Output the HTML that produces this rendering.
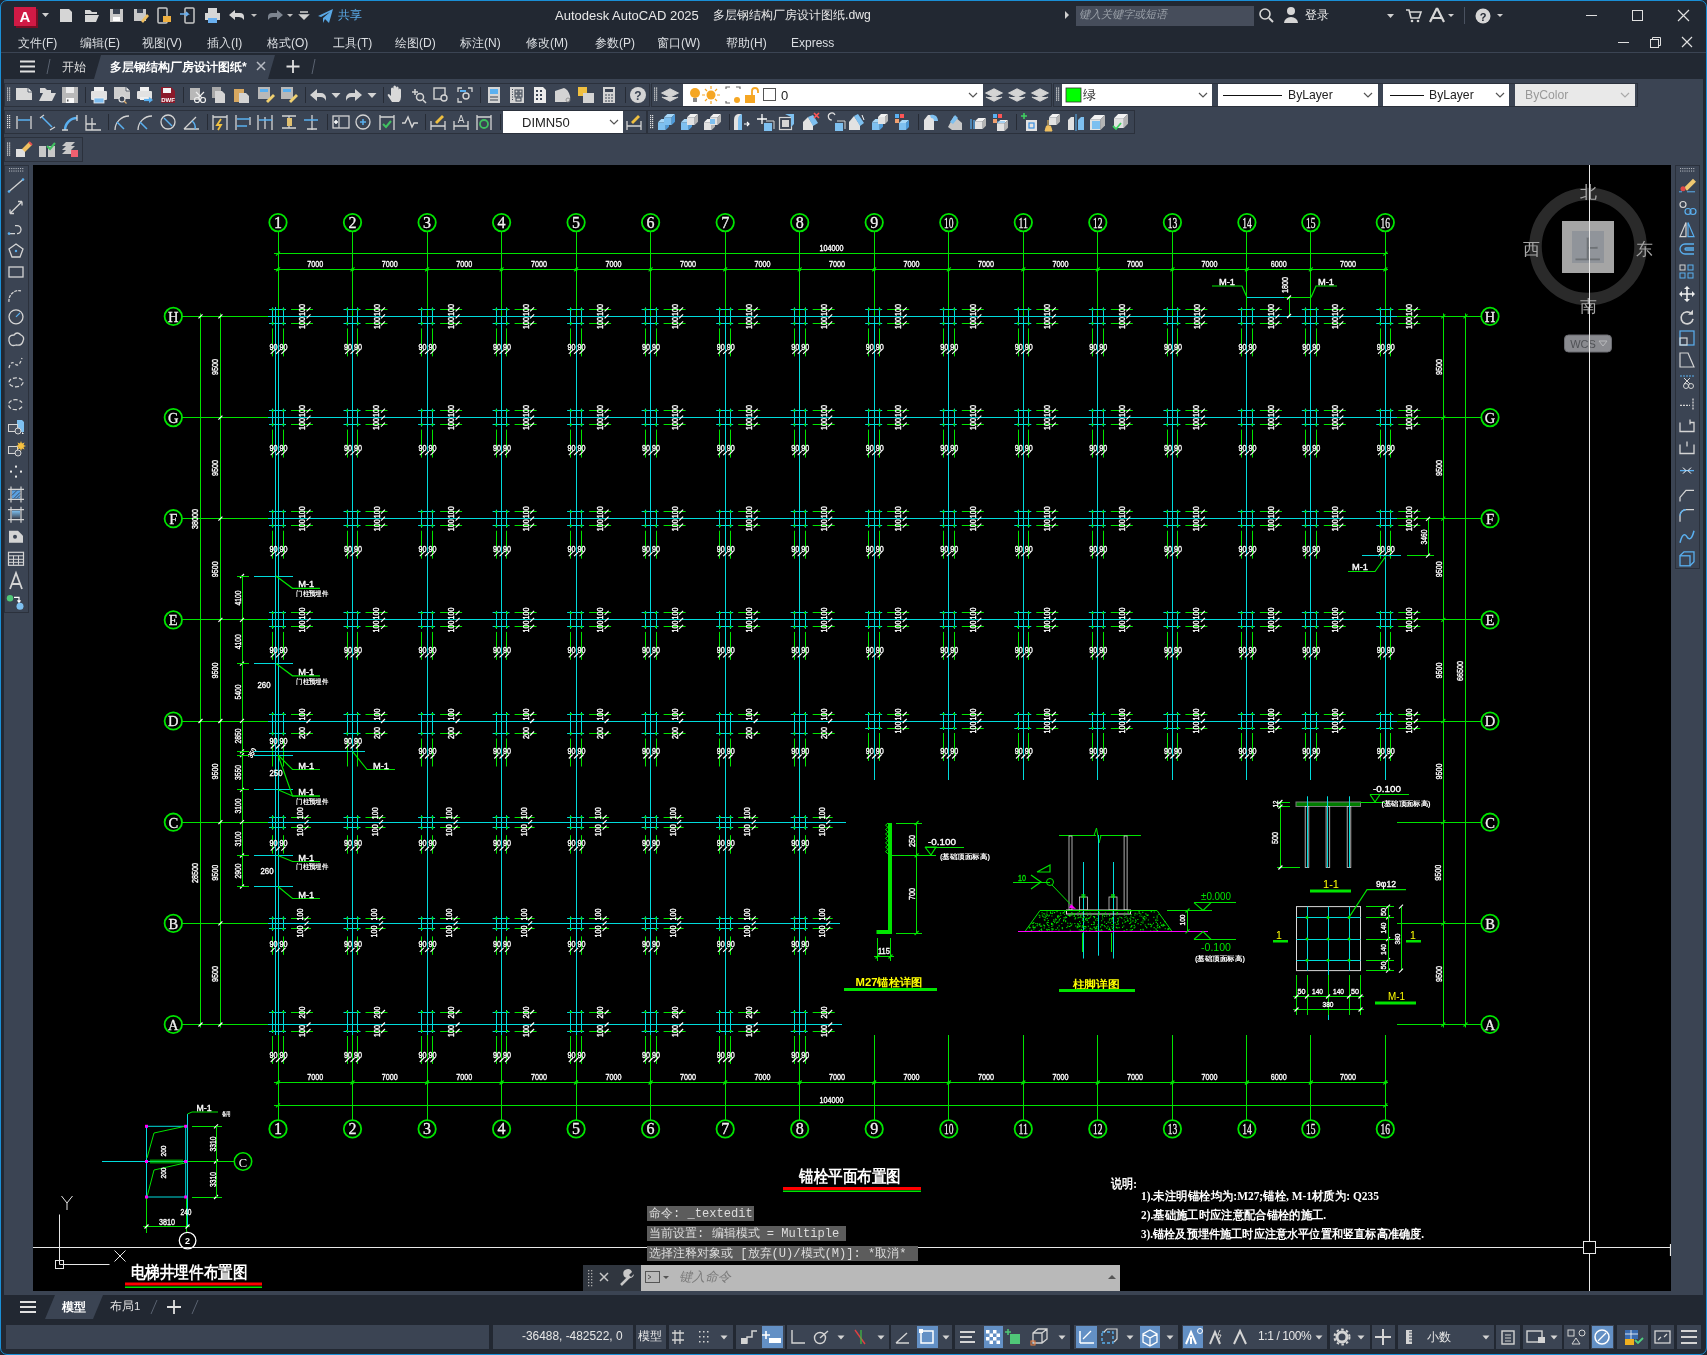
<!DOCTYPE html><html><head><meta charset="utf-8"><style>html,body{margin:0;padding:0;width:1707px;height:1355px;overflow:hidden;background:#222832;font-family:"Liberation Sans",sans-serif;-webkit-font-smoothing:antialiased;} svg{will-change:transform;}</style></head><body><div style="position:relative;width:1707px;height:1355px;overflow:hidden;"><div style="position:absolute;left:0px;top:0px;width:1707px;height:1355px;background:#222832;"></div><svg style="position:absolute;left:12px;top:5px" width="30" height="24" viewBox="0 0 30 24"><rect x="4" y="4" width="22" height="19" fill="#7a0d24"/><rect x="2" y="2" width="22" height="19" fill="#d11a45"/><text x="13" y="17" font-size="15" font-weight="bold" fill="#fff" text-anchor="middle" font-family="Liberation Sans">A</text></svg><svg style="position:absolute;left:40px;top:10px" width="12" height="10" viewBox="0 0 12 10"><path d="M2 3 L9 3 L5.5 7 Z" fill="#d0d0d0"/></svg><svg style="position:absolute;left:0px;top:0px" width="400" height="30" viewBox="0 0 400 30"><path d="M60 9 h9 l3 3 v10 h-12 z" fill="#d6d6d6"/><path d="M85 10 h5 l2 2 h5 v2 h-12 z M85 15 h14 l-3 7 h-11 z" fill="#d6d6d6"/><rect x="110" y="9" width="13" height="13" fill="#c8c8c8"/><rect x="113" y="9" width="7" height="5" fill="#3b4453"/><rect x="113" y="17" width="7" height="4" fill="#fff"/><rect x="134" y="9" width="12" height="12" fill="#c8c8c8"/><rect x="137" y="9" width="6" height="4" fill="#3b4453"/><path d="M141 21 l6 -7 l2 2 l-6 7 z" fill="#f0c060"/><rect x="158" y="8" width="9" height="15" rx="1" fill="none" stroke="#c8c8c8" stroke-width="1.5"/><rect x="163" y="16" width="8" height="6" fill="#f0b040"/><rect x="185" y="8" width="9" height="15" rx="1" fill="none" stroke="#c8c8c8" stroke-width="1.5"/><path d="M180 14 h8 l-2 -2 M188 14 l-2 2" stroke="#6ab0f0" stroke-width="1.5" fill="none"/><rect x="208" y="8" width="9" height="5" fill="#d6d6d6"/><rect x="205" y="13" width="15" height="7" fill="#d6d6d6"/><rect x="208" y="18" width="9" height="5" fill="#6ab0f0"/><path d="M229 15 l6 -5 v3 h5 a4 4 0 0 1 4 4 v3 a6 6 0 0 0 -5 -3 h-4 v3 z" fill="#d6d6d6"/><path d="M251 14 h6 l-3 3 z" fill="#c0c0c0"/><path d="M283 15 l-6 -5 v3 h-5 a4 4 0 0 0 -4 4 v3 a6 6 0 0 1 5 -3 h4 v3 z" fill="#7d8590"/><path d="M287 14 h6 l-3 3 z" fill="#c0c0c0"/><path d="M300 12 h8 M300 15 h8 l-4 4 z" stroke="#d0d0d0" stroke-width="1.5" fill="#d0d0d0"/><path d="M318 16 l15 -7 l-4 14 l-4 -4 l-2 4 v-5 l7 -6 l-9 5 z" fill="#5aa9e6"/></svg><div style="position:absolute;left:338px;top:9px;font-size:12px;line-height:1;color:#5aa9e6;white-space:nowrap;">共享</div><div style="position:absolute;left:555px;top:9px;font-size:13px;line-height:1;color:#e8e8e8;white-space:nowrap;">Autodesk AutoCAD 2025</div><div style="position:absolute;left:713px;top:9px;font-size:12.2px;line-height:1;color:#e8e8e8;white-space:nowrap;">多层钢结构厂房设计图纸.dwg</div><svg style="position:absolute;left:1062px;top:9px" width="10" height="12" viewBox="0 0 10 12"><path d="M3 2 L7 6 L3 10 Z" fill="#d0d0d0"/></svg><div style="position:absolute;left:1076px;top:6px;width:178px;height:20px;background:#464d5b;"></div><div style="position:absolute;left:1079px;top:9px;font-size:11px;line-height:1;color:#9aa0a8;white-space:nowrap;font-style:italic;">键入关键字或短语</div><svg style="position:absolute;left:0px;top:0px" width="1707" height="60" viewBox="0 0 1707 60"><circle cx="1265" cy="14" r="5" fill="none" stroke="#d6d6d6" stroke-width="1.6"/><path d="M1269 18 l4 4" stroke="#d6d6d6" stroke-width="2"/><circle cx="1291" cy="11" r="4" fill="#d6d6d6"/><path d="M1284 23 a7 6 0 0 1 14 0 z" fill="#d6d6d6"/><path d="M1387 14 h7 l-3.5 4 z" fill="#d0d0d0"/><path d="M1406 10 h3 l2 8 h8 l2 -6 h-11" stroke="#d6d6d6" stroke-width="1.6" fill="none"/><circle cx="1412" cy="21" r="1.3" fill="#d6d6d6"/><circle cx="1418" cy="21" r="1.3" fill="#d6d6d6"/><path d="M1437 8 l-7 14 M1437 8 l7 14 M1433 18 h9" stroke="#d6d6d6" stroke-width="2.2" fill="none"/><path d="M1448 14 h6 l-3 3 z" fill="#d0d0d0"/><rect x="1464" y="7" width="1" height="17" fill="#4a5260"/><circle cx="1483" cy="16" r="7.5" fill="#d6d6d6"/><text x="1483" y="20.5" font-size="11" font-weight="bold" text-anchor="middle" fill="#222832" font-family="Liberation Sans">?</text><path d="M1497 14 h6 l-3 3 z" fill="#d0d0d0"/><path d="M1586 15.5 h11" stroke="#e0e0e0" stroke-width="1"/><rect x="1632.5" y="10.5" width="10" height="10" fill="none" stroke="#e0e0e0" stroke-width="1"/><path d="M1678 10 l11 11 M1689 10 l-11 11" stroke="#e0e0e0" stroke-width="1.2"/><path d="M1618 42.5 h11" stroke="#e0e0e0" stroke-width="1"/><rect x="1650.5" y="39.5" width="8" height="8" fill="none" stroke="#e0e0e0" stroke-width="1"/><path d="M1652.5 39.5 v-2 h8 v8 h-2" fill="none" stroke="#e0e0e0" stroke-width="1"/><path d="M1682 37 l10 10 M1692 37 l-10 10" stroke="#e0e0e0" stroke-width="1.2"/></svg><div style="position:absolute;left:1305px;top:9px;font-size:12px;line-height:1;color:#e8e8e8;white-space:nowrap;">登录</div><div style="position:absolute;left:18px;top:36.5px;font-size:12px;line-height:1;color:#dcdfe3;white-space:nowrap;">文件(F)</div><div style="position:absolute;left:80px;top:36.5px;font-size:12px;line-height:1;color:#dcdfe3;white-space:nowrap;">编辑(E)</div><div style="position:absolute;left:142px;top:36.5px;font-size:12px;line-height:1;color:#dcdfe3;white-space:nowrap;">视图(V)</div><div style="position:absolute;left:207px;top:36.5px;font-size:12px;line-height:1;color:#dcdfe3;white-space:nowrap;">插入(I)</div><div style="position:absolute;left:267px;top:36.5px;font-size:12px;line-height:1;color:#dcdfe3;white-space:nowrap;">格式(O)</div><div style="position:absolute;left:333px;top:36.5px;font-size:12px;line-height:1;color:#dcdfe3;white-space:nowrap;">工具(T)</div><div style="position:absolute;left:395px;top:36.5px;font-size:12px;line-height:1;color:#dcdfe3;white-space:nowrap;">绘图(D)</div><div style="position:absolute;left:460px;top:36.5px;font-size:12px;line-height:1;color:#dcdfe3;white-space:nowrap;">标注(N)</div><div style="position:absolute;left:526px;top:36.5px;font-size:12px;line-height:1;color:#dcdfe3;white-space:nowrap;">修改(M)</div><div style="position:absolute;left:595px;top:36.5px;font-size:12px;line-height:1;color:#dcdfe3;white-space:nowrap;">参数(P)</div><div style="position:absolute;left:657px;top:36.5px;font-size:12px;line-height:1;color:#dcdfe3;white-space:nowrap;">窗口(W)</div><div style="position:absolute;left:726px;top:36.5px;font-size:12px;line-height:1;color:#dcdfe3;white-space:nowrap;">帮助(H)</div><div style="position:absolute;left:791px;top:36.5px;font-size:12px;line-height:1;color:#dcdfe3;white-space:nowrap;">Express</div><div style="position:absolute;left:1px;top:52px;width:1705px;height:1px;background:#3b4453;"></div><svg style="position:absolute;left:0px;top:53px" width="400" height="27" viewBox="0 0 400 27"><path d="M20 8.5 h15 M20 13.5 h15 M20 18.5 h15" stroke="#e0e0e0" stroke-width="1.8"/><path d="M50 6 l-3 15" stroke="#5a6270" stroke-width="1"/><path d="M101 2 L275 2 L268 26 L94 26 Z" fill="#3b4453"/><path d="M257 9 l8 8 M265 9 l-8 8" stroke="#b8bcc4" stroke-width="1.5"/><path d="M293 7 v13 M286.5 13.5 h13" stroke="#e0e0e0" stroke-width="1.8"/><path d="M315 6 l-3 15" stroke="#5a6270" stroke-width="1"/></svg><div style="position:absolute;left:62px;top:60.5px;font-size:12px;line-height:1;color:#e0e0e0;white-space:nowrap;">开始</div><div style="position:absolute;left:110px;top:60.5px;font-size:12px;line-height:1;color:#ffffff;white-space:nowrap;font-weight:bold;">多层钢结构厂房设计图纸*</div><div style="position:absolute;left:4px;top:79px;width:1699px;height:86px;background:#3b4453;"></div><div style="position:absolute;left:4px;top:165px;width:29px;height:1130px;background:#3b4453;"></div><div style="position:absolute;left:1671px;top:165px;width:32px;height:1130px;background:#3b4453;"></div><div style="position:absolute;left:4px;top:1291px;width:1699px;height:4px;background:#3b4453;"></div><div style="position:absolute;left:4px;top:83px;width:646px;height:24px;background:#3b4453;border:1px solid #2b313c;box-sizing:border-box;"></div><div style="position:absolute;left:651px;top:83px;width:401px;height:24px;background:#3b4453;border:1px solid #2b313c;box-sizing:border-box;"></div><div style="position:absolute;left:1053px;top:83px;width:585px;height:24px;background:#3b4453;border:1px solid #2b313c;box-sizing:border-box;"></div><div style="position:absolute;left:4px;top:110px;width:643px;height:24px;background:#3b4453;border:1px solid #2b313c;box-sizing:border-box;"></div><div style="position:absolute;left:647px;top:110px;width:488px;height:24px;background:#3b4453;border:1px solid #2b313c;box-sizing:border-box;"></div><div style="position:absolute;left:4px;top:137px;width:79px;height:25px;background:#3b4453;border:1px solid #2b313c;box-sizing:border-box;"></div><svg style="position:absolute;left:0px;top:0px" width="1707" height="170" viewBox="0 0 1707 170"><rect x="7" y="87.5" width="1.2" height="1.2" fill="#e0e0e0"/><rect x="9" y="87.5" width="1.2" height="1.2" fill="#e0e0e0"/><rect x="7" y="89.5" width="1.2" height="1.2" fill="#e0e0e0"/><rect x="9" y="89.5" width="1.2" height="1.2" fill="#e0e0e0"/><rect x="7" y="91.5" width="1.2" height="1.2" fill="#e0e0e0"/><rect x="9" y="91.5" width="1.2" height="1.2" fill="#e0e0e0"/><rect x="7" y="93.5" width="1.2" height="1.2" fill="#e0e0e0"/><rect x="9" y="93.5" width="1.2" height="1.2" fill="#e0e0e0"/><rect x="7" y="95.5" width="1.2" height="1.2" fill="#e0e0e0"/><rect x="9" y="95.5" width="1.2" height="1.2" fill="#e0e0e0"/><rect x="7" y="97.5" width="1.2" height="1.2" fill="#e0e0e0"/><rect x="9" y="97.5" width="1.2" height="1.2" fill="#e0e0e0"/><rect x="7" y="99.5" width="1.2" height="1.2" fill="#e0e0e0"/><rect x="9" y="99.5" width="1.2" height="1.2" fill="#e0e0e0"/><rect x="654" y="87.5" width="1.2" height="1.2" fill="#e0e0e0"/><rect x="656" y="87.5" width="1.2" height="1.2" fill="#e0e0e0"/><rect x="654" y="89.5" width="1.2" height="1.2" fill="#e0e0e0"/><rect x="656" y="89.5" width="1.2" height="1.2" fill="#e0e0e0"/><rect x="654" y="91.5" width="1.2" height="1.2" fill="#e0e0e0"/><rect x="656" y="91.5" width="1.2" height="1.2" fill="#e0e0e0"/><rect x="654" y="93.5" width="1.2" height="1.2" fill="#e0e0e0"/><rect x="656" y="93.5" width="1.2" height="1.2" fill="#e0e0e0"/><rect x="654" y="95.5" width="1.2" height="1.2" fill="#e0e0e0"/><rect x="656" y="95.5" width="1.2" height="1.2" fill="#e0e0e0"/><rect x="654" y="97.5" width="1.2" height="1.2" fill="#e0e0e0"/><rect x="656" y="97.5" width="1.2" height="1.2" fill="#e0e0e0"/><rect x="654" y="99.5" width="1.2" height="1.2" fill="#e0e0e0"/><rect x="656" y="99.5" width="1.2" height="1.2" fill="#e0e0e0"/><rect x="1056" y="87.5" width="1.2" height="1.2" fill="#e0e0e0"/><rect x="1058" y="87.5" width="1.2" height="1.2" fill="#e0e0e0"/><rect x="1056" y="89.5" width="1.2" height="1.2" fill="#e0e0e0"/><rect x="1058" y="89.5" width="1.2" height="1.2" fill="#e0e0e0"/><rect x="1056" y="91.5" width="1.2" height="1.2" fill="#e0e0e0"/><rect x="1058" y="91.5" width="1.2" height="1.2" fill="#e0e0e0"/><rect x="1056" y="93.5" width="1.2" height="1.2" fill="#e0e0e0"/><rect x="1058" y="93.5" width="1.2" height="1.2" fill="#e0e0e0"/><rect x="1056" y="95.5" width="1.2" height="1.2" fill="#e0e0e0"/><rect x="1058" y="95.5" width="1.2" height="1.2" fill="#e0e0e0"/><rect x="1056" y="97.5" width="1.2" height="1.2" fill="#e0e0e0"/><rect x="1058" y="97.5" width="1.2" height="1.2" fill="#e0e0e0"/><rect x="1056" y="99.5" width="1.2" height="1.2" fill="#e0e0e0"/><rect x="1058" y="99.5" width="1.2" height="1.2" fill="#e0e0e0"/><rect x="7" y="115" width="1.2" height="1.2" fill="#e0e0e0"/><rect x="9" y="115" width="1.2" height="1.2" fill="#e0e0e0"/><rect x="7" y="117" width="1.2" height="1.2" fill="#e0e0e0"/><rect x="9" y="117" width="1.2" height="1.2" fill="#e0e0e0"/><rect x="7" y="119" width="1.2" height="1.2" fill="#e0e0e0"/><rect x="9" y="119" width="1.2" height="1.2" fill="#e0e0e0"/><rect x="7" y="121" width="1.2" height="1.2" fill="#e0e0e0"/><rect x="9" y="121" width="1.2" height="1.2" fill="#e0e0e0"/><rect x="7" y="123" width="1.2" height="1.2" fill="#e0e0e0"/><rect x="9" y="123" width="1.2" height="1.2" fill="#e0e0e0"/><rect x="7" y="125" width="1.2" height="1.2" fill="#e0e0e0"/><rect x="9" y="125" width="1.2" height="1.2" fill="#e0e0e0"/><rect x="7" y="127" width="1.2" height="1.2" fill="#e0e0e0"/><rect x="9" y="127" width="1.2" height="1.2" fill="#e0e0e0"/><rect x="650" y="115" width="1.2" height="1.2" fill="#e0e0e0"/><rect x="652" y="115" width="1.2" height="1.2" fill="#e0e0e0"/><rect x="650" y="117" width="1.2" height="1.2" fill="#e0e0e0"/><rect x="652" y="117" width="1.2" height="1.2" fill="#e0e0e0"/><rect x="650" y="119" width="1.2" height="1.2" fill="#e0e0e0"/><rect x="652" y="119" width="1.2" height="1.2" fill="#e0e0e0"/><rect x="650" y="121" width="1.2" height="1.2" fill="#e0e0e0"/><rect x="652" y="121" width="1.2" height="1.2" fill="#e0e0e0"/><rect x="650" y="123" width="1.2" height="1.2" fill="#e0e0e0"/><rect x="652" y="123" width="1.2" height="1.2" fill="#e0e0e0"/><rect x="650" y="125" width="1.2" height="1.2" fill="#e0e0e0"/><rect x="652" y="125" width="1.2" height="1.2" fill="#e0e0e0"/><rect x="650" y="127" width="1.2" height="1.2" fill="#e0e0e0"/><rect x="652" y="127" width="1.2" height="1.2" fill="#e0e0e0"/><rect x="7" y="142.5" width="1.2" height="1.2" fill="#e0e0e0"/><rect x="9" y="142.5" width="1.2" height="1.2" fill="#e0e0e0"/><rect x="7" y="144.5" width="1.2" height="1.2" fill="#e0e0e0"/><rect x="9" y="144.5" width="1.2" height="1.2" fill="#e0e0e0"/><rect x="7" y="146.5" width="1.2" height="1.2" fill="#e0e0e0"/><rect x="9" y="146.5" width="1.2" height="1.2" fill="#e0e0e0"/><rect x="7" y="148.5" width="1.2" height="1.2" fill="#e0e0e0"/><rect x="9" y="148.5" width="1.2" height="1.2" fill="#e0e0e0"/><rect x="7" y="150.5" width="1.2" height="1.2" fill="#e0e0e0"/><rect x="9" y="150.5" width="1.2" height="1.2" fill="#e0e0e0"/><rect x="7" y="152.5" width="1.2" height="1.2" fill="#e0e0e0"/><rect x="9" y="152.5" width="1.2" height="1.2" fill="#e0e0e0"/><rect x="7" y="154.5" width="1.2" height="1.2" fill="#e0e0e0"/><rect x="9" y="154.5" width="1.2" height="1.2" fill="#e0e0e0"/><path d="M16 88 h12 l4 4 v8 h-16 z" fill="#d9d9d9"/><path d="M28 88 v4 h4" fill="#f4f4f4" stroke="#3b4453" stroke-width="0.8"/><path d="M40 88 h5 l2 2 h4 v3 h-11 z" fill="#d9d9d9"/><path d="M43 93 h13 l-4 8 h-13 z" fill="#d9d9d9"/><rect x="62" y="87" width="16" height="16" fill="#b9b9b9"/><rect x="66" y="87" width="8" height="6" fill="#ececec"/><rect x="66" y="98" width="8" height="5" fill="#fafafa"/><rect x="67" y="99.5" width="1.5" height="2" fill="#555"/><rect x="94" y="87" width="10" height="4" fill="#f0f0f0"/><rect x="91" y="91" width="16" height="9" rx="1" fill="#e2e2e2"/><rect x="94" y="98" width="10" height="5" fill="#7dbdf0" stroke="#f0f0f0" stroke-width="0.8"/><path d="M114 87 h12 l4 4 v8 h-16 z" fill="#cfcfcf"/><path d="M126 87 v4 h4" fill="#f4f4f4" stroke="#3b4453" stroke-width="0.8"/><circle cx="122" cy="99" r="3" fill="#3b4453" stroke="#e0e0e0" stroke-width="1.2"/><path d="M124 101 l2.5 2.5" stroke="#e0b070" stroke-width="1.3"/><rect x="140" y="87" width="9" height="4" fill="#f0f0f0"/><rect x="137" y="91" width="15" height="8" rx="1" fill="#e2e2e2"/><rect x="140" y="97" width="8" height="3" fill="#f0f0f0"/><path d="M144 100 h6" stroke="#5ab0f0" stroke-width="2.2"/><path d="M149 97 l4 3 l-4 3 z" fill="#5ab0f0"/><path d="M161 87 h10 l4 4 v12 h-14 z" fill="#8b1a2a"/><rect x="163" y="88" width="8" height="5" fill="#f4f4f4"/><text x="168" y="101.5" font-size="6" font-weight="bold" fill="#fff" text-anchor="middle" font-family="Liberation Sans">DWF</text><rect x="190" y="88" width="10" height="12" fill="#b8b8b8"/><circle cx="197" cy="100" r="2.5" fill="none" stroke="#eee" stroke-width="1.2"/><circle cx="203" cy="100" r="2.5" fill="none" stroke="#eee" stroke-width="1.2"/><path d="M196 92 l6 6 M204 92 l-6 6" stroke="#eee" stroke-width="1.2"/><rect x="212" y="87" width="9" height="11" fill="#a8a8a8"/><path d="M215 91 h7 l3 3 v9 h-10 z" fill="#d4d4d4"/><rect x="234" y="89" width="10" height="13" fill="#d8a860"/><path d="M239 93 h7 l3 3 v7 h-10 z" fill="#d4d4d4"/><rect x="258" y="87" width="12" height="12" fill="#b8b8b8"/><rect x="260" y="89" width="8" height="3" fill="#5ab0f0"/><path d="M266 101 l7 -7 l2 2 l-7 7 z" fill="#f0d070"/><rect x="281" y="87" width="12" height="12" fill="#b8b8b8"/><rect x="283" y="89" width="8" height="3" fill="#5ab0f0"/><path d="M289 101 l7 -7 l2 2 l-7 7 z" fill="#f0d070"/><path d="M310 95 l7 -6 v4 h4 a5 5 0 0 1 5 5 v3 a6 6 0 0 0 -6 -4 h-3 v4 z" fill="#d4d4d4"/><path d="M362 95 l-7 -6 v4 h-4 a5 5 0 0 0 -5 5 v3 a6 6 0 0 1 6 -4 h3 v4 z" fill="#d4d4d4"/><path d="M392 102 l-4 -6 q-1 -2 1 -2 l2 2 v-7 q0 -1.5 1.2 -1.5 q1.2 0 1.2 1.5 v5 v-7 q0 -1.5 1.3 -1.5 q1.3 0 1.3 1.5 v7 v-6 q0 -1.5 1.3 -1.5 q1.3 0 1.3 1.5 v6 v-4 q0 -1.5 1.2 -1.5 q1.2 0 1.2 1.5 v7 q0 3 -2 5 z" fill="#d9d9d9"/><circle cx="420" cy="97" r="3.5" fill="none" stroke="#d4d4d4" stroke-width="1.5"/><path d="M423 100 l3 3 M412 92 h6 M415 89 v6" stroke="#d4d4d4" stroke-width="1.5"/><rect x="434" y="88" width="11" height="11" fill="none" stroke="#d4d4d4" stroke-width="1.4"/><circle cx="444" cy="98" r="3" fill="#3b4453" stroke="#d4d4d4" stroke-width="1.4"/><path d="M458 92 v-4 h4 M468 88 h4 v4 M458 98 v4 h4" stroke="#d4d4d4" stroke-width="1.3" fill="none"/><circle cx="466" cy="96" r="3" fill="none" stroke="#d4d4d4" stroke-width="1.4"/><path d="M460 91 h6" stroke="#5ab0f0" stroke-width="2"/><rect x="488" y="87" width="12" height="16" fill="#d4d4d4"/><rect x="490" y="89" width="8" height="5" fill="#5ab0f0"/><path d="M490 97 h8 M490 100 h8" stroke="#3b4453" stroke-width="1"/><rect x="510" y="87" width="14" height="16" fill="#d4d4d4"/><rect x="515" y="90" width="3" height="3" fill="none" stroke="#3b4453"/><rect x="519" y="90" width="3" height="3" fill="none" stroke="#3b4453"/><rect x="515" y="94" width="3" height="3" fill="none" stroke="#3b4453"/><rect x="519" y="94" width="3" height="3" fill="none" stroke="#3b4453"/><rect x="516" y="98" width="5" height="3" fill="none" stroke="#3b4453"/><path d="M512.5 89 v12" stroke="#3b4453" stroke-dasharray="1 1.5"/><path d="M534 87 h9 l3 3 v13 h-12 z" fill="#ececec"/><path d="M536 91 h2 M540 91 h2 M536 95 h2 M540 95 h2 M536 99 h2 M540 99 h2" stroke="#3b4453" stroke-width="2"/><path d="M555 91 l9 -3 q4 1 6 8 q1 4 -2 6 h-13 z" fill="#d4d4d4"/><circle cx="568" cy="100" r="2" fill="none" stroke="#888" stroke-width="0.8"/><rect x="578" y="87" width="9" height="9" fill="#f0c040"/><rect x="583" y="93" width="11" height="10" fill="#d4d4d4"/><rect x="603" y="87" width="12" height="16" fill="#d4d4d4"/><rect x="605" y="89" width="8" height="3" fill="#3b4453"/><path d="M605 95 h8 M605 98 h8 M605 101 h8" stroke="#3b4453" stroke-width="1" stroke-dasharray="2 1"/><circle cx="638" cy="95" r="8" fill="#d4d4d4"/><text x="638" y="99.5" font-size="12" font-weight="bold" text-anchor="middle" fill="#3b4453" font-family="Liberation Sans">?</text><path d="M662 93 l8 -4 l8 4 l-8 4 z M662 97 l8 4 l8 -4" fill="#d4d4d4" stroke="#d4d4d4" stroke-width="1.2"/><path d="M986 93 l8 -4 l8 4 l-8 4 z M986 97 l8 4 l8 -4" fill="#d4d4d4" stroke="#d4d4d4" stroke-width="1.2"/><path d="M1009 93 l8 -4 l8 4 l-8 4 z M1009 97 l8 4 l8 -4" fill="#d4d4d4" stroke="#d4d4d4" stroke-width="1.2"/><path d="M1032 93 l8 -4 l8 4 l-8 4 z M1032 97 l8 4 l8 -4" fill="#d4d4d4" stroke="#d4d4d4" stroke-width="1.2"/><path d="M331.5 93 h9 l-4.5 5 z" fill="#d4d4d4"/><path d="M367.5 93 h9 l-4.5 5 z" fill="#d4d4d4"/><rect x="85" y="87" width="1" height="16" fill="#262b35"/><rect x="183" y="87" width="1" height="16" fill="#262b35"/><rect x="305" y="87" width="1" height="16" fill="#262b35"/><rect x="383" y="87" width="1" height="16" fill="#262b35"/><rect x="480" y="87" width="1" height="16" fill="#262b35"/><rect x="625" y="87" width="1" height="16" fill="#262b35"/><path d="M17 116 v13 M31 116 v13" stroke="#d4d4d4" stroke-width="1.3"/><path d="M18 120 h12" stroke="#5ab0f0" stroke-width="1.5"/><path d="M40 118 l4 -3 M50 130 l5 -3" stroke="#d4d4d4" stroke-width="1.3"/><path d="M42 117 l10 10" stroke="#5ab0f0" stroke-width="1.5"/><path d="M65 130 a12 12 0 0 1 12 -12" stroke="#5ab0f0" stroke-width="2.5" fill="none"/><path d="M62 130 h6 M77 115 v6" stroke="#d4d4d4" stroke-width="1.3"/><path d="M86 115 v15 h15 M86 124 h10 M92 118 v12" stroke="#d4d4d4" stroke-width="1.3" fill="none"/><path d="M115 130 a14 14 0 0 1 14 -14" stroke="#d4d4d4" stroke-width="1.3" fill="none"/><path d="M117 122 l7 7" stroke="#5ab0f0" stroke-width="1.5"/><path d="M138 130 a14 14 0 0 1 14 -14" stroke="#d4d4d4" stroke-width="1.3" fill="none"/><path d="M140 122 l7 7" stroke="#5ab0f0" stroke-width="1.5"/><circle cx="168" cy="122" r="7" fill="none" stroke="#d4d4d4" stroke-width="1.3"/><path d="M164 118 l8 8" stroke="#5ab0f0" stroke-width="1.5"/><path d="M184 129 h15 M184 129 l12 -12" stroke="#d4d4d4" stroke-width="1.3" fill="none"/><path d="M192 121 a8 8 0 0 1 3 8" stroke="#5ab0f0" stroke-width="1.5" fill="none"/><path d="M213 115 v15 M227 115 v15 M213 117 h14" stroke="#d4d4d4" stroke-width="1.3"/><path d="M221 119 l-4 6 h4 l-3 5" stroke="#f0c040" stroke-width="1.8" fill="none"/><path d="M236 115 v15 M250 117 v8" stroke="#d4d4d4" stroke-width="1.3"/><path d="M237 119 h13 M237 126 h10" stroke="#5ab0f0" stroke-width="1.5"/><path d="M258 115 v15 M265 117 v12 M272 115 v15" stroke="#d4d4d4" stroke-width="1.3"/><path d="M259 120 h13" stroke="#5ab0f0" stroke-width="1.5"/><path d="M282 116 h14 M282 128 h14 M289 116 v12" stroke="#d4d4d4" stroke-width="1.3"/><rect x="287" y="118" width="5" height="8" fill="#e0c070"/><path d="M312 115 v15 M307 129 h10" stroke="#d4d4d4" stroke-width="1.3"/><path d="M304 120 h14" stroke="#5ab0f0" stroke-width="1.5"/><rect x="333" y="116" width="16" height="12" fill="none" stroke="#d4d4d4" stroke-width="1.3"/><path d="M339 117 v11" stroke="#d4d4d4" stroke-width="1.2"/><path d="M334 122 h4 M336 120 v4" stroke="#fff" stroke-width="1.5"/><circle cx="363" cy="122" r="7" fill="none" stroke="#d4d4d4" stroke-width="1.3"/><path d="M360 122 h6 M363 119 v6" stroke="#5ab0f0" stroke-width="1.5"/><path d="M380 115 v15 M394 115 v15 M380 117 h14" stroke="#d4d4d4" stroke-width="1.3"/><path d="M383 124 l3 3 l5 -6" stroke="#40c060" stroke-width="2" fill="none"/><path d="M402 123 h3 l3 -6 l4 10 l2 -4 h4" stroke="#d4d4d4" stroke-width="1.5" fill="none"/><path d="M431 121 v9 M445 121 v9 M431 126 h14" stroke="#d4d4d4" stroke-width="1.3"/><path d="M435 122 l7 -7 l2 2 l-7 7 z" fill="#f0c040"/><path d="M454 121 v9 M468 121 v9 M454 126 h14" stroke="#d4d4d4" stroke-width="1.3"/><text x="461" y="123" font-size="10" text-anchor="middle" fill="#d4d4d4" font-family="Liberation Sans">A</text><path d="M477 115 v15 M491 115 v15 M477 117 h14" stroke="#d4d4d4" stroke-width="1.3"/><circle cx="484" cy="124" r="4" fill="none" stroke="#40c060" stroke-width="1.8"/><path d="M627 121 v9 M641 121 v9 M627 126 h14" stroke="#d4d4d4" stroke-width="1.3"/><path d="M631 122 l7 -7 l2 2 l-7 7 z" fill="#f0c040"/><rect x="108" y="114" width="1" height="16" fill="#262b35"/><rect x="207" y="114" width="1" height="16" fill="#262b35"/><rect x="327" y="114" width="1" height="16" fill="#262b35"/><rect x="425" y="114" width="1" height="16" fill="#262b35"/><rect x="500" y="114" width="1" height="16" fill="#262b35"/><rect x="729" y="114" width="1" height="16" fill="#262b35"/><rect x="918" y="114" width="1" height="16" fill="#262b35"/><rect x="1016" y="114" width="1" height="16" fill="#262b35"/><rect x="658.0" y="122.3" width="7.7" height="7.7" fill="#7ec0f0"/><path d="M658.0 122.3 L661.3 119.0 H669.0 L665.7 122.3 Z" fill="#a8d8f8"/><path d="M665.7 122.3 L669.0 119.0 V126.7 L665.7 130.0 Z" fill="#4e9ad8"/><rect x="664.0" y="117.3" width="7.7" height="7.7" fill="#7ec0f0"/><path d="M664.0 117.3 L667.3 114.0 H675.0 L671.7 117.3 Z" fill="#a8d8f8"/><path d="M671.7 117.3 L675.0 114.0 V121.7 L671.7 125.0 Z" fill="#4e9ad8"/><rect x="681.0" y="122.3" width="7.7" height="7.7" fill="#7ec0f0"/><path d="M681.0 122.3 L684.3 119.0 H692.0 L688.7 122.3 Z" fill="#a8d8f8"/><path d="M688.7 122.3 L692.0 119.0 V126.7 L688.7 130.0 Z" fill="#4e9ad8"/><rect x="687.0" y="117.3" width="7.7" height="7.7" fill="#e2e2e2"/><path d="M687.0 117.3 L690.3 114.0 H698.0 L694.7 117.3 Z" fill="#f2f2f2"/><path d="M694.7 117.3 L698.0 114.0 V121.7 L694.7 125.0 Z" fill="#b4b4b4"/><rect x="704.0" y="122.3" width="7.7" height="7.7" fill="#e2e2e2"/><path d="M704.0 122.3 L707.3 119.0 H715.0 L711.7 122.3 Z" fill="#f2f2f2"/><path d="M711.7 122.3 L715.0 119.0 V126.7 L711.7 130.0 Z" fill="#b4b4b4"/><rect x="710.0" y="117.3" width="7.7" height="7.7" fill="#e2e2e2"/><path d="M710.0 117.3 L713.3 114.0 H721.0 L717.7 117.3 Z" fill="#f2f2f2"/><path d="M717.7 117.3 L721.0 114.0 V121.7 L717.7 125.0 Z" fill="#b4b4b4"/><rect x="710" y="119" width="5" height="5" fill="#7ec0f0"/><path d="M734 130 v-10 q0 -5 4 -6 h3 v16 z" fill="#e2e2e2"/><path d="M738 130 v-10 q0 -5 4 -6 v16 z" fill="#7ec0f0"/><path d="M744 124 h5 M747 122 l2 2 l-2 2" stroke="#fff" stroke-width="1.2" fill="none"/><path d="M762 114 v10 M757 119 h10" stroke="#fff" stroke-width="1.3"/><rect x="764" y="123" width="8" height="8" fill="#7ec0f0"/><path d="M766 121 h8 v8" stroke="#d4d4d4" stroke-width="1" fill="none"/><rect x="779.5" y="117.5" width="12" height="12" fill="none" stroke="#d4d4d4" stroke-width="1.2"/><rect x="782" y="120" width="7" height="7" fill="#d4d4d4"/><path d="M785 114 h9 v10 l-3 3 v-10 z" fill="#7ec0f0"/><path d="M803 130 v-8 l5 -5 l5 8 v5 z" fill="#e2e2e2"/><path d="M808 117 l5 -2 l5 8 l-5 3 z" fill="#7ec0f0"/><path d="M814 113 l5 5 M819 113 l-5 5" stroke="#ff5555" stroke-width="1.6"/><path d="M832 120 a3.5 3.5 0 1 1 3 -5" stroke="#e0e0e0" stroke-width="1.2" fill="none"/><rect x="835" y="123" width="8" height="8" fill="#7ec0f0"/><path d="M837 121 h8 v8" stroke="#d4d4d4" fill="none"/><path d="M849 130 v-8 l5 -6 l6 9 v5 z" fill="#e2e2e2"/><path d="M854 116 l4 -2 l6 9 l-4 3 z" fill="#7ec0f0"/><path d="M864 120 l-2 -5" stroke="#fff" stroke-width="1"/><rect x="872.0" y="122.3" width="7.7" height="7.7" fill="#7ec0f0"/><path d="M872.0 122.3 L875.3 119.0 H883.0 L879.7 122.3 Z" fill="#a8d8f8"/><path d="M879.7 122.3 L883.0 119.0 V126.7 L879.7 130.0 Z" fill="#4e9ad8"/><rect x="878.0" y="117.0" width="7.0" height="7.0" fill="#e2e2e2"/><path d="M878.0 117.0 L881.0 114.0 H888.0 L885.0 117.0 Z" fill="#f2f2f2"/><path d="M885.0 117.0 L888.0 114.0 V121.0 L885.0 124.0 Z" fill="#b4b4b4"/><rect x="895" y="114" width="4" height="4" fill="#5ab0f0"/><rect x="900" y="114" width="4" height="4" fill="#ff5555"/><rect x="895" y="119" width="4" height="4" fill="#f0a070"/><rect x="899.0" y="123.0" width="7.0" height="7.0" fill="#7ec0f0"/><path d="M899.0 123.0 L902.0 120.0 H909.0 L906.0 123.0 Z" fill="#a8d8f8"/><path d="M906.0 123.0 L909.0 120.0 V127.0 L906.0 130.0 Z" fill="#4e9ad8"/><path d="M924 130 v-10 l4 -5 h6 v15 z" fill="#e2e2e2"/><path d="M930 115 a6 6 0 0 1 8 6 l-4 0 a3 3 0 0 0 -3 -3 z" fill="#7ec0f0"/><path d="M948 127 l6 -11 l8 7 v7 h-10 z" fill="#c8c8c8"/><path d="M950 122 l5 -7 l3 3 l-5 6 z" fill="#7ec0f0"/><path d="M971 129 v-10 M974 129 v-9" stroke="#5ab0f0" stroke-width="1.2"/><rect x="975.0" y="121.3" width="7.7" height="7.7" fill="#e2e2e2"/><path d="M975.0 121.3 L978.3 118.0 H986.0 L982.7 121.3 Z" fill="#f2f2f2"/><path d="M982.7 121.3 L986.0 118.0 V125.7 L982.7 129.0 Z" fill="#b4b4b4"/><rect x="993" y="114" width="4" height="4" fill="#5ab0f0"/><rect x="998" y="114" width="4" height="4" fill="#ff5555"/><rect x="993" y="119" width="4" height="4" fill="#f0a070"/><rect x="997.0" y="123.3" width="7.7" height="7.7" fill="#e2e2e2"/><path d="M997.0 123.3 L1000.3 120.0 H1008.0 L1004.7 123.3 Z" fill="#f2f2f2"/><path d="M1004.7 123.3 L1008.0 120.0 V127.7 L1004.7 131.0 Z" fill="#b4b4b4"/><path d="M997 122 h8" stroke="#5ab0f0" stroke-width="1"/><path d="M1024 113 v6 M1021 116 h6" stroke="#40d060" stroke-width="1.6"/><rect x="1026" y="120" width="11" height="11" fill="#e2e2e2"/><rect x="1029" y="123" width="5" height="5" fill="none" stroke="#3a90e0" stroke-width="1.2"/><path d="M1045 131 l1.5 -5 h4 l1.5 5 z M1048 126 v-6" fill="#f0c060" stroke="#f0c060" stroke-width="1"/><rect x="1049.0" y="117.3" width="7.7" height="7.7" fill="#e2e2e2"/><path d="M1049.0 117.3 L1052.3 114.0 H1060.0 L1056.7 117.3 Z" fill="#f2f2f2"/><path d="M1056.7 117.3 L1060.0 114.0 V121.7 L1056.7 125.0 Z" fill="#b4b4b4"/><path d="M1068 130 v-10 l3 -3 h3 v13 z" fill="#e2e2e2"/><path d="M1076 114 v17" stroke="#5ab0f0" stroke-width="1"/><path d="M1078 130 v-10 l3 -3 h3 v13 z" fill="#7ec0f0"/><rect x="1090.0" y="119.5" width="10.5" height="10.5" fill="#e2e2e2"/><path d="M1090.0 119.5 L1094.5 115.0 H1105.0 L1100.5 119.5 Z" fill="#f2f2f2"/><path d="M1100.5 119.5 L1105.0 115.0 V125.5 L1100.5 130.0 Z" fill="#b4b4b4"/><rect x="1092" y="121" width="8" height="8" fill="#7ec0f0"/><rect x="1114.0" y="118.2" width="9.8" height="9.8" fill="#e2e2e2"/><path d="M1114.0 118.2 L1118.2 114.0 H1128.0 L1123.8 118.2 Z" fill="#f2f2f2"/><path d="M1123.8 118.2 L1128.0 114.0 V123.8 L1123.8 128.0 Z" fill="#b4b4b4"/><path d="M1113 126 l3 3 l5 -6" stroke="#40d060" stroke-width="1.8" fill="none"/><rect x="16" y="149" width="9" height="8" fill="#e0e0e0"/><path d="M22 149 l7 -7 l3 3 l-7 7 z" fill="#f0c060"/><path d="M29 142 l3 3" stroke="#e05050" stroke-width="2"/><path d="M39 146 h7 v11 h-7 z M48 146 h7 v11 h-7 z" fill="#c8c8c8"/><path d="M47 146 l3 3 l5 -6" stroke="#40c060" stroke-width="2" fill="none"/><path d="M62 146 l4 -4 h9 l-4 4 z M62 150 l4 -4 h9 l-4 4 z M62 154 l4 -4 h9 l-4 4 z" fill="#c8c8c8"/><rect x="71" y="150" width="7" height="7" fill="#f06070"/></svg><div style="position:absolute;left:683px;top:84px;width:300px;height:22px;background:#fff;box-sizing:border-box;"></div><div style="position:absolute;left:1062px;top:84px;width:150px;height:22px;background:#fff;box-sizing:border-box;"></div><div style="position:absolute;left:1218px;top:84px;width:160px;height:22px;background:#fff;box-sizing:border-box;"></div><div style="position:absolute;left:1383px;top:84px;width:126px;height:22px;background:#fff;box-sizing:border-box;"></div><div style="position:absolute;left:1515px;top:84px;width:120px;height:22px;background:#e9e9e9;"></div><div style="position:absolute;left:503px;top:111px;width:120px;height:22px;background:#fff;box-sizing:border-box;"></div><svg style="position:absolute;left:0px;top:0px" width="1707" height="170" viewBox="0 0 1707 170"><path d="M969 93 l4 4 l4 -4" stroke="#555" stroke-width="1.2" fill="none"/><path d="M1199 93 l4 4 l4 -4" stroke="#555" stroke-width="1.2" fill="none"/><path d="M1364 93 l4 4 l4 -4" stroke="#555" stroke-width="1.2" fill="none"/><path d="M1496 93 l4 4 l4 -4" stroke="#555" stroke-width="1.2" fill="none"/><path d="M1621 93 l4 4 l4 -4" stroke="#aaa" stroke-width="1.2" fill="none"/><path d="M610 120 l4 4 l4 -4" stroke="#555" stroke-width="1.2" fill="none"/><circle cx="695" cy="93" r="5" fill="#f5a623"/><rect x="693" y="98" width="4" height="4" fill="#888"/><circle cx="711" cy="95" r="4.5" fill="#f5a623"/><path d="M711 86 v3 M711 101 v3 M702 95 h3 M717 95 h3 M705 89 l2 2 M715 99 l2 2 M717 89 l-2 2 M705 101 l2 -2" stroke="#f5a623" stroke-width="1.2"/><path d="M726 89 v-2 h4 M736 87 h4 v2 M726 101 v2 h4" stroke="#666" stroke-width="1.2" fill="none"/><circle cx="737" cy="100" r="3" fill="#f5a623"/><rect x="745" y="95" width="10" height="8" fill="#f5a623"/><path d="M752 95 v-4 a3 3 0 0 1 6 0 v2" stroke="#f5a623" stroke-width="1.8" fill="none"/><rect x="763.5" y="88.5" width="12" height="12" fill="#fff" stroke="#555" stroke-width="1"/><rect x="1066" y="88" width="15" height="14" fill="#00ff00" stroke="#333" stroke-width="0.8"/><path d="M1223 95.5 h59" stroke="#111" stroke-width="1"/><path d="M1390 95.5 h34" stroke="#111" stroke-width="1"/></svg><div style="position:absolute;left:781px;top:89px;font-size:13px;line-height:1;color:#222;white-space:nowrap;">0</div><div style="position:absolute;left:1083px;top:88px;font-size:13px;line-height:1;color:#222;white-space:nowrap;">绿</div><div style="position:absolute;left:1288px;top:89px;font-size:12.2px;line-height:1;color:#222;white-space:nowrap;">ByLayer</div><div style="position:absolute;left:1429px;top:89px;font-size:12.2px;line-height:1;color:#222;white-space:nowrap;">ByLayer</div><div style="position:absolute;left:1525px;top:88.5px;font-size:12.2px;line-height:1;color:#999;white-space:nowrap;">ByColor</div><div style="position:absolute;left:522px;top:116px;font-size:13px;line-height:1;color:#222;white-space:nowrap;">DIMN50</div><div style="position:absolute;left:4px;top:165px;width:25px;height:448px;background:#3b4453;border:1px solid #2b313c;box-sizing:border-box;"></div><div style="position:absolute;left:1675px;top:165px;width:25px;height:404px;background:#3b4453;border:1px solid #2b313c;box-sizing:border-box;"></div><svg style="position:absolute;left:0px;top:0px" width="1707" height="620" viewBox="0 0 1707 620"><rect x="9.0" y="168" width="1.1" height="1.1" fill="#aeb3ba"/><rect x="9.0" y="170.5" width="1.1" height="1.1" fill="#aeb3ba"/><rect x="1680.0" y="168" width="1.1" height="1.1" fill="#aeb3ba"/><rect x="1680.0" y="170.5" width="1.1" height="1.1" fill="#aeb3ba"/><rect x="11.2" y="168" width="1.1" height="1.1" fill="#aeb3ba"/><rect x="11.2" y="170.5" width="1.1" height="1.1" fill="#aeb3ba"/><rect x="1682.2" y="168" width="1.1" height="1.1" fill="#aeb3ba"/><rect x="1682.2" y="170.5" width="1.1" height="1.1" fill="#aeb3ba"/><rect x="13.4" y="168" width="1.1" height="1.1" fill="#aeb3ba"/><rect x="13.4" y="170.5" width="1.1" height="1.1" fill="#aeb3ba"/><rect x="1684.4" y="168" width="1.1" height="1.1" fill="#aeb3ba"/><rect x="1684.4" y="170.5" width="1.1" height="1.1" fill="#aeb3ba"/><rect x="15.6" y="168" width="1.1" height="1.1" fill="#aeb3ba"/><rect x="15.6" y="170.5" width="1.1" height="1.1" fill="#aeb3ba"/><rect x="1686.6" y="168" width="1.1" height="1.1" fill="#aeb3ba"/><rect x="1686.6" y="170.5" width="1.1" height="1.1" fill="#aeb3ba"/><rect x="17.8" y="168" width="1.1" height="1.1" fill="#aeb3ba"/><rect x="17.8" y="170.5" width="1.1" height="1.1" fill="#aeb3ba"/><rect x="1688.8" y="168" width="1.1" height="1.1" fill="#aeb3ba"/><rect x="1688.8" y="170.5" width="1.1" height="1.1" fill="#aeb3ba"/><rect x="20.0" y="168" width="1.1" height="1.1" fill="#aeb3ba"/><rect x="20.0" y="170.5" width="1.1" height="1.1" fill="#aeb3ba"/><rect x="1691.0" y="168" width="1.1" height="1.1" fill="#aeb3ba"/><rect x="1691.0" y="170.5" width="1.1" height="1.1" fill="#aeb3ba"/><rect x="22.2" y="168" width="1.1" height="1.1" fill="#aeb3ba"/><rect x="22.2" y="170.5" width="1.1" height="1.1" fill="#aeb3ba"/><rect x="1693.2" y="168" width="1.1" height="1.1" fill="#aeb3ba"/><rect x="1693.2" y="170.5" width="1.1" height="1.1" fill="#aeb3ba"/><path d="M9 191.5 l14 -12" stroke="#d4d4d4" stroke-width="1.3"/><circle cx="9" cy="191.5" r="1.3" fill="#5ab0f0"/><circle cx="23" cy="179.5" r="1.3" fill="#5ab0f0"/><path d="M10 213.5 l12 -12 M10 213.5 h4 M10 213.5 v-4 M22 201.5 h-4 M22 201.5 v4" stroke="#d4d4d4" stroke-width="1.3" fill="none"/><path d="M9 233.6 h6 M17 233.6 a4 4 0 0 0 0 -8 h-2" stroke="#d4d4d4" stroke-width="1.3" fill="none"/><circle cx="9" cy="233.6" r="1.3" fill="#5ab0f0"/><path d="M16 244 l7 5 l-3 8 h-8 l-3 -8 z" stroke="#d4d4d4" stroke-width="1.3" fill="none"/><circle cx="16" cy="251" r="1.2" fill="#5ab0f0"/><rect x="9" y="267" width="14" height="10" stroke="#d4d4d4" stroke-width="1.3" fill="none"/><path d="M9 301.8 a10 10 0 0 1 12 -11" stroke="#d4d4d4" stroke-width="1.3" fill="none" stroke-dasharray="3 1"/><circle cx="16" cy="316.8" r="7" stroke="#d4d4d4" stroke-width="1.3" fill="none"/><path d="M16 316.8 l4 -4" stroke="#5ab0f0" stroke-width="1.2"/><path d="M9 341 q-1 -6 5 -6 q3 -4 7 0 q4 2 2 6 q-1 5 -7 4 q-6 2 -7 -4" stroke="#d4d4d4" stroke-width="1.3" fill="none"/><path d="M9 368 q2 -8 6 -4 q4 4 7 -6" stroke="#d4d4d4" stroke-width="1.3" fill="none" stroke-dasharray="3 2"/><ellipse cx="16" cy="382.3" rx="7" ry="4.5" stroke="#d4d4d4" stroke-width="1.3" fill="none" stroke-dasharray="4 2"/><path d="M22 406.7 a7 5 0 1 1 0 -4" stroke="#d4d4d4" stroke-width="1.3" fill="none" stroke-dasharray="4 2"/><path d="M17 420 h5 l2 2 v10 h-7 z" fill="#7ec0f0"/><rect x="8.5" y="424.5" width="9" height="7" fill="#4a5260" stroke="#d4d4d4" stroke-width="1"/><circle cx="18" cy="431" r="3" fill="#4a5260" stroke="#d4d4d4" stroke-width="1"/><path d="M22 432 l2 2 h-2 z" fill="#fff"/><rect x="8.5" y="446.5" width="9" height="7" fill="#4a5260" stroke="#d4d4d4" stroke-width="1"/><circle cx="18" cy="453" r="3" fill="#4a5260" stroke="#d4d4d4" stroke-width="1"/><path d="M21 441 l1 2.5 l2.5 -1 l-1 2.5 l2.5 1 l-2.5 1 l1 2.5 l-2.5 -1 l-1 2.5 l-1 -2.5 l-2.5 1 l1 -2.5 l-2.5 -1 l2.5 -1 l-1 -2.5 l2.5 1 z" fill="#f5c040"/><rect x="15" y="465.6" width="2" height="2" fill="#e8e8e8"/><rect x="10" y="470.6" width="2" height="2" fill="#e8e8e8"/><rect x="20" y="470.6" width="2" height="2" fill="#e8e8e8"/><rect x="15" y="475.6" width="2" height="2" fill="#e8e8e8"/><path d="M8 489.4 h16 M8 499.4 h16 M11 486.4 v16 M21 486.4 v16" stroke="#d4d4d4" stroke-width="1.2"/><rect x="12" y="490.4" width="8" height="8" fill="#5aa0e0"/><path d="M12 495.4 l5 -5 M14 498.4 l6 -6 M17 498.4 l3 -3" stroke="#3b4453" stroke-width="0.9"/><defs><linearGradient id="gq" x1="0" y1="0" x2="0" y2="1"><stop offset="0" stop-color="#7ec0f0"/><stop offset="1" stop-color="#3b4453"/></linearGradient></defs><path d="M8 509.70000000000005 h16 M8 519.7 h16 M11 506.70000000000005 v16 M21 506.70000000000005 v16" stroke="#d4d4d4" stroke-width="1.2"/><rect x="12" y="510.70000000000005" width="8" height="8" fill="url(#gq)"/><path d="M9 530.8 h9 l5 5 v7 h-14 z" fill="#d4d4d4"/><circle cx="15" cy="536.8" r="2" fill="#3b4453"/><rect x="8.5" y="552.3" width="15" height="13" fill="none" stroke="#d4d4d4" stroke-width="1.2"/><path d="M9 555.8 h14 M9 559.3 h14 M9 562.3 h14 M13.5 555.8 v9 M18.5 555.8 v9" stroke="#d4d4d4" stroke-width="1"/><path d="M10 589 L16 573 L22 589 M12 584 h8" stroke="#d4d4d4" stroke-width="1.8" fill="none"/><circle cx="10" cy="598.3" r="3.2" fill="#50c878"/><path d="M14 597.3 h5 v4 M17.5 600.3 l1.5 2 l1.5 -2" stroke="#fff" stroke-width="1.2" fill="none"/><circle cx="20" cy="606.3" r="3.5" fill="#7ec0f0"/><path d="M1684 187.8 l9 -9 l3 3 l-9 9 z" fill="#f0c870"/><circle cx="1683" cy="188.8" r="2.5" fill="#e04848"/><path d="M1679 191.8 h3 M1687 191.8 h8" stroke="#5ab0f0" stroke-width="1"/><circle cx="1683" cy="204.5" r="3" stroke="#d4d4d4" stroke-width="1.2" fill="none"/><circle cx="1688" cy="211.5" r="3" stroke="#5ab0f0" stroke-width="1.2" fill="none"/><circle cx="1693" cy="211.5" r="3" stroke="#5ab0f0" stroke-width="1.2" fill="none"/><path d="M1686 222.6 v14 h-6 z" stroke="#d4d4d4" stroke-width="1.2" fill="none"/><path d="M1688 222.6 v14 h6 z" stroke="#5ab0f0" stroke-width="1.2" fill="none"/><path d="M1694 244 h-9 a5 5 0 0 0 0 10 h9 M1694 248 h-8 a1 1 0 0 0 0 2 h8" stroke="#5ab0f0" stroke-width="1.3" fill="none"/><rect x="1680" y="265" width="5" height="5" stroke="#d4d4d4" fill="none"/><rect x="1688" y="265" width="5" height="5" stroke="#5ab0f0" fill="none"/><rect x="1680" y="273" width="5" height="5" stroke="#5ab0f0" fill="none"/><rect x="1688" y="273" width="5" height="5" stroke="#5ab0f0" fill="none"/><path d="M1681 294 h12 M1687 288 v12" stroke="#eee" stroke-width="1.6"/><path d="M1679 294 l3 -3 v6 z M1695 294 l-3 -3 v6 z M1687 286 l-3 3 h6 z M1687 302 l-3 -3 h6 z" fill="#eee"/><path d="M1693 318.8 a6 6 0 1 1 -2 -5.5" stroke="#d4d4d4" stroke-width="1.6" fill="none"/><path d="M1693 309.8 v5 h-5 z" fill="#d4d4d4"/><rect x="1680" y="331" width="14" height="14" stroke="#5ab0f0" stroke-width="1.2" fill="none"/><rect x="1680" y="338" width="7" height="7" stroke="#d4d4d4" stroke-width="1.2" fill="none"/><path d="M1680 353 h8 l6 14 h-14 z" stroke="#d4d4d4" stroke-width="1.2" fill="none"/><path d="M1680 376 h14" stroke="#5ab0f0" stroke-dasharray="2 1"/><circle cx="1686" cy="386" r="2.5" stroke="#d4d4d4" fill="none"/><circle cx="1691" cy="386" r="2.5" stroke="#d4d4d4" fill="none"/><path d="M1684 378 l6 6 M1690 378 l-6 6" stroke="#d4d4d4"/><path d="M1680 405.4 h10 M1693 398.4 v12" stroke="#d4d4d4" stroke-width="1.3" stroke-dasharray="2 1"/><path d="M1680 422.5 v9 h14 v-9 h-4 M1690 419.5 v5" stroke="#d4d4d4" stroke-width="1.3" fill="none"/><path d="M1680 444.5 v9 h14 v-9 M1687 441.5 v5" stroke="#d4d4d4" stroke-width="1.3" fill="none"/><path d="M1680 470.6 h14" stroke="#5ab0f0" stroke-width="1.3"/><path d="M1683 467.6 l3 3 l-3 3 M1691 467.6 l-3 3 l3 3" stroke="#fff" fill="none"/><path d="M1680 501.4 v-4 l6 -7 h8" stroke="#d4d4d4" stroke-width="1.3" fill="none"/><path d="M1680 521.7 v-6 a6 6 0 0 1 6 -6 h8" stroke="#d4d4d4" stroke-width="1.3" fill="none"/><path d="M1680 515.7 a6 6 0 0 1 6 -6" stroke="#5ab0f0" stroke-width="1.3" fill="none"/><path d="M1680 542.8 q3 -12 7 -6 q4 6 7 -6" stroke="#5ab0f0" stroke-width="1.5" fill="none"/><rect x="1680" y="555.8" width="10" height="10" stroke="#5ab0f0" stroke-width="1.3" fill="none"/><path d="M1680 555.8 l4 -4 h10 v10 l-4 4" stroke="#5ab0f0" stroke-width="1.3" fill="none"/></svg><div style="position:absolute;left:33px;top:165px;width:1638px;height:1126px;background:#000;"></div><svg style="position:absolute;left:0;top:0" width="1707" height="1355" viewBox="0 0 1707 1355"><defs><clipPath id="cv"><rect x="33" y="165" width="1638" height="1126"/></clipPath></defs><g clip-path="url(#cv)"><path d="M278.5 231.3V316.0" stroke="#00e400" stroke-width="1"/><path d="M278.5 316.0V1035.0" stroke="#00dcdc" stroke-width="1"/><path d="M278.5 1035.0V1120.2" stroke="#00e400" stroke-width="1"/><path d="M352.5 231.3V316.0" stroke="#00e400" stroke-width="1"/><path d="M352.5 316.0V1035.0" stroke="#00dcdc" stroke-width="1"/><path d="M352.5 1035.0V1120.2" stroke="#00e400" stroke-width="1"/><path d="M427.5 231.3V316.0" stroke="#00e400" stroke-width="1"/><path d="M427.5 316.0V1035.0" stroke="#00dcdc" stroke-width="1"/><path d="M427.5 1035.0V1120.2" stroke="#00e400" stroke-width="1"/><path d="M501.5 231.3V316.0" stroke="#00e400" stroke-width="1"/><path d="M501.5 316.0V1035.0" stroke="#00dcdc" stroke-width="1"/><path d="M501.5 1035.0V1120.2" stroke="#00e400" stroke-width="1"/><path d="M576.5 231.3V316.0" stroke="#00e400" stroke-width="1"/><path d="M576.5 316.0V1035.0" stroke="#00dcdc" stroke-width="1"/><path d="M576.5 1035.0V1120.2" stroke="#00e400" stroke-width="1"/><path d="M650.5 231.3V316.0" stroke="#00e400" stroke-width="1"/><path d="M650.5 316.0V1035.0" stroke="#00dcdc" stroke-width="1"/><path d="M650.5 1035.0V1120.2" stroke="#00e400" stroke-width="1"/><path d="M725.5 231.3V316.0" stroke="#00e400" stroke-width="1"/><path d="M725.5 316.0V1035.0" stroke="#00dcdc" stroke-width="1"/><path d="M725.5 1035.0V1120.2" stroke="#00e400" stroke-width="1"/><path d="M799.5 231.3V316.0" stroke="#00e400" stroke-width="1"/><path d="M799.5 316.0V1035.0" stroke="#00dcdc" stroke-width="1"/><path d="M799.5 1035.0V1120.2" stroke="#00e400" stroke-width="1"/><path d="M874.5 231.3V316.0" stroke="#00e400" stroke-width="1"/><path d="M874.5 316.0V780.0" stroke="#00dcdc" stroke-width="1"/><path d="M874.5 1035.0V1120.2" stroke="#00e400" stroke-width="1"/><path d="M948.5 231.3V316.0" stroke="#00e400" stroke-width="1"/><path d="M948.5 316.0V780.0" stroke="#00dcdc" stroke-width="1"/><path d="M948.5 1035.0V1120.2" stroke="#00e400" stroke-width="1"/><path d="M1023.5 231.3V316.0" stroke="#00e400" stroke-width="1"/><path d="M1023.5 316.0V780.0" stroke="#00dcdc" stroke-width="1"/><path d="M1023.5 1035.0V1120.2" stroke="#00e400" stroke-width="1"/><path d="M1097.5 231.3V316.0" stroke="#00e400" stroke-width="1"/><path d="M1097.5 316.0V780.0" stroke="#00dcdc" stroke-width="1"/><path d="M1097.5 1035.0V1120.2" stroke="#00e400" stroke-width="1"/><path d="M1172.5 231.3V316.0" stroke="#00e400" stroke-width="1"/><path d="M1172.5 316.0V780.0" stroke="#00dcdc" stroke-width="1"/><path d="M1172.5 1035.0V1120.2" stroke="#00e400" stroke-width="1"/><path d="M1246.5 231.3V316.0" stroke="#00e400" stroke-width="1"/><path d="M1246.5 316.0V780.0" stroke="#00dcdc" stroke-width="1"/><path d="M1246.5 1035.0V1120.2" stroke="#00e400" stroke-width="1"/><path d="M1310.5 231.3V316.0" stroke="#00e400" stroke-width="1"/><path d="M1310.5 316.0V780.0" stroke="#00dcdc" stroke-width="1"/><path d="M1310.5 1035.0V1120.2" stroke="#00e400" stroke-width="1"/><path d="M1385.5 231.3V316.0" stroke="#00e400" stroke-width="1"/><path d="M1385.5 316.0V780.0" stroke="#00dcdc" stroke-width="1"/><path d="M1385.5 1035.0V1120.2" stroke="#00e400" stroke-width="1"/><path d="M275.5 307.0V1035.0" stroke="#00dcdc" stroke-width="1"/><path d="M182.0 316.5H268.0" stroke="#00e400" stroke-width="1"/><path d="M268.0 316.5H1397.0" stroke="#00dcdc" stroke-width="1"/><path d="M1397.0 316.5H1481.0" stroke="#00e400" stroke-width="1"/><path d="M182.0 417.5H268.0" stroke="#00e400" stroke-width="1"/><path d="M268.0 417.5H1397.0" stroke="#00dcdc" stroke-width="1"/><path d="M1397.0 417.5H1481.0" stroke="#00e400" stroke-width="1"/><path d="M182.0 518.5H268.0" stroke="#00e400" stroke-width="1"/><path d="M268.0 518.5H1397.0" stroke="#00dcdc" stroke-width="1"/><path d="M1397.0 518.5H1481.0" stroke="#00e400" stroke-width="1"/><path d="M182.0 619.5H268.0" stroke="#00e400" stroke-width="1"/><path d="M268.0 619.5H1397.0" stroke="#00dcdc" stroke-width="1"/><path d="M1397.0 619.5H1481.0" stroke="#00e400" stroke-width="1"/><path d="M182.0 721.5H268.0" stroke="#00e400" stroke-width="1"/><path d="M268.0 721.5H1397.0" stroke="#00dcdc" stroke-width="1"/><path d="M1397.0 721.5H1481.0" stroke="#00e400" stroke-width="1"/><path d="M182.0 822.5H268.0" stroke="#00e400" stroke-width="1"/><path d="M268.0 822.5H846.0" stroke="#00dcdc" stroke-width="1"/><path d="M1397.0 822.5H1481.0" stroke="#00e400" stroke-width="1"/><path d="M182.0 923.5H268.0" stroke="#00e400" stroke-width="1"/><path d="M268.0 923.5H840.0" stroke="#00dcdc" stroke-width="1"/><path d="M1397.0 923.5H1481.0" stroke="#00e400" stroke-width="1"/><path d="M182.0 1024.5H268.0" stroke="#00e400" stroke-width="1"/><path d="M268.0 1024.5H842.0" stroke="#00dcdc" stroke-width="1"/><path d="M1397.0 1024.5H1481.0" stroke="#00e400" stroke-width="1"/><circle cx="278.0" cy="222.6" r="8.7" stroke="#00e400" stroke-width="1.8" fill="none"/><text x="278.0" y="227.9" font-size="16" fill="#f0f0f0" stroke="#f0f0f0" stroke-width="0.3" text-anchor="middle" font-family="Liberation Serif">1</text><circle cx="278.0" cy="1128.9" r="8.7" stroke="#00e400" stroke-width="1.8" fill="none"/><text x="278.0" y="1134.2" font-size="16" fill="#f0f0f0" stroke="#f0f0f0" stroke-width="0.3" text-anchor="middle" font-family="Liberation Serif">1</text><circle cx="352.5" cy="222.6" r="8.7" stroke="#00e400" stroke-width="1.8" fill="none"/><text x="352.5" y="227.9" font-size="16" fill="#f0f0f0" stroke="#f0f0f0" stroke-width="0.3" text-anchor="middle" font-family="Liberation Serif">2</text><circle cx="352.5" cy="1128.9" r="8.7" stroke="#00e400" stroke-width="1.8" fill="none"/><text x="352.5" y="1134.2" font-size="16" fill="#f0f0f0" stroke="#f0f0f0" stroke-width="0.3" text-anchor="middle" font-family="Liberation Serif">2</text><circle cx="427.1" cy="222.6" r="8.7" stroke="#00e400" stroke-width="1.8" fill="none"/><text x="427.1" y="227.9" font-size="16" fill="#f0f0f0" stroke="#f0f0f0" stroke-width="0.3" text-anchor="middle" font-family="Liberation Serif">3</text><circle cx="427.1" cy="1128.9" r="8.7" stroke="#00e400" stroke-width="1.8" fill="none"/><text x="427.1" y="1134.2" font-size="16" fill="#f0f0f0" stroke="#f0f0f0" stroke-width="0.3" text-anchor="middle" font-family="Liberation Serif">3</text><circle cx="501.6" cy="222.6" r="8.7" stroke="#00e400" stroke-width="1.8" fill="none"/><text x="501.6" y="227.9" font-size="16" fill="#f0f0f0" stroke="#f0f0f0" stroke-width="0.3" text-anchor="middle" font-family="Liberation Serif">4</text><circle cx="501.6" cy="1128.9" r="8.7" stroke="#00e400" stroke-width="1.8" fill="none"/><text x="501.6" y="1134.2" font-size="16" fill="#f0f0f0" stroke="#f0f0f0" stroke-width="0.3" text-anchor="middle" font-family="Liberation Serif">4</text><circle cx="576.1" cy="222.6" r="8.7" stroke="#00e400" stroke-width="1.8" fill="none"/><text x="576.1" y="227.9" font-size="16" fill="#f0f0f0" stroke="#f0f0f0" stroke-width="0.3" text-anchor="middle" font-family="Liberation Serif">5</text><circle cx="576.1" cy="1128.9" r="8.7" stroke="#00e400" stroke-width="1.8" fill="none"/><text x="576.1" y="1134.2" font-size="16" fill="#f0f0f0" stroke="#f0f0f0" stroke-width="0.3" text-anchor="middle" font-family="Liberation Serif">5</text><circle cx="650.6" cy="222.6" r="8.7" stroke="#00e400" stroke-width="1.8" fill="none"/><text x="650.6" y="227.9" font-size="16" fill="#f0f0f0" stroke="#f0f0f0" stroke-width="0.3" text-anchor="middle" font-family="Liberation Serif">6</text><circle cx="650.6" cy="1128.9" r="8.7" stroke="#00e400" stroke-width="1.8" fill="none"/><text x="650.6" y="1134.2" font-size="16" fill="#f0f0f0" stroke="#f0f0f0" stroke-width="0.3" text-anchor="middle" font-family="Liberation Serif">6</text><circle cx="725.2" cy="222.6" r="8.7" stroke="#00e400" stroke-width="1.8" fill="none"/><text x="725.2" y="227.9" font-size="16" fill="#f0f0f0" stroke="#f0f0f0" stroke-width="0.3" text-anchor="middle" font-family="Liberation Serif">7</text><circle cx="725.2" cy="1128.9" r="8.7" stroke="#00e400" stroke-width="1.8" fill="none"/><text x="725.2" y="1134.2" font-size="16" fill="#f0f0f0" stroke="#f0f0f0" stroke-width="0.3" text-anchor="middle" font-family="Liberation Serif">7</text><circle cx="799.7" cy="222.6" r="8.7" stroke="#00e400" stroke-width="1.8" fill="none"/><text x="799.7" y="227.9" font-size="16" fill="#f0f0f0" stroke="#f0f0f0" stroke-width="0.3" text-anchor="middle" font-family="Liberation Serif">8</text><circle cx="799.7" cy="1128.9" r="8.7" stroke="#00e400" stroke-width="1.8" fill="none"/><text x="799.7" y="1134.2" font-size="16" fill="#f0f0f0" stroke="#f0f0f0" stroke-width="0.3" text-anchor="middle" font-family="Liberation Serif">8</text><circle cx="874.2" cy="222.6" r="8.7" stroke="#00e400" stroke-width="1.8" fill="none"/><text x="874.2" y="227.9" font-size="16" fill="#f0f0f0" stroke="#f0f0f0" stroke-width="0.3" text-anchor="middle" font-family="Liberation Serif">9</text><circle cx="874.2" cy="1128.9" r="8.7" stroke="#00e400" stroke-width="1.8" fill="none"/><text x="874.2" y="1134.2" font-size="16" fill="#f0f0f0" stroke="#f0f0f0" stroke-width="0.3" text-anchor="middle" font-family="Liberation Serif">9</text><circle cx="948.8" cy="222.6" r="8.7" stroke="#00e400" stroke-width="1.8" fill="none"/><text x="948.8" y="227.9" font-size="15" fill="#f0f0f0" stroke="#f0f0f0" stroke-width="0.3" text-anchor="middle" font-family="Liberation Serif" textLength="9.5" lengthAdjust="spacingAndGlyphs">10</text><circle cx="948.8" cy="1128.9" r="8.7" stroke="#00e400" stroke-width="1.8" fill="none"/><text x="948.8" y="1134.2" font-size="15" fill="#f0f0f0" stroke="#f0f0f0" stroke-width="0.3" text-anchor="middle" font-family="Liberation Serif" textLength="9.5" lengthAdjust="spacingAndGlyphs">10</text><circle cx="1023.3" cy="222.6" r="8.7" stroke="#00e400" stroke-width="1.8" fill="none"/><text x="1023.3" y="227.9" font-size="15" fill="#f0f0f0" stroke="#f0f0f0" stroke-width="0.3" text-anchor="middle" font-family="Liberation Serif" textLength="9.5" lengthAdjust="spacingAndGlyphs">11</text><circle cx="1023.3" cy="1128.9" r="8.7" stroke="#00e400" stroke-width="1.8" fill="none"/><text x="1023.3" y="1134.2" font-size="15" fill="#f0f0f0" stroke="#f0f0f0" stroke-width="0.3" text-anchor="middle" font-family="Liberation Serif" textLength="9.5" lengthAdjust="spacingAndGlyphs">11</text><circle cx="1097.8" cy="222.6" r="8.7" stroke="#00e400" stroke-width="1.8" fill="none"/><text x="1097.8" y="227.9" font-size="15" fill="#f0f0f0" stroke="#f0f0f0" stroke-width="0.3" text-anchor="middle" font-family="Liberation Serif" textLength="9.5" lengthAdjust="spacingAndGlyphs">12</text><circle cx="1097.8" cy="1128.9" r="8.7" stroke="#00e400" stroke-width="1.8" fill="none"/><text x="1097.8" y="1134.2" font-size="15" fill="#f0f0f0" stroke="#f0f0f0" stroke-width="0.3" text-anchor="middle" font-family="Liberation Serif" textLength="9.5" lengthAdjust="spacingAndGlyphs">12</text><circle cx="1172.4" cy="222.6" r="8.7" stroke="#00e400" stroke-width="1.8" fill="none"/><text x="1172.4" y="227.9" font-size="15" fill="#f0f0f0" stroke="#f0f0f0" stroke-width="0.3" text-anchor="middle" font-family="Liberation Serif" textLength="9.5" lengthAdjust="spacingAndGlyphs">13</text><circle cx="1172.4" cy="1128.9" r="8.7" stroke="#00e400" stroke-width="1.8" fill="none"/><text x="1172.4" y="1134.2" font-size="15" fill="#f0f0f0" stroke="#f0f0f0" stroke-width="0.3" text-anchor="middle" font-family="Liberation Serif" textLength="9.5" lengthAdjust="spacingAndGlyphs">13</text><circle cx="1246.9" cy="222.6" r="8.7" stroke="#00e400" stroke-width="1.8" fill="none"/><text x="1246.9" y="227.9" font-size="15" fill="#f0f0f0" stroke="#f0f0f0" stroke-width="0.3" text-anchor="middle" font-family="Liberation Serif" textLength="9.5" lengthAdjust="spacingAndGlyphs">14</text><circle cx="1246.9" cy="1128.9" r="8.7" stroke="#00e400" stroke-width="1.8" fill="none"/><text x="1246.9" y="1134.2" font-size="15" fill="#f0f0f0" stroke="#f0f0f0" stroke-width="0.3" text-anchor="middle" font-family="Liberation Serif" textLength="9.5" lengthAdjust="spacingAndGlyphs">14</text><circle cx="1310.8" cy="222.6" r="8.7" stroke="#00e400" stroke-width="1.8" fill="none"/><text x="1310.8" y="227.9" font-size="15" fill="#f0f0f0" stroke="#f0f0f0" stroke-width="0.3" text-anchor="middle" font-family="Liberation Serif" textLength="9.5" lengthAdjust="spacingAndGlyphs">15</text><circle cx="1310.8" cy="1128.9" r="8.7" stroke="#00e400" stroke-width="1.8" fill="none"/><text x="1310.8" y="1134.2" font-size="15" fill="#f0f0f0" stroke="#f0f0f0" stroke-width="0.3" text-anchor="middle" font-family="Liberation Serif" textLength="9.5" lengthAdjust="spacingAndGlyphs">15</text><circle cx="1385.3" cy="222.6" r="8.7" stroke="#00e400" stroke-width="1.8" fill="none"/><text x="1385.3" y="227.9" font-size="15" fill="#f0f0f0" stroke="#f0f0f0" stroke-width="0.3" text-anchor="middle" font-family="Liberation Serif" textLength="9.5" lengthAdjust="spacingAndGlyphs">16</text><circle cx="1385.3" cy="1128.9" r="8.7" stroke="#00e400" stroke-width="1.8" fill="none"/><text x="1385.3" y="1134.2" font-size="15" fill="#f0f0f0" stroke="#f0f0f0" stroke-width="0.3" text-anchor="middle" font-family="Liberation Serif" textLength="9.5" lengthAdjust="spacingAndGlyphs">16</text><circle cx="173.3" cy="316.4" r="8.7" stroke="#00e400" stroke-width="1.8" fill="none"/><text x="173.3" y="321.7" font-size="14.5" fill="#f0f0f0" stroke="#f0f0f0" stroke-width="0.3" text-anchor="middle" font-family="Liberation Serif">H</text><circle cx="1490.0" cy="316.4" r="8.7" stroke="#00e400" stroke-width="1.8" fill="none"/><text x="1490.0" y="321.7" font-size="14.5" fill="#f0f0f0" stroke="#f0f0f0" stroke-width="0.3" text-anchor="middle" font-family="Liberation Serif">H</text><circle cx="173.3" cy="417.6" r="8.7" stroke="#00e400" stroke-width="1.8" fill="none"/><text x="173.3" y="422.9" font-size="14.5" fill="#f0f0f0" stroke="#f0f0f0" stroke-width="0.3" text-anchor="middle" font-family="Liberation Serif">G</text><circle cx="1490.0" cy="417.6" r="8.7" stroke="#00e400" stroke-width="1.8" fill="none"/><text x="1490.0" y="422.9" font-size="14.5" fill="#f0f0f0" stroke="#f0f0f0" stroke-width="0.3" text-anchor="middle" font-family="Liberation Serif">G</text><circle cx="173.3" cy="518.7" r="8.7" stroke="#00e400" stroke-width="1.8" fill="none"/><text x="173.3" y="524.0" font-size="14.5" fill="#f0f0f0" stroke="#f0f0f0" stroke-width="0.3" text-anchor="middle" font-family="Liberation Serif">F</text><circle cx="1490.0" cy="518.7" r="8.7" stroke="#00e400" stroke-width="1.8" fill="none"/><text x="1490.0" y="524.0" font-size="14.5" fill="#f0f0f0" stroke="#f0f0f0" stroke-width="0.3" text-anchor="middle" font-family="Liberation Serif">F</text><circle cx="173.3" cy="619.9" r="8.7" stroke="#00e400" stroke-width="1.8" fill="none"/><text x="173.3" y="625.2" font-size="14.5" fill="#f0f0f0" stroke="#f0f0f0" stroke-width="0.3" text-anchor="middle" font-family="Liberation Serif">E</text><circle cx="1490.0" cy="619.9" r="8.7" stroke="#00e400" stroke-width="1.8" fill="none"/><text x="1490.0" y="625.2" font-size="14.5" fill="#f0f0f0" stroke="#f0f0f0" stroke-width="0.3" text-anchor="middle" font-family="Liberation Serif">E</text><circle cx="173.3" cy="721.0" r="8.7" stroke="#00e400" stroke-width="1.8" fill="none"/><text x="173.3" y="726.3" font-size="14.5" fill="#f0f0f0" stroke="#f0f0f0" stroke-width="0.3" text-anchor="middle" font-family="Liberation Serif">D</text><circle cx="1490.0" cy="721.0" r="8.7" stroke="#00e400" stroke-width="1.8" fill="none"/><text x="1490.0" y="726.3" font-size="14.5" fill="#f0f0f0" stroke="#f0f0f0" stroke-width="0.3" text-anchor="middle" font-family="Liberation Serif">D</text><circle cx="173.3" cy="822.2" r="8.7" stroke="#00e400" stroke-width="1.8" fill="none"/><text x="173.3" y="827.5" font-size="14.5" fill="#f0f0f0" stroke="#f0f0f0" stroke-width="0.3" text-anchor="middle" font-family="Liberation Serif">C</text><circle cx="1490.0" cy="822.2" r="8.7" stroke="#00e400" stroke-width="1.8" fill="none"/><text x="1490.0" y="827.5" font-size="14.5" fill="#f0f0f0" stroke="#f0f0f0" stroke-width="0.3" text-anchor="middle" font-family="Liberation Serif">C</text><circle cx="173.3" cy="923.4" r="8.7" stroke="#00e400" stroke-width="1.8" fill="none"/><text x="173.3" y="928.7" font-size="14.5" fill="#f0f0f0" stroke="#f0f0f0" stroke-width="0.3" text-anchor="middle" font-family="Liberation Serif">B</text><circle cx="1490.0" cy="923.4" r="8.7" stroke="#00e400" stroke-width="1.8" fill="none"/><text x="1490.0" y="928.7" font-size="14.5" fill="#f0f0f0" stroke="#f0f0f0" stroke-width="0.3" text-anchor="middle" font-family="Liberation Serif">B</text><circle cx="173.3" cy="1024.5" r="8.7" stroke="#00e400" stroke-width="1.8" fill="none"/><text x="173.3" y="1029.8" font-size="14.5" fill="#f0f0f0" stroke="#f0f0f0" stroke-width="0.3" text-anchor="middle" font-family="Liberation Serif">A</text><circle cx="1490.0" cy="1024.5" r="8.7" stroke="#00e400" stroke-width="1.8" fill="none"/><text x="1490.0" y="1029.8" font-size="14.5" fill="#f0f0f0" stroke="#f0f0f0" stroke-width="0.3" text-anchor="middle" font-family="Liberation Serif">A</text><path d="M274.0 269.5H1388.0" stroke="#00e400" stroke-width="1"/><path d="M274.0 253.5H1388.0" stroke="#00e400" stroke-width="1"/><path d="M276.0 271.3L280.0 267.3" stroke="#00e400" stroke-width="1.1"/><circle cx="278.0" cy="269.5" r="1.6" fill="#00e400"/><path d="M350.5 271.3L354.5 267.3" stroke="#00e400" stroke-width="1.1"/><circle cx="352.5" cy="269.5" r="1.6" fill="#00e400"/><path d="M425.1 271.3L429.1 267.3" stroke="#00e400" stroke-width="1.1"/><circle cx="427.1" cy="269.5" r="1.6" fill="#00e400"/><path d="M499.6 271.3L503.6 267.3" stroke="#00e400" stroke-width="1.1"/><circle cx="501.6" cy="269.5" r="1.6" fill="#00e400"/><path d="M574.1 271.3L578.1 267.3" stroke="#00e400" stroke-width="1.1"/><circle cx="576.1" cy="269.5" r="1.6" fill="#00e400"/><path d="M648.6 271.3L652.6 267.3" stroke="#00e400" stroke-width="1.1"/><circle cx="650.6" cy="269.5" r="1.6" fill="#00e400"/><path d="M723.2 271.3L727.2 267.3" stroke="#00e400" stroke-width="1.1"/><circle cx="725.2" cy="269.5" r="1.6" fill="#00e400"/><path d="M797.7 271.3L801.7 267.3" stroke="#00e400" stroke-width="1.1"/><circle cx="799.7" cy="269.5" r="1.6" fill="#00e400"/><path d="M872.2 271.3L876.2 267.3" stroke="#00e400" stroke-width="1.1"/><circle cx="874.2" cy="269.5" r="1.6" fill="#00e400"/><path d="M946.8 271.3L950.8 267.3" stroke="#00e400" stroke-width="1.1"/><circle cx="948.8" cy="269.5" r="1.6" fill="#00e400"/><path d="M1021.3 271.3L1025.3 267.3" stroke="#00e400" stroke-width="1.1"/><circle cx="1023.3" cy="269.5" r="1.6" fill="#00e400"/><path d="M1095.8 271.3L1099.8 267.3" stroke="#00e400" stroke-width="1.1"/><circle cx="1097.8" cy="269.5" r="1.6" fill="#00e400"/><path d="M1170.4 271.3L1174.4 267.3" stroke="#00e400" stroke-width="1.1"/><circle cx="1172.4" cy="269.5" r="1.6" fill="#00e400"/><path d="M1244.9 271.3L1248.9 267.3" stroke="#00e400" stroke-width="1.1"/><circle cx="1246.9" cy="269.5" r="1.6" fill="#00e400"/><path d="M1308.8 271.3L1312.8 267.3" stroke="#00e400" stroke-width="1.1"/><circle cx="1310.8" cy="269.5" r="1.6" fill="#00e400"/><path d="M1383.3 271.3L1387.3 267.3" stroke="#00e400" stroke-width="1.1"/><circle cx="1385.3" cy="269.5" r="1.6" fill="#00e400"/><path d="M276.0 255.6L280.0 251.6" stroke="#00e400" stroke-width="1.1"/><path d="M1383.3 255.6L1387.3 251.6" stroke="#00e400" stroke-width="1.1"/><text x="315.3" y="266.7" font-size="8.5" fill="#ffffff" text-anchor="middle" font-family="Liberation Sans" font-weight="normal" textLength="16" lengthAdjust="spacingAndGlyphs" stroke="#ffffff" stroke-width="0.35">7000</text><text x="389.8" y="266.7" font-size="8.5" fill="#ffffff" text-anchor="middle" font-family="Liberation Sans" font-weight="normal" textLength="16" lengthAdjust="spacingAndGlyphs" stroke="#ffffff" stroke-width="0.35">7000</text><text x="464.3" y="266.7" font-size="8.5" fill="#ffffff" text-anchor="middle" font-family="Liberation Sans" font-weight="normal" textLength="16" lengthAdjust="spacingAndGlyphs" stroke="#ffffff" stroke-width="0.35">7000</text><text x="538.9" y="266.7" font-size="8.5" fill="#ffffff" text-anchor="middle" font-family="Liberation Sans" font-weight="normal" textLength="16" lengthAdjust="spacingAndGlyphs" stroke="#ffffff" stroke-width="0.35">7000</text><text x="613.4" y="266.7" font-size="8.5" fill="#ffffff" text-anchor="middle" font-family="Liberation Sans" font-weight="normal" textLength="16" lengthAdjust="spacingAndGlyphs" stroke="#ffffff" stroke-width="0.35">7000</text><text x="687.9" y="266.7" font-size="8.5" fill="#ffffff" text-anchor="middle" font-family="Liberation Sans" font-weight="normal" textLength="16" lengthAdjust="spacingAndGlyphs" stroke="#ffffff" stroke-width="0.35">7000</text><text x="762.4" y="266.7" font-size="8.5" fill="#ffffff" text-anchor="middle" font-family="Liberation Sans" font-weight="normal" textLength="16" lengthAdjust="spacingAndGlyphs" stroke="#ffffff" stroke-width="0.35">7000</text><text x="837.0" y="266.7" font-size="8.5" fill="#ffffff" text-anchor="middle" font-family="Liberation Sans" font-weight="normal" textLength="16" lengthAdjust="spacingAndGlyphs" stroke="#ffffff" stroke-width="0.35">7000</text><text x="911.5" y="266.7" font-size="8.5" fill="#ffffff" text-anchor="middle" font-family="Liberation Sans" font-weight="normal" textLength="16" lengthAdjust="spacingAndGlyphs" stroke="#ffffff" stroke-width="0.35">7000</text><text x="986.0" y="266.7" font-size="8.5" fill="#ffffff" text-anchor="middle" font-family="Liberation Sans" font-weight="normal" textLength="16" lengthAdjust="spacingAndGlyphs" stroke="#ffffff" stroke-width="0.35">7000</text><text x="1060.6" y="266.7" font-size="8.5" fill="#ffffff" text-anchor="middle" font-family="Liberation Sans" font-weight="normal" textLength="16" lengthAdjust="spacingAndGlyphs" stroke="#ffffff" stroke-width="0.35">7000</text><text x="1135.1" y="266.7" font-size="8.5" fill="#ffffff" text-anchor="middle" font-family="Liberation Sans" font-weight="normal" textLength="16" lengthAdjust="spacingAndGlyphs" stroke="#ffffff" stroke-width="0.35">7000</text><text x="1209.6" y="266.7" font-size="8.5" fill="#ffffff" text-anchor="middle" font-family="Liberation Sans" font-weight="normal" textLength="16" lengthAdjust="spacingAndGlyphs" stroke="#ffffff" stroke-width="0.35">7000</text><text x="1278.8" y="266.7" font-size="8.5" fill="#ffffff" text-anchor="middle" font-family="Liberation Sans" font-weight="normal" textLength="16" lengthAdjust="spacingAndGlyphs" stroke="#ffffff" stroke-width="0.35">6000</text><text x="1348.0" y="266.7" font-size="8.5" fill="#ffffff" text-anchor="middle" font-family="Liberation Sans" font-weight="normal" textLength="16" lengthAdjust="spacingAndGlyphs" stroke="#ffffff" stroke-width="0.35">7000</text><text x="831.6" y="251.4" font-size="8.5" fill="#ffffff" text-anchor="middle" font-family="Liberation Sans" font-weight="normal" textLength="24" lengthAdjust="spacingAndGlyphs" stroke="#ffffff" stroke-width="0.35">104000</text><path d="M274.0 1082.5H1388.0" stroke="#00e400" stroke-width="1"/><path d="M274.0 1105.5H1388.0" stroke="#00e400" stroke-width="1"/><path d="M276.0 1084.5L280.0 1080.5" stroke="#00e400" stroke-width="1.1"/><circle cx="278.0" cy="1082.5" r="1.6" fill="#00e400"/><path d="M350.5 1084.5L354.5 1080.5" stroke="#00e400" stroke-width="1.1"/><circle cx="352.5" cy="1082.5" r="1.6" fill="#00e400"/><path d="M425.1 1084.5L429.1 1080.5" stroke="#00e400" stroke-width="1.1"/><circle cx="427.1" cy="1082.5" r="1.6" fill="#00e400"/><path d="M499.6 1084.5L503.6 1080.5" stroke="#00e400" stroke-width="1.1"/><circle cx="501.6" cy="1082.5" r="1.6" fill="#00e400"/><path d="M574.1 1084.5L578.1 1080.5" stroke="#00e400" stroke-width="1.1"/><circle cx="576.1" cy="1082.5" r="1.6" fill="#00e400"/><path d="M648.6 1084.5L652.6 1080.5" stroke="#00e400" stroke-width="1.1"/><circle cx="650.6" cy="1082.5" r="1.6" fill="#00e400"/><path d="M723.2 1084.5L727.2 1080.5" stroke="#00e400" stroke-width="1.1"/><circle cx="725.2" cy="1082.5" r="1.6" fill="#00e400"/><path d="M797.7 1084.5L801.7 1080.5" stroke="#00e400" stroke-width="1.1"/><circle cx="799.7" cy="1082.5" r="1.6" fill="#00e400"/><path d="M872.2 1084.5L876.2 1080.5" stroke="#00e400" stroke-width="1.1"/><circle cx="874.2" cy="1082.5" r="1.6" fill="#00e400"/><path d="M946.8 1084.5L950.8 1080.5" stroke="#00e400" stroke-width="1.1"/><circle cx="948.8" cy="1082.5" r="1.6" fill="#00e400"/><path d="M1021.3 1084.5L1025.3 1080.5" stroke="#00e400" stroke-width="1.1"/><circle cx="1023.3" cy="1082.5" r="1.6" fill="#00e400"/><path d="M1095.8 1084.5L1099.8 1080.5" stroke="#00e400" stroke-width="1.1"/><circle cx="1097.8" cy="1082.5" r="1.6" fill="#00e400"/><path d="M1170.4 1084.5L1174.4 1080.5" stroke="#00e400" stroke-width="1.1"/><circle cx="1172.4" cy="1082.5" r="1.6" fill="#00e400"/><path d="M1244.9 1084.5L1248.9 1080.5" stroke="#00e400" stroke-width="1.1"/><circle cx="1246.9" cy="1082.5" r="1.6" fill="#00e400"/><path d="M1308.8 1084.5L1312.8 1080.5" stroke="#00e400" stroke-width="1.1"/><circle cx="1310.8" cy="1082.5" r="1.6" fill="#00e400"/><path d="M1383.3 1084.5L1387.3 1080.5" stroke="#00e400" stroke-width="1.1"/><circle cx="1385.3" cy="1082.5" r="1.6" fill="#00e400"/><path d="M276.0 1107.3L280.0 1103.3" stroke="#00e400" stroke-width="1.1"/><path d="M1383.3 1107.3L1387.3 1103.3" stroke="#00e400" stroke-width="1.1"/><text x="315.3" y="1079.9" font-size="8.5" fill="#ffffff" text-anchor="middle" font-family="Liberation Sans" font-weight="normal" textLength="16" lengthAdjust="spacingAndGlyphs" stroke="#ffffff" stroke-width="0.35">7000</text><text x="389.8" y="1079.9" font-size="8.5" fill="#ffffff" text-anchor="middle" font-family="Liberation Sans" font-weight="normal" textLength="16" lengthAdjust="spacingAndGlyphs" stroke="#ffffff" stroke-width="0.35">7000</text><text x="464.3" y="1079.9" font-size="8.5" fill="#ffffff" text-anchor="middle" font-family="Liberation Sans" font-weight="normal" textLength="16" lengthAdjust="spacingAndGlyphs" stroke="#ffffff" stroke-width="0.35">7000</text><text x="538.9" y="1079.9" font-size="8.5" fill="#ffffff" text-anchor="middle" font-family="Liberation Sans" font-weight="normal" textLength="16" lengthAdjust="spacingAndGlyphs" stroke="#ffffff" stroke-width="0.35">7000</text><text x="613.4" y="1079.9" font-size="8.5" fill="#ffffff" text-anchor="middle" font-family="Liberation Sans" font-weight="normal" textLength="16" lengthAdjust="spacingAndGlyphs" stroke="#ffffff" stroke-width="0.35">7000</text><text x="687.9" y="1079.9" font-size="8.5" fill="#ffffff" text-anchor="middle" font-family="Liberation Sans" font-weight="normal" textLength="16" lengthAdjust="spacingAndGlyphs" stroke="#ffffff" stroke-width="0.35">7000</text><text x="762.4" y="1079.9" font-size="8.5" fill="#ffffff" text-anchor="middle" font-family="Liberation Sans" font-weight="normal" textLength="16" lengthAdjust="spacingAndGlyphs" stroke="#ffffff" stroke-width="0.35">7000</text><text x="837.0" y="1079.9" font-size="8.5" fill="#ffffff" text-anchor="middle" font-family="Liberation Sans" font-weight="normal" textLength="16" lengthAdjust="spacingAndGlyphs" stroke="#ffffff" stroke-width="0.35">7000</text><text x="911.5" y="1079.9" font-size="8.5" fill="#ffffff" text-anchor="middle" font-family="Liberation Sans" font-weight="normal" textLength="16" lengthAdjust="spacingAndGlyphs" stroke="#ffffff" stroke-width="0.35">7000</text><text x="986.0" y="1079.9" font-size="8.5" fill="#ffffff" text-anchor="middle" font-family="Liberation Sans" font-weight="normal" textLength="16" lengthAdjust="spacingAndGlyphs" stroke="#ffffff" stroke-width="0.35">7000</text><text x="1060.6" y="1079.9" font-size="8.5" fill="#ffffff" text-anchor="middle" font-family="Liberation Sans" font-weight="normal" textLength="16" lengthAdjust="spacingAndGlyphs" stroke="#ffffff" stroke-width="0.35">7000</text><text x="1135.1" y="1079.9" font-size="8.5" fill="#ffffff" text-anchor="middle" font-family="Liberation Sans" font-weight="normal" textLength="16" lengthAdjust="spacingAndGlyphs" stroke="#ffffff" stroke-width="0.35">7000</text><text x="1209.6" y="1079.9" font-size="8.5" fill="#ffffff" text-anchor="middle" font-family="Liberation Sans" font-weight="normal" textLength="16" lengthAdjust="spacingAndGlyphs" stroke="#ffffff" stroke-width="0.35">7000</text><text x="1278.8" y="1079.9" font-size="8.5" fill="#ffffff" text-anchor="middle" font-family="Liberation Sans" font-weight="normal" textLength="16" lengthAdjust="spacingAndGlyphs" stroke="#ffffff" stroke-width="0.35">6000</text><text x="1348.0" y="1079.9" font-size="8.5" fill="#ffffff" text-anchor="middle" font-family="Liberation Sans" font-weight="normal" textLength="16" lengthAdjust="spacingAndGlyphs" stroke="#ffffff" stroke-width="0.35">7000</text><text x="831.6" y="1102.7" font-size="8.5" fill="#ffffff" text-anchor="middle" font-family="Liberation Sans" font-weight="normal" textLength="24" lengthAdjust="spacingAndGlyphs" stroke="#ffffff" stroke-width="0.35">104000</text><path d="M200.5 313.4V1027.5" stroke="#00e400" stroke-width="1"/><path d="M220.5 313.4V1027.5" stroke="#00e400" stroke-width="1"/><path d="M218.4 318.4L222.4 314.4" stroke="#ffffff" stroke-width="1.1"/><path d="M218.4 419.6L222.4 415.6" stroke="#ffffff" stroke-width="1.1"/><path d="M218.4 520.7L222.4 516.7" stroke="#ffffff" stroke-width="1.1"/><path d="M218.4 621.9L222.4 617.9" stroke="#ffffff" stroke-width="1.1"/><path d="M218.4 723.0L222.4 719.0" stroke="#ffffff" stroke-width="1.1"/><path d="M218.4 824.2L222.4 820.2" stroke="#ffffff" stroke-width="1.1"/><path d="M218.4 925.4L222.4 921.4" stroke="#ffffff" stroke-width="1.1"/><path d="M218.4 1026.5L222.4 1022.5" stroke="#ffffff" stroke-width="1.1"/><path d="M198.5 318.4L202.5 314.4" stroke="#ffffff" stroke-width="1.1"/><path d="M198.5 723.0L202.5 719.0" stroke="#ffffff" stroke-width="1.1"/><path d="M198.5 1026.5L202.5 1022.5" stroke="#ffffff" stroke-width="1.1"/><text x="215.0" y="370.0" font-size="8.5" fill="#ffffff" text-anchor="middle" font-family="Liberation Sans" font-weight="normal" transform="rotate(-90 215.0 367.0)" textLength="16" lengthAdjust="spacingAndGlyphs" stroke="#ffffff" stroke-width="0.35">9500</text><text x="215.0" y="471.2" font-size="8.5" fill="#ffffff" text-anchor="middle" font-family="Liberation Sans" font-weight="normal" transform="rotate(-90 215.0 468.1)" textLength="16" lengthAdjust="spacingAndGlyphs" stroke="#ffffff" stroke-width="0.35">9500</text><text x="215.0" y="572.4" font-size="8.5" fill="#ffffff" text-anchor="middle" font-family="Liberation Sans" font-weight="normal" transform="rotate(-90 215.0 569.3)" textLength="16" lengthAdjust="spacingAndGlyphs" stroke="#ffffff" stroke-width="0.35">9500</text><text x="215.0" y="673.5" font-size="8.5" fill="#ffffff" text-anchor="middle" font-family="Liberation Sans" font-weight="normal" transform="rotate(-90 215.0 670.5)" textLength="16" lengthAdjust="spacingAndGlyphs" stroke="#ffffff" stroke-width="0.35">9500</text><text x="215.0" y="774.7" font-size="8.5" fill="#ffffff" text-anchor="middle" font-family="Liberation Sans" font-weight="normal" transform="rotate(-90 215.0 771.6)" textLength="16" lengthAdjust="spacingAndGlyphs" stroke="#ffffff" stroke-width="0.35">9500</text><text x="215.0" y="875.8" font-size="8.5" fill="#ffffff" text-anchor="middle" font-family="Liberation Sans" font-weight="normal" transform="rotate(-90 215.0 872.8)" textLength="16" lengthAdjust="spacingAndGlyphs" stroke="#ffffff" stroke-width="0.35">9500</text><text x="215.0" y="977.0" font-size="8.5" fill="#ffffff" text-anchor="middle" font-family="Liberation Sans" font-weight="normal" transform="rotate(-90 215.0 973.9)" textLength="16" lengthAdjust="spacingAndGlyphs" stroke="#ffffff" stroke-width="0.35">9500</text><text x="195.0" y="522.1" font-size="8.5" fill="#ffffff" text-anchor="middle" font-family="Liberation Sans" font-weight="normal" transform="rotate(-90 195.0 519.0)" textLength="20" lengthAdjust="spacingAndGlyphs" stroke="#ffffff" stroke-width="0.35">38000</text><text x="195.0" y="876.1" font-size="8.5" fill="#ffffff" text-anchor="middle" font-family="Liberation Sans" font-weight="normal" transform="rotate(-90 195.0 873.0)" textLength="20" lengthAdjust="spacingAndGlyphs" stroke="#ffffff" stroke-width="0.35">28500</text><path d="M1443.5 313.4V1027.5" stroke="#00e400" stroke-width="1"/><path d="M1465.5 313.4V1027.5" stroke="#00e400" stroke-width="1"/><path d="M1441.3 318.4L1445.3 314.4" stroke="#00e400" stroke-width="1.1"/><path d="M1441.3 419.6L1445.3 415.6" stroke="#00e400" stroke-width="1.1"/><path d="M1441.3 520.7L1445.3 516.7" stroke="#00e400" stroke-width="1.1"/><path d="M1441.3 621.9L1445.3 617.9" stroke="#00e400" stroke-width="1.1"/><path d="M1441.3 723.0L1445.3 719.0" stroke="#00e400" stroke-width="1.1"/><path d="M1441.3 824.2L1445.3 820.2" stroke="#00e400" stroke-width="1.1"/><path d="M1441.3 925.4L1445.3 921.4" stroke="#00e400" stroke-width="1.1"/><path d="M1441.3 1026.5L1445.3 1022.5" stroke="#00e400" stroke-width="1.1"/><path d="M1463.5 318.4L1467.5 314.4" stroke="#00e400" stroke-width="1.1"/><path d="M1463.5 1026.5L1467.5 1022.5" stroke="#00e400" stroke-width="1.1"/><text x="1438.5" y="370.0" font-size="8.5" fill="#ffffff" text-anchor="middle" font-family="Liberation Sans" font-weight="normal" transform="rotate(-90 1438.5 367.0)" textLength="16" lengthAdjust="spacingAndGlyphs" stroke="#ffffff" stroke-width="0.35">9500</text><text x="1438.5" y="471.2" font-size="8.5" fill="#ffffff" text-anchor="middle" font-family="Liberation Sans" font-weight="normal" transform="rotate(-90 1438.5 468.1)" textLength="16" lengthAdjust="spacingAndGlyphs" stroke="#ffffff" stroke-width="0.35">9500</text><text x="1438.5" y="572.4" font-size="8.5" fill="#ffffff" text-anchor="middle" font-family="Liberation Sans" font-weight="normal" transform="rotate(-90 1438.5 569.3)" textLength="16" lengthAdjust="spacingAndGlyphs" stroke="#ffffff" stroke-width="0.35">9500</text><text x="1438.5" y="673.5" font-size="8.5" fill="#ffffff" text-anchor="middle" font-family="Liberation Sans" font-weight="normal" transform="rotate(-90 1438.5 670.5)" textLength="16" lengthAdjust="spacingAndGlyphs" stroke="#ffffff" stroke-width="0.35">9500</text><text x="1438.5" y="774.7" font-size="8.5" fill="#ffffff" text-anchor="middle" font-family="Liberation Sans" font-weight="normal" transform="rotate(-90 1438.5 771.6)" textLength="16" lengthAdjust="spacingAndGlyphs" stroke="#ffffff" stroke-width="0.35">9500</text><text x="1438.5" y="875.8" font-size="8.5" fill="#ffffff" text-anchor="middle" font-family="Liberation Sans" font-weight="normal" transform="rotate(-90 1438.5 872.8)" textLength="16" lengthAdjust="spacingAndGlyphs" stroke="#ffffff" stroke-width="0.35">9500</text><text x="1438.5" y="977.0" font-size="8.5" fill="#ffffff" text-anchor="middle" font-family="Liberation Sans" font-weight="normal" transform="rotate(-90 1438.5 973.9)" textLength="16" lengthAdjust="spacingAndGlyphs" stroke="#ffffff" stroke-width="0.35">9500</text><text x="1460.0" y="674.1" font-size="8.5" fill="#ffffff" text-anchor="middle" font-family="Liberation Sans" font-weight="normal" transform="rotate(-90 1460.0 671.0)" textLength="20" lengthAdjust="spacingAndGlyphs" stroke="#ffffff" stroke-width="0.35">66500</text><path d="M269.0 309.5H286.0" stroke="#00dcdc" stroke-width="1"/><path d="M269.0 323.5H286.0" stroke="#00dcdc" stroke-width="1"/><path d="M272.5 307.4V325.4" stroke="#00dcdc" stroke-width="1"/><path d="M283.5 307.4V325.4" stroke="#00dcdc" stroke-width="1"/><rect x="271.7" y="308.4" width="2" height="2" fill="#00e400"/><rect x="271.7" y="322.4" width="2" height="2" fill="#00e400"/><rect x="282.4" y="308.4" width="2" height="2" fill="#00e400"/><rect x="282.4" y="322.4" width="2" height="2" fill="#00e400"/><path d="M291.0 309.5H313.0" stroke="#00e400" stroke-width="1"/><path d="M291.0 323.5H313.0" stroke="#00e400" stroke-width="1"/><path d="M306.5 311.4L310.5 307.4" stroke="#ffffff" stroke-width="1.1"/><path d="M306.5 318.4L310.5 314.4" stroke="#ffffff" stroke-width="1.1"/><path d="M306.5 325.4L310.5 321.4" stroke="#ffffff" stroke-width="1.1"/><text x="302.0" y="313.0" font-size="8.5" fill="#ffffff" text-anchor="middle" font-family="Liberation Sans" font-weight="normal" transform="rotate(-90 302.0 309.9)" textLength="12" lengthAdjust="spacingAndGlyphs" stroke="#ffffff" stroke-width="0.35">100</text><text x="302.0" y="326.0" font-size="8.5" fill="#ffffff" text-anchor="middle" font-family="Liberation Sans" font-weight="normal" transform="rotate(-90 302.0 322.9)" textLength="12" lengthAdjust="spacingAndGlyphs" stroke="#ffffff" stroke-width="0.35">100</text><path d="M272.5 328.4V356.4" stroke="#00e400" stroke-width="1"/><path d="M283.5 328.4V356.4" stroke="#00e400" stroke-width="1"/><text x="273.5" y="349.5" font-size="8.5" fill="#ffffff" text-anchor="middle" font-family="Liberation Sans" font-weight="normal" textLength="8" lengthAdjust="spacingAndGlyphs" stroke="#ffffff" stroke-width="0.35">90</text><text x="283.5" y="349.5" font-size="8.5" fill="#ffffff" text-anchor="middle" font-family="Liberation Sans" font-weight="normal" textLength="8" lengthAdjust="spacingAndGlyphs" stroke="#ffffff" stroke-width="0.35">90</text><path d="M270.7 353.9L274.7 349.9" stroke="#ffffff" stroke-width="1.1"/><path d="M276.0 353.9L280.0 349.9" stroke="#ffffff" stroke-width="1.1"/><path d="M281.4 353.9L285.4 349.9" stroke="#ffffff" stroke-width="1.1"/><path d="M343.5 309.5H360.5" stroke="#00dcdc" stroke-width="1"/><path d="M343.5 323.5H360.5" stroke="#00dcdc" stroke-width="1"/><path d="M347.5 307.4V325.4" stroke="#00dcdc" stroke-width="1"/><path d="M357.5 307.4V325.4" stroke="#00dcdc" stroke-width="1"/><rect x="346.2" y="308.4" width="2" height="2" fill="#00e400"/><rect x="346.2" y="322.4" width="2" height="2" fill="#00e400"/><rect x="356.9" y="308.4" width="2" height="2" fill="#00e400"/><rect x="356.9" y="322.4" width="2" height="2" fill="#00e400"/><path d="M365.5 309.5H387.5" stroke="#00e400" stroke-width="1"/><path d="M365.5 323.5H387.5" stroke="#00e400" stroke-width="1"/><path d="M381.0 311.4L385.0 307.4" stroke="#ffffff" stroke-width="1.1"/><path d="M381.0 318.4L385.0 314.4" stroke="#ffffff" stroke-width="1.1"/><path d="M381.0 325.4L385.0 321.4" stroke="#ffffff" stroke-width="1.1"/><text x="376.5" y="313.0" font-size="8.5" fill="#ffffff" text-anchor="middle" font-family="Liberation Sans" font-weight="normal" transform="rotate(-90 376.5 309.9)" textLength="12" lengthAdjust="spacingAndGlyphs" stroke="#ffffff" stroke-width="0.35">100</text><text x="376.5" y="326.0" font-size="8.5" fill="#ffffff" text-anchor="middle" font-family="Liberation Sans" font-weight="normal" transform="rotate(-90 376.5 322.9)" textLength="12" lengthAdjust="spacingAndGlyphs" stroke="#ffffff" stroke-width="0.35">100</text><path d="M347.5 328.4V356.4" stroke="#00e400" stroke-width="1"/><path d="M357.5 328.4V356.4" stroke="#00e400" stroke-width="1"/><text x="348.0" y="349.5" font-size="8.5" fill="#ffffff" text-anchor="middle" font-family="Liberation Sans" font-weight="normal" textLength="8" lengthAdjust="spacingAndGlyphs" stroke="#ffffff" stroke-width="0.35">90</text><text x="358.0" y="349.5" font-size="8.5" fill="#ffffff" text-anchor="middle" font-family="Liberation Sans" font-weight="normal" textLength="8" lengthAdjust="spacingAndGlyphs" stroke="#ffffff" stroke-width="0.35">90</text><path d="M345.2 353.9L349.2 349.9" stroke="#ffffff" stroke-width="1.1"/><path d="M350.5 353.9L354.5 349.9" stroke="#ffffff" stroke-width="1.1"/><path d="M355.9 353.9L359.9 349.9" stroke="#ffffff" stroke-width="1.1"/><path d="M418.1 309.5H435.1" stroke="#00dcdc" stroke-width="1"/><path d="M418.1 323.5H435.1" stroke="#00dcdc" stroke-width="1"/><path d="M421.5 307.4V325.4" stroke="#00dcdc" stroke-width="1"/><path d="M432.5 307.4V325.4" stroke="#00dcdc" stroke-width="1"/><rect x="420.8" y="308.4" width="2" height="2" fill="#00e400"/><rect x="420.8" y="322.4" width="2" height="2" fill="#00e400"/><rect x="431.5" y="308.4" width="2" height="2" fill="#00e400"/><rect x="431.5" y="322.4" width="2" height="2" fill="#00e400"/><path d="M440.1 309.5H462.1" stroke="#00e400" stroke-width="1"/><path d="M440.1 323.5H462.1" stroke="#00e400" stroke-width="1"/><path d="M455.6 311.4L459.6 307.4" stroke="#ffffff" stroke-width="1.1"/><path d="M455.6 318.4L459.6 314.4" stroke="#ffffff" stroke-width="1.1"/><path d="M455.6 325.4L459.6 321.4" stroke="#ffffff" stroke-width="1.1"/><text x="451.1" y="313.0" font-size="8.5" fill="#ffffff" text-anchor="middle" font-family="Liberation Sans" font-weight="normal" transform="rotate(-90 451.1 309.9)" textLength="12" lengthAdjust="spacingAndGlyphs" stroke="#ffffff" stroke-width="0.35">100</text><text x="451.1" y="326.0" font-size="8.5" fill="#ffffff" text-anchor="middle" font-family="Liberation Sans" font-weight="normal" transform="rotate(-90 451.1 322.9)" textLength="12" lengthAdjust="spacingAndGlyphs" stroke="#ffffff" stroke-width="0.35">100</text><path d="M421.5 328.4V356.4" stroke="#00e400" stroke-width="1"/><path d="M432.5 328.4V356.4" stroke="#00e400" stroke-width="1"/><text x="422.6" y="349.5" font-size="8.5" fill="#ffffff" text-anchor="middle" font-family="Liberation Sans" font-weight="normal" textLength="8" lengthAdjust="spacingAndGlyphs" stroke="#ffffff" stroke-width="0.35">90</text><text x="432.6" y="349.5" font-size="8.5" fill="#ffffff" text-anchor="middle" font-family="Liberation Sans" font-weight="normal" textLength="8" lengthAdjust="spacingAndGlyphs" stroke="#ffffff" stroke-width="0.35">90</text><path d="M419.8 353.9L423.8 349.9" stroke="#ffffff" stroke-width="1.1"/><path d="M425.1 353.9L429.1 349.9" stroke="#ffffff" stroke-width="1.1"/><path d="M430.5 353.9L434.5 349.9" stroke="#ffffff" stroke-width="1.1"/><path d="M492.6 309.5H509.6" stroke="#00dcdc" stroke-width="1"/><path d="M492.6 323.5H509.6" stroke="#00dcdc" stroke-width="1"/><path d="M496.5 307.4V325.4" stroke="#00dcdc" stroke-width="1"/><path d="M506.5 307.4V325.4" stroke="#00dcdc" stroke-width="1"/><rect x="495.3" y="308.4" width="2" height="2" fill="#00e400"/><rect x="495.3" y="322.4" width="2" height="2" fill="#00e400"/><rect x="506.0" y="308.4" width="2" height="2" fill="#00e400"/><rect x="506.0" y="322.4" width="2" height="2" fill="#00e400"/><path d="M514.6 309.5H536.6" stroke="#00e400" stroke-width="1"/><path d="M514.6 323.5H536.6" stroke="#00e400" stroke-width="1"/><path d="M530.1 311.4L534.1 307.4" stroke="#ffffff" stroke-width="1.1"/><path d="M530.1 318.4L534.1 314.4" stroke="#ffffff" stroke-width="1.1"/><path d="M530.1 325.4L534.1 321.4" stroke="#ffffff" stroke-width="1.1"/><text x="525.6" y="313.0" font-size="8.5" fill="#ffffff" text-anchor="middle" font-family="Liberation Sans" font-weight="normal" transform="rotate(-90 525.6 309.9)" textLength="12" lengthAdjust="spacingAndGlyphs" stroke="#ffffff" stroke-width="0.35">100</text><text x="525.6" y="326.0" font-size="8.5" fill="#ffffff" text-anchor="middle" font-family="Liberation Sans" font-weight="normal" transform="rotate(-90 525.6 322.9)" textLength="12" lengthAdjust="spacingAndGlyphs" stroke="#ffffff" stroke-width="0.35">100</text><path d="M496.5 328.4V356.4" stroke="#00e400" stroke-width="1"/><path d="M506.5 328.4V356.4" stroke="#00e400" stroke-width="1"/><text x="497.1" y="349.5" font-size="8.5" fill="#ffffff" text-anchor="middle" font-family="Liberation Sans" font-weight="normal" textLength="8" lengthAdjust="spacingAndGlyphs" stroke="#ffffff" stroke-width="0.35">90</text><text x="507.1" y="349.5" font-size="8.5" fill="#ffffff" text-anchor="middle" font-family="Liberation Sans" font-weight="normal" textLength="8" lengthAdjust="spacingAndGlyphs" stroke="#ffffff" stroke-width="0.35">90</text><path d="M494.3 353.9L498.3 349.9" stroke="#ffffff" stroke-width="1.1"/><path d="M499.6 353.9L503.6 349.9" stroke="#ffffff" stroke-width="1.1"/><path d="M505.0 353.9L509.0 349.9" stroke="#ffffff" stroke-width="1.1"/><path d="M567.1 309.5H584.1" stroke="#00dcdc" stroke-width="1"/><path d="M567.1 323.5H584.1" stroke="#00dcdc" stroke-width="1"/><path d="M570.5 307.4V325.4" stroke="#00dcdc" stroke-width="1"/><path d="M581.5 307.4V325.4" stroke="#00dcdc" stroke-width="1"/><rect x="569.8" y="308.4" width="2" height="2" fill="#00e400"/><rect x="569.8" y="322.4" width="2" height="2" fill="#00e400"/><rect x="580.5" y="308.4" width="2" height="2" fill="#00e400"/><rect x="580.5" y="322.4" width="2" height="2" fill="#00e400"/><path d="M589.1 309.5H611.1" stroke="#00e400" stroke-width="1"/><path d="M589.1 323.5H611.1" stroke="#00e400" stroke-width="1"/><path d="M604.6 311.4L608.6 307.4" stroke="#ffffff" stroke-width="1.1"/><path d="M604.6 318.4L608.6 314.4" stroke="#ffffff" stroke-width="1.1"/><path d="M604.6 325.4L608.6 321.4" stroke="#ffffff" stroke-width="1.1"/><text x="600.1" y="313.0" font-size="8.5" fill="#ffffff" text-anchor="middle" font-family="Liberation Sans" font-weight="normal" transform="rotate(-90 600.1 309.9)" textLength="12" lengthAdjust="spacingAndGlyphs" stroke="#ffffff" stroke-width="0.35">100</text><text x="600.1" y="326.0" font-size="8.5" fill="#ffffff" text-anchor="middle" font-family="Liberation Sans" font-weight="normal" transform="rotate(-90 600.1 322.9)" textLength="12" lengthAdjust="spacingAndGlyphs" stroke="#ffffff" stroke-width="0.35">100</text><path d="M570.5 328.4V356.4" stroke="#00e400" stroke-width="1"/><path d="M581.5 328.4V356.4" stroke="#00e400" stroke-width="1"/><text x="571.6" y="349.5" font-size="8.5" fill="#ffffff" text-anchor="middle" font-family="Liberation Sans" font-weight="normal" textLength="8" lengthAdjust="spacingAndGlyphs" stroke="#ffffff" stroke-width="0.35">90</text><text x="581.6" y="349.5" font-size="8.5" fill="#ffffff" text-anchor="middle" font-family="Liberation Sans" font-weight="normal" textLength="8" lengthAdjust="spacingAndGlyphs" stroke="#ffffff" stroke-width="0.35">90</text><path d="M568.8 353.9L572.8 349.9" stroke="#ffffff" stroke-width="1.1"/><path d="M574.1 353.9L578.1 349.9" stroke="#ffffff" stroke-width="1.1"/><path d="M579.5 353.9L583.5 349.9" stroke="#ffffff" stroke-width="1.1"/><path d="M641.6 309.5H658.6" stroke="#00dcdc" stroke-width="1"/><path d="M641.6 323.5H658.6" stroke="#00dcdc" stroke-width="1"/><path d="M645.5 307.4V325.4" stroke="#00dcdc" stroke-width="1"/><path d="M656.5 307.4V325.4" stroke="#00dcdc" stroke-width="1"/><rect x="644.4" y="308.4" width="2" height="2" fill="#00e400"/><rect x="644.4" y="322.4" width="2" height="2" fill="#00e400"/><rect x="655.0" y="308.4" width="2" height="2" fill="#00e400"/><rect x="655.0" y="322.4" width="2" height="2" fill="#00e400"/><path d="M663.6 309.5H685.6" stroke="#00e400" stroke-width="1"/><path d="M663.6 323.5H685.6" stroke="#00e400" stroke-width="1"/><path d="M679.1 311.4L683.1 307.4" stroke="#ffffff" stroke-width="1.1"/><path d="M679.1 318.4L683.1 314.4" stroke="#ffffff" stroke-width="1.1"/><path d="M679.1 325.4L683.1 321.4" stroke="#ffffff" stroke-width="1.1"/><text x="674.6" y="313.0" font-size="8.5" fill="#ffffff" text-anchor="middle" font-family="Liberation Sans" font-weight="normal" transform="rotate(-90 674.6 309.9)" textLength="12" lengthAdjust="spacingAndGlyphs" stroke="#ffffff" stroke-width="0.35">100</text><text x="674.6" y="326.0" font-size="8.5" fill="#ffffff" text-anchor="middle" font-family="Liberation Sans" font-weight="normal" transform="rotate(-90 674.6 322.9)" textLength="12" lengthAdjust="spacingAndGlyphs" stroke="#ffffff" stroke-width="0.35">100</text><path d="M645.5 328.4V356.4" stroke="#00e400" stroke-width="1"/><path d="M656.5 328.4V356.4" stroke="#00e400" stroke-width="1"/><text x="646.1" y="349.5" font-size="8.5" fill="#ffffff" text-anchor="middle" font-family="Liberation Sans" font-weight="normal" textLength="8" lengthAdjust="spacingAndGlyphs" stroke="#ffffff" stroke-width="0.35">90</text><text x="656.1" y="349.5" font-size="8.5" fill="#ffffff" text-anchor="middle" font-family="Liberation Sans" font-weight="normal" textLength="8" lengthAdjust="spacingAndGlyphs" stroke="#ffffff" stroke-width="0.35">90</text><path d="M643.4 353.9L647.4 349.9" stroke="#ffffff" stroke-width="1.1"/><path d="M648.6 353.9L652.6 349.9" stroke="#ffffff" stroke-width="1.1"/><path d="M654.0 353.9L658.0 349.9" stroke="#ffffff" stroke-width="1.1"/><path d="M716.2 309.5H733.2" stroke="#00dcdc" stroke-width="1"/><path d="M716.2 323.5H733.2" stroke="#00dcdc" stroke-width="1"/><path d="M719.5 307.4V325.4" stroke="#00dcdc" stroke-width="1"/><path d="M730.5 307.4V325.4" stroke="#00dcdc" stroke-width="1"/><rect x="718.9" y="308.4" width="2" height="2" fill="#00e400"/><rect x="718.9" y="322.4" width="2" height="2" fill="#00e400"/><rect x="729.6" y="308.4" width="2" height="2" fill="#00e400"/><rect x="729.6" y="322.4" width="2" height="2" fill="#00e400"/><path d="M738.2 309.5H760.2" stroke="#00e400" stroke-width="1"/><path d="M738.2 323.5H760.2" stroke="#00e400" stroke-width="1"/><path d="M753.7 311.4L757.7 307.4" stroke="#ffffff" stroke-width="1.1"/><path d="M753.7 318.4L757.7 314.4" stroke="#ffffff" stroke-width="1.1"/><path d="M753.7 325.4L757.7 321.4" stroke="#ffffff" stroke-width="1.1"/><text x="749.2" y="313.0" font-size="8.5" fill="#ffffff" text-anchor="middle" font-family="Liberation Sans" font-weight="normal" transform="rotate(-90 749.2 309.9)" textLength="12" lengthAdjust="spacingAndGlyphs" stroke="#ffffff" stroke-width="0.35">100</text><text x="749.2" y="326.0" font-size="8.5" fill="#ffffff" text-anchor="middle" font-family="Liberation Sans" font-weight="normal" transform="rotate(-90 749.2 322.9)" textLength="12" lengthAdjust="spacingAndGlyphs" stroke="#ffffff" stroke-width="0.35">100</text><path d="M719.5 328.4V356.4" stroke="#00e400" stroke-width="1"/><path d="M730.5 328.4V356.4" stroke="#00e400" stroke-width="1"/><text x="720.7" y="349.5" font-size="8.5" fill="#ffffff" text-anchor="middle" font-family="Liberation Sans" font-weight="normal" textLength="8" lengthAdjust="spacingAndGlyphs" stroke="#ffffff" stroke-width="0.35">90</text><text x="730.7" y="349.5" font-size="8.5" fill="#ffffff" text-anchor="middle" font-family="Liberation Sans" font-weight="normal" textLength="8" lengthAdjust="spacingAndGlyphs" stroke="#ffffff" stroke-width="0.35">90</text><path d="M717.9 353.9L721.9 349.9" stroke="#ffffff" stroke-width="1.1"/><path d="M723.2 353.9L727.2 349.9" stroke="#ffffff" stroke-width="1.1"/><path d="M728.6 353.9L732.6 349.9" stroke="#ffffff" stroke-width="1.1"/><path d="M790.7 309.5H807.7" stroke="#00dcdc" stroke-width="1"/><path d="M790.7 323.5H807.7" stroke="#00dcdc" stroke-width="1"/><path d="M794.5 307.4V325.4" stroke="#00dcdc" stroke-width="1"/><path d="M805.5 307.4V325.4" stroke="#00dcdc" stroke-width="1"/><rect x="793.4" y="308.4" width="2" height="2" fill="#00e400"/><rect x="793.4" y="322.4" width="2" height="2" fill="#00e400"/><rect x="804.1" y="308.4" width="2" height="2" fill="#00e400"/><rect x="804.1" y="322.4" width="2" height="2" fill="#00e400"/><path d="M812.7 309.5H834.7" stroke="#00e400" stroke-width="1"/><path d="M812.7 323.5H834.7" stroke="#00e400" stroke-width="1"/><path d="M828.2 311.4L832.2 307.4" stroke="#ffffff" stroke-width="1.1"/><path d="M828.2 318.4L832.2 314.4" stroke="#ffffff" stroke-width="1.1"/><path d="M828.2 325.4L832.2 321.4" stroke="#ffffff" stroke-width="1.1"/><text x="823.7" y="313.0" font-size="8.5" fill="#ffffff" text-anchor="middle" font-family="Liberation Sans" font-weight="normal" transform="rotate(-90 823.7 309.9)" textLength="12" lengthAdjust="spacingAndGlyphs" stroke="#ffffff" stroke-width="0.35">100</text><text x="823.7" y="326.0" font-size="8.5" fill="#ffffff" text-anchor="middle" font-family="Liberation Sans" font-weight="normal" transform="rotate(-90 823.7 322.9)" textLength="12" lengthAdjust="spacingAndGlyphs" stroke="#ffffff" stroke-width="0.35">100</text><path d="M794.5 328.4V356.4" stroke="#00e400" stroke-width="1"/><path d="M805.5 328.4V356.4" stroke="#00e400" stroke-width="1"/><text x="795.2" y="349.5" font-size="8.5" fill="#ffffff" text-anchor="middle" font-family="Liberation Sans" font-weight="normal" textLength="8" lengthAdjust="spacingAndGlyphs" stroke="#ffffff" stroke-width="0.35">90</text><text x="805.2" y="349.5" font-size="8.5" fill="#ffffff" text-anchor="middle" font-family="Liberation Sans" font-weight="normal" textLength="8" lengthAdjust="spacingAndGlyphs" stroke="#ffffff" stroke-width="0.35">90</text><path d="M792.4 353.9L796.4 349.9" stroke="#ffffff" stroke-width="1.1"/><path d="M797.7 353.9L801.7 349.9" stroke="#ffffff" stroke-width="1.1"/><path d="M803.1 353.9L807.1 349.9" stroke="#ffffff" stroke-width="1.1"/><path d="M865.2 309.5H882.2" stroke="#00dcdc" stroke-width="1"/><path d="M865.2 323.5H882.2" stroke="#00dcdc" stroke-width="1"/><path d="M868.5 307.4V325.4" stroke="#00dcdc" stroke-width="1"/><path d="M879.5 307.4V325.4" stroke="#00dcdc" stroke-width="1"/><rect x="867.9" y="308.4" width="2" height="2" fill="#00e400"/><rect x="867.9" y="322.4" width="2" height="2" fill="#00e400"/><rect x="878.6" y="308.4" width="2" height="2" fill="#00e400"/><rect x="878.6" y="322.4" width="2" height="2" fill="#00e400"/><path d="M887.2 309.5H909.2" stroke="#00e400" stroke-width="1"/><path d="M887.2 323.5H909.2" stroke="#00e400" stroke-width="1"/><path d="M902.7 311.4L906.7 307.4" stroke="#ffffff" stroke-width="1.1"/><path d="M902.7 318.4L906.7 314.4" stroke="#ffffff" stroke-width="1.1"/><path d="M902.7 325.4L906.7 321.4" stroke="#ffffff" stroke-width="1.1"/><text x="898.2" y="313.0" font-size="8.5" fill="#ffffff" text-anchor="middle" font-family="Liberation Sans" font-weight="normal" transform="rotate(-90 898.2 309.9)" textLength="12" lengthAdjust="spacingAndGlyphs" stroke="#ffffff" stroke-width="0.35">100</text><text x="898.2" y="326.0" font-size="8.5" fill="#ffffff" text-anchor="middle" font-family="Liberation Sans" font-weight="normal" transform="rotate(-90 898.2 322.9)" textLength="12" lengthAdjust="spacingAndGlyphs" stroke="#ffffff" stroke-width="0.35">100</text><path d="M868.5 328.4V356.4" stroke="#00e400" stroke-width="1"/><path d="M879.5 328.4V356.4" stroke="#00e400" stroke-width="1"/><text x="869.7" y="349.5" font-size="8.5" fill="#ffffff" text-anchor="middle" font-family="Liberation Sans" font-weight="normal" textLength="8" lengthAdjust="spacingAndGlyphs" stroke="#ffffff" stroke-width="0.35">90</text><text x="879.7" y="349.5" font-size="8.5" fill="#ffffff" text-anchor="middle" font-family="Liberation Sans" font-weight="normal" textLength="8" lengthAdjust="spacingAndGlyphs" stroke="#ffffff" stroke-width="0.35">90</text><path d="M866.9 353.9L870.9 349.9" stroke="#ffffff" stroke-width="1.1"/><path d="M872.2 353.9L876.2 349.9" stroke="#ffffff" stroke-width="1.1"/><path d="M877.6 353.9L881.6 349.9" stroke="#ffffff" stroke-width="1.1"/><path d="M939.8 309.5H956.8" stroke="#00dcdc" stroke-width="1"/><path d="M939.8 323.5H956.8" stroke="#00dcdc" stroke-width="1"/><path d="M943.5 307.4V325.4" stroke="#00dcdc" stroke-width="1"/><path d="M954.5 307.4V325.4" stroke="#00dcdc" stroke-width="1"/><rect x="942.5" y="308.4" width="2" height="2" fill="#00e400"/><rect x="942.5" y="322.4" width="2" height="2" fill="#00e400"/><rect x="953.2" y="308.4" width="2" height="2" fill="#00e400"/><rect x="953.2" y="322.4" width="2" height="2" fill="#00e400"/><path d="M961.8 309.5H983.8" stroke="#00e400" stroke-width="1"/><path d="M961.8 323.5H983.8" stroke="#00e400" stroke-width="1"/><path d="M977.3 311.4L981.3 307.4" stroke="#ffffff" stroke-width="1.1"/><path d="M977.3 318.4L981.3 314.4" stroke="#ffffff" stroke-width="1.1"/><path d="M977.3 325.4L981.3 321.4" stroke="#ffffff" stroke-width="1.1"/><text x="972.8" y="313.0" font-size="8.5" fill="#ffffff" text-anchor="middle" font-family="Liberation Sans" font-weight="normal" transform="rotate(-90 972.8 309.9)" textLength="12" lengthAdjust="spacingAndGlyphs" stroke="#ffffff" stroke-width="0.35">100</text><text x="972.8" y="326.0" font-size="8.5" fill="#ffffff" text-anchor="middle" font-family="Liberation Sans" font-weight="normal" transform="rotate(-90 972.8 322.9)" textLength="12" lengthAdjust="spacingAndGlyphs" stroke="#ffffff" stroke-width="0.35">100</text><path d="M943.5 328.4V356.4" stroke="#00e400" stroke-width="1"/><path d="M954.5 328.4V356.4" stroke="#00e400" stroke-width="1"/><text x="944.3" y="349.5" font-size="8.5" fill="#ffffff" text-anchor="middle" font-family="Liberation Sans" font-weight="normal" textLength="8" lengthAdjust="spacingAndGlyphs" stroke="#ffffff" stroke-width="0.35">90</text><text x="954.3" y="349.5" font-size="8.5" fill="#ffffff" text-anchor="middle" font-family="Liberation Sans" font-weight="normal" textLength="8" lengthAdjust="spacingAndGlyphs" stroke="#ffffff" stroke-width="0.35">90</text><path d="M941.5 353.9L945.5 349.9" stroke="#ffffff" stroke-width="1.1"/><path d="M946.8 353.9L950.8 349.9" stroke="#ffffff" stroke-width="1.1"/><path d="M952.2 353.9L956.2 349.9" stroke="#ffffff" stroke-width="1.1"/><path d="M1014.3 309.5H1031.3" stroke="#00dcdc" stroke-width="1"/><path d="M1014.3 323.5H1031.3" stroke="#00dcdc" stroke-width="1"/><path d="M1018.5 307.4V325.4" stroke="#00dcdc" stroke-width="1"/><path d="M1028.5 307.4V325.4" stroke="#00dcdc" stroke-width="1"/><rect x="1017.0" y="308.4" width="2" height="2" fill="#00e400"/><rect x="1017.0" y="322.4" width="2" height="2" fill="#00e400"/><rect x="1027.7" y="308.4" width="2" height="2" fill="#00e400"/><rect x="1027.7" y="322.4" width="2" height="2" fill="#00e400"/><path d="M1036.3 309.5H1058.3" stroke="#00e400" stroke-width="1"/><path d="M1036.3 323.5H1058.3" stroke="#00e400" stroke-width="1"/><path d="M1051.8 311.4L1055.8 307.4" stroke="#ffffff" stroke-width="1.1"/><path d="M1051.8 318.4L1055.8 314.4" stroke="#ffffff" stroke-width="1.1"/><path d="M1051.8 325.4L1055.8 321.4" stroke="#ffffff" stroke-width="1.1"/><text x="1047.3" y="313.0" font-size="8.5" fill="#ffffff" text-anchor="middle" font-family="Liberation Sans" font-weight="normal" transform="rotate(-90 1047.3 309.9)" textLength="12" lengthAdjust="spacingAndGlyphs" stroke="#ffffff" stroke-width="0.35">100</text><text x="1047.3" y="326.0" font-size="8.5" fill="#ffffff" text-anchor="middle" font-family="Liberation Sans" font-weight="normal" transform="rotate(-90 1047.3 322.9)" textLength="12" lengthAdjust="spacingAndGlyphs" stroke="#ffffff" stroke-width="0.35">100</text><path d="M1018.5 328.4V356.4" stroke="#00e400" stroke-width="1"/><path d="M1028.5 328.4V356.4" stroke="#00e400" stroke-width="1"/><text x="1018.8" y="349.5" font-size="8.5" fill="#ffffff" text-anchor="middle" font-family="Liberation Sans" font-weight="normal" textLength="8" lengthAdjust="spacingAndGlyphs" stroke="#ffffff" stroke-width="0.35">90</text><text x="1028.8" y="349.5" font-size="8.5" fill="#ffffff" text-anchor="middle" font-family="Liberation Sans" font-weight="normal" textLength="8" lengthAdjust="spacingAndGlyphs" stroke="#ffffff" stroke-width="0.35">90</text><path d="M1016.0 353.9L1020.0 349.9" stroke="#ffffff" stroke-width="1.1"/><path d="M1021.3 353.9L1025.3 349.9" stroke="#ffffff" stroke-width="1.1"/><path d="M1026.7 353.9L1030.7 349.9" stroke="#ffffff" stroke-width="1.1"/><path d="M1088.8 309.5H1105.8" stroke="#00dcdc" stroke-width="1"/><path d="M1088.8 323.5H1105.8" stroke="#00dcdc" stroke-width="1"/><path d="M1092.5 307.4V325.4" stroke="#00dcdc" stroke-width="1"/><path d="M1103.5 307.4V325.4" stroke="#00dcdc" stroke-width="1"/><rect x="1091.5" y="308.4" width="2" height="2" fill="#00e400"/><rect x="1091.5" y="322.4" width="2" height="2" fill="#00e400"/><rect x="1102.2" y="308.4" width="2" height="2" fill="#00e400"/><rect x="1102.2" y="322.4" width="2" height="2" fill="#00e400"/><path d="M1110.8 309.5H1132.8" stroke="#00e400" stroke-width="1"/><path d="M1110.8 323.5H1132.8" stroke="#00e400" stroke-width="1"/><path d="M1126.3 311.4L1130.3 307.4" stroke="#ffffff" stroke-width="1.1"/><path d="M1126.3 318.4L1130.3 314.4" stroke="#ffffff" stroke-width="1.1"/><path d="M1126.3 325.4L1130.3 321.4" stroke="#ffffff" stroke-width="1.1"/><text x="1121.8" y="313.0" font-size="8.5" fill="#ffffff" text-anchor="middle" font-family="Liberation Sans" font-weight="normal" transform="rotate(-90 1121.8 309.9)" textLength="12" lengthAdjust="spacingAndGlyphs" stroke="#ffffff" stroke-width="0.35">100</text><text x="1121.8" y="326.0" font-size="8.5" fill="#ffffff" text-anchor="middle" font-family="Liberation Sans" font-weight="normal" transform="rotate(-90 1121.8 322.9)" textLength="12" lengthAdjust="spacingAndGlyphs" stroke="#ffffff" stroke-width="0.35">100</text><path d="M1092.5 328.4V356.4" stroke="#00e400" stroke-width="1"/><path d="M1103.5 328.4V356.4" stroke="#00e400" stroke-width="1"/><text x="1093.3" y="349.5" font-size="8.5" fill="#ffffff" text-anchor="middle" font-family="Liberation Sans" font-weight="normal" textLength="8" lengthAdjust="spacingAndGlyphs" stroke="#ffffff" stroke-width="0.35">90</text><text x="1103.3" y="349.5" font-size="8.5" fill="#ffffff" text-anchor="middle" font-family="Liberation Sans" font-weight="normal" textLength="8" lengthAdjust="spacingAndGlyphs" stroke="#ffffff" stroke-width="0.35">90</text><path d="M1090.5 353.9L1094.5 349.9" stroke="#ffffff" stroke-width="1.1"/><path d="M1095.8 353.9L1099.8 349.9" stroke="#ffffff" stroke-width="1.1"/><path d="M1101.2 353.9L1105.2 349.9" stroke="#ffffff" stroke-width="1.1"/><path d="M1163.4 309.5H1180.4" stroke="#00dcdc" stroke-width="1"/><path d="M1163.4 323.5H1180.4" stroke="#00dcdc" stroke-width="1"/><path d="M1167.5 307.4V325.4" stroke="#00dcdc" stroke-width="1"/><path d="M1177.5 307.4V325.4" stroke="#00dcdc" stroke-width="1"/><rect x="1166.1" y="308.4" width="2" height="2" fill="#00e400"/><rect x="1166.1" y="322.4" width="2" height="2" fill="#00e400"/><rect x="1176.8" y="308.4" width="2" height="2" fill="#00e400"/><rect x="1176.8" y="322.4" width="2" height="2" fill="#00e400"/><path d="M1185.4 309.5H1207.4" stroke="#00e400" stroke-width="1"/><path d="M1185.4 323.5H1207.4" stroke="#00e400" stroke-width="1"/><path d="M1200.9 311.4L1204.9 307.4" stroke="#ffffff" stroke-width="1.1"/><path d="M1200.9 318.4L1204.9 314.4" stroke="#ffffff" stroke-width="1.1"/><path d="M1200.9 325.4L1204.9 321.4" stroke="#ffffff" stroke-width="1.1"/><text x="1196.4" y="313.0" font-size="8.5" fill="#ffffff" text-anchor="middle" font-family="Liberation Sans" font-weight="normal" transform="rotate(-90 1196.4 309.9)" textLength="12" lengthAdjust="spacingAndGlyphs" stroke="#ffffff" stroke-width="0.35">100</text><text x="1196.4" y="326.0" font-size="8.5" fill="#ffffff" text-anchor="middle" font-family="Liberation Sans" font-weight="normal" transform="rotate(-90 1196.4 322.9)" textLength="12" lengthAdjust="spacingAndGlyphs" stroke="#ffffff" stroke-width="0.35">100</text><path d="M1167.5 328.4V356.4" stroke="#00e400" stroke-width="1"/><path d="M1177.5 328.4V356.4" stroke="#00e400" stroke-width="1"/><text x="1167.9" y="349.5" font-size="8.5" fill="#ffffff" text-anchor="middle" font-family="Liberation Sans" font-weight="normal" textLength="8" lengthAdjust="spacingAndGlyphs" stroke="#ffffff" stroke-width="0.35">90</text><text x="1177.9" y="349.5" font-size="8.5" fill="#ffffff" text-anchor="middle" font-family="Liberation Sans" font-weight="normal" textLength="8" lengthAdjust="spacingAndGlyphs" stroke="#ffffff" stroke-width="0.35">90</text><path d="M1165.1 353.9L1169.1 349.9" stroke="#ffffff" stroke-width="1.1"/><path d="M1170.4 353.9L1174.4 349.9" stroke="#ffffff" stroke-width="1.1"/><path d="M1175.8 353.9L1179.8 349.9" stroke="#ffffff" stroke-width="1.1"/><path d="M1237.9 309.5H1254.9" stroke="#00dcdc" stroke-width="1"/><path d="M1237.9 323.5H1254.9" stroke="#00dcdc" stroke-width="1"/><path d="M1241.5 307.4V325.4" stroke="#00dcdc" stroke-width="1"/><path d="M1252.5 307.4V325.4" stroke="#00dcdc" stroke-width="1"/><rect x="1240.6" y="308.4" width="2" height="2" fill="#00e400"/><rect x="1240.6" y="322.4" width="2" height="2" fill="#00e400"/><rect x="1251.3" y="308.4" width="2" height="2" fill="#00e400"/><rect x="1251.3" y="322.4" width="2" height="2" fill="#00e400"/><path d="M1259.9 309.5H1281.9" stroke="#00e400" stroke-width="1"/><path d="M1259.9 323.5H1281.9" stroke="#00e400" stroke-width="1"/><path d="M1275.4 311.4L1279.4 307.4" stroke="#ffffff" stroke-width="1.1"/><path d="M1275.4 318.4L1279.4 314.4" stroke="#ffffff" stroke-width="1.1"/><path d="M1275.4 325.4L1279.4 321.4" stroke="#ffffff" stroke-width="1.1"/><text x="1270.9" y="313.0" font-size="8.5" fill="#ffffff" text-anchor="middle" font-family="Liberation Sans" font-weight="normal" transform="rotate(-90 1270.9 309.9)" textLength="12" lengthAdjust="spacingAndGlyphs" stroke="#ffffff" stroke-width="0.35">100</text><text x="1270.9" y="326.0" font-size="8.5" fill="#ffffff" text-anchor="middle" font-family="Liberation Sans" font-weight="normal" transform="rotate(-90 1270.9 322.9)" textLength="12" lengthAdjust="spacingAndGlyphs" stroke="#ffffff" stroke-width="0.35">100</text><path d="M1241.5 328.4V356.4" stroke="#00e400" stroke-width="1"/><path d="M1252.5 328.4V356.4" stroke="#00e400" stroke-width="1"/><text x="1242.4" y="349.5" font-size="8.5" fill="#ffffff" text-anchor="middle" font-family="Liberation Sans" font-weight="normal" textLength="8" lengthAdjust="spacingAndGlyphs" stroke="#ffffff" stroke-width="0.35">90</text><text x="1252.4" y="349.5" font-size="8.5" fill="#ffffff" text-anchor="middle" font-family="Liberation Sans" font-weight="normal" textLength="8" lengthAdjust="spacingAndGlyphs" stroke="#ffffff" stroke-width="0.35">90</text><path d="M1239.6 353.9L1243.6 349.9" stroke="#ffffff" stroke-width="1.1"/><path d="M1244.9 353.9L1248.9 349.9" stroke="#ffffff" stroke-width="1.1"/><path d="M1250.3 353.9L1254.3 349.9" stroke="#ffffff" stroke-width="1.1"/><path d="M1301.8 309.5H1318.8" stroke="#00dcdc" stroke-width="1"/><path d="M1301.8 323.5H1318.8" stroke="#00dcdc" stroke-width="1"/><path d="M1305.5 307.4V325.4" stroke="#00dcdc" stroke-width="1"/><path d="M1316.5 307.4V325.4" stroke="#00dcdc" stroke-width="1"/><rect x="1304.5" y="308.4" width="2" height="2" fill="#00e400"/><rect x="1304.5" y="322.4" width="2" height="2" fill="#00e400"/><rect x="1315.2" y="308.4" width="2" height="2" fill="#00e400"/><rect x="1315.2" y="322.4" width="2" height="2" fill="#00e400"/><path d="M1323.8 309.5H1345.8" stroke="#00e400" stroke-width="1"/><path d="M1323.8 323.5H1345.8" stroke="#00e400" stroke-width="1"/><path d="M1339.3 311.4L1343.3 307.4" stroke="#ffffff" stroke-width="1.1"/><path d="M1339.3 318.4L1343.3 314.4" stroke="#ffffff" stroke-width="1.1"/><path d="M1339.3 325.4L1343.3 321.4" stroke="#ffffff" stroke-width="1.1"/><text x="1334.8" y="313.0" font-size="8.5" fill="#ffffff" text-anchor="middle" font-family="Liberation Sans" font-weight="normal" transform="rotate(-90 1334.8 309.9)" textLength="12" lengthAdjust="spacingAndGlyphs" stroke="#ffffff" stroke-width="0.35">100</text><text x="1334.8" y="326.0" font-size="8.5" fill="#ffffff" text-anchor="middle" font-family="Liberation Sans" font-weight="normal" transform="rotate(-90 1334.8 322.9)" textLength="12" lengthAdjust="spacingAndGlyphs" stroke="#ffffff" stroke-width="0.35">100</text><path d="M1305.5 328.4V356.4" stroke="#00e400" stroke-width="1"/><path d="M1316.5 328.4V356.4" stroke="#00e400" stroke-width="1"/><text x="1306.3" y="349.5" font-size="8.5" fill="#ffffff" text-anchor="middle" font-family="Liberation Sans" font-weight="normal" textLength="8" lengthAdjust="spacingAndGlyphs" stroke="#ffffff" stroke-width="0.35">90</text><text x="1316.3" y="349.5" font-size="8.5" fill="#ffffff" text-anchor="middle" font-family="Liberation Sans" font-weight="normal" textLength="8" lengthAdjust="spacingAndGlyphs" stroke="#ffffff" stroke-width="0.35">90</text><path d="M1303.5 353.9L1307.5 349.9" stroke="#ffffff" stroke-width="1.1"/><path d="M1308.8 353.9L1312.8 349.9" stroke="#ffffff" stroke-width="1.1"/><path d="M1314.2 353.9L1318.2 349.9" stroke="#ffffff" stroke-width="1.1"/><path d="M1376.3 309.5H1393.3" stroke="#00dcdc" stroke-width="1"/><path d="M1376.3 323.5H1393.3" stroke="#00dcdc" stroke-width="1"/><path d="M1380.5 307.4V325.4" stroke="#00dcdc" stroke-width="1"/><path d="M1390.5 307.4V325.4" stroke="#00dcdc" stroke-width="1"/><rect x="1379.0" y="308.4" width="2" height="2" fill="#00e400"/><rect x="1379.0" y="322.4" width="2" height="2" fill="#00e400"/><rect x="1389.7" y="308.4" width="2" height="2" fill="#00e400"/><rect x="1389.7" y="322.4" width="2" height="2" fill="#00e400"/><path d="M1398.3 309.5H1420.3" stroke="#00e400" stroke-width="1"/><path d="M1398.3 323.5H1420.3" stroke="#00e400" stroke-width="1"/><path d="M1413.8 311.4L1417.8 307.4" stroke="#ffffff" stroke-width="1.1"/><path d="M1413.8 318.4L1417.8 314.4" stroke="#ffffff" stroke-width="1.1"/><path d="M1413.8 325.4L1417.8 321.4" stroke="#ffffff" stroke-width="1.1"/><text x="1409.3" y="313.0" font-size="8.5" fill="#ffffff" text-anchor="middle" font-family="Liberation Sans" font-weight="normal" transform="rotate(-90 1409.3 309.9)" textLength="12" lengthAdjust="spacingAndGlyphs" stroke="#ffffff" stroke-width="0.35">100</text><text x="1409.3" y="326.0" font-size="8.5" fill="#ffffff" text-anchor="middle" font-family="Liberation Sans" font-weight="normal" transform="rotate(-90 1409.3 322.9)" textLength="12" lengthAdjust="spacingAndGlyphs" stroke="#ffffff" stroke-width="0.35">100</text><path d="M1380.5 328.4V356.4" stroke="#00e400" stroke-width="1"/><path d="M1390.5 328.4V356.4" stroke="#00e400" stroke-width="1"/><text x="1380.8" y="349.5" font-size="8.5" fill="#ffffff" text-anchor="middle" font-family="Liberation Sans" font-weight="normal" textLength="8" lengthAdjust="spacingAndGlyphs" stroke="#ffffff" stroke-width="0.35">90</text><text x="1390.8" y="349.5" font-size="8.5" fill="#ffffff" text-anchor="middle" font-family="Liberation Sans" font-weight="normal" textLength="8" lengthAdjust="spacingAndGlyphs" stroke="#ffffff" stroke-width="0.35">90</text><path d="M1378.0 353.9L1382.0 349.9" stroke="#ffffff" stroke-width="1.1"/><path d="M1383.3 353.9L1387.3 349.9" stroke="#ffffff" stroke-width="1.1"/><path d="M1388.7 353.9L1392.7 349.9" stroke="#ffffff" stroke-width="1.1"/><path d="M269.0 410.5H286.0" stroke="#00dcdc" stroke-width="1"/><path d="M269.0 424.5H286.0" stroke="#00dcdc" stroke-width="1"/><path d="M272.5 408.6V426.6" stroke="#00dcdc" stroke-width="1"/><path d="M283.5 408.6V426.6" stroke="#00dcdc" stroke-width="1"/><rect x="271.7" y="409.6" width="2" height="2" fill="#00e400"/><rect x="271.7" y="423.6" width="2" height="2" fill="#00e400"/><rect x="282.4" y="409.6" width="2" height="2" fill="#00e400"/><rect x="282.4" y="423.6" width="2" height="2" fill="#00e400"/><path d="M291.0 410.5H313.0" stroke="#00e400" stroke-width="1"/><path d="M291.0 424.5H313.0" stroke="#00e400" stroke-width="1"/><path d="M306.5 412.6L310.5 408.6" stroke="#ffffff" stroke-width="1.1"/><path d="M306.5 419.6L310.5 415.6" stroke="#ffffff" stroke-width="1.1"/><path d="M306.5 426.6L310.5 422.6" stroke="#ffffff" stroke-width="1.1"/><text x="302.0" y="414.1" font-size="8.5" fill="#ffffff" text-anchor="middle" font-family="Liberation Sans" font-weight="normal" transform="rotate(-90 302.0 411.1)" textLength="12" lengthAdjust="spacingAndGlyphs" stroke="#ffffff" stroke-width="0.35">100</text><text x="302.0" y="427.1" font-size="8.5" fill="#ffffff" text-anchor="middle" font-family="Liberation Sans" font-weight="normal" transform="rotate(-90 302.0 424.1)" textLength="12" lengthAdjust="spacingAndGlyphs" stroke="#ffffff" stroke-width="0.35">100</text><path d="M272.5 429.6V457.6" stroke="#00e400" stroke-width="1"/><path d="M283.5 429.6V457.6" stroke="#00e400" stroke-width="1"/><text x="273.5" y="450.6" font-size="8.5" fill="#ffffff" text-anchor="middle" font-family="Liberation Sans" font-weight="normal" textLength="8" lengthAdjust="spacingAndGlyphs" stroke="#ffffff" stroke-width="0.35">90</text><text x="283.5" y="450.6" font-size="8.5" fill="#ffffff" text-anchor="middle" font-family="Liberation Sans" font-weight="normal" textLength="8" lengthAdjust="spacingAndGlyphs" stroke="#ffffff" stroke-width="0.35">90</text><path d="M270.7 455.1L274.7 451.1" stroke="#ffffff" stroke-width="1.1"/><path d="M276.0 455.1L280.0 451.1" stroke="#ffffff" stroke-width="1.1"/><path d="M281.4 455.1L285.4 451.1" stroke="#ffffff" stroke-width="1.1"/><path d="M343.5 410.5H360.5" stroke="#00dcdc" stroke-width="1"/><path d="M343.5 424.5H360.5" stroke="#00dcdc" stroke-width="1"/><path d="M347.5 408.6V426.6" stroke="#00dcdc" stroke-width="1"/><path d="M357.5 408.6V426.6" stroke="#00dcdc" stroke-width="1"/><rect x="346.2" y="409.6" width="2" height="2" fill="#00e400"/><rect x="346.2" y="423.6" width="2" height="2" fill="#00e400"/><rect x="356.9" y="409.6" width="2" height="2" fill="#00e400"/><rect x="356.9" y="423.6" width="2" height="2" fill="#00e400"/><path d="M365.5 410.5H387.5" stroke="#00e400" stroke-width="1"/><path d="M365.5 424.5H387.5" stroke="#00e400" stroke-width="1"/><path d="M381.0 412.6L385.0 408.6" stroke="#ffffff" stroke-width="1.1"/><path d="M381.0 419.6L385.0 415.6" stroke="#ffffff" stroke-width="1.1"/><path d="M381.0 426.6L385.0 422.6" stroke="#ffffff" stroke-width="1.1"/><text x="376.5" y="414.1" font-size="8.5" fill="#ffffff" text-anchor="middle" font-family="Liberation Sans" font-weight="normal" transform="rotate(-90 376.5 411.1)" textLength="12" lengthAdjust="spacingAndGlyphs" stroke="#ffffff" stroke-width="0.35">100</text><text x="376.5" y="427.1" font-size="8.5" fill="#ffffff" text-anchor="middle" font-family="Liberation Sans" font-weight="normal" transform="rotate(-90 376.5 424.1)" textLength="12" lengthAdjust="spacingAndGlyphs" stroke="#ffffff" stroke-width="0.35">100</text><path d="M347.5 429.6V457.6" stroke="#00e400" stroke-width="1"/><path d="M357.5 429.6V457.6" stroke="#00e400" stroke-width="1"/><text x="348.0" y="450.6" font-size="8.5" fill="#ffffff" text-anchor="middle" font-family="Liberation Sans" font-weight="normal" textLength="8" lengthAdjust="spacingAndGlyphs" stroke="#ffffff" stroke-width="0.35">90</text><text x="358.0" y="450.6" font-size="8.5" fill="#ffffff" text-anchor="middle" font-family="Liberation Sans" font-weight="normal" textLength="8" lengthAdjust="spacingAndGlyphs" stroke="#ffffff" stroke-width="0.35">90</text><path d="M345.2 455.1L349.2 451.1" stroke="#ffffff" stroke-width="1.1"/><path d="M350.5 455.1L354.5 451.1" stroke="#ffffff" stroke-width="1.1"/><path d="M355.9 455.1L359.9 451.1" stroke="#ffffff" stroke-width="1.1"/><path d="M418.1 410.5H435.1" stroke="#00dcdc" stroke-width="1"/><path d="M418.1 424.5H435.1" stroke="#00dcdc" stroke-width="1"/><path d="M421.5 408.6V426.6" stroke="#00dcdc" stroke-width="1"/><path d="M432.5 408.6V426.6" stroke="#00dcdc" stroke-width="1"/><rect x="420.8" y="409.6" width="2" height="2" fill="#00e400"/><rect x="420.8" y="423.6" width="2" height="2" fill="#00e400"/><rect x="431.5" y="409.6" width="2" height="2" fill="#00e400"/><rect x="431.5" y="423.6" width="2" height="2" fill="#00e400"/><path d="M440.1 410.5H462.1" stroke="#00e400" stroke-width="1"/><path d="M440.1 424.5H462.1" stroke="#00e400" stroke-width="1"/><path d="M455.6 412.6L459.6 408.6" stroke="#ffffff" stroke-width="1.1"/><path d="M455.6 419.6L459.6 415.6" stroke="#ffffff" stroke-width="1.1"/><path d="M455.6 426.6L459.6 422.6" stroke="#ffffff" stroke-width="1.1"/><text x="451.1" y="414.1" font-size="8.5" fill="#ffffff" text-anchor="middle" font-family="Liberation Sans" font-weight="normal" transform="rotate(-90 451.1 411.1)" textLength="12" lengthAdjust="spacingAndGlyphs" stroke="#ffffff" stroke-width="0.35">100</text><text x="451.1" y="427.1" font-size="8.5" fill="#ffffff" text-anchor="middle" font-family="Liberation Sans" font-weight="normal" transform="rotate(-90 451.1 424.1)" textLength="12" lengthAdjust="spacingAndGlyphs" stroke="#ffffff" stroke-width="0.35">100</text><path d="M421.5 429.6V457.6" stroke="#00e400" stroke-width="1"/><path d="M432.5 429.6V457.6" stroke="#00e400" stroke-width="1"/><text x="422.6" y="450.6" font-size="8.5" fill="#ffffff" text-anchor="middle" font-family="Liberation Sans" font-weight="normal" textLength="8" lengthAdjust="spacingAndGlyphs" stroke="#ffffff" stroke-width="0.35">90</text><text x="432.6" y="450.6" font-size="8.5" fill="#ffffff" text-anchor="middle" font-family="Liberation Sans" font-weight="normal" textLength="8" lengthAdjust="spacingAndGlyphs" stroke="#ffffff" stroke-width="0.35">90</text><path d="M419.8 455.1L423.8 451.1" stroke="#ffffff" stroke-width="1.1"/><path d="M425.1 455.1L429.1 451.1" stroke="#ffffff" stroke-width="1.1"/><path d="M430.5 455.1L434.5 451.1" stroke="#ffffff" stroke-width="1.1"/><path d="M492.6 410.5H509.6" stroke="#00dcdc" stroke-width="1"/><path d="M492.6 424.5H509.6" stroke="#00dcdc" stroke-width="1"/><path d="M496.5 408.6V426.6" stroke="#00dcdc" stroke-width="1"/><path d="M506.5 408.6V426.6" stroke="#00dcdc" stroke-width="1"/><rect x="495.3" y="409.6" width="2" height="2" fill="#00e400"/><rect x="495.3" y="423.6" width="2" height="2" fill="#00e400"/><rect x="506.0" y="409.6" width="2" height="2" fill="#00e400"/><rect x="506.0" y="423.6" width="2" height="2" fill="#00e400"/><path d="M514.6 410.5H536.6" stroke="#00e400" stroke-width="1"/><path d="M514.6 424.5H536.6" stroke="#00e400" stroke-width="1"/><path d="M530.1 412.6L534.1 408.6" stroke="#ffffff" stroke-width="1.1"/><path d="M530.1 419.6L534.1 415.6" stroke="#ffffff" stroke-width="1.1"/><path d="M530.1 426.6L534.1 422.6" stroke="#ffffff" stroke-width="1.1"/><text x="525.6" y="414.1" font-size="8.5" fill="#ffffff" text-anchor="middle" font-family="Liberation Sans" font-weight="normal" transform="rotate(-90 525.6 411.1)" textLength="12" lengthAdjust="spacingAndGlyphs" stroke="#ffffff" stroke-width="0.35">100</text><text x="525.6" y="427.1" font-size="8.5" fill="#ffffff" text-anchor="middle" font-family="Liberation Sans" font-weight="normal" transform="rotate(-90 525.6 424.1)" textLength="12" lengthAdjust="spacingAndGlyphs" stroke="#ffffff" stroke-width="0.35">100</text><path d="M496.5 429.6V457.6" stroke="#00e400" stroke-width="1"/><path d="M506.5 429.6V457.6" stroke="#00e400" stroke-width="1"/><text x="497.1" y="450.6" font-size="8.5" fill="#ffffff" text-anchor="middle" font-family="Liberation Sans" font-weight="normal" textLength="8" lengthAdjust="spacingAndGlyphs" stroke="#ffffff" stroke-width="0.35">90</text><text x="507.1" y="450.6" font-size="8.5" fill="#ffffff" text-anchor="middle" font-family="Liberation Sans" font-weight="normal" textLength="8" lengthAdjust="spacingAndGlyphs" stroke="#ffffff" stroke-width="0.35">90</text><path d="M494.3 455.1L498.3 451.1" stroke="#ffffff" stroke-width="1.1"/><path d="M499.6 455.1L503.6 451.1" stroke="#ffffff" stroke-width="1.1"/><path d="M505.0 455.1L509.0 451.1" stroke="#ffffff" stroke-width="1.1"/><path d="M567.1 410.5H584.1" stroke="#00dcdc" stroke-width="1"/><path d="M567.1 424.5H584.1" stroke="#00dcdc" stroke-width="1"/><path d="M570.5 408.6V426.6" stroke="#00dcdc" stroke-width="1"/><path d="M581.5 408.6V426.6" stroke="#00dcdc" stroke-width="1"/><rect x="569.8" y="409.6" width="2" height="2" fill="#00e400"/><rect x="569.8" y="423.6" width="2" height="2" fill="#00e400"/><rect x="580.5" y="409.6" width="2" height="2" fill="#00e400"/><rect x="580.5" y="423.6" width="2" height="2" fill="#00e400"/><path d="M589.1 410.5H611.1" stroke="#00e400" stroke-width="1"/><path d="M589.1 424.5H611.1" stroke="#00e400" stroke-width="1"/><path d="M604.6 412.6L608.6 408.6" stroke="#ffffff" stroke-width="1.1"/><path d="M604.6 419.6L608.6 415.6" stroke="#ffffff" stroke-width="1.1"/><path d="M604.6 426.6L608.6 422.6" stroke="#ffffff" stroke-width="1.1"/><text x="600.1" y="414.1" font-size="8.5" fill="#ffffff" text-anchor="middle" font-family="Liberation Sans" font-weight="normal" transform="rotate(-90 600.1 411.1)" textLength="12" lengthAdjust="spacingAndGlyphs" stroke="#ffffff" stroke-width="0.35">100</text><text x="600.1" y="427.1" font-size="8.5" fill="#ffffff" text-anchor="middle" font-family="Liberation Sans" font-weight="normal" transform="rotate(-90 600.1 424.1)" textLength="12" lengthAdjust="spacingAndGlyphs" stroke="#ffffff" stroke-width="0.35">100</text><path d="M570.5 429.6V457.6" stroke="#00e400" stroke-width="1"/><path d="M581.5 429.6V457.6" stroke="#00e400" stroke-width="1"/><text x="571.6" y="450.6" font-size="8.5" fill="#ffffff" text-anchor="middle" font-family="Liberation Sans" font-weight="normal" textLength="8" lengthAdjust="spacingAndGlyphs" stroke="#ffffff" stroke-width="0.35">90</text><text x="581.6" y="450.6" font-size="8.5" fill="#ffffff" text-anchor="middle" font-family="Liberation Sans" font-weight="normal" textLength="8" lengthAdjust="spacingAndGlyphs" stroke="#ffffff" stroke-width="0.35">90</text><path d="M568.8 455.1L572.8 451.1" stroke="#ffffff" stroke-width="1.1"/><path d="M574.1 455.1L578.1 451.1" stroke="#ffffff" stroke-width="1.1"/><path d="M579.5 455.1L583.5 451.1" stroke="#ffffff" stroke-width="1.1"/><path d="M641.6 410.5H658.6" stroke="#00dcdc" stroke-width="1"/><path d="M641.6 424.5H658.6" stroke="#00dcdc" stroke-width="1"/><path d="M645.5 408.6V426.6" stroke="#00dcdc" stroke-width="1"/><path d="M656.5 408.6V426.6" stroke="#00dcdc" stroke-width="1"/><rect x="644.4" y="409.6" width="2" height="2" fill="#00e400"/><rect x="644.4" y="423.6" width="2" height="2" fill="#00e400"/><rect x="655.0" y="409.6" width="2" height="2" fill="#00e400"/><rect x="655.0" y="423.6" width="2" height="2" fill="#00e400"/><path d="M663.6 410.5H685.6" stroke="#00e400" stroke-width="1"/><path d="M663.6 424.5H685.6" stroke="#00e400" stroke-width="1"/><path d="M679.1 412.6L683.1 408.6" stroke="#ffffff" stroke-width="1.1"/><path d="M679.1 419.6L683.1 415.6" stroke="#ffffff" stroke-width="1.1"/><path d="M679.1 426.6L683.1 422.6" stroke="#ffffff" stroke-width="1.1"/><text x="674.6" y="414.1" font-size="8.5" fill="#ffffff" text-anchor="middle" font-family="Liberation Sans" font-weight="normal" transform="rotate(-90 674.6 411.1)" textLength="12" lengthAdjust="spacingAndGlyphs" stroke="#ffffff" stroke-width="0.35">100</text><text x="674.6" y="427.1" font-size="8.5" fill="#ffffff" text-anchor="middle" font-family="Liberation Sans" font-weight="normal" transform="rotate(-90 674.6 424.1)" textLength="12" lengthAdjust="spacingAndGlyphs" stroke="#ffffff" stroke-width="0.35">100</text><path d="M645.5 429.6V457.6" stroke="#00e400" stroke-width="1"/><path d="M656.5 429.6V457.6" stroke="#00e400" stroke-width="1"/><text x="646.1" y="450.6" font-size="8.5" fill="#ffffff" text-anchor="middle" font-family="Liberation Sans" font-weight="normal" textLength="8" lengthAdjust="spacingAndGlyphs" stroke="#ffffff" stroke-width="0.35">90</text><text x="656.1" y="450.6" font-size="8.5" fill="#ffffff" text-anchor="middle" font-family="Liberation Sans" font-weight="normal" textLength="8" lengthAdjust="spacingAndGlyphs" stroke="#ffffff" stroke-width="0.35">90</text><path d="M643.4 455.1L647.4 451.1" stroke="#ffffff" stroke-width="1.1"/><path d="M648.6 455.1L652.6 451.1" stroke="#ffffff" stroke-width="1.1"/><path d="M654.0 455.1L658.0 451.1" stroke="#ffffff" stroke-width="1.1"/><path d="M716.2 410.5H733.2" stroke="#00dcdc" stroke-width="1"/><path d="M716.2 424.5H733.2" stroke="#00dcdc" stroke-width="1"/><path d="M719.5 408.6V426.6" stroke="#00dcdc" stroke-width="1"/><path d="M730.5 408.6V426.6" stroke="#00dcdc" stroke-width="1"/><rect x="718.9" y="409.6" width="2" height="2" fill="#00e400"/><rect x="718.9" y="423.6" width="2" height="2" fill="#00e400"/><rect x="729.6" y="409.6" width="2" height="2" fill="#00e400"/><rect x="729.6" y="423.6" width="2" height="2" fill="#00e400"/><path d="M738.2 410.5H760.2" stroke="#00e400" stroke-width="1"/><path d="M738.2 424.5H760.2" stroke="#00e400" stroke-width="1"/><path d="M753.7 412.6L757.7 408.6" stroke="#ffffff" stroke-width="1.1"/><path d="M753.7 419.6L757.7 415.6" stroke="#ffffff" stroke-width="1.1"/><path d="M753.7 426.6L757.7 422.6" stroke="#ffffff" stroke-width="1.1"/><text x="749.2" y="414.1" font-size="8.5" fill="#ffffff" text-anchor="middle" font-family="Liberation Sans" font-weight="normal" transform="rotate(-90 749.2 411.1)" textLength="12" lengthAdjust="spacingAndGlyphs" stroke="#ffffff" stroke-width="0.35">100</text><text x="749.2" y="427.1" font-size="8.5" fill="#ffffff" text-anchor="middle" font-family="Liberation Sans" font-weight="normal" transform="rotate(-90 749.2 424.1)" textLength="12" lengthAdjust="spacingAndGlyphs" stroke="#ffffff" stroke-width="0.35">100</text><path d="M719.5 429.6V457.6" stroke="#00e400" stroke-width="1"/><path d="M730.5 429.6V457.6" stroke="#00e400" stroke-width="1"/><text x="720.7" y="450.6" font-size="8.5" fill="#ffffff" text-anchor="middle" font-family="Liberation Sans" font-weight="normal" textLength="8" lengthAdjust="spacingAndGlyphs" stroke="#ffffff" stroke-width="0.35">90</text><text x="730.7" y="450.6" font-size="8.5" fill="#ffffff" text-anchor="middle" font-family="Liberation Sans" font-weight="normal" textLength="8" lengthAdjust="spacingAndGlyphs" stroke="#ffffff" stroke-width="0.35">90</text><path d="M717.9 455.1L721.9 451.1" stroke="#ffffff" stroke-width="1.1"/><path d="M723.2 455.1L727.2 451.1" stroke="#ffffff" stroke-width="1.1"/><path d="M728.6 455.1L732.6 451.1" stroke="#ffffff" stroke-width="1.1"/><path d="M790.7 410.5H807.7" stroke="#00dcdc" stroke-width="1"/><path d="M790.7 424.5H807.7" stroke="#00dcdc" stroke-width="1"/><path d="M794.5 408.6V426.6" stroke="#00dcdc" stroke-width="1"/><path d="M805.5 408.6V426.6" stroke="#00dcdc" stroke-width="1"/><rect x="793.4" y="409.6" width="2" height="2" fill="#00e400"/><rect x="793.4" y="423.6" width="2" height="2" fill="#00e400"/><rect x="804.1" y="409.6" width="2" height="2" fill="#00e400"/><rect x="804.1" y="423.6" width="2" height="2" fill="#00e400"/><path d="M812.7 410.5H834.7" stroke="#00e400" stroke-width="1"/><path d="M812.7 424.5H834.7" stroke="#00e400" stroke-width="1"/><path d="M828.2 412.6L832.2 408.6" stroke="#ffffff" stroke-width="1.1"/><path d="M828.2 419.6L832.2 415.6" stroke="#ffffff" stroke-width="1.1"/><path d="M828.2 426.6L832.2 422.6" stroke="#ffffff" stroke-width="1.1"/><text x="823.7" y="414.1" font-size="8.5" fill="#ffffff" text-anchor="middle" font-family="Liberation Sans" font-weight="normal" transform="rotate(-90 823.7 411.1)" textLength="12" lengthAdjust="spacingAndGlyphs" stroke="#ffffff" stroke-width="0.35">100</text><text x="823.7" y="427.1" font-size="8.5" fill="#ffffff" text-anchor="middle" font-family="Liberation Sans" font-weight="normal" transform="rotate(-90 823.7 424.1)" textLength="12" lengthAdjust="spacingAndGlyphs" stroke="#ffffff" stroke-width="0.35">100</text><path d="M794.5 429.6V457.6" stroke="#00e400" stroke-width="1"/><path d="M805.5 429.6V457.6" stroke="#00e400" stroke-width="1"/><text x="795.2" y="450.6" font-size="8.5" fill="#ffffff" text-anchor="middle" font-family="Liberation Sans" font-weight="normal" textLength="8" lengthAdjust="spacingAndGlyphs" stroke="#ffffff" stroke-width="0.35">90</text><text x="805.2" y="450.6" font-size="8.5" fill="#ffffff" text-anchor="middle" font-family="Liberation Sans" font-weight="normal" textLength="8" lengthAdjust="spacingAndGlyphs" stroke="#ffffff" stroke-width="0.35">90</text><path d="M792.4 455.1L796.4 451.1" stroke="#ffffff" stroke-width="1.1"/><path d="M797.7 455.1L801.7 451.1" stroke="#ffffff" stroke-width="1.1"/><path d="M803.1 455.1L807.1 451.1" stroke="#ffffff" stroke-width="1.1"/><path d="M865.2 410.5H882.2" stroke="#00dcdc" stroke-width="1"/><path d="M865.2 424.5H882.2" stroke="#00dcdc" stroke-width="1"/><path d="M868.5 408.6V426.6" stroke="#00dcdc" stroke-width="1"/><path d="M879.5 408.6V426.6" stroke="#00dcdc" stroke-width="1"/><rect x="867.9" y="409.6" width="2" height="2" fill="#00e400"/><rect x="867.9" y="423.6" width="2" height="2" fill="#00e400"/><rect x="878.6" y="409.6" width="2" height="2" fill="#00e400"/><rect x="878.6" y="423.6" width="2" height="2" fill="#00e400"/><path d="M887.2 410.5H909.2" stroke="#00e400" stroke-width="1"/><path d="M887.2 424.5H909.2" stroke="#00e400" stroke-width="1"/><path d="M902.7 412.6L906.7 408.6" stroke="#ffffff" stroke-width="1.1"/><path d="M902.7 419.6L906.7 415.6" stroke="#ffffff" stroke-width="1.1"/><path d="M902.7 426.6L906.7 422.6" stroke="#ffffff" stroke-width="1.1"/><text x="898.2" y="414.1" font-size="8.5" fill="#ffffff" text-anchor="middle" font-family="Liberation Sans" font-weight="normal" transform="rotate(-90 898.2 411.1)" textLength="12" lengthAdjust="spacingAndGlyphs" stroke="#ffffff" stroke-width="0.35">100</text><text x="898.2" y="427.1" font-size="8.5" fill="#ffffff" text-anchor="middle" font-family="Liberation Sans" font-weight="normal" transform="rotate(-90 898.2 424.1)" textLength="12" lengthAdjust="spacingAndGlyphs" stroke="#ffffff" stroke-width="0.35">100</text><path d="M868.5 429.6V457.6" stroke="#00e400" stroke-width="1"/><path d="M879.5 429.6V457.6" stroke="#00e400" stroke-width="1"/><text x="869.7" y="450.6" font-size="8.5" fill="#ffffff" text-anchor="middle" font-family="Liberation Sans" font-weight="normal" textLength="8" lengthAdjust="spacingAndGlyphs" stroke="#ffffff" stroke-width="0.35">90</text><text x="879.7" y="450.6" font-size="8.5" fill="#ffffff" text-anchor="middle" font-family="Liberation Sans" font-weight="normal" textLength="8" lengthAdjust="spacingAndGlyphs" stroke="#ffffff" stroke-width="0.35">90</text><path d="M866.9 455.1L870.9 451.1" stroke="#ffffff" stroke-width="1.1"/><path d="M872.2 455.1L876.2 451.1" stroke="#ffffff" stroke-width="1.1"/><path d="M877.6 455.1L881.6 451.1" stroke="#ffffff" stroke-width="1.1"/><path d="M939.8 410.5H956.8" stroke="#00dcdc" stroke-width="1"/><path d="M939.8 424.5H956.8" stroke="#00dcdc" stroke-width="1"/><path d="M943.5 408.6V426.6" stroke="#00dcdc" stroke-width="1"/><path d="M954.5 408.6V426.6" stroke="#00dcdc" stroke-width="1"/><rect x="942.5" y="409.6" width="2" height="2" fill="#00e400"/><rect x="942.5" y="423.6" width="2" height="2" fill="#00e400"/><rect x="953.2" y="409.6" width="2" height="2" fill="#00e400"/><rect x="953.2" y="423.6" width="2" height="2" fill="#00e400"/><path d="M961.8 410.5H983.8" stroke="#00e400" stroke-width="1"/><path d="M961.8 424.5H983.8" stroke="#00e400" stroke-width="1"/><path d="M977.3 412.6L981.3 408.6" stroke="#ffffff" stroke-width="1.1"/><path d="M977.3 419.6L981.3 415.6" stroke="#ffffff" stroke-width="1.1"/><path d="M977.3 426.6L981.3 422.6" stroke="#ffffff" stroke-width="1.1"/><text x="972.8" y="414.1" font-size="8.5" fill="#ffffff" text-anchor="middle" font-family="Liberation Sans" font-weight="normal" transform="rotate(-90 972.8 411.1)" textLength="12" lengthAdjust="spacingAndGlyphs" stroke="#ffffff" stroke-width="0.35">100</text><text x="972.8" y="427.1" font-size="8.5" fill="#ffffff" text-anchor="middle" font-family="Liberation Sans" font-weight="normal" transform="rotate(-90 972.8 424.1)" textLength="12" lengthAdjust="spacingAndGlyphs" stroke="#ffffff" stroke-width="0.35">100</text><path d="M943.5 429.6V457.6" stroke="#00e400" stroke-width="1"/><path d="M954.5 429.6V457.6" stroke="#00e400" stroke-width="1"/><text x="944.3" y="450.6" font-size="8.5" fill="#ffffff" text-anchor="middle" font-family="Liberation Sans" font-weight="normal" textLength="8" lengthAdjust="spacingAndGlyphs" stroke="#ffffff" stroke-width="0.35">90</text><text x="954.3" y="450.6" font-size="8.5" fill="#ffffff" text-anchor="middle" font-family="Liberation Sans" font-weight="normal" textLength="8" lengthAdjust="spacingAndGlyphs" stroke="#ffffff" stroke-width="0.35">90</text><path d="M941.5 455.1L945.5 451.1" stroke="#ffffff" stroke-width="1.1"/><path d="M946.8 455.1L950.8 451.1" stroke="#ffffff" stroke-width="1.1"/><path d="M952.2 455.1L956.2 451.1" stroke="#ffffff" stroke-width="1.1"/><path d="M1014.3 410.5H1031.3" stroke="#00dcdc" stroke-width="1"/><path d="M1014.3 424.5H1031.3" stroke="#00dcdc" stroke-width="1"/><path d="M1018.5 408.6V426.6" stroke="#00dcdc" stroke-width="1"/><path d="M1028.5 408.6V426.6" stroke="#00dcdc" stroke-width="1"/><rect x="1017.0" y="409.6" width="2" height="2" fill="#00e400"/><rect x="1017.0" y="423.6" width="2" height="2" fill="#00e400"/><rect x="1027.7" y="409.6" width="2" height="2" fill="#00e400"/><rect x="1027.7" y="423.6" width="2" height="2" fill="#00e400"/><path d="M1036.3 410.5H1058.3" stroke="#00e400" stroke-width="1"/><path d="M1036.3 424.5H1058.3" stroke="#00e400" stroke-width="1"/><path d="M1051.8 412.6L1055.8 408.6" stroke="#ffffff" stroke-width="1.1"/><path d="M1051.8 419.6L1055.8 415.6" stroke="#ffffff" stroke-width="1.1"/><path d="M1051.8 426.6L1055.8 422.6" stroke="#ffffff" stroke-width="1.1"/><text x="1047.3" y="414.1" font-size="8.5" fill="#ffffff" text-anchor="middle" font-family="Liberation Sans" font-weight="normal" transform="rotate(-90 1047.3 411.1)" textLength="12" lengthAdjust="spacingAndGlyphs" stroke="#ffffff" stroke-width="0.35">100</text><text x="1047.3" y="427.1" font-size="8.5" fill="#ffffff" text-anchor="middle" font-family="Liberation Sans" font-weight="normal" transform="rotate(-90 1047.3 424.1)" textLength="12" lengthAdjust="spacingAndGlyphs" stroke="#ffffff" stroke-width="0.35">100</text><path d="M1018.5 429.6V457.6" stroke="#00e400" stroke-width="1"/><path d="M1028.5 429.6V457.6" stroke="#00e400" stroke-width="1"/><text x="1018.8" y="450.6" font-size="8.5" fill="#ffffff" text-anchor="middle" font-family="Liberation Sans" font-weight="normal" textLength="8" lengthAdjust="spacingAndGlyphs" stroke="#ffffff" stroke-width="0.35">90</text><text x="1028.8" y="450.6" font-size="8.5" fill="#ffffff" text-anchor="middle" font-family="Liberation Sans" font-weight="normal" textLength="8" lengthAdjust="spacingAndGlyphs" stroke="#ffffff" stroke-width="0.35">90</text><path d="M1016.0 455.1L1020.0 451.1" stroke="#ffffff" stroke-width="1.1"/><path d="M1021.3 455.1L1025.3 451.1" stroke="#ffffff" stroke-width="1.1"/><path d="M1026.7 455.1L1030.7 451.1" stroke="#ffffff" stroke-width="1.1"/><path d="M1088.8 410.5H1105.8" stroke="#00dcdc" stroke-width="1"/><path d="M1088.8 424.5H1105.8" stroke="#00dcdc" stroke-width="1"/><path d="M1092.5 408.6V426.6" stroke="#00dcdc" stroke-width="1"/><path d="M1103.5 408.6V426.6" stroke="#00dcdc" stroke-width="1"/><rect x="1091.5" y="409.6" width="2" height="2" fill="#00e400"/><rect x="1091.5" y="423.6" width="2" height="2" fill="#00e400"/><rect x="1102.2" y="409.6" width="2" height="2" fill="#00e400"/><rect x="1102.2" y="423.6" width="2" height="2" fill="#00e400"/><path d="M1110.8 410.5H1132.8" stroke="#00e400" stroke-width="1"/><path d="M1110.8 424.5H1132.8" stroke="#00e400" stroke-width="1"/><path d="M1126.3 412.6L1130.3 408.6" stroke="#ffffff" stroke-width="1.1"/><path d="M1126.3 419.6L1130.3 415.6" stroke="#ffffff" stroke-width="1.1"/><path d="M1126.3 426.6L1130.3 422.6" stroke="#ffffff" stroke-width="1.1"/><text x="1121.8" y="414.1" font-size="8.5" fill="#ffffff" text-anchor="middle" font-family="Liberation Sans" font-weight="normal" transform="rotate(-90 1121.8 411.1)" textLength="12" lengthAdjust="spacingAndGlyphs" stroke="#ffffff" stroke-width="0.35">100</text><text x="1121.8" y="427.1" font-size="8.5" fill="#ffffff" text-anchor="middle" font-family="Liberation Sans" font-weight="normal" transform="rotate(-90 1121.8 424.1)" textLength="12" lengthAdjust="spacingAndGlyphs" stroke="#ffffff" stroke-width="0.35">100</text><path d="M1092.5 429.6V457.6" stroke="#00e400" stroke-width="1"/><path d="M1103.5 429.6V457.6" stroke="#00e400" stroke-width="1"/><text x="1093.3" y="450.6" font-size="8.5" fill="#ffffff" text-anchor="middle" font-family="Liberation Sans" font-weight="normal" textLength="8" lengthAdjust="spacingAndGlyphs" stroke="#ffffff" stroke-width="0.35">90</text><text x="1103.3" y="450.6" font-size="8.5" fill="#ffffff" text-anchor="middle" font-family="Liberation Sans" font-weight="normal" textLength="8" lengthAdjust="spacingAndGlyphs" stroke="#ffffff" stroke-width="0.35">90</text><path d="M1090.5 455.1L1094.5 451.1" stroke="#ffffff" stroke-width="1.1"/><path d="M1095.8 455.1L1099.8 451.1" stroke="#ffffff" stroke-width="1.1"/><path d="M1101.2 455.1L1105.2 451.1" stroke="#ffffff" stroke-width="1.1"/><path d="M1163.4 410.5H1180.4" stroke="#00dcdc" stroke-width="1"/><path d="M1163.4 424.5H1180.4" stroke="#00dcdc" stroke-width="1"/><path d="M1167.5 408.6V426.6" stroke="#00dcdc" stroke-width="1"/><path d="M1177.5 408.6V426.6" stroke="#00dcdc" stroke-width="1"/><rect x="1166.1" y="409.6" width="2" height="2" fill="#00e400"/><rect x="1166.1" y="423.6" width="2" height="2" fill="#00e400"/><rect x="1176.8" y="409.6" width="2" height="2" fill="#00e400"/><rect x="1176.8" y="423.6" width="2" height="2" fill="#00e400"/><path d="M1185.4 410.5H1207.4" stroke="#00e400" stroke-width="1"/><path d="M1185.4 424.5H1207.4" stroke="#00e400" stroke-width="1"/><path d="M1200.9 412.6L1204.9 408.6" stroke="#ffffff" stroke-width="1.1"/><path d="M1200.9 419.6L1204.9 415.6" stroke="#ffffff" stroke-width="1.1"/><path d="M1200.9 426.6L1204.9 422.6" stroke="#ffffff" stroke-width="1.1"/><text x="1196.4" y="414.1" font-size="8.5" fill="#ffffff" text-anchor="middle" font-family="Liberation Sans" font-weight="normal" transform="rotate(-90 1196.4 411.1)" textLength="12" lengthAdjust="spacingAndGlyphs" stroke="#ffffff" stroke-width="0.35">100</text><text x="1196.4" y="427.1" font-size="8.5" fill="#ffffff" text-anchor="middle" font-family="Liberation Sans" font-weight="normal" transform="rotate(-90 1196.4 424.1)" textLength="12" lengthAdjust="spacingAndGlyphs" stroke="#ffffff" stroke-width="0.35">100</text><path d="M1167.5 429.6V457.6" stroke="#00e400" stroke-width="1"/><path d="M1177.5 429.6V457.6" stroke="#00e400" stroke-width="1"/><text x="1167.9" y="450.6" font-size="8.5" fill="#ffffff" text-anchor="middle" font-family="Liberation Sans" font-weight="normal" textLength="8" lengthAdjust="spacingAndGlyphs" stroke="#ffffff" stroke-width="0.35">90</text><text x="1177.9" y="450.6" font-size="8.5" fill="#ffffff" text-anchor="middle" font-family="Liberation Sans" font-weight="normal" textLength="8" lengthAdjust="spacingAndGlyphs" stroke="#ffffff" stroke-width="0.35">90</text><path d="M1165.1 455.1L1169.1 451.1" stroke="#ffffff" stroke-width="1.1"/><path d="M1170.4 455.1L1174.4 451.1" stroke="#ffffff" stroke-width="1.1"/><path d="M1175.8 455.1L1179.8 451.1" stroke="#ffffff" stroke-width="1.1"/><path d="M1237.9 410.5H1254.9" stroke="#00dcdc" stroke-width="1"/><path d="M1237.9 424.5H1254.9" stroke="#00dcdc" stroke-width="1"/><path d="M1241.5 408.6V426.6" stroke="#00dcdc" stroke-width="1"/><path d="M1252.5 408.6V426.6" stroke="#00dcdc" stroke-width="1"/><rect x="1240.6" y="409.6" width="2" height="2" fill="#00e400"/><rect x="1240.6" y="423.6" width="2" height="2" fill="#00e400"/><rect x="1251.3" y="409.6" width="2" height="2" fill="#00e400"/><rect x="1251.3" y="423.6" width="2" height="2" fill="#00e400"/><path d="M1259.9 410.5H1281.9" stroke="#00e400" stroke-width="1"/><path d="M1259.9 424.5H1281.9" stroke="#00e400" stroke-width="1"/><path d="M1275.4 412.6L1279.4 408.6" stroke="#ffffff" stroke-width="1.1"/><path d="M1275.4 419.6L1279.4 415.6" stroke="#ffffff" stroke-width="1.1"/><path d="M1275.4 426.6L1279.4 422.6" stroke="#ffffff" stroke-width="1.1"/><text x="1270.9" y="414.1" font-size="8.5" fill="#ffffff" text-anchor="middle" font-family="Liberation Sans" font-weight="normal" transform="rotate(-90 1270.9 411.1)" textLength="12" lengthAdjust="spacingAndGlyphs" stroke="#ffffff" stroke-width="0.35">100</text><text x="1270.9" y="427.1" font-size="8.5" fill="#ffffff" text-anchor="middle" font-family="Liberation Sans" font-weight="normal" transform="rotate(-90 1270.9 424.1)" textLength="12" lengthAdjust="spacingAndGlyphs" stroke="#ffffff" stroke-width="0.35">100</text><path d="M1241.5 429.6V457.6" stroke="#00e400" stroke-width="1"/><path d="M1252.5 429.6V457.6" stroke="#00e400" stroke-width="1"/><text x="1242.4" y="450.6" font-size="8.5" fill="#ffffff" text-anchor="middle" font-family="Liberation Sans" font-weight="normal" textLength="8" lengthAdjust="spacingAndGlyphs" stroke="#ffffff" stroke-width="0.35">90</text><text x="1252.4" y="450.6" font-size="8.5" fill="#ffffff" text-anchor="middle" font-family="Liberation Sans" font-weight="normal" textLength="8" lengthAdjust="spacingAndGlyphs" stroke="#ffffff" stroke-width="0.35">90</text><path d="M1239.6 455.1L1243.6 451.1" stroke="#ffffff" stroke-width="1.1"/><path d="M1244.9 455.1L1248.9 451.1" stroke="#ffffff" stroke-width="1.1"/><path d="M1250.3 455.1L1254.3 451.1" stroke="#ffffff" stroke-width="1.1"/><path d="M1301.8 410.5H1318.8" stroke="#00dcdc" stroke-width="1"/><path d="M1301.8 424.5H1318.8" stroke="#00dcdc" stroke-width="1"/><path d="M1305.5 408.6V426.6" stroke="#00dcdc" stroke-width="1"/><path d="M1316.5 408.6V426.6" stroke="#00dcdc" stroke-width="1"/><rect x="1304.5" y="409.6" width="2" height="2" fill="#00e400"/><rect x="1304.5" y="423.6" width="2" height="2" fill="#00e400"/><rect x="1315.2" y="409.6" width="2" height="2" fill="#00e400"/><rect x="1315.2" y="423.6" width="2" height="2" fill="#00e400"/><path d="M1323.8 410.5H1345.8" stroke="#00e400" stroke-width="1"/><path d="M1323.8 424.5H1345.8" stroke="#00e400" stroke-width="1"/><path d="M1339.3 412.6L1343.3 408.6" stroke="#ffffff" stroke-width="1.1"/><path d="M1339.3 419.6L1343.3 415.6" stroke="#ffffff" stroke-width="1.1"/><path d="M1339.3 426.6L1343.3 422.6" stroke="#ffffff" stroke-width="1.1"/><text x="1334.8" y="414.1" font-size="8.5" fill="#ffffff" text-anchor="middle" font-family="Liberation Sans" font-weight="normal" transform="rotate(-90 1334.8 411.1)" textLength="12" lengthAdjust="spacingAndGlyphs" stroke="#ffffff" stroke-width="0.35">100</text><text x="1334.8" y="427.1" font-size="8.5" fill="#ffffff" text-anchor="middle" font-family="Liberation Sans" font-weight="normal" transform="rotate(-90 1334.8 424.1)" textLength="12" lengthAdjust="spacingAndGlyphs" stroke="#ffffff" stroke-width="0.35">100</text><path d="M1305.5 429.6V457.6" stroke="#00e400" stroke-width="1"/><path d="M1316.5 429.6V457.6" stroke="#00e400" stroke-width="1"/><text x="1306.3" y="450.6" font-size="8.5" fill="#ffffff" text-anchor="middle" font-family="Liberation Sans" font-weight="normal" textLength="8" lengthAdjust="spacingAndGlyphs" stroke="#ffffff" stroke-width="0.35">90</text><text x="1316.3" y="450.6" font-size="8.5" fill="#ffffff" text-anchor="middle" font-family="Liberation Sans" font-weight="normal" textLength="8" lengthAdjust="spacingAndGlyphs" stroke="#ffffff" stroke-width="0.35">90</text><path d="M1303.5 455.1L1307.5 451.1" stroke="#ffffff" stroke-width="1.1"/><path d="M1308.8 455.1L1312.8 451.1" stroke="#ffffff" stroke-width="1.1"/><path d="M1314.2 455.1L1318.2 451.1" stroke="#ffffff" stroke-width="1.1"/><path d="M1376.3 410.5H1393.3" stroke="#00dcdc" stroke-width="1"/><path d="M1376.3 424.5H1393.3" stroke="#00dcdc" stroke-width="1"/><path d="M1380.5 408.6V426.6" stroke="#00dcdc" stroke-width="1"/><path d="M1390.5 408.6V426.6" stroke="#00dcdc" stroke-width="1"/><rect x="1379.0" y="409.6" width="2" height="2" fill="#00e400"/><rect x="1379.0" y="423.6" width="2" height="2" fill="#00e400"/><rect x="1389.7" y="409.6" width="2" height="2" fill="#00e400"/><rect x="1389.7" y="423.6" width="2" height="2" fill="#00e400"/><path d="M1398.3 410.5H1420.3" stroke="#00e400" stroke-width="1"/><path d="M1398.3 424.5H1420.3" stroke="#00e400" stroke-width="1"/><path d="M1413.8 412.6L1417.8 408.6" stroke="#ffffff" stroke-width="1.1"/><path d="M1413.8 419.6L1417.8 415.6" stroke="#ffffff" stroke-width="1.1"/><path d="M1413.8 426.6L1417.8 422.6" stroke="#ffffff" stroke-width="1.1"/><text x="1409.3" y="414.1" font-size="8.5" fill="#ffffff" text-anchor="middle" font-family="Liberation Sans" font-weight="normal" transform="rotate(-90 1409.3 411.1)" textLength="12" lengthAdjust="spacingAndGlyphs" stroke="#ffffff" stroke-width="0.35">100</text><text x="1409.3" y="427.1" font-size="8.5" fill="#ffffff" text-anchor="middle" font-family="Liberation Sans" font-weight="normal" transform="rotate(-90 1409.3 424.1)" textLength="12" lengthAdjust="spacingAndGlyphs" stroke="#ffffff" stroke-width="0.35">100</text><path d="M1380.5 429.6V457.6" stroke="#00e400" stroke-width="1"/><path d="M1390.5 429.6V457.6" stroke="#00e400" stroke-width="1"/><text x="1380.8" y="450.6" font-size="8.5" fill="#ffffff" text-anchor="middle" font-family="Liberation Sans" font-weight="normal" textLength="8" lengthAdjust="spacingAndGlyphs" stroke="#ffffff" stroke-width="0.35">90</text><text x="1390.8" y="450.6" font-size="8.5" fill="#ffffff" text-anchor="middle" font-family="Liberation Sans" font-weight="normal" textLength="8" lengthAdjust="spacingAndGlyphs" stroke="#ffffff" stroke-width="0.35">90</text><path d="M1378.0 455.1L1382.0 451.1" stroke="#ffffff" stroke-width="1.1"/><path d="M1383.3 455.1L1387.3 451.1" stroke="#ffffff" stroke-width="1.1"/><path d="M1388.7 455.1L1392.7 451.1" stroke="#ffffff" stroke-width="1.1"/><path d="M269.0 511.5H286.0" stroke="#00dcdc" stroke-width="1"/><path d="M269.0 525.5H286.0" stroke="#00dcdc" stroke-width="1"/><path d="M272.5 509.7V527.7" stroke="#00dcdc" stroke-width="1"/><path d="M283.5 509.7V527.7" stroke="#00dcdc" stroke-width="1"/><rect x="271.7" y="510.7" width="2" height="2" fill="#00e400"/><rect x="271.7" y="524.7" width="2" height="2" fill="#00e400"/><rect x="282.4" y="510.7" width="2" height="2" fill="#00e400"/><rect x="282.4" y="524.7" width="2" height="2" fill="#00e400"/><path d="M291.0 511.5H313.0" stroke="#00e400" stroke-width="1"/><path d="M291.0 525.5H313.0" stroke="#00e400" stroke-width="1"/><path d="M306.5 513.7L310.5 509.7" stroke="#ffffff" stroke-width="1.1"/><path d="M306.5 520.7L310.5 516.7" stroke="#ffffff" stroke-width="1.1"/><path d="M306.5 527.7L310.5 523.7" stroke="#ffffff" stroke-width="1.1"/><text x="302.0" y="515.3" font-size="8.5" fill="#ffffff" text-anchor="middle" font-family="Liberation Sans" font-weight="normal" transform="rotate(-90 302.0 512.2)" textLength="12" lengthAdjust="spacingAndGlyphs" stroke="#ffffff" stroke-width="0.35">100</text><text x="302.0" y="528.3" font-size="8.5" fill="#ffffff" text-anchor="middle" font-family="Liberation Sans" font-weight="normal" transform="rotate(-90 302.0 525.2)" textLength="12" lengthAdjust="spacingAndGlyphs" stroke="#ffffff" stroke-width="0.35">100</text><path d="M272.5 530.7V558.7" stroke="#00e400" stroke-width="1"/><path d="M283.5 530.7V558.7" stroke="#00e400" stroke-width="1"/><text x="273.5" y="551.8" font-size="8.5" fill="#ffffff" text-anchor="middle" font-family="Liberation Sans" font-weight="normal" textLength="8" lengthAdjust="spacingAndGlyphs" stroke="#ffffff" stroke-width="0.35">90</text><text x="283.5" y="551.8" font-size="8.5" fill="#ffffff" text-anchor="middle" font-family="Liberation Sans" font-weight="normal" textLength="8" lengthAdjust="spacingAndGlyphs" stroke="#ffffff" stroke-width="0.35">90</text><path d="M270.7 556.2L274.7 552.2" stroke="#ffffff" stroke-width="1.1"/><path d="M276.0 556.2L280.0 552.2" stroke="#ffffff" stroke-width="1.1"/><path d="M281.4 556.2L285.4 552.2" stroke="#ffffff" stroke-width="1.1"/><path d="M343.5 511.5H360.5" stroke="#00dcdc" stroke-width="1"/><path d="M343.5 525.5H360.5" stroke="#00dcdc" stroke-width="1"/><path d="M347.5 509.7V527.7" stroke="#00dcdc" stroke-width="1"/><path d="M357.5 509.7V527.7" stroke="#00dcdc" stroke-width="1"/><rect x="346.2" y="510.7" width="2" height="2" fill="#00e400"/><rect x="346.2" y="524.7" width="2" height="2" fill="#00e400"/><rect x="356.9" y="510.7" width="2" height="2" fill="#00e400"/><rect x="356.9" y="524.7" width="2" height="2" fill="#00e400"/><path d="M365.5 511.5H387.5" stroke="#00e400" stroke-width="1"/><path d="M365.5 525.5H387.5" stroke="#00e400" stroke-width="1"/><path d="M381.0 513.7L385.0 509.7" stroke="#ffffff" stroke-width="1.1"/><path d="M381.0 520.7L385.0 516.7" stroke="#ffffff" stroke-width="1.1"/><path d="M381.0 527.7L385.0 523.7" stroke="#ffffff" stroke-width="1.1"/><text x="376.5" y="515.3" font-size="8.5" fill="#ffffff" text-anchor="middle" font-family="Liberation Sans" font-weight="normal" transform="rotate(-90 376.5 512.2)" textLength="12" lengthAdjust="spacingAndGlyphs" stroke="#ffffff" stroke-width="0.35">100</text><text x="376.5" y="528.3" font-size="8.5" fill="#ffffff" text-anchor="middle" font-family="Liberation Sans" font-weight="normal" transform="rotate(-90 376.5 525.2)" textLength="12" lengthAdjust="spacingAndGlyphs" stroke="#ffffff" stroke-width="0.35">100</text><path d="M347.5 530.7V558.7" stroke="#00e400" stroke-width="1"/><path d="M357.5 530.7V558.7" stroke="#00e400" stroke-width="1"/><text x="348.0" y="551.8" font-size="8.5" fill="#ffffff" text-anchor="middle" font-family="Liberation Sans" font-weight="normal" textLength="8" lengthAdjust="spacingAndGlyphs" stroke="#ffffff" stroke-width="0.35">90</text><text x="358.0" y="551.8" font-size="8.5" fill="#ffffff" text-anchor="middle" font-family="Liberation Sans" font-weight="normal" textLength="8" lengthAdjust="spacingAndGlyphs" stroke="#ffffff" stroke-width="0.35">90</text><path d="M345.2 556.2L349.2 552.2" stroke="#ffffff" stroke-width="1.1"/><path d="M350.5 556.2L354.5 552.2" stroke="#ffffff" stroke-width="1.1"/><path d="M355.9 556.2L359.9 552.2" stroke="#ffffff" stroke-width="1.1"/><path d="M418.1 511.5H435.1" stroke="#00dcdc" stroke-width="1"/><path d="M418.1 525.5H435.1" stroke="#00dcdc" stroke-width="1"/><path d="M421.5 509.7V527.7" stroke="#00dcdc" stroke-width="1"/><path d="M432.5 509.7V527.7" stroke="#00dcdc" stroke-width="1"/><rect x="420.8" y="510.7" width="2" height="2" fill="#00e400"/><rect x="420.8" y="524.7" width="2" height="2" fill="#00e400"/><rect x="431.5" y="510.7" width="2" height="2" fill="#00e400"/><rect x="431.5" y="524.7" width="2" height="2" fill="#00e400"/><path d="M440.1 511.5H462.1" stroke="#00e400" stroke-width="1"/><path d="M440.1 525.5H462.1" stroke="#00e400" stroke-width="1"/><path d="M455.6 513.7L459.6 509.7" stroke="#ffffff" stroke-width="1.1"/><path d="M455.6 520.7L459.6 516.7" stroke="#ffffff" stroke-width="1.1"/><path d="M455.6 527.7L459.6 523.7" stroke="#ffffff" stroke-width="1.1"/><text x="451.1" y="515.3" font-size="8.5" fill="#ffffff" text-anchor="middle" font-family="Liberation Sans" font-weight="normal" transform="rotate(-90 451.1 512.2)" textLength="12" lengthAdjust="spacingAndGlyphs" stroke="#ffffff" stroke-width="0.35">100</text><text x="451.1" y="528.3" font-size="8.5" fill="#ffffff" text-anchor="middle" font-family="Liberation Sans" font-weight="normal" transform="rotate(-90 451.1 525.2)" textLength="12" lengthAdjust="spacingAndGlyphs" stroke="#ffffff" stroke-width="0.35">100</text><path d="M421.5 530.7V558.7" stroke="#00e400" stroke-width="1"/><path d="M432.5 530.7V558.7" stroke="#00e400" stroke-width="1"/><text x="422.6" y="551.8" font-size="8.5" fill="#ffffff" text-anchor="middle" font-family="Liberation Sans" font-weight="normal" textLength="8" lengthAdjust="spacingAndGlyphs" stroke="#ffffff" stroke-width="0.35">90</text><text x="432.6" y="551.8" font-size="8.5" fill="#ffffff" text-anchor="middle" font-family="Liberation Sans" font-weight="normal" textLength="8" lengthAdjust="spacingAndGlyphs" stroke="#ffffff" stroke-width="0.35">90</text><path d="M419.8 556.2L423.8 552.2" stroke="#ffffff" stroke-width="1.1"/><path d="M425.1 556.2L429.1 552.2" stroke="#ffffff" stroke-width="1.1"/><path d="M430.5 556.2L434.5 552.2" stroke="#ffffff" stroke-width="1.1"/><path d="M492.6 511.5H509.6" stroke="#00dcdc" stroke-width="1"/><path d="M492.6 525.5H509.6" stroke="#00dcdc" stroke-width="1"/><path d="M496.5 509.7V527.7" stroke="#00dcdc" stroke-width="1"/><path d="M506.5 509.7V527.7" stroke="#00dcdc" stroke-width="1"/><rect x="495.3" y="510.7" width="2" height="2" fill="#00e400"/><rect x="495.3" y="524.7" width="2" height="2" fill="#00e400"/><rect x="506.0" y="510.7" width="2" height="2" fill="#00e400"/><rect x="506.0" y="524.7" width="2" height="2" fill="#00e400"/><path d="M514.6 511.5H536.6" stroke="#00e400" stroke-width="1"/><path d="M514.6 525.5H536.6" stroke="#00e400" stroke-width="1"/><path d="M530.1 513.7L534.1 509.7" stroke="#ffffff" stroke-width="1.1"/><path d="M530.1 520.7L534.1 516.7" stroke="#ffffff" stroke-width="1.1"/><path d="M530.1 527.7L534.1 523.7" stroke="#ffffff" stroke-width="1.1"/><text x="525.6" y="515.3" font-size="8.5" fill="#ffffff" text-anchor="middle" font-family="Liberation Sans" font-weight="normal" transform="rotate(-90 525.6 512.2)" textLength="12" lengthAdjust="spacingAndGlyphs" stroke="#ffffff" stroke-width="0.35">100</text><text x="525.6" y="528.3" font-size="8.5" fill="#ffffff" text-anchor="middle" font-family="Liberation Sans" font-weight="normal" transform="rotate(-90 525.6 525.2)" textLength="12" lengthAdjust="spacingAndGlyphs" stroke="#ffffff" stroke-width="0.35">100</text><path d="M496.5 530.7V558.7" stroke="#00e400" stroke-width="1"/><path d="M506.5 530.7V558.7" stroke="#00e400" stroke-width="1"/><text x="497.1" y="551.8" font-size="8.5" fill="#ffffff" text-anchor="middle" font-family="Liberation Sans" font-weight="normal" textLength="8" lengthAdjust="spacingAndGlyphs" stroke="#ffffff" stroke-width="0.35">90</text><text x="507.1" y="551.8" font-size="8.5" fill="#ffffff" text-anchor="middle" font-family="Liberation Sans" font-weight="normal" textLength="8" lengthAdjust="spacingAndGlyphs" stroke="#ffffff" stroke-width="0.35">90</text><path d="M494.3 556.2L498.3 552.2" stroke="#ffffff" stroke-width="1.1"/><path d="M499.6 556.2L503.6 552.2" stroke="#ffffff" stroke-width="1.1"/><path d="M505.0 556.2L509.0 552.2" stroke="#ffffff" stroke-width="1.1"/><path d="M567.1 511.5H584.1" stroke="#00dcdc" stroke-width="1"/><path d="M567.1 525.5H584.1" stroke="#00dcdc" stroke-width="1"/><path d="M570.5 509.7V527.7" stroke="#00dcdc" stroke-width="1"/><path d="M581.5 509.7V527.7" stroke="#00dcdc" stroke-width="1"/><rect x="569.8" y="510.7" width="2" height="2" fill="#00e400"/><rect x="569.8" y="524.7" width="2" height="2" fill="#00e400"/><rect x="580.5" y="510.7" width="2" height="2" fill="#00e400"/><rect x="580.5" y="524.7" width="2" height="2" fill="#00e400"/><path d="M589.1 511.5H611.1" stroke="#00e400" stroke-width="1"/><path d="M589.1 525.5H611.1" stroke="#00e400" stroke-width="1"/><path d="M604.6 513.7L608.6 509.7" stroke="#ffffff" stroke-width="1.1"/><path d="M604.6 520.7L608.6 516.7" stroke="#ffffff" stroke-width="1.1"/><path d="M604.6 527.7L608.6 523.7" stroke="#ffffff" stroke-width="1.1"/><text x="600.1" y="515.3" font-size="8.5" fill="#ffffff" text-anchor="middle" font-family="Liberation Sans" font-weight="normal" transform="rotate(-90 600.1 512.2)" textLength="12" lengthAdjust="spacingAndGlyphs" stroke="#ffffff" stroke-width="0.35">100</text><text x="600.1" y="528.3" font-size="8.5" fill="#ffffff" text-anchor="middle" font-family="Liberation Sans" font-weight="normal" transform="rotate(-90 600.1 525.2)" textLength="12" lengthAdjust="spacingAndGlyphs" stroke="#ffffff" stroke-width="0.35">100</text><path d="M570.5 530.7V558.7" stroke="#00e400" stroke-width="1"/><path d="M581.5 530.7V558.7" stroke="#00e400" stroke-width="1"/><text x="571.6" y="551.8" font-size="8.5" fill="#ffffff" text-anchor="middle" font-family="Liberation Sans" font-weight="normal" textLength="8" lengthAdjust="spacingAndGlyphs" stroke="#ffffff" stroke-width="0.35">90</text><text x="581.6" y="551.8" font-size="8.5" fill="#ffffff" text-anchor="middle" font-family="Liberation Sans" font-weight="normal" textLength="8" lengthAdjust="spacingAndGlyphs" stroke="#ffffff" stroke-width="0.35">90</text><path d="M568.8 556.2L572.8 552.2" stroke="#ffffff" stroke-width="1.1"/><path d="M574.1 556.2L578.1 552.2" stroke="#ffffff" stroke-width="1.1"/><path d="M579.5 556.2L583.5 552.2" stroke="#ffffff" stroke-width="1.1"/><path d="M641.6 511.5H658.6" stroke="#00dcdc" stroke-width="1"/><path d="M641.6 525.5H658.6" stroke="#00dcdc" stroke-width="1"/><path d="M645.5 509.7V527.7" stroke="#00dcdc" stroke-width="1"/><path d="M656.5 509.7V527.7" stroke="#00dcdc" stroke-width="1"/><rect x="644.4" y="510.7" width="2" height="2" fill="#00e400"/><rect x="644.4" y="524.7" width="2" height="2" fill="#00e400"/><rect x="655.0" y="510.7" width="2" height="2" fill="#00e400"/><rect x="655.0" y="524.7" width="2" height="2" fill="#00e400"/><path d="M663.6 511.5H685.6" stroke="#00e400" stroke-width="1"/><path d="M663.6 525.5H685.6" stroke="#00e400" stroke-width="1"/><path d="M679.1 513.7L683.1 509.7" stroke="#ffffff" stroke-width="1.1"/><path d="M679.1 520.7L683.1 516.7" stroke="#ffffff" stroke-width="1.1"/><path d="M679.1 527.7L683.1 523.7" stroke="#ffffff" stroke-width="1.1"/><text x="674.6" y="515.3" font-size="8.5" fill="#ffffff" text-anchor="middle" font-family="Liberation Sans" font-weight="normal" transform="rotate(-90 674.6 512.2)" textLength="12" lengthAdjust="spacingAndGlyphs" stroke="#ffffff" stroke-width="0.35">100</text><text x="674.6" y="528.3" font-size="8.5" fill="#ffffff" text-anchor="middle" font-family="Liberation Sans" font-weight="normal" transform="rotate(-90 674.6 525.2)" textLength="12" lengthAdjust="spacingAndGlyphs" stroke="#ffffff" stroke-width="0.35">100</text><path d="M645.5 530.7V558.7" stroke="#00e400" stroke-width="1"/><path d="M656.5 530.7V558.7" stroke="#00e400" stroke-width="1"/><text x="646.1" y="551.8" font-size="8.5" fill="#ffffff" text-anchor="middle" font-family="Liberation Sans" font-weight="normal" textLength="8" lengthAdjust="spacingAndGlyphs" stroke="#ffffff" stroke-width="0.35">90</text><text x="656.1" y="551.8" font-size="8.5" fill="#ffffff" text-anchor="middle" font-family="Liberation Sans" font-weight="normal" textLength="8" lengthAdjust="spacingAndGlyphs" stroke="#ffffff" stroke-width="0.35">90</text><path d="M643.4 556.2L647.4 552.2" stroke="#ffffff" stroke-width="1.1"/><path d="M648.6 556.2L652.6 552.2" stroke="#ffffff" stroke-width="1.1"/><path d="M654.0 556.2L658.0 552.2" stroke="#ffffff" stroke-width="1.1"/><path d="M716.2 511.5H733.2" stroke="#00dcdc" stroke-width="1"/><path d="M716.2 525.5H733.2" stroke="#00dcdc" stroke-width="1"/><path d="M719.5 509.7V527.7" stroke="#00dcdc" stroke-width="1"/><path d="M730.5 509.7V527.7" stroke="#00dcdc" stroke-width="1"/><rect x="718.9" y="510.7" width="2" height="2" fill="#00e400"/><rect x="718.9" y="524.7" width="2" height="2" fill="#00e400"/><rect x="729.6" y="510.7" width="2" height="2" fill="#00e400"/><rect x="729.6" y="524.7" width="2" height="2" fill="#00e400"/><path d="M738.2 511.5H760.2" stroke="#00e400" stroke-width="1"/><path d="M738.2 525.5H760.2" stroke="#00e400" stroke-width="1"/><path d="M753.7 513.7L757.7 509.7" stroke="#ffffff" stroke-width="1.1"/><path d="M753.7 520.7L757.7 516.7" stroke="#ffffff" stroke-width="1.1"/><path d="M753.7 527.7L757.7 523.7" stroke="#ffffff" stroke-width="1.1"/><text x="749.2" y="515.3" font-size="8.5" fill="#ffffff" text-anchor="middle" font-family="Liberation Sans" font-weight="normal" transform="rotate(-90 749.2 512.2)" textLength="12" lengthAdjust="spacingAndGlyphs" stroke="#ffffff" stroke-width="0.35">100</text><text x="749.2" y="528.3" font-size="8.5" fill="#ffffff" text-anchor="middle" font-family="Liberation Sans" font-weight="normal" transform="rotate(-90 749.2 525.2)" textLength="12" lengthAdjust="spacingAndGlyphs" stroke="#ffffff" stroke-width="0.35">100</text><path d="M719.5 530.7V558.7" stroke="#00e400" stroke-width="1"/><path d="M730.5 530.7V558.7" stroke="#00e400" stroke-width="1"/><text x="720.7" y="551.8" font-size="8.5" fill="#ffffff" text-anchor="middle" font-family="Liberation Sans" font-weight="normal" textLength="8" lengthAdjust="spacingAndGlyphs" stroke="#ffffff" stroke-width="0.35">90</text><text x="730.7" y="551.8" font-size="8.5" fill="#ffffff" text-anchor="middle" font-family="Liberation Sans" font-weight="normal" textLength="8" lengthAdjust="spacingAndGlyphs" stroke="#ffffff" stroke-width="0.35">90</text><path d="M717.9 556.2L721.9 552.2" stroke="#ffffff" stroke-width="1.1"/><path d="M723.2 556.2L727.2 552.2" stroke="#ffffff" stroke-width="1.1"/><path d="M728.6 556.2L732.6 552.2" stroke="#ffffff" stroke-width="1.1"/><path d="M790.7 511.5H807.7" stroke="#00dcdc" stroke-width="1"/><path d="M790.7 525.5H807.7" stroke="#00dcdc" stroke-width="1"/><path d="M794.5 509.7V527.7" stroke="#00dcdc" stroke-width="1"/><path d="M805.5 509.7V527.7" stroke="#00dcdc" stroke-width="1"/><rect x="793.4" y="510.7" width="2" height="2" fill="#00e400"/><rect x="793.4" y="524.7" width="2" height="2" fill="#00e400"/><rect x="804.1" y="510.7" width="2" height="2" fill="#00e400"/><rect x="804.1" y="524.7" width="2" height="2" fill="#00e400"/><path d="M812.7 511.5H834.7" stroke="#00e400" stroke-width="1"/><path d="M812.7 525.5H834.7" stroke="#00e400" stroke-width="1"/><path d="M828.2 513.7L832.2 509.7" stroke="#ffffff" stroke-width="1.1"/><path d="M828.2 520.7L832.2 516.7" stroke="#ffffff" stroke-width="1.1"/><path d="M828.2 527.7L832.2 523.7" stroke="#ffffff" stroke-width="1.1"/><text x="823.7" y="515.3" font-size="8.5" fill="#ffffff" text-anchor="middle" font-family="Liberation Sans" font-weight="normal" transform="rotate(-90 823.7 512.2)" textLength="12" lengthAdjust="spacingAndGlyphs" stroke="#ffffff" stroke-width="0.35">100</text><text x="823.7" y="528.3" font-size="8.5" fill="#ffffff" text-anchor="middle" font-family="Liberation Sans" font-weight="normal" transform="rotate(-90 823.7 525.2)" textLength="12" lengthAdjust="spacingAndGlyphs" stroke="#ffffff" stroke-width="0.35">100</text><path d="M794.5 530.7V558.7" stroke="#00e400" stroke-width="1"/><path d="M805.5 530.7V558.7" stroke="#00e400" stroke-width="1"/><text x="795.2" y="551.8" font-size="8.5" fill="#ffffff" text-anchor="middle" font-family="Liberation Sans" font-weight="normal" textLength="8" lengthAdjust="spacingAndGlyphs" stroke="#ffffff" stroke-width="0.35">90</text><text x="805.2" y="551.8" font-size="8.5" fill="#ffffff" text-anchor="middle" font-family="Liberation Sans" font-weight="normal" textLength="8" lengthAdjust="spacingAndGlyphs" stroke="#ffffff" stroke-width="0.35">90</text><path d="M792.4 556.2L796.4 552.2" stroke="#ffffff" stroke-width="1.1"/><path d="M797.7 556.2L801.7 552.2" stroke="#ffffff" stroke-width="1.1"/><path d="M803.1 556.2L807.1 552.2" stroke="#ffffff" stroke-width="1.1"/><path d="M865.2 511.5H882.2" stroke="#00dcdc" stroke-width="1"/><path d="M865.2 525.5H882.2" stroke="#00dcdc" stroke-width="1"/><path d="M868.5 509.7V527.7" stroke="#00dcdc" stroke-width="1"/><path d="M879.5 509.7V527.7" stroke="#00dcdc" stroke-width="1"/><rect x="867.9" y="510.7" width="2" height="2" fill="#00e400"/><rect x="867.9" y="524.7" width="2" height="2" fill="#00e400"/><rect x="878.6" y="510.7" width="2" height="2" fill="#00e400"/><rect x="878.6" y="524.7" width="2" height="2" fill="#00e400"/><path d="M887.2 511.5H909.2" stroke="#00e400" stroke-width="1"/><path d="M887.2 525.5H909.2" stroke="#00e400" stroke-width="1"/><path d="M902.7 513.7L906.7 509.7" stroke="#ffffff" stroke-width="1.1"/><path d="M902.7 520.7L906.7 516.7" stroke="#ffffff" stroke-width="1.1"/><path d="M902.7 527.7L906.7 523.7" stroke="#ffffff" stroke-width="1.1"/><text x="898.2" y="515.3" font-size="8.5" fill="#ffffff" text-anchor="middle" font-family="Liberation Sans" font-weight="normal" transform="rotate(-90 898.2 512.2)" textLength="12" lengthAdjust="spacingAndGlyphs" stroke="#ffffff" stroke-width="0.35">100</text><text x="898.2" y="528.3" font-size="8.5" fill="#ffffff" text-anchor="middle" font-family="Liberation Sans" font-weight="normal" transform="rotate(-90 898.2 525.2)" textLength="12" lengthAdjust="spacingAndGlyphs" stroke="#ffffff" stroke-width="0.35">100</text><path d="M868.5 530.7V558.7" stroke="#00e400" stroke-width="1"/><path d="M879.5 530.7V558.7" stroke="#00e400" stroke-width="1"/><text x="869.7" y="551.8" font-size="8.5" fill="#ffffff" text-anchor="middle" font-family="Liberation Sans" font-weight="normal" textLength="8" lengthAdjust="spacingAndGlyphs" stroke="#ffffff" stroke-width="0.35">90</text><text x="879.7" y="551.8" font-size="8.5" fill="#ffffff" text-anchor="middle" font-family="Liberation Sans" font-weight="normal" textLength="8" lengthAdjust="spacingAndGlyphs" stroke="#ffffff" stroke-width="0.35">90</text><path d="M866.9 556.2L870.9 552.2" stroke="#ffffff" stroke-width="1.1"/><path d="M872.2 556.2L876.2 552.2" stroke="#ffffff" stroke-width="1.1"/><path d="M877.6 556.2L881.6 552.2" stroke="#ffffff" stroke-width="1.1"/><path d="M939.8 511.5H956.8" stroke="#00dcdc" stroke-width="1"/><path d="M939.8 525.5H956.8" stroke="#00dcdc" stroke-width="1"/><path d="M943.5 509.7V527.7" stroke="#00dcdc" stroke-width="1"/><path d="M954.5 509.7V527.7" stroke="#00dcdc" stroke-width="1"/><rect x="942.5" y="510.7" width="2" height="2" fill="#00e400"/><rect x="942.5" y="524.7" width="2" height="2" fill="#00e400"/><rect x="953.2" y="510.7" width="2" height="2" fill="#00e400"/><rect x="953.2" y="524.7" width="2" height="2" fill="#00e400"/><path d="M961.8 511.5H983.8" stroke="#00e400" stroke-width="1"/><path d="M961.8 525.5H983.8" stroke="#00e400" stroke-width="1"/><path d="M977.3 513.7L981.3 509.7" stroke="#ffffff" stroke-width="1.1"/><path d="M977.3 520.7L981.3 516.7" stroke="#ffffff" stroke-width="1.1"/><path d="M977.3 527.7L981.3 523.7" stroke="#ffffff" stroke-width="1.1"/><text x="972.8" y="515.3" font-size="8.5" fill="#ffffff" text-anchor="middle" font-family="Liberation Sans" font-weight="normal" transform="rotate(-90 972.8 512.2)" textLength="12" lengthAdjust="spacingAndGlyphs" stroke="#ffffff" stroke-width="0.35">100</text><text x="972.8" y="528.3" font-size="8.5" fill="#ffffff" text-anchor="middle" font-family="Liberation Sans" font-weight="normal" transform="rotate(-90 972.8 525.2)" textLength="12" lengthAdjust="spacingAndGlyphs" stroke="#ffffff" stroke-width="0.35">100</text><path d="M943.5 530.7V558.7" stroke="#00e400" stroke-width="1"/><path d="M954.5 530.7V558.7" stroke="#00e400" stroke-width="1"/><text x="944.3" y="551.8" font-size="8.5" fill="#ffffff" text-anchor="middle" font-family="Liberation Sans" font-weight="normal" textLength="8" lengthAdjust="spacingAndGlyphs" stroke="#ffffff" stroke-width="0.35">90</text><text x="954.3" y="551.8" font-size="8.5" fill="#ffffff" text-anchor="middle" font-family="Liberation Sans" font-weight="normal" textLength="8" lengthAdjust="spacingAndGlyphs" stroke="#ffffff" stroke-width="0.35">90</text><path d="M941.5 556.2L945.5 552.2" stroke="#ffffff" stroke-width="1.1"/><path d="M946.8 556.2L950.8 552.2" stroke="#ffffff" stroke-width="1.1"/><path d="M952.2 556.2L956.2 552.2" stroke="#ffffff" stroke-width="1.1"/><path d="M1014.3 511.5H1031.3" stroke="#00dcdc" stroke-width="1"/><path d="M1014.3 525.5H1031.3" stroke="#00dcdc" stroke-width="1"/><path d="M1018.5 509.7V527.7" stroke="#00dcdc" stroke-width="1"/><path d="M1028.5 509.7V527.7" stroke="#00dcdc" stroke-width="1"/><rect x="1017.0" y="510.7" width="2" height="2" fill="#00e400"/><rect x="1017.0" y="524.7" width="2" height="2" fill="#00e400"/><rect x="1027.7" y="510.7" width="2" height="2" fill="#00e400"/><rect x="1027.7" y="524.7" width="2" height="2" fill="#00e400"/><path d="M1036.3 511.5H1058.3" stroke="#00e400" stroke-width="1"/><path d="M1036.3 525.5H1058.3" stroke="#00e400" stroke-width="1"/><path d="M1051.8 513.7L1055.8 509.7" stroke="#ffffff" stroke-width="1.1"/><path d="M1051.8 520.7L1055.8 516.7" stroke="#ffffff" stroke-width="1.1"/><path d="M1051.8 527.7L1055.8 523.7" stroke="#ffffff" stroke-width="1.1"/><text x="1047.3" y="515.3" font-size="8.5" fill="#ffffff" text-anchor="middle" font-family="Liberation Sans" font-weight="normal" transform="rotate(-90 1047.3 512.2)" textLength="12" lengthAdjust="spacingAndGlyphs" stroke="#ffffff" stroke-width="0.35">100</text><text x="1047.3" y="528.3" font-size="8.5" fill="#ffffff" text-anchor="middle" font-family="Liberation Sans" font-weight="normal" transform="rotate(-90 1047.3 525.2)" textLength="12" lengthAdjust="spacingAndGlyphs" stroke="#ffffff" stroke-width="0.35">100</text><path d="M1018.5 530.7V558.7" stroke="#00e400" stroke-width="1"/><path d="M1028.5 530.7V558.7" stroke="#00e400" stroke-width="1"/><text x="1018.8" y="551.8" font-size="8.5" fill="#ffffff" text-anchor="middle" font-family="Liberation Sans" font-weight="normal" textLength="8" lengthAdjust="spacingAndGlyphs" stroke="#ffffff" stroke-width="0.35">90</text><text x="1028.8" y="551.8" font-size="8.5" fill="#ffffff" text-anchor="middle" font-family="Liberation Sans" font-weight="normal" textLength="8" lengthAdjust="spacingAndGlyphs" stroke="#ffffff" stroke-width="0.35">90</text><path d="M1016.0 556.2L1020.0 552.2" stroke="#ffffff" stroke-width="1.1"/><path d="M1021.3 556.2L1025.3 552.2" stroke="#ffffff" stroke-width="1.1"/><path d="M1026.7 556.2L1030.7 552.2" stroke="#ffffff" stroke-width="1.1"/><path d="M1088.8 511.5H1105.8" stroke="#00dcdc" stroke-width="1"/><path d="M1088.8 525.5H1105.8" stroke="#00dcdc" stroke-width="1"/><path d="M1092.5 509.7V527.7" stroke="#00dcdc" stroke-width="1"/><path d="M1103.5 509.7V527.7" stroke="#00dcdc" stroke-width="1"/><rect x="1091.5" y="510.7" width="2" height="2" fill="#00e400"/><rect x="1091.5" y="524.7" width="2" height="2" fill="#00e400"/><rect x="1102.2" y="510.7" width="2" height="2" fill="#00e400"/><rect x="1102.2" y="524.7" width="2" height="2" fill="#00e400"/><path d="M1110.8 511.5H1132.8" stroke="#00e400" stroke-width="1"/><path d="M1110.8 525.5H1132.8" stroke="#00e400" stroke-width="1"/><path d="M1126.3 513.7L1130.3 509.7" stroke="#ffffff" stroke-width="1.1"/><path d="M1126.3 520.7L1130.3 516.7" stroke="#ffffff" stroke-width="1.1"/><path d="M1126.3 527.7L1130.3 523.7" stroke="#ffffff" stroke-width="1.1"/><text x="1121.8" y="515.3" font-size="8.5" fill="#ffffff" text-anchor="middle" font-family="Liberation Sans" font-weight="normal" transform="rotate(-90 1121.8 512.2)" textLength="12" lengthAdjust="spacingAndGlyphs" stroke="#ffffff" stroke-width="0.35">100</text><text x="1121.8" y="528.3" font-size="8.5" fill="#ffffff" text-anchor="middle" font-family="Liberation Sans" font-weight="normal" transform="rotate(-90 1121.8 525.2)" textLength="12" lengthAdjust="spacingAndGlyphs" stroke="#ffffff" stroke-width="0.35">100</text><path d="M1092.5 530.7V558.7" stroke="#00e400" stroke-width="1"/><path d="M1103.5 530.7V558.7" stroke="#00e400" stroke-width="1"/><text x="1093.3" y="551.8" font-size="8.5" fill="#ffffff" text-anchor="middle" font-family="Liberation Sans" font-weight="normal" textLength="8" lengthAdjust="spacingAndGlyphs" stroke="#ffffff" stroke-width="0.35">90</text><text x="1103.3" y="551.8" font-size="8.5" fill="#ffffff" text-anchor="middle" font-family="Liberation Sans" font-weight="normal" textLength="8" lengthAdjust="spacingAndGlyphs" stroke="#ffffff" stroke-width="0.35">90</text><path d="M1090.5 556.2L1094.5 552.2" stroke="#ffffff" stroke-width="1.1"/><path d="M1095.8 556.2L1099.8 552.2" stroke="#ffffff" stroke-width="1.1"/><path d="M1101.2 556.2L1105.2 552.2" stroke="#ffffff" stroke-width="1.1"/><path d="M1163.4 511.5H1180.4" stroke="#00dcdc" stroke-width="1"/><path d="M1163.4 525.5H1180.4" stroke="#00dcdc" stroke-width="1"/><path d="M1167.5 509.7V527.7" stroke="#00dcdc" stroke-width="1"/><path d="M1177.5 509.7V527.7" stroke="#00dcdc" stroke-width="1"/><rect x="1166.1" y="510.7" width="2" height="2" fill="#00e400"/><rect x="1166.1" y="524.7" width="2" height="2" fill="#00e400"/><rect x="1176.8" y="510.7" width="2" height="2" fill="#00e400"/><rect x="1176.8" y="524.7" width="2" height="2" fill="#00e400"/><path d="M1185.4 511.5H1207.4" stroke="#00e400" stroke-width="1"/><path d="M1185.4 525.5H1207.4" stroke="#00e400" stroke-width="1"/><path d="M1200.9 513.7L1204.9 509.7" stroke="#ffffff" stroke-width="1.1"/><path d="M1200.9 520.7L1204.9 516.7" stroke="#ffffff" stroke-width="1.1"/><path d="M1200.9 527.7L1204.9 523.7" stroke="#ffffff" stroke-width="1.1"/><text x="1196.4" y="515.3" font-size="8.5" fill="#ffffff" text-anchor="middle" font-family="Liberation Sans" font-weight="normal" transform="rotate(-90 1196.4 512.2)" textLength="12" lengthAdjust="spacingAndGlyphs" stroke="#ffffff" stroke-width="0.35">100</text><text x="1196.4" y="528.3" font-size="8.5" fill="#ffffff" text-anchor="middle" font-family="Liberation Sans" font-weight="normal" transform="rotate(-90 1196.4 525.2)" textLength="12" lengthAdjust="spacingAndGlyphs" stroke="#ffffff" stroke-width="0.35">100</text><path d="M1167.5 530.7V558.7" stroke="#00e400" stroke-width="1"/><path d="M1177.5 530.7V558.7" stroke="#00e400" stroke-width="1"/><text x="1167.9" y="551.8" font-size="8.5" fill="#ffffff" text-anchor="middle" font-family="Liberation Sans" font-weight="normal" textLength="8" lengthAdjust="spacingAndGlyphs" stroke="#ffffff" stroke-width="0.35">90</text><text x="1177.9" y="551.8" font-size="8.5" fill="#ffffff" text-anchor="middle" font-family="Liberation Sans" font-weight="normal" textLength="8" lengthAdjust="spacingAndGlyphs" stroke="#ffffff" stroke-width="0.35">90</text><path d="M1165.1 556.2L1169.1 552.2" stroke="#ffffff" stroke-width="1.1"/><path d="M1170.4 556.2L1174.4 552.2" stroke="#ffffff" stroke-width="1.1"/><path d="M1175.8 556.2L1179.8 552.2" stroke="#ffffff" stroke-width="1.1"/><path d="M1237.9 511.5H1254.9" stroke="#00dcdc" stroke-width="1"/><path d="M1237.9 525.5H1254.9" stroke="#00dcdc" stroke-width="1"/><path d="M1241.5 509.7V527.7" stroke="#00dcdc" stroke-width="1"/><path d="M1252.5 509.7V527.7" stroke="#00dcdc" stroke-width="1"/><rect x="1240.6" y="510.7" width="2" height="2" fill="#00e400"/><rect x="1240.6" y="524.7" width="2" height="2" fill="#00e400"/><rect x="1251.3" y="510.7" width="2" height="2" fill="#00e400"/><rect x="1251.3" y="524.7" width="2" height="2" fill="#00e400"/><path d="M1259.9 511.5H1281.9" stroke="#00e400" stroke-width="1"/><path d="M1259.9 525.5H1281.9" stroke="#00e400" stroke-width="1"/><path d="M1275.4 513.7L1279.4 509.7" stroke="#ffffff" stroke-width="1.1"/><path d="M1275.4 520.7L1279.4 516.7" stroke="#ffffff" stroke-width="1.1"/><path d="M1275.4 527.7L1279.4 523.7" stroke="#ffffff" stroke-width="1.1"/><text x="1270.9" y="515.3" font-size="8.5" fill="#ffffff" text-anchor="middle" font-family="Liberation Sans" font-weight="normal" transform="rotate(-90 1270.9 512.2)" textLength="12" lengthAdjust="spacingAndGlyphs" stroke="#ffffff" stroke-width="0.35">100</text><text x="1270.9" y="528.3" font-size="8.5" fill="#ffffff" text-anchor="middle" font-family="Liberation Sans" font-weight="normal" transform="rotate(-90 1270.9 525.2)" textLength="12" lengthAdjust="spacingAndGlyphs" stroke="#ffffff" stroke-width="0.35">100</text><path d="M1241.5 530.7V558.7" stroke="#00e400" stroke-width="1"/><path d="M1252.5 530.7V558.7" stroke="#00e400" stroke-width="1"/><text x="1242.4" y="551.8" font-size="8.5" fill="#ffffff" text-anchor="middle" font-family="Liberation Sans" font-weight="normal" textLength="8" lengthAdjust="spacingAndGlyphs" stroke="#ffffff" stroke-width="0.35">90</text><text x="1252.4" y="551.8" font-size="8.5" fill="#ffffff" text-anchor="middle" font-family="Liberation Sans" font-weight="normal" textLength="8" lengthAdjust="spacingAndGlyphs" stroke="#ffffff" stroke-width="0.35">90</text><path d="M1239.6 556.2L1243.6 552.2" stroke="#ffffff" stroke-width="1.1"/><path d="M1244.9 556.2L1248.9 552.2" stroke="#ffffff" stroke-width="1.1"/><path d="M1250.3 556.2L1254.3 552.2" stroke="#ffffff" stroke-width="1.1"/><path d="M1301.8 511.5H1318.8" stroke="#00dcdc" stroke-width="1"/><path d="M1301.8 525.5H1318.8" stroke="#00dcdc" stroke-width="1"/><path d="M1305.5 509.7V527.7" stroke="#00dcdc" stroke-width="1"/><path d="M1316.5 509.7V527.7" stroke="#00dcdc" stroke-width="1"/><rect x="1304.5" y="510.7" width="2" height="2" fill="#00e400"/><rect x="1304.5" y="524.7" width="2" height="2" fill="#00e400"/><rect x="1315.2" y="510.7" width="2" height="2" fill="#00e400"/><rect x="1315.2" y="524.7" width="2" height="2" fill="#00e400"/><path d="M1323.8 511.5H1345.8" stroke="#00e400" stroke-width="1"/><path d="M1323.8 525.5H1345.8" stroke="#00e400" stroke-width="1"/><path d="M1339.3 513.7L1343.3 509.7" stroke="#ffffff" stroke-width="1.1"/><path d="M1339.3 520.7L1343.3 516.7" stroke="#ffffff" stroke-width="1.1"/><path d="M1339.3 527.7L1343.3 523.7" stroke="#ffffff" stroke-width="1.1"/><text x="1334.8" y="515.3" font-size="8.5" fill="#ffffff" text-anchor="middle" font-family="Liberation Sans" font-weight="normal" transform="rotate(-90 1334.8 512.2)" textLength="12" lengthAdjust="spacingAndGlyphs" stroke="#ffffff" stroke-width="0.35">100</text><text x="1334.8" y="528.3" font-size="8.5" fill="#ffffff" text-anchor="middle" font-family="Liberation Sans" font-weight="normal" transform="rotate(-90 1334.8 525.2)" textLength="12" lengthAdjust="spacingAndGlyphs" stroke="#ffffff" stroke-width="0.35">100</text><path d="M1305.5 530.7V558.7" stroke="#00e400" stroke-width="1"/><path d="M1316.5 530.7V558.7" stroke="#00e400" stroke-width="1"/><text x="1306.3" y="551.8" font-size="8.5" fill="#ffffff" text-anchor="middle" font-family="Liberation Sans" font-weight="normal" textLength="8" lengthAdjust="spacingAndGlyphs" stroke="#ffffff" stroke-width="0.35">90</text><text x="1316.3" y="551.8" font-size="8.5" fill="#ffffff" text-anchor="middle" font-family="Liberation Sans" font-weight="normal" textLength="8" lengthAdjust="spacingAndGlyphs" stroke="#ffffff" stroke-width="0.35">90</text><path d="M1303.5 556.2L1307.5 552.2" stroke="#ffffff" stroke-width="1.1"/><path d="M1308.8 556.2L1312.8 552.2" stroke="#ffffff" stroke-width="1.1"/><path d="M1314.2 556.2L1318.2 552.2" stroke="#ffffff" stroke-width="1.1"/><path d="M1376.3 511.5H1393.3" stroke="#00dcdc" stroke-width="1"/><path d="M1376.3 525.5H1393.3" stroke="#00dcdc" stroke-width="1"/><path d="M1380.5 509.7V527.7" stroke="#00dcdc" stroke-width="1"/><path d="M1390.5 509.7V527.7" stroke="#00dcdc" stroke-width="1"/><rect x="1379.0" y="510.7" width="2" height="2" fill="#00e400"/><rect x="1379.0" y="524.7" width="2" height="2" fill="#00e400"/><rect x="1389.7" y="510.7" width="2" height="2" fill="#00e400"/><rect x="1389.7" y="524.7" width="2" height="2" fill="#00e400"/><path d="M1398.3 511.5H1420.3" stroke="#00e400" stroke-width="1"/><path d="M1398.3 525.5H1420.3" stroke="#00e400" stroke-width="1"/><path d="M1413.8 513.7L1417.8 509.7" stroke="#ffffff" stroke-width="1.1"/><path d="M1413.8 520.7L1417.8 516.7" stroke="#ffffff" stroke-width="1.1"/><path d="M1413.8 527.7L1417.8 523.7" stroke="#ffffff" stroke-width="1.1"/><text x="1409.3" y="515.3" font-size="8.5" fill="#ffffff" text-anchor="middle" font-family="Liberation Sans" font-weight="normal" transform="rotate(-90 1409.3 512.2)" textLength="12" lengthAdjust="spacingAndGlyphs" stroke="#ffffff" stroke-width="0.35">100</text><text x="1409.3" y="528.3" font-size="8.5" fill="#ffffff" text-anchor="middle" font-family="Liberation Sans" font-weight="normal" transform="rotate(-90 1409.3 525.2)" textLength="12" lengthAdjust="spacingAndGlyphs" stroke="#ffffff" stroke-width="0.35">100</text><path d="M1380.5 530.7V558.7" stroke="#00e400" stroke-width="1"/><path d="M1390.5 530.7V558.7" stroke="#00e400" stroke-width="1"/><text x="1380.8" y="551.8" font-size="8.5" fill="#ffffff" text-anchor="middle" font-family="Liberation Sans" font-weight="normal" textLength="8" lengthAdjust="spacingAndGlyphs" stroke="#ffffff" stroke-width="0.35">90</text><text x="1390.8" y="551.8" font-size="8.5" fill="#ffffff" text-anchor="middle" font-family="Liberation Sans" font-weight="normal" textLength="8" lengthAdjust="spacingAndGlyphs" stroke="#ffffff" stroke-width="0.35">90</text><path d="M1378.0 556.2L1382.0 552.2" stroke="#ffffff" stroke-width="1.1"/><path d="M1383.3 556.2L1387.3 552.2" stroke="#ffffff" stroke-width="1.1"/><path d="M1388.7 556.2L1392.7 552.2" stroke="#ffffff" stroke-width="1.1"/><path d="M269.0 612.5H286.0" stroke="#00dcdc" stroke-width="1"/><path d="M269.0 626.5H286.0" stroke="#00dcdc" stroke-width="1"/><path d="M272.5 610.9V628.9" stroke="#00dcdc" stroke-width="1"/><path d="M283.5 610.9V628.9" stroke="#00dcdc" stroke-width="1"/><rect x="271.7" y="611.9" width="2" height="2" fill="#00e400"/><rect x="271.7" y="625.9" width="2" height="2" fill="#00e400"/><rect x="282.4" y="611.9" width="2" height="2" fill="#00e400"/><rect x="282.4" y="625.9" width="2" height="2" fill="#00e400"/><path d="M291.0 612.5H313.0" stroke="#00e400" stroke-width="1"/><path d="M291.0 626.5H313.0" stroke="#00e400" stroke-width="1"/><path d="M306.5 614.9L310.5 610.9" stroke="#ffffff" stroke-width="1.1"/><path d="M306.5 621.9L310.5 617.9" stroke="#ffffff" stroke-width="1.1"/><path d="M306.5 628.9L310.5 624.9" stroke="#ffffff" stroke-width="1.1"/><text x="302.0" y="616.4" font-size="8.5" fill="#ffffff" text-anchor="middle" font-family="Liberation Sans" font-weight="normal" transform="rotate(-90 302.0 613.4)" textLength="12" lengthAdjust="spacingAndGlyphs" stroke="#ffffff" stroke-width="0.35">100</text><text x="302.0" y="629.4" font-size="8.5" fill="#ffffff" text-anchor="middle" font-family="Liberation Sans" font-weight="normal" transform="rotate(-90 302.0 626.4)" textLength="12" lengthAdjust="spacingAndGlyphs" stroke="#ffffff" stroke-width="0.35">100</text><path d="M272.5 631.9V659.9" stroke="#00e400" stroke-width="1"/><path d="M283.5 631.9V659.9" stroke="#00e400" stroke-width="1"/><text x="273.5" y="652.9" font-size="8.5" fill="#ffffff" text-anchor="middle" font-family="Liberation Sans" font-weight="normal" textLength="8" lengthAdjust="spacingAndGlyphs" stroke="#ffffff" stroke-width="0.35">90</text><text x="283.5" y="652.9" font-size="8.5" fill="#ffffff" text-anchor="middle" font-family="Liberation Sans" font-weight="normal" textLength="8" lengthAdjust="spacingAndGlyphs" stroke="#ffffff" stroke-width="0.35">90</text><path d="M270.7 657.4L274.7 653.4" stroke="#ffffff" stroke-width="1.1"/><path d="M276.0 657.4L280.0 653.4" stroke="#ffffff" stroke-width="1.1"/><path d="M281.4 657.4L285.4 653.4" stroke="#ffffff" stroke-width="1.1"/><path d="M343.5 612.5H360.5" stroke="#00dcdc" stroke-width="1"/><path d="M343.5 626.5H360.5" stroke="#00dcdc" stroke-width="1"/><path d="M347.5 610.9V628.9" stroke="#00dcdc" stroke-width="1"/><path d="M357.5 610.9V628.9" stroke="#00dcdc" stroke-width="1"/><rect x="346.2" y="611.9" width="2" height="2" fill="#00e400"/><rect x="346.2" y="625.9" width="2" height="2" fill="#00e400"/><rect x="356.9" y="611.9" width="2" height="2" fill="#00e400"/><rect x="356.9" y="625.9" width="2" height="2" fill="#00e400"/><path d="M365.5 612.5H387.5" stroke="#00e400" stroke-width="1"/><path d="M365.5 626.5H387.5" stroke="#00e400" stroke-width="1"/><path d="M381.0 614.9L385.0 610.9" stroke="#ffffff" stroke-width="1.1"/><path d="M381.0 621.9L385.0 617.9" stroke="#ffffff" stroke-width="1.1"/><path d="M381.0 628.9L385.0 624.9" stroke="#ffffff" stroke-width="1.1"/><text x="376.5" y="616.4" font-size="8.5" fill="#ffffff" text-anchor="middle" font-family="Liberation Sans" font-weight="normal" transform="rotate(-90 376.5 613.4)" textLength="12" lengthAdjust="spacingAndGlyphs" stroke="#ffffff" stroke-width="0.35">100</text><text x="376.5" y="629.4" font-size="8.5" fill="#ffffff" text-anchor="middle" font-family="Liberation Sans" font-weight="normal" transform="rotate(-90 376.5 626.4)" textLength="12" lengthAdjust="spacingAndGlyphs" stroke="#ffffff" stroke-width="0.35">100</text><path d="M347.5 631.9V659.9" stroke="#00e400" stroke-width="1"/><path d="M357.5 631.9V659.9" stroke="#00e400" stroke-width="1"/><text x="348.0" y="652.9" font-size="8.5" fill="#ffffff" text-anchor="middle" font-family="Liberation Sans" font-weight="normal" textLength="8" lengthAdjust="spacingAndGlyphs" stroke="#ffffff" stroke-width="0.35">90</text><text x="358.0" y="652.9" font-size="8.5" fill="#ffffff" text-anchor="middle" font-family="Liberation Sans" font-weight="normal" textLength="8" lengthAdjust="spacingAndGlyphs" stroke="#ffffff" stroke-width="0.35">90</text><path d="M345.2 657.4L349.2 653.4" stroke="#ffffff" stroke-width="1.1"/><path d="M350.5 657.4L354.5 653.4" stroke="#ffffff" stroke-width="1.1"/><path d="M355.9 657.4L359.9 653.4" stroke="#ffffff" stroke-width="1.1"/><path d="M418.1 612.5H435.1" stroke="#00dcdc" stroke-width="1"/><path d="M418.1 626.5H435.1" stroke="#00dcdc" stroke-width="1"/><path d="M421.5 610.9V628.9" stroke="#00dcdc" stroke-width="1"/><path d="M432.5 610.9V628.9" stroke="#00dcdc" stroke-width="1"/><rect x="420.8" y="611.9" width="2" height="2" fill="#00e400"/><rect x="420.8" y="625.9" width="2" height="2" fill="#00e400"/><rect x="431.5" y="611.9" width="2" height="2" fill="#00e400"/><rect x="431.5" y="625.9" width="2" height="2" fill="#00e400"/><path d="M440.1 612.5H462.1" stroke="#00e400" stroke-width="1"/><path d="M440.1 626.5H462.1" stroke="#00e400" stroke-width="1"/><path d="M455.6 614.9L459.6 610.9" stroke="#ffffff" stroke-width="1.1"/><path d="M455.6 621.9L459.6 617.9" stroke="#ffffff" stroke-width="1.1"/><path d="M455.6 628.9L459.6 624.9" stroke="#ffffff" stroke-width="1.1"/><text x="451.1" y="616.4" font-size="8.5" fill="#ffffff" text-anchor="middle" font-family="Liberation Sans" font-weight="normal" transform="rotate(-90 451.1 613.4)" textLength="12" lengthAdjust="spacingAndGlyphs" stroke="#ffffff" stroke-width="0.35">100</text><text x="451.1" y="629.4" font-size="8.5" fill="#ffffff" text-anchor="middle" font-family="Liberation Sans" font-weight="normal" transform="rotate(-90 451.1 626.4)" textLength="12" lengthAdjust="spacingAndGlyphs" stroke="#ffffff" stroke-width="0.35">100</text><path d="M421.5 631.9V659.9" stroke="#00e400" stroke-width="1"/><path d="M432.5 631.9V659.9" stroke="#00e400" stroke-width="1"/><text x="422.6" y="652.9" font-size="8.5" fill="#ffffff" text-anchor="middle" font-family="Liberation Sans" font-weight="normal" textLength="8" lengthAdjust="spacingAndGlyphs" stroke="#ffffff" stroke-width="0.35">90</text><text x="432.6" y="652.9" font-size="8.5" fill="#ffffff" text-anchor="middle" font-family="Liberation Sans" font-weight="normal" textLength="8" lengthAdjust="spacingAndGlyphs" stroke="#ffffff" stroke-width="0.35">90</text><path d="M419.8 657.4L423.8 653.4" stroke="#ffffff" stroke-width="1.1"/><path d="M425.1 657.4L429.1 653.4" stroke="#ffffff" stroke-width="1.1"/><path d="M430.5 657.4L434.5 653.4" stroke="#ffffff" stroke-width="1.1"/><path d="M492.6 612.5H509.6" stroke="#00dcdc" stroke-width="1"/><path d="M492.6 626.5H509.6" stroke="#00dcdc" stroke-width="1"/><path d="M496.5 610.9V628.9" stroke="#00dcdc" stroke-width="1"/><path d="M506.5 610.9V628.9" stroke="#00dcdc" stroke-width="1"/><rect x="495.3" y="611.9" width="2" height="2" fill="#00e400"/><rect x="495.3" y="625.9" width="2" height="2" fill="#00e400"/><rect x="506.0" y="611.9" width="2" height="2" fill="#00e400"/><rect x="506.0" y="625.9" width="2" height="2" fill="#00e400"/><path d="M514.6 612.5H536.6" stroke="#00e400" stroke-width="1"/><path d="M514.6 626.5H536.6" stroke="#00e400" stroke-width="1"/><path d="M530.1 614.9L534.1 610.9" stroke="#ffffff" stroke-width="1.1"/><path d="M530.1 621.9L534.1 617.9" stroke="#ffffff" stroke-width="1.1"/><path d="M530.1 628.9L534.1 624.9" stroke="#ffffff" stroke-width="1.1"/><text x="525.6" y="616.4" font-size="8.5" fill="#ffffff" text-anchor="middle" font-family="Liberation Sans" font-weight="normal" transform="rotate(-90 525.6 613.4)" textLength="12" lengthAdjust="spacingAndGlyphs" stroke="#ffffff" stroke-width="0.35">100</text><text x="525.6" y="629.4" font-size="8.5" fill="#ffffff" text-anchor="middle" font-family="Liberation Sans" font-weight="normal" transform="rotate(-90 525.6 626.4)" textLength="12" lengthAdjust="spacingAndGlyphs" stroke="#ffffff" stroke-width="0.35">100</text><path d="M496.5 631.9V659.9" stroke="#00e400" stroke-width="1"/><path d="M506.5 631.9V659.9" stroke="#00e400" stroke-width="1"/><text x="497.1" y="652.9" font-size="8.5" fill="#ffffff" text-anchor="middle" font-family="Liberation Sans" font-weight="normal" textLength="8" lengthAdjust="spacingAndGlyphs" stroke="#ffffff" stroke-width="0.35">90</text><text x="507.1" y="652.9" font-size="8.5" fill="#ffffff" text-anchor="middle" font-family="Liberation Sans" font-weight="normal" textLength="8" lengthAdjust="spacingAndGlyphs" stroke="#ffffff" stroke-width="0.35">90</text><path d="M494.3 657.4L498.3 653.4" stroke="#ffffff" stroke-width="1.1"/><path d="M499.6 657.4L503.6 653.4" stroke="#ffffff" stroke-width="1.1"/><path d="M505.0 657.4L509.0 653.4" stroke="#ffffff" stroke-width="1.1"/><path d="M567.1 612.5H584.1" stroke="#00dcdc" stroke-width="1"/><path d="M567.1 626.5H584.1" stroke="#00dcdc" stroke-width="1"/><path d="M570.5 610.9V628.9" stroke="#00dcdc" stroke-width="1"/><path d="M581.5 610.9V628.9" stroke="#00dcdc" stroke-width="1"/><rect x="569.8" y="611.9" width="2" height="2" fill="#00e400"/><rect x="569.8" y="625.9" width="2" height="2" fill="#00e400"/><rect x="580.5" y="611.9" width="2" height="2" fill="#00e400"/><rect x="580.5" y="625.9" width="2" height="2" fill="#00e400"/><path d="M589.1 612.5H611.1" stroke="#00e400" stroke-width="1"/><path d="M589.1 626.5H611.1" stroke="#00e400" stroke-width="1"/><path d="M604.6 614.9L608.6 610.9" stroke="#ffffff" stroke-width="1.1"/><path d="M604.6 621.9L608.6 617.9" stroke="#ffffff" stroke-width="1.1"/><path d="M604.6 628.9L608.6 624.9" stroke="#ffffff" stroke-width="1.1"/><text x="600.1" y="616.4" font-size="8.5" fill="#ffffff" text-anchor="middle" font-family="Liberation Sans" font-weight="normal" transform="rotate(-90 600.1 613.4)" textLength="12" lengthAdjust="spacingAndGlyphs" stroke="#ffffff" stroke-width="0.35">100</text><text x="600.1" y="629.4" font-size="8.5" fill="#ffffff" text-anchor="middle" font-family="Liberation Sans" font-weight="normal" transform="rotate(-90 600.1 626.4)" textLength="12" lengthAdjust="spacingAndGlyphs" stroke="#ffffff" stroke-width="0.35">100</text><path d="M570.5 631.9V659.9" stroke="#00e400" stroke-width="1"/><path d="M581.5 631.9V659.9" stroke="#00e400" stroke-width="1"/><text x="571.6" y="652.9" font-size="8.5" fill="#ffffff" text-anchor="middle" font-family="Liberation Sans" font-weight="normal" textLength="8" lengthAdjust="spacingAndGlyphs" stroke="#ffffff" stroke-width="0.35">90</text><text x="581.6" y="652.9" font-size="8.5" fill="#ffffff" text-anchor="middle" font-family="Liberation Sans" font-weight="normal" textLength="8" lengthAdjust="spacingAndGlyphs" stroke="#ffffff" stroke-width="0.35">90</text><path d="M568.8 657.4L572.8 653.4" stroke="#ffffff" stroke-width="1.1"/><path d="M574.1 657.4L578.1 653.4" stroke="#ffffff" stroke-width="1.1"/><path d="M579.5 657.4L583.5 653.4" stroke="#ffffff" stroke-width="1.1"/><path d="M641.6 612.5H658.6" stroke="#00dcdc" stroke-width="1"/><path d="M641.6 626.5H658.6" stroke="#00dcdc" stroke-width="1"/><path d="M645.5 610.9V628.9" stroke="#00dcdc" stroke-width="1"/><path d="M656.5 610.9V628.9" stroke="#00dcdc" stroke-width="1"/><rect x="644.4" y="611.9" width="2" height="2" fill="#00e400"/><rect x="644.4" y="625.9" width="2" height="2" fill="#00e400"/><rect x="655.0" y="611.9" width="2" height="2" fill="#00e400"/><rect x="655.0" y="625.9" width="2" height="2" fill="#00e400"/><path d="M663.6 612.5H685.6" stroke="#00e400" stroke-width="1"/><path d="M663.6 626.5H685.6" stroke="#00e400" stroke-width="1"/><path d="M679.1 614.9L683.1 610.9" stroke="#ffffff" stroke-width="1.1"/><path d="M679.1 621.9L683.1 617.9" stroke="#ffffff" stroke-width="1.1"/><path d="M679.1 628.9L683.1 624.9" stroke="#ffffff" stroke-width="1.1"/><text x="674.6" y="616.4" font-size="8.5" fill="#ffffff" text-anchor="middle" font-family="Liberation Sans" font-weight="normal" transform="rotate(-90 674.6 613.4)" textLength="12" lengthAdjust="spacingAndGlyphs" stroke="#ffffff" stroke-width="0.35">100</text><text x="674.6" y="629.4" font-size="8.5" fill="#ffffff" text-anchor="middle" font-family="Liberation Sans" font-weight="normal" transform="rotate(-90 674.6 626.4)" textLength="12" lengthAdjust="spacingAndGlyphs" stroke="#ffffff" stroke-width="0.35">100</text><path d="M645.5 631.9V659.9" stroke="#00e400" stroke-width="1"/><path d="M656.5 631.9V659.9" stroke="#00e400" stroke-width="1"/><text x="646.1" y="652.9" font-size="8.5" fill="#ffffff" text-anchor="middle" font-family="Liberation Sans" font-weight="normal" textLength="8" lengthAdjust="spacingAndGlyphs" stroke="#ffffff" stroke-width="0.35">90</text><text x="656.1" y="652.9" font-size="8.5" fill="#ffffff" text-anchor="middle" font-family="Liberation Sans" font-weight="normal" textLength="8" lengthAdjust="spacingAndGlyphs" stroke="#ffffff" stroke-width="0.35">90</text><path d="M643.4 657.4L647.4 653.4" stroke="#ffffff" stroke-width="1.1"/><path d="M648.6 657.4L652.6 653.4" stroke="#ffffff" stroke-width="1.1"/><path d="M654.0 657.4L658.0 653.4" stroke="#ffffff" stroke-width="1.1"/><path d="M716.2 612.5H733.2" stroke="#00dcdc" stroke-width="1"/><path d="M716.2 626.5H733.2" stroke="#00dcdc" stroke-width="1"/><path d="M719.5 610.9V628.9" stroke="#00dcdc" stroke-width="1"/><path d="M730.5 610.9V628.9" stroke="#00dcdc" stroke-width="1"/><rect x="718.9" y="611.9" width="2" height="2" fill="#00e400"/><rect x="718.9" y="625.9" width="2" height="2" fill="#00e400"/><rect x="729.6" y="611.9" width="2" height="2" fill="#00e400"/><rect x="729.6" y="625.9" width="2" height="2" fill="#00e400"/><path d="M738.2 612.5H760.2" stroke="#00e400" stroke-width="1"/><path d="M738.2 626.5H760.2" stroke="#00e400" stroke-width="1"/><path d="M753.7 614.9L757.7 610.9" stroke="#ffffff" stroke-width="1.1"/><path d="M753.7 621.9L757.7 617.9" stroke="#ffffff" stroke-width="1.1"/><path d="M753.7 628.9L757.7 624.9" stroke="#ffffff" stroke-width="1.1"/><text x="749.2" y="616.4" font-size="8.5" fill="#ffffff" text-anchor="middle" font-family="Liberation Sans" font-weight="normal" transform="rotate(-90 749.2 613.4)" textLength="12" lengthAdjust="spacingAndGlyphs" stroke="#ffffff" stroke-width="0.35">100</text><text x="749.2" y="629.4" font-size="8.5" fill="#ffffff" text-anchor="middle" font-family="Liberation Sans" font-weight="normal" transform="rotate(-90 749.2 626.4)" textLength="12" lengthAdjust="spacingAndGlyphs" stroke="#ffffff" stroke-width="0.35">100</text><path d="M719.5 631.9V659.9" stroke="#00e400" stroke-width="1"/><path d="M730.5 631.9V659.9" stroke="#00e400" stroke-width="1"/><text x="720.7" y="652.9" font-size="8.5" fill="#ffffff" text-anchor="middle" font-family="Liberation Sans" font-weight="normal" textLength="8" lengthAdjust="spacingAndGlyphs" stroke="#ffffff" stroke-width="0.35">90</text><text x="730.7" y="652.9" font-size="8.5" fill="#ffffff" text-anchor="middle" font-family="Liberation Sans" font-weight="normal" textLength="8" lengthAdjust="spacingAndGlyphs" stroke="#ffffff" stroke-width="0.35">90</text><path d="M717.9 657.4L721.9 653.4" stroke="#ffffff" stroke-width="1.1"/><path d="M723.2 657.4L727.2 653.4" stroke="#ffffff" stroke-width="1.1"/><path d="M728.6 657.4L732.6 653.4" stroke="#ffffff" stroke-width="1.1"/><path d="M790.7 612.5H807.7" stroke="#00dcdc" stroke-width="1"/><path d="M790.7 626.5H807.7" stroke="#00dcdc" stroke-width="1"/><path d="M794.5 610.9V628.9" stroke="#00dcdc" stroke-width="1"/><path d="M805.5 610.9V628.9" stroke="#00dcdc" stroke-width="1"/><rect x="793.4" y="611.9" width="2" height="2" fill="#00e400"/><rect x="793.4" y="625.9" width="2" height="2" fill="#00e400"/><rect x="804.1" y="611.9" width="2" height="2" fill="#00e400"/><rect x="804.1" y="625.9" width="2" height="2" fill="#00e400"/><path d="M812.7 612.5H834.7" stroke="#00e400" stroke-width="1"/><path d="M812.7 626.5H834.7" stroke="#00e400" stroke-width="1"/><path d="M828.2 614.9L832.2 610.9" stroke="#ffffff" stroke-width="1.1"/><path d="M828.2 621.9L832.2 617.9" stroke="#ffffff" stroke-width="1.1"/><path d="M828.2 628.9L832.2 624.9" stroke="#ffffff" stroke-width="1.1"/><text x="823.7" y="616.4" font-size="8.5" fill="#ffffff" text-anchor="middle" font-family="Liberation Sans" font-weight="normal" transform="rotate(-90 823.7 613.4)" textLength="12" lengthAdjust="spacingAndGlyphs" stroke="#ffffff" stroke-width="0.35">100</text><text x="823.7" y="629.4" font-size="8.5" fill="#ffffff" text-anchor="middle" font-family="Liberation Sans" font-weight="normal" transform="rotate(-90 823.7 626.4)" textLength="12" lengthAdjust="spacingAndGlyphs" stroke="#ffffff" stroke-width="0.35">100</text><path d="M794.5 631.9V659.9" stroke="#00e400" stroke-width="1"/><path d="M805.5 631.9V659.9" stroke="#00e400" stroke-width="1"/><text x="795.2" y="652.9" font-size="8.5" fill="#ffffff" text-anchor="middle" font-family="Liberation Sans" font-weight="normal" textLength="8" lengthAdjust="spacingAndGlyphs" stroke="#ffffff" stroke-width="0.35">90</text><text x="805.2" y="652.9" font-size="8.5" fill="#ffffff" text-anchor="middle" font-family="Liberation Sans" font-weight="normal" textLength="8" lengthAdjust="spacingAndGlyphs" stroke="#ffffff" stroke-width="0.35">90</text><path d="M792.4 657.4L796.4 653.4" stroke="#ffffff" stroke-width="1.1"/><path d="M797.7 657.4L801.7 653.4" stroke="#ffffff" stroke-width="1.1"/><path d="M803.1 657.4L807.1 653.4" stroke="#ffffff" stroke-width="1.1"/><path d="M865.2 612.5H882.2" stroke="#00dcdc" stroke-width="1"/><path d="M865.2 626.5H882.2" stroke="#00dcdc" stroke-width="1"/><path d="M868.5 610.9V628.9" stroke="#00dcdc" stroke-width="1"/><path d="M879.5 610.9V628.9" stroke="#00dcdc" stroke-width="1"/><rect x="867.9" y="611.9" width="2" height="2" fill="#00e400"/><rect x="867.9" y="625.9" width="2" height="2" fill="#00e400"/><rect x="878.6" y="611.9" width="2" height="2" fill="#00e400"/><rect x="878.6" y="625.9" width="2" height="2" fill="#00e400"/><path d="M887.2 612.5H909.2" stroke="#00e400" stroke-width="1"/><path d="M887.2 626.5H909.2" stroke="#00e400" stroke-width="1"/><path d="M902.7 614.9L906.7 610.9" stroke="#ffffff" stroke-width="1.1"/><path d="M902.7 621.9L906.7 617.9" stroke="#ffffff" stroke-width="1.1"/><path d="M902.7 628.9L906.7 624.9" stroke="#ffffff" stroke-width="1.1"/><text x="898.2" y="616.4" font-size="8.5" fill="#ffffff" text-anchor="middle" font-family="Liberation Sans" font-weight="normal" transform="rotate(-90 898.2 613.4)" textLength="12" lengthAdjust="spacingAndGlyphs" stroke="#ffffff" stroke-width="0.35">100</text><text x="898.2" y="629.4" font-size="8.5" fill="#ffffff" text-anchor="middle" font-family="Liberation Sans" font-weight="normal" transform="rotate(-90 898.2 626.4)" textLength="12" lengthAdjust="spacingAndGlyphs" stroke="#ffffff" stroke-width="0.35">100</text><path d="M868.5 631.9V659.9" stroke="#00e400" stroke-width="1"/><path d="M879.5 631.9V659.9" stroke="#00e400" stroke-width="1"/><text x="869.7" y="652.9" font-size="8.5" fill="#ffffff" text-anchor="middle" font-family="Liberation Sans" font-weight="normal" textLength="8" lengthAdjust="spacingAndGlyphs" stroke="#ffffff" stroke-width="0.35">90</text><text x="879.7" y="652.9" font-size="8.5" fill="#ffffff" text-anchor="middle" font-family="Liberation Sans" font-weight="normal" textLength="8" lengthAdjust="spacingAndGlyphs" stroke="#ffffff" stroke-width="0.35">90</text><path d="M866.9 657.4L870.9 653.4" stroke="#ffffff" stroke-width="1.1"/><path d="M872.2 657.4L876.2 653.4" stroke="#ffffff" stroke-width="1.1"/><path d="M877.6 657.4L881.6 653.4" stroke="#ffffff" stroke-width="1.1"/><path d="M939.8 612.5H956.8" stroke="#00dcdc" stroke-width="1"/><path d="M939.8 626.5H956.8" stroke="#00dcdc" stroke-width="1"/><path d="M943.5 610.9V628.9" stroke="#00dcdc" stroke-width="1"/><path d="M954.5 610.9V628.9" stroke="#00dcdc" stroke-width="1"/><rect x="942.5" y="611.9" width="2" height="2" fill="#00e400"/><rect x="942.5" y="625.9" width="2" height="2" fill="#00e400"/><rect x="953.2" y="611.9" width="2" height="2" fill="#00e400"/><rect x="953.2" y="625.9" width="2" height="2" fill="#00e400"/><path d="M961.8 612.5H983.8" stroke="#00e400" stroke-width="1"/><path d="M961.8 626.5H983.8" stroke="#00e400" stroke-width="1"/><path d="M977.3 614.9L981.3 610.9" stroke="#ffffff" stroke-width="1.1"/><path d="M977.3 621.9L981.3 617.9" stroke="#ffffff" stroke-width="1.1"/><path d="M977.3 628.9L981.3 624.9" stroke="#ffffff" stroke-width="1.1"/><text x="972.8" y="616.4" font-size="8.5" fill="#ffffff" text-anchor="middle" font-family="Liberation Sans" font-weight="normal" transform="rotate(-90 972.8 613.4)" textLength="12" lengthAdjust="spacingAndGlyphs" stroke="#ffffff" stroke-width="0.35">100</text><text x="972.8" y="629.4" font-size="8.5" fill="#ffffff" text-anchor="middle" font-family="Liberation Sans" font-weight="normal" transform="rotate(-90 972.8 626.4)" textLength="12" lengthAdjust="spacingAndGlyphs" stroke="#ffffff" stroke-width="0.35">100</text><path d="M943.5 631.9V659.9" stroke="#00e400" stroke-width="1"/><path d="M954.5 631.9V659.9" stroke="#00e400" stroke-width="1"/><text x="944.3" y="652.9" font-size="8.5" fill="#ffffff" text-anchor="middle" font-family="Liberation Sans" font-weight="normal" textLength="8" lengthAdjust="spacingAndGlyphs" stroke="#ffffff" stroke-width="0.35">90</text><text x="954.3" y="652.9" font-size="8.5" fill="#ffffff" text-anchor="middle" font-family="Liberation Sans" font-weight="normal" textLength="8" lengthAdjust="spacingAndGlyphs" stroke="#ffffff" stroke-width="0.35">90</text><path d="M941.5 657.4L945.5 653.4" stroke="#ffffff" stroke-width="1.1"/><path d="M946.8 657.4L950.8 653.4" stroke="#ffffff" stroke-width="1.1"/><path d="M952.2 657.4L956.2 653.4" stroke="#ffffff" stroke-width="1.1"/><path d="M1014.3 612.5H1031.3" stroke="#00dcdc" stroke-width="1"/><path d="M1014.3 626.5H1031.3" stroke="#00dcdc" stroke-width="1"/><path d="M1018.5 610.9V628.9" stroke="#00dcdc" stroke-width="1"/><path d="M1028.5 610.9V628.9" stroke="#00dcdc" stroke-width="1"/><rect x="1017.0" y="611.9" width="2" height="2" fill="#00e400"/><rect x="1017.0" y="625.9" width="2" height="2" fill="#00e400"/><rect x="1027.7" y="611.9" width="2" height="2" fill="#00e400"/><rect x="1027.7" y="625.9" width="2" height="2" fill="#00e400"/><path d="M1036.3 612.5H1058.3" stroke="#00e400" stroke-width="1"/><path d="M1036.3 626.5H1058.3" stroke="#00e400" stroke-width="1"/><path d="M1051.8 614.9L1055.8 610.9" stroke="#ffffff" stroke-width="1.1"/><path d="M1051.8 621.9L1055.8 617.9" stroke="#ffffff" stroke-width="1.1"/><path d="M1051.8 628.9L1055.8 624.9" stroke="#ffffff" stroke-width="1.1"/><text x="1047.3" y="616.4" font-size="8.5" fill="#ffffff" text-anchor="middle" font-family="Liberation Sans" font-weight="normal" transform="rotate(-90 1047.3 613.4)" textLength="12" lengthAdjust="spacingAndGlyphs" stroke="#ffffff" stroke-width="0.35">100</text><text x="1047.3" y="629.4" font-size="8.5" fill="#ffffff" text-anchor="middle" font-family="Liberation Sans" font-weight="normal" transform="rotate(-90 1047.3 626.4)" textLength="12" lengthAdjust="spacingAndGlyphs" stroke="#ffffff" stroke-width="0.35">100</text><path d="M1018.5 631.9V659.9" stroke="#00e400" stroke-width="1"/><path d="M1028.5 631.9V659.9" stroke="#00e400" stroke-width="1"/><text x="1018.8" y="652.9" font-size="8.5" fill="#ffffff" text-anchor="middle" font-family="Liberation Sans" font-weight="normal" textLength="8" lengthAdjust="spacingAndGlyphs" stroke="#ffffff" stroke-width="0.35">90</text><text x="1028.8" y="652.9" font-size="8.5" fill="#ffffff" text-anchor="middle" font-family="Liberation Sans" font-weight="normal" textLength="8" lengthAdjust="spacingAndGlyphs" stroke="#ffffff" stroke-width="0.35">90</text><path d="M1016.0 657.4L1020.0 653.4" stroke="#ffffff" stroke-width="1.1"/><path d="M1021.3 657.4L1025.3 653.4" stroke="#ffffff" stroke-width="1.1"/><path d="M1026.7 657.4L1030.7 653.4" stroke="#ffffff" stroke-width="1.1"/><path d="M1088.8 612.5H1105.8" stroke="#00dcdc" stroke-width="1"/><path d="M1088.8 626.5H1105.8" stroke="#00dcdc" stroke-width="1"/><path d="M1092.5 610.9V628.9" stroke="#00dcdc" stroke-width="1"/><path d="M1103.5 610.9V628.9" stroke="#00dcdc" stroke-width="1"/><rect x="1091.5" y="611.9" width="2" height="2" fill="#00e400"/><rect x="1091.5" y="625.9" width="2" height="2" fill="#00e400"/><rect x="1102.2" y="611.9" width="2" height="2" fill="#00e400"/><rect x="1102.2" y="625.9" width="2" height="2" fill="#00e400"/><path d="M1110.8 612.5H1132.8" stroke="#00e400" stroke-width="1"/><path d="M1110.8 626.5H1132.8" stroke="#00e400" stroke-width="1"/><path d="M1126.3 614.9L1130.3 610.9" stroke="#ffffff" stroke-width="1.1"/><path d="M1126.3 621.9L1130.3 617.9" stroke="#ffffff" stroke-width="1.1"/><path d="M1126.3 628.9L1130.3 624.9" stroke="#ffffff" stroke-width="1.1"/><text x="1121.8" y="616.4" font-size="8.5" fill="#ffffff" text-anchor="middle" font-family="Liberation Sans" font-weight="normal" transform="rotate(-90 1121.8 613.4)" textLength="12" lengthAdjust="spacingAndGlyphs" stroke="#ffffff" stroke-width="0.35">100</text><text x="1121.8" y="629.4" font-size="8.5" fill="#ffffff" text-anchor="middle" font-family="Liberation Sans" font-weight="normal" transform="rotate(-90 1121.8 626.4)" textLength="12" lengthAdjust="spacingAndGlyphs" stroke="#ffffff" stroke-width="0.35">100</text><path d="M1092.5 631.9V659.9" stroke="#00e400" stroke-width="1"/><path d="M1103.5 631.9V659.9" stroke="#00e400" stroke-width="1"/><text x="1093.3" y="652.9" font-size="8.5" fill="#ffffff" text-anchor="middle" font-family="Liberation Sans" font-weight="normal" textLength="8" lengthAdjust="spacingAndGlyphs" stroke="#ffffff" stroke-width="0.35">90</text><text x="1103.3" y="652.9" font-size="8.5" fill="#ffffff" text-anchor="middle" font-family="Liberation Sans" font-weight="normal" textLength="8" lengthAdjust="spacingAndGlyphs" stroke="#ffffff" stroke-width="0.35">90</text><path d="M1090.5 657.4L1094.5 653.4" stroke="#ffffff" stroke-width="1.1"/><path d="M1095.8 657.4L1099.8 653.4" stroke="#ffffff" stroke-width="1.1"/><path d="M1101.2 657.4L1105.2 653.4" stroke="#ffffff" stroke-width="1.1"/><path d="M1163.4 612.5H1180.4" stroke="#00dcdc" stroke-width="1"/><path d="M1163.4 626.5H1180.4" stroke="#00dcdc" stroke-width="1"/><path d="M1167.5 610.9V628.9" stroke="#00dcdc" stroke-width="1"/><path d="M1177.5 610.9V628.9" stroke="#00dcdc" stroke-width="1"/><rect x="1166.1" y="611.9" width="2" height="2" fill="#00e400"/><rect x="1166.1" y="625.9" width="2" height="2" fill="#00e400"/><rect x="1176.8" y="611.9" width="2" height="2" fill="#00e400"/><rect x="1176.8" y="625.9" width="2" height="2" fill="#00e400"/><path d="M1185.4 612.5H1207.4" stroke="#00e400" stroke-width="1"/><path d="M1185.4 626.5H1207.4" stroke="#00e400" stroke-width="1"/><path d="M1200.9 614.9L1204.9 610.9" stroke="#ffffff" stroke-width="1.1"/><path d="M1200.9 621.9L1204.9 617.9" stroke="#ffffff" stroke-width="1.1"/><path d="M1200.9 628.9L1204.9 624.9" stroke="#ffffff" stroke-width="1.1"/><text x="1196.4" y="616.4" font-size="8.5" fill="#ffffff" text-anchor="middle" font-family="Liberation Sans" font-weight="normal" transform="rotate(-90 1196.4 613.4)" textLength="12" lengthAdjust="spacingAndGlyphs" stroke="#ffffff" stroke-width="0.35">100</text><text x="1196.4" y="629.4" font-size="8.5" fill="#ffffff" text-anchor="middle" font-family="Liberation Sans" font-weight="normal" transform="rotate(-90 1196.4 626.4)" textLength="12" lengthAdjust="spacingAndGlyphs" stroke="#ffffff" stroke-width="0.35">100</text><path d="M1167.5 631.9V659.9" stroke="#00e400" stroke-width="1"/><path d="M1177.5 631.9V659.9" stroke="#00e400" stroke-width="1"/><text x="1167.9" y="652.9" font-size="8.5" fill="#ffffff" text-anchor="middle" font-family="Liberation Sans" font-weight="normal" textLength="8" lengthAdjust="spacingAndGlyphs" stroke="#ffffff" stroke-width="0.35">90</text><text x="1177.9" y="652.9" font-size="8.5" fill="#ffffff" text-anchor="middle" font-family="Liberation Sans" font-weight="normal" textLength="8" lengthAdjust="spacingAndGlyphs" stroke="#ffffff" stroke-width="0.35">90</text><path d="M1165.1 657.4L1169.1 653.4" stroke="#ffffff" stroke-width="1.1"/><path d="M1170.4 657.4L1174.4 653.4" stroke="#ffffff" stroke-width="1.1"/><path d="M1175.8 657.4L1179.8 653.4" stroke="#ffffff" stroke-width="1.1"/><path d="M1237.9 612.5H1254.9" stroke="#00dcdc" stroke-width="1"/><path d="M1237.9 626.5H1254.9" stroke="#00dcdc" stroke-width="1"/><path d="M1241.5 610.9V628.9" stroke="#00dcdc" stroke-width="1"/><path d="M1252.5 610.9V628.9" stroke="#00dcdc" stroke-width="1"/><rect x="1240.6" y="611.9" width="2" height="2" fill="#00e400"/><rect x="1240.6" y="625.9" width="2" height="2" fill="#00e400"/><rect x="1251.3" y="611.9" width="2" height="2" fill="#00e400"/><rect x="1251.3" y="625.9" width="2" height="2" fill="#00e400"/><path d="M1259.9 612.5H1281.9" stroke="#00e400" stroke-width="1"/><path d="M1259.9 626.5H1281.9" stroke="#00e400" stroke-width="1"/><path d="M1275.4 614.9L1279.4 610.9" stroke="#ffffff" stroke-width="1.1"/><path d="M1275.4 621.9L1279.4 617.9" stroke="#ffffff" stroke-width="1.1"/><path d="M1275.4 628.9L1279.4 624.9" stroke="#ffffff" stroke-width="1.1"/><text x="1270.9" y="616.4" font-size="8.5" fill="#ffffff" text-anchor="middle" font-family="Liberation Sans" font-weight="normal" transform="rotate(-90 1270.9 613.4)" textLength="12" lengthAdjust="spacingAndGlyphs" stroke="#ffffff" stroke-width="0.35">100</text><text x="1270.9" y="629.4" font-size="8.5" fill="#ffffff" text-anchor="middle" font-family="Liberation Sans" font-weight="normal" transform="rotate(-90 1270.9 626.4)" textLength="12" lengthAdjust="spacingAndGlyphs" stroke="#ffffff" stroke-width="0.35">100</text><path d="M1241.5 631.9V659.9" stroke="#00e400" stroke-width="1"/><path d="M1252.5 631.9V659.9" stroke="#00e400" stroke-width="1"/><text x="1242.4" y="652.9" font-size="8.5" fill="#ffffff" text-anchor="middle" font-family="Liberation Sans" font-weight="normal" textLength="8" lengthAdjust="spacingAndGlyphs" stroke="#ffffff" stroke-width="0.35">90</text><text x="1252.4" y="652.9" font-size="8.5" fill="#ffffff" text-anchor="middle" font-family="Liberation Sans" font-weight="normal" textLength="8" lengthAdjust="spacingAndGlyphs" stroke="#ffffff" stroke-width="0.35">90</text><path d="M1239.6 657.4L1243.6 653.4" stroke="#ffffff" stroke-width="1.1"/><path d="M1244.9 657.4L1248.9 653.4" stroke="#ffffff" stroke-width="1.1"/><path d="M1250.3 657.4L1254.3 653.4" stroke="#ffffff" stroke-width="1.1"/><path d="M1301.8 612.5H1318.8" stroke="#00dcdc" stroke-width="1"/><path d="M1301.8 626.5H1318.8" stroke="#00dcdc" stroke-width="1"/><path d="M1305.5 610.9V628.9" stroke="#00dcdc" stroke-width="1"/><path d="M1316.5 610.9V628.9" stroke="#00dcdc" stroke-width="1"/><rect x="1304.5" y="611.9" width="2" height="2" fill="#00e400"/><rect x="1304.5" y="625.9" width="2" height="2" fill="#00e400"/><rect x="1315.2" y="611.9" width="2" height="2" fill="#00e400"/><rect x="1315.2" y="625.9" width="2" height="2" fill="#00e400"/><path d="M1323.8 612.5H1345.8" stroke="#00e400" stroke-width="1"/><path d="M1323.8 626.5H1345.8" stroke="#00e400" stroke-width="1"/><path d="M1339.3 614.9L1343.3 610.9" stroke="#ffffff" stroke-width="1.1"/><path d="M1339.3 621.9L1343.3 617.9" stroke="#ffffff" stroke-width="1.1"/><path d="M1339.3 628.9L1343.3 624.9" stroke="#ffffff" stroke-width="1.1"/><text x="1334.8" y="616.4" font-size="8.5" fill="#ffffff" text-anchor="middle" font-family="Liberation Sans" font-weight="normal" transform="rotate(-90 1334.8 613.4)" textLength="12" lengthAdjust="spacingAndGlyphs" stroke="#ffffff" stroke-width="0.35">100</text><text x="1334.8" y="629.4" font-size="8.5" fill="#ffffff" text-anchor="middle" font-family="Liberation Sans" font-weight="normal" transform="rotate(-90 1334.8 626.4)" textLength="12" lengthAdjust="spacingAndGlyphs" stroke="#ffffff" stroke-width="0.35">100</text><path d="M1305.5 631.9V659.9" stroke="#00e400" stroke-width="1"/><path d="M1316.5 631.9V659.9" stroke="#00e400" stroke-width="1"/><text x="1306.3" y="652.9" font-size="8.5" fill="#ffffff" text-anchor="middle" font-family="Liberation Sans" font-weight="normal" textLength="8" lengthAdjust="spacingAndGlyphs" stroke="#ffffff" stroke-width="0.35">90</text><text x="1316.3" y="652.9" font-size="8.5" fill="#ffffff" text-anchor="middle" font-family="Liberation Sans" font-weight="normal" textLength="8" lengthAdjust="spacingAndGlyphs" stroke="#ffffff" stroke-width="0.35">90</text><path d="M1303.5 657.4L1307.5 653.4" stroke="#ffffff" stroke-width="1.1"/><path d="M1308.8 657.4L1312.8 653.4" stroke="#ffffff" stroke-width="1.1"/><path d="M1314.2 657.4L1318.2 653.4" stroke="#ffffff" stroke-width="1.1"/><path d="M1376.3 612.5H1393.3" stroke="#00dcdc" stroke-width="1"/><path d="M1376.3 626.5H1393.3" stroke="#00dcdc" stroke-width="1"/><path d="M1380.5 610.9V628.9" stroke="#00dcdc" stroke-width="1"/><path d="M1390.5 610.9V628.9" stroke="#00dcdc" stroke-width="1"/><rect x="1379.0" y="611.9" width="2" height="2" fill="#00e400"/><rect x="1379.0" y="625.9" width="2" height="2" fill="#00e400"/><rect x="1389.7" y="611.9" width="2" height="2" fill="#00e400"/><rect x="1389.7" y="625.9" width="2" height="2" fill="#00e400"/><path d="M1398.3 612.5H1420.3" stroke="#00e400" stroke-width="1"/><path d="M1398.3 626.5H1420.3" stroke="#00e400" stroke-width="1"/><path d="M1413.8 614.9L1417.8 610.9" stroke="#ffffff" stroke-width="1.1"/><path d="M1413.8 621.9L1417.8 617.9" stroke="#ffffff" stroke-width="1.1"/><path d="M1413.8 628.9L1417.8 624.9" stroke="#ffffff" stroke-width="1.1"/><text x="1409.3" y="616.4" font-size="8.5" fill="#ffffff" text-anchor="middle" font-family="Liberation Sans" font-weight="normal" transform="rotate(-90 1409.3 613.4)" textLength="12" lengthAdjust="spacingAndGlyphs" stroke="#ffffff" stroke-width="0.35">100</text><text x="1409.3" y="629.4" font-size="8.5" fill="#ffffff" text-anchor="middle" font-family="Liberation Sans" font-weight="normal" transform="rotate(-90 1409.3 626.4)" textLength="12" lengthAdjust="spacingAndGlyphs" stroke="#ffffff" stroke-width="0.35">100</text><path d="M1380.5 631.9V659.9" stroke="#00e400" stroke-width="1"/><path d="M1390.5 631.9V659.9" stroke="#00e400" stroke-width="1"/><text x="1380.8" y="652.9" font-size="8.5" fill="#ffffff" text-anchor="middle" font-family="Liberation Sans" font-weight="normal" textLength="8" lengthAdjust="spacingAndGlyphs" stroke="#ffffff" stroke-width="0.35">90</text><text x="1390.8" y="652.9" font-size="8.5" fill="#ffffff" text-anchor="middle" font-family="Liberation Sans" font-weight="normal" textLength="8" lengthAdjust="spacingAndGlyphs" stroke="#ffffff" stroke-width="0.35">90</text><path d="M1378.0 657.4L1382.0 653.4" stroke="#ffffff" stroke-width="1.1"/><path d="M1383.3 657.4L1387.3 653.4" stroke="#ffffff" stroke-width="1.1"/><path d="M1388.7 657.4L1392.7 653.4" stroke="#ffffff" stroke-width="1.1"/><path d="M269.0 714.5H286.0" stroke="#00dcdc" stroke-width="1"/><path d="M269.0 733.5H286.0" stroke="#00dcdc" stroke-width="1"/><path d="M272.5 712.0V735.5" stroke="#00dcdc" stroke-width="1"/><path d="M283.5 712.0V735.5" stroke="#00dcdc" stroke-width="1"/><rect x="271.7" y="713.0" width="2" height="2" fill="#00e400"/><rect x="271.7" y="732.5" width="2" height="2" fill="#00e400"/><rect x="282.4" y="713.0" width="2" height="2" fill="#00e400"/><rect x="282.4" y="732.5" width="2" height="2" fill="#00e400"/><path d="M291.0 714.5H313.0" stroke="#00e400" stroke-width="1"/><path d="M291.0 733.5H313.0" stroke="#00e400" stroke-width="1"/><path d="M306.5 716.0L310.5 712.0" stroke="#ffffff" stroke-width="1.1"/><path d="M306.5 723.0L310.5 719.0" stroke="#ffffff" stroke-width="1.1"/><path d="M306.5 735.5L310.5 731.5" stroke="#ffffff" stroke-width="1.1"/><text x="302.0" y="717.6" font-size="8.5" fill="#ffffff" text-anchor="middle" font-family="Liberation Sans" font-weight="normal" transform="rotate(-90 302.0 714.5)" textLength="12" lengthAdjust="spacingAndGlyphs" stroke="#ffffff" stroke-width="0.35">100</text><text x="302.0" y="736.1" font-size="8.5" fill="#ffffff" text-anchor="middle" font-family="Liberation Sans" font-weight="normal" transform="rotate(-90 302.0 733.0)" textLength="12" lengthAdjust="spacingAndGlyphs" stroke="#ffffff" stroke-width="0.35">200</text><path d="M272.5 738.5V766.5" stroke="#00e400" stroke-width="1"/><path d="M283.5 738.5V766.5" stroke="#00e400" stroke-width="1"/><text x="273.5" y="744.1" font-size="8.5" fill="#ffffff" text-anchor="middle" font-family="Liberation Sans" font-weight="normal" textLength="8" lengthAdjust="spacingAndGlyphs" stroke="#ffffff" stroke-width="0.35">90</text><text x="283.5" y="744.1" font-size="8.5" fill="#ffffff" text-anchor="middle" font-family="Liberation Sans" font-weight="normal" textLength="8" lengthAdjust="spacingAndGlyphs" stroke="#ffffff" stroke-width="0.35">90</text><path d="M270.7 748.5L274.7 744.5" stroke="#ffffff" stroke-width="1.1"/><path d="M276.0 748.5L280.0 744.5" stroke="#ffffff" stroke-width="1.1"/><path d="M281.4 748.5L285.4 744.5" stroke="#ffffff" stroke-width="1.1"/><path d="M343.5 714.5H360.5" stroke="#00dcdc" stroke-width="1"/><path d="M343.5 733.5H360.5" stroke="#00dcdc" stroke-width="1"/><path d="M347.5 712.0V735.5" stroke="#00dcdc" stroke-width="1"/><path d="M357.5 712.0V735.5" stroke="#00dcdc" stroke-width="1"/><rect x="346.2" y="713.0" width="2" height="2" fill="#00e400"/><rect x="346.2" y="732.5" width="2" height="2" fill="#00e400"/><rect x="356.9" y="713.0" width="2" height="2" fill="#00e400"/><rect x="356.9" y="732.5" width="2" height="2" fill="#00e400"/><path d="M365.5 714.5H387.5" stroke="#00e400" stroke-width="1"/><path d="M365.5 733.5H387.5" stroke="#00e400" stroke-width="1"/><path d="M381.0 716.0L385.0 712.0" stroke="#ffffff" stroke-width="1.1"/><path d="M381.0 723.0L385.0 719.0" stroke="#ffffff" stroke-width="1.1"/><path d="M381.0 735.5L385.0 731.5" stroke="#ffffff" stroke-width="1.1"/><text x="376.5" y="717.6" font-size="8.5" fill="#ffffff" text-anchor="middle" font-family="Liberation Sans" font-weight="normal" transform="rotate(-90 376.5 714.5)" textLength="12" lengthAdjust="spacingAndGlyphs" stroke="#ffffff" stroke-width="0.35">100</text><text x="376.5" y="736.1" font-size="8.5" fill="#ffffff" text-anchor="middle" font-family="Liberation Sans" font-weight="normal" transform="rotate(-90 376.5 733.0)" textLength="12" lengthAdjust="spacingAndGlyphs" stroke="#ffffff" stroke-width="0.35">200</text><path d="M347.5 738.5V766.5" stroke="#00e400" stroke-width="1"/><path d="M357.5 738.5V766.5" stroke="#00e400" stroke-width="1"/><text x="348.0" y="744.1" font-size="8.5" fill="#ffffff" text-anchor="middle" font-family="Liberation Sans" font-weight="normal" textLength="8" lengthAdjust="spacingAndGlyphs" stroke="#ffffff" stroke-width="0.35">90</text><text x="358.0" y="744.1" font-size="8.5" fill="#ffffff" text-anchor="middle" font-family="Liberation Sans" font-weight="normal" textLength="8" lengthAdjust="spacingAndGlyphs" stroke="#ffffff" stroke-width="0.35">90</text><path d="M345.2 748.5L349.2 744.5" stroke="#ffffff" stroke-width="1.1"/><path d="M350.5 748.5L354.5 744.5" stroke="#ffffff" stroke-width="1.1"/><path d="M355.9 748.5L359.9 744.5" stroke="#ffffff" stroke-width="1.1"/><path d="M418.1 714.5H435.1" stroke="#00dcdc" stroke-width="1"/><path d="M418.1 733.5H435.1" stroke="#00dcdc" stroke-width="1"/><path d="M421.5 712.0V735.5" stroke="#00dcdc" stroke-width="1"/><path d="M432.5 712.0V735.5" stroke="#00dcdc" stroke-width="1"/><rect x="420.8" y="713.0" width="2" height="2" fill="#00e400"/><rect x="420.8" y="732.5" width="2" height="2" fill="#00e400"/><rect x="431.5" y="713.0" width="2" height="2" fill="#00e400"/><rect x="431.5" y="732.5" width="2" height="2" fill="#00e400"/><path d="M440.1 714.5H462.1" stroke="#00e400" stroke-width="1"/><path d="M440.1 733.5H462.1" stroke="#00e400" stroke-width="1"/><path d="M455.6 716.0L459.6 712.0" stroke="#ffffff" stroke-width="1.1"/><path d="M455.6 723.0L459.6 719.0" stroke="#ffffff" stroke-width="1.1"/><path d="M455.6 735.5L459.6 731.5" stroke="#ffffff" stroke-width="1.1"/><text x="451.1" y="717.6" font-size="8.5" fill="#ffffff" text-anchor="middle" font-family="Liberation Sans" font-weight="normal" transform="rotate(-90 451.1 714.5)" textLength="12" lengthAdjust="spacingAndGlyphs" stroke="#ffffff" stroke-width="0.35">100</text><text x="451.1" y="736.1" font-size="8.5" fill="#ffffff" text-anchor="middle" font-family="Liberation Sans" font-weight="normal" transform="rotate(-90 451.1 733.0)" textLength="12" lengthAdjust="spacingAndGlyphs" stroke="#ffffff" stroke-width="0.35">200</text><path d="M421.5 738.5V766.5" stroke="#00e400" stroke-width="1"/><path d="M432.5 738.5V766.5" stroke="#00e400" stroke-width="1"/><text x="422.6" y="754.1" font-size="8.5" fill="#ffffff" text-anchor="middle" font-family="Liberation Sans" font-weight="normal" textLength="8" lengthAdjust="spacingAndGlyphs" stroke="#ffffff" stroke-width="0.35">90</text><text x="432.6" y="754.1" font-size="8.5" fill="#ffffff" text-anchor="middle" font-family="Liberation Sans" font-weight="normal" textLength="8" lengthAdjust="spacingAndGlyphs" stroke="#ffffff" stroke-width="0.35">90</text><path d="M419.8 758.5L423.8 754.5" stroke="#ffffff" stroke-width="1.1"/><path d="M425.1 758.5L429.1 754.5" stroke="#ffffff" stroke-width="1.1"/><path d="M430.5 758.5L434.5 754.5" stroke="#ffffff" stroke-width="1.1"/><path d="M492.6 714.5H509.6" stroke="#00dcdc" stroke-width="1"/><path d="M492.6 733.5H509.6" stroke="#00dcdc" stroke-width="1"/><path d="M496.5 712.0V735.5" stroke="#00dcdc" stroke-width="1"/><path d="M506.5 712.0V735.5" stroke="#00dcdc" stroke-width="1"/><rect x="495.3" y="713.0" width="2" height="2" fill="#00e400"/><rect x="495.3" y="732.5" width="2" height="2" fill="#00e400"/><rect x="506.0" y="713.0" width="2" height="2" fill="#00e400"/><rect x="506.0" y="732.5" width="2" height="2" fill="#00e400"/><path d="M514.6 714.5H536.6" stroke="#00e400" stroke-width="1"/><path d="M514.6 733.5H536.6" stroke="#00e400" stroke-width="1"/><path d="M530.1 716.0L534.1 712.0" stroke="#ffffff" stroke-width="1.1"/><path d="M530.1 723.0L534.1 719.0" stroke="#ffffff" stroke-width="1.1"/><path d="M530.1 735.5L534.1 731.5" stroke="#ffffff" stroke-width="1.1"/><text x="525.6" y="717.6" font-size="8.5" fill="#ffffff" text-anchor="middle" font-family="Liberation Sans" font-weight="normal" transform="rotate(-90 525.6 714.5)" textLength="12" lengthAdjust="spacingAndGlyphs" stroke="#ffffff" stroke-width="0.35">100</text><text x="525.6" y="736.1" font-size="8.5" fill="#ffffff" text-anchor="middle" font-family="Liberation Sans" font-weight="normal" transform="rotate(-90 525.6 733.0)" textLength="12" lengthAdjust="spacingAndGlyphs" stroke="#ffffff" stroke-width="0.35">200</text><path d="M496.5 738.5V766.5" stroke="#00e400" stroke-width="1"/><path d="M506.5 738.5V766.5" stroke="#00e400" stroke-width="1"/><text x="497.1" y="754.1" font-size="8.5" fill="#ffffff" text-anchor="middle" font-family="Liberation Sans" font-weight="normal" textLength="8" lengthAdjust="spacingAndGlyphs" stroke="#ffffff" stroke-width="0.35">90</text><text x="507.1" y="754.1" font-size="8.5" fill="#ffffff" text-anchor="middle" font-family="Liberation Sans" font-weight="normal" textLength="8" lengthAdjust="spacingAndGlyphs" stroke="#ffffff" stroke-width="0.35">90</text><path d="M494.3 758.5L498.3 754.5" stroke="#ffffff" stroke-width="1.1"/><path d="M499.6 758.5L503.6 754.5" stroke="#ffffff" stroke-width="1.1"/><path d="M505.0 758.5L509.0 754.5" stroke="#ffffff" stroke-width="1.1"/><path d="M567.1 714.5H584.1" stroke="#00dcdc" stroke-width="1"/><path d="M567.1 733.5H584.1" stroke="#00dcdc" stroke-width="1"/><path d="M570.5 712.0V735.5" stroke="#00dcdc" stroke-width="1"/><path d="M581.5 712.0V735.5" stroke="#00dcdc" stroke-width="1"/><rect x="569.8" y="713.0" width="2" height="2" fill="#00e400"/><rect x="569.8" y="732.5" width="2" height="2" fill="#00e400"/><rect x="580.5" y="713.0" width="2" height="2" fill="#00e400"/><rect x="580.5" y="732.5" width="2" height="2" fill="#00e400"/><path d="M589.1 714.5H611.1" stroke="#00e400" stroke-width="1"/><path d="M589.1 733.5H611.1" stroke="#00e400" stroke-width="1"/><path d="M604.6 716.0L608.6 712.0" stroke="#ffffff" stroke-width="1.1"/><path d="M604.6 723.0L608.6 719.0" stroke="#ffffff" stroke-width="1.1"/><path d="M604.6 735.5L608.6 731.5" stroke="#ffffff" stroke-width="1.1"/><text x="600.1" y="717.6" font-size="8.5" fill="#ffffff" text-anchor="middle" font-family="Liberation Sans" font-weight="normal" transform="rotate(-90 600.1 714.5)" textLength="12" lengthAdjust="spacingAndGlyphs" stroke="#ffffff" stroke-width="0.35">100</text><text x="600.1" y="736.1" font-size="8.5" fill="#ffffff" text-anchor="middle" font-family="Liberation Sans" font-weight="normal" transform="rotate(-90 600.1 733.0)" textLength="12" lengthAdjust="spacingAndGlyphs" stroke="#ffffff" stroke-width="0.35">200</text><path d="M570.5 738.5V766.5" stroke="#00e400" stroke-width="1"/><path d="M581.5 738.5V766.5" stroke="#00e400" stroke-width="1"/><text x="571.6" y="754.1" font-size="8.5" fill="#ffffff" text-anchor="middle" font-family="Liberation Sans" font-weight="normal" textLength="8" lengthAdjust="spacingAndGlyphs" stroke="#ffffff" stroke-width="0.35">90</text><text x="581.6" y="754.1" font-size="8.5" fill="#ffffff" text-anchor="middle" font-family="Liberation Sans" font-weight="normal" textLength="8" lengthAdjust="spacingAndGlyphs" stroke="#ffffff" stroke-width="0.35">90</text><path d="M568.8 758.5L572.8 754.5" stroke="#ffffff" stroke-width="1.1"/><path d="M574.1 758.5L578.1 754.5" stroke="#ffffff" stroke-width="1.1"/><path d="M579.5 758.5L583.5 754.5" stroke="#ffffff" stroke-width="1.1"/><path d="M641.6 714.5H658.6" stroke="#00dcdc" stroke-width="1"/><path d="M641.6 733.5H658.6" stroke="#00dcdc" stroke-width="1"/><path d="M645.5 712.0V735.5" stroke="#00dcdc" stroke-width="1"/><path d="M656.5 712.0V735.5" stroke="#00dcdc" stroke-width="1"/><rect x="644.4" y="713.0" width="2" height="2" fill="#00e400"/><rect x="644.4" y="732.5" width="2" height="2" fill="#00e400"/><rect x="655.0" y="713.0" width="2" height="2" fill="#00e400"/><rect x="655.0" y="732.5" width="2" height="2" fill="#00e400"/><path d="M663.6 714.5H685.6" stroke="#00e400" stroke-width="1"/><path d="M663.6 733.5H685.6" stroke="#00e400" stroke-width="1"/><path d="M679.1 716.0L683.1 712.0" stroke="#ffffff" stroke-width="1.1"/><path d="M679.1 723.0L683.1 719.0" stroke="#ffffff" stroke-width="1.1"/><path d="M679.1 735.5L683.1 731.5" stroke="#ffffff" stroke-width="1.1"/><text x="674.6" y="717.6" font-size="8.5" fill="#ffffff" text-anchor="middle" font-family="Liberation Sans" font-weight="normal" transform="rotate(-90 674.6 714.5)" textLength="12" lengthAdjust="spacingAndGlyphs" stroke="#ffffff" stroke-width="0.35">100</text><text x="674.6" y="736.1" font-size="8.5" fill="#ffffff" text-anchor="middle" font-family="Liberation Sans" font-weight="normal" transform="rotate(-90 674.6 733.0)" textLength="12" lengthAdjust="spacingAndGlyphs" stroke="#ffffff" stroke-width="0.35">200</text><path d="M645.5 738.5V766.5" stroke="#00e400" stroke-width="1"/><path d="M656.5 738.5V766.5" stroke="#00e400" stroke-width="1"/><text x="646.1" y="754.1" font-size="8.5" fill="#ffffff" text-anchor="middle" font-family="Liberation Sans" font-weight="normal" textLength="8" lengthAdjust="spacingAndGlyphs" stroke="#ffffff" stroke-width="0.35">90</text><text x="656.1" y="754.1" font-size="8.5" fill="#ffffff" text-anchor="middle" font-family="Liberation Sans" font-weight="normal" textLength="8" lengthAdjust="spacingAndGlyphs" stroke="#ffffff" stroke-width="0.35">90</text><path d="M643.4 758.5L647.4 754.5" stroke="#ffffff" stroke-width="1.1"/><path d="M648.6 758.5L652.6 754.5" stroke="#ffffff" stroke-width="1.1"/><path d="M654.0 758.5L658.0 754.5" stroke="#ffffff" stroke-width="1.1"/><path d="M716.2 714.5H733.2" stroke="#00dcdc" stroke-width="1"/><path d="M716.2 733.5H733.2" stroke="#00dcdc" stroke-width="1"/><path d="M719.5 712.0V735.5" stroke="#00dcdc" stroke-width="1"/><path d="M730.5 712.0V735.5" stroke="#00dcdc" stroke-width="1"/><rect x="718.9" y="713.0" width="2" height="2" fill="#00e400"/><rect x="718.9" y="732.5" width="2" height="2" fill="#00e400"/><rect x="729.6" y="713.0" width="2" height="2" fill="#00e400"/><rect x="729.6" y="732.5" width="2" height="2" fill="#00e400"/><path d="M738.2 714.5H760.2" stroke="#00e400" stroke-width="1"/><path d="M738.2 733.5H760.2" stroke="#00e400" stroke-width="1"/><path d="M753.7 716.0L757.7 712.0" stroke="#ffffff" stroke-width="1.1"/><path d="M753.7 723.0L757.7 719.0" stroke="#ffffff" stroke-width="1.1"/><path d="M753.7 735.5L757.7 731.5" stroke="#ffffff" stroke-width="1.1"/><text x="749.2" y="717.6" font-size="8.5" fill="#ffffff" text-anchor="middle" font-family="Liberation Sans" font-weight="normal" transform="rotate(-90 749.2 714.5)" textLength="12" lengthAdjust="spacingAndGlyphs" stroke="#ffffff" stroke-width="0.35">100</text><text x="749.2" y="736.1" font-size="8.5" fill="#ffffff" text-anchor="middle" font-family="Liberation Sans" font-weight="normal" transform="rotate(-90 749.2 733.0)" textLength="12" lengthAdjust="spacingAndGlyphs" stroke="#ffffff" stroke-width="0.35">200</text><path d="M719.5 738.5V766.5" stroke="#00e400" stroke-width="1"/><path d="M730.5 738.5V766.5" stroke="#00e400" stroke-width="1"/><text x="720.7" y="754.1" font-size="8.5" fill="#ffffff" text-anchor="middle" font-family="Liberation Sans" font-weight="normal" textLength="8" lengthAdjust="spacingAndGlyphs" stroke="#ffffff" stroke-width="0.35">90</text><text x="730.7" y="754.1" font-size="8.5" fill="#ffffff" text-anchor="middle" font-family="Liberation Sans" font-weight="normal" textLength="8" lengthAdjust="spacingAndGlyphs" stroke="#ffffff" stroke-width="0.35">90</text><path d="M717.9 758.5L721.9 754.5" stroke="#ffffff" stroke-width="1.1"/><path d="M723.2 758.5L727.2 754.5" stroke="#ffffff" stroke-width="1.1"/><path d="M728.6 758.5L732.6 754.5" stroke="#ffffff" stroke-width="1.1"/><path d="M790.7 714.5H807.7" stroke="#00dcdc" stroke-width="1"/><path d="M790.7 733.5H807.7" stroke="#00dcdc" stroke-width="1"/><path d="M794.5 712.0V735.5" stroke="#00dcdc" stroke-width="1"/><path d="M805.5 712.0V735.5" stroke="#00dcdc" stroke-width="1"/><rect x="793.4" y="713.0" width="2" height="2" fill="#00e400"/><rect x="793.4" y="732.5" width="2" height="2" fill="#00e400"/><rect x="804.1" y="713.0" width="2" height="2" fill="#00e400"/><rect x="804.1" y="732.5" width="2" height="2" fill="#00e400"/><path d="M812.7 714.5H834.7" stroke="#00e400" stroke-width="1"/><path d="M812.7 733.5H834.7" stroke="#00e400" stroke-width="1"/><path d="M828.2 716.0L832.2 712.0" stroke="#ffffff" stroke-width="1.1"/><path d="M828.2 723.0L832.2 719.0" stroke="#ffffff" stroke-width="1.1"/><path d="M828.2 735.5L832.2 731.5" stroke="#ffffff" stroke-width="1.1"/><text x="823.7" y="717.6" font-size="8.5" fill="#ffffff" text-anchor="middle" font-family="Liberation Sans" font-weight="normal" transform="rotate(-90 823.7 714.5)" textLength="12" lengthAdjust="spacingAndGlyphs" stroke="#ffffff" stroke-width="0.35">100</text><text x="823.7" y="736.1" font-size="8.5" fill="#ffffff" text-anchor="middle" font-family="Liberation Sans" font-weight="normal" transform="rotate(-90 823.7 733.0)" textLength="12" lengthAdjust="spacingAndGlyphs" stroke="#ffffff" stroke-width="0.35">200</text><path d="M794.5 738.5V766.5" stroke="#00e400" stroke-width="1"/><path d="M805.5 738.5V766.5" stroke="#00e400" stroke-width="1"/><text x="795.2" y="754.1" font-size="8.5" fill="#ffffff" text-anchor="middle" font-family="Liberation Sans" font-weight="normal" textLength="8" lengthAdjust="spacingAndGlyphs" stroke="#ffffff" stroke-width="0.35">90</text><text x="805.2" y="754.1" font-size="8.5" fill="#ffffff" text-anchor="middle" font-family="Liberation Sans" font-weight="normal" textLength="8" lengthAdjust="spacingAndGlyphs" stroke="#ffffff" stroke-width="0.35">90</text><path d="M792.4 758.5L796.4 754.5" stroke="#ffffff" stroke-width="1.1"/><path d="M797.7 758.5L801.7 754.5" stroke="#ffffff" stroke-width="1.1"/><path d="M803.1 758.5L807.1 754.5" stroke="#ffffff" stroke-width="1.1"/><path d="M865.2 714.5H882.2" stroke="#00dcdc" stroke-width="1"/><path d="M865.2 728.5H882.2" stroke="#00dcdc" stroke-width="1"/><path d="M868.5 712.0V730.0" stroke="#00dcdc" stroke-width="1"/><path d="M879.5 712.0V730.0" stroke="#00dcdc" stroke-width="1"/><rect x="867.9" y="713.0" width="2" height="2" fill="#00e400"/><rect x="867.9" y="727.0" width="2" height="2" fill="#00e400"/><rect x="878.6" y="713.0" width="2" height="2" fill="#00e400"/><rect x="878.6" y="727.0" width="2" height="2" fill="#00e400"/><path d="M887.2 714.5H909.2" stroke="#00e400" stroke-width="1"/><path d="M887.2 728.5H909.2" stroke="#00e400" stroke-width="1"/><path d="M902.7 716.0L906.7 712.0" stroke="#ffffff" stroke-width="1.1"/><path d="M902.7 723.0L906.7 719.0" stroke="#ffffff" stroke-width="1.1"/><path d="M902.7 730.0L906.7 726.0" stroke="#ffffff" stroke-width="1.1"/><text x="898.2" y="717.6" font-size="8.5" fill="#ffffff" text-anchor="middle" font-family="Liberation Sans" font-weight="normal" transform="rotate(-90 898.2 714.5)" textLength="12" lengthAdjust="spacingAndGlyphs" stroke="#ffffff" stroke-width="0.35">100</text><text x="898.2" y="730.6" font-size="8.5" fill="#ffffff" text-anchor="middle" font-family="Liberation Sans" font-weight="normal" transform="rotate(-90 898.2 727.5)" textLength="12" lengthAdjust="spacingAndGlyphs" stroke="#ffffff" stroke-width="0.35">100</text><path d="M868.5 733.0V761.0" stroke="#00e400" stroke-width="1"/><path d="M879.5 733.0V761.0" stroke="#00e400" stroke-width="1"/><text x="869.7" y="754.1" font-size="8.5" fill="#ffffff" text-anchor="middle" font-family="Liberation Sans" font-weight="normal" textLength="8" lengthAdjust="spacingAndGlyphs" stroke="#ffffff" stroke-width="0.35">90</text><text x="879.7" y="754.1" font-size="8.5" fill="#ffffff" text-anchor="middle" font-family="Liberation Sans" font-weight="normal" textLength="8" lengthAdjust="spacingAndGlyphs" stroke="#ffffff" stroke-width="0.35">90</text><path d="M866.9 758.5L870.9 754.5" stroke="#ffffff" stroke-width="1.1"/><path d="M872.2 758.5L876.2 754.5" stroke="#ffffff" stroke-width="1.1"/><path d="M877.6 758.5L881.6 754.5" stroke="#ffffff" stroke-width="1.1"/><path d="M939.8 714.5H956.8" stroke="#00dcdc" stroke-width="1"/><path d="M939.8 728.5H956.8" stroke="#00dcdc" stroke-width="1"/><path d="M943.5 712.0V730.0" stroke="#00dcdc" stroke-width="1"/><path d="M954.5 712.0V730.0" stroke="#00dcdc" stroke-width="1"/><rect x="942.5" y="713.0" width="2" height="2" fill="#00e400"/><rect x="942.5" y="727.0" width="2" height="2" fill="#00e400"/><rect x="953.2" y="713.0" width="2" height="2" fill="#00e400"/><rect x="953.2" y="727.0" width="2" height="2" fill="#00e400"/><path d="M961.8 714.5H983.8" stroke="#00e400" stroke-width="1"/><path d="M961.8 728.5H983.8" stroke="#00e400" stroke-width="1"/><path d="M977.3 716.0L981.3 712.0" stroke="#ffffff" stroke-width="1.1"/><path d="M977.3 723.0L981.3 719.0" stroke="#ffffff" stroke-width="1.1"/><path d="M977.3 730.0L981.3 726.0" stroke="#ffffff" stroke-width="1.1"/><text x="972.8" y="717.6" font-size="8.5" fill="#ffffff" text-anchor="middle" font-family="Liberation Sans" font-weight="normal" transform="rotate(-90 972.8 714.5)" textLength="12" lengthAdjust="spacingAndGlyphs" stroke="#ffffff" stroke-width="0.35">100</text><text x="972.8" y="730.6" font-size="8.5" fill="#ffffff" text-anchor="middle" font-family="Liberation Sans" font-weight="normal" transform="rotate(-90 972.8 727.5)" textLength="12" lengthAdjust="spacingAndGlyphs" stroke="#ffffff" stroke-width="0.35">100</text><path d="M943.5 733.0V761.0" stroke="#00e400" stroke-width="1"/><path d="M954.5 733.0V761.0" stroke="#00e400" stroke-width="1"/><text x="944.3" y="754.1" font-size="8.5" fill="#ffffff" text-anchor="middle" font-family="Liberation Sans" font-weight="normal" textLength="8" lengthAdjust="spacingAndGlyphs" stroke="#ffffff" stroke-width="0.35">90</text><text x="954.3" y="754.1" font-size="8.5" fill="#ffffff" text-anchor="middle" font-family="Liberation Sans" font-weight="normal" textLength="8" lengthAdjust="spacingAndGlyphs" stroke="#ffffff" stroke-width="0.35">90</text><path d="M941.5 758.5L945.5 754.5" stroke="#ffffff" stroke-width="1.1"/><path d="M946.8 758.5L950.8 754.5" stroke="#ffffff" stroke-width="1.1"/><path d="M952.2 758.5L956.2 754.5" stroke="#ffffff" stroke-width="1.1"/><path d="M1014.3 714.5H1031.3" stroke="#00dcdc" stroke-width="1"/><path d="M1014.3 728.5H1031.3" stroke="#00dcdc" stroke-width="1"/><path d="M1018.5 712.0V730.0" stroke="#00dcdc" stroke-width="1"/><path d="M1028.5 712.0V730.0" stroke="#00dcdc" stroke-width="1"/><rect x="1017.0" y="713.0" width="2" height="2" fill="#00e400"/><rect x="1017.0" y="727.0" width="2" height="2" fill="#00e400"/><rect x="1027.7" y="713.0" width="2" height="2" fill="#00e400"/><rect x="1027.7" y="727.0" width="2" height="2" fill="#00e400"/><path d="M1036.3 714.5H1058.3" stroke="#00e400" stroke-width="1"/><path d="M1036.3 728.5H1058.3" stroke="#00e400" stroke-width="1"/><path d="M1051.8 716.0L1055.8 712.0" stroke="#ffffff" stroke-width="1.1"/><path d="M1051.8 723.0L1055.8 719.0" stroke="#ffffff" stroke-width="1.1"/><path d="M1051.8 730.0L1055.8 726.0" stroke="#ffffff" stroke-width="1.1"/><text x="1047.3" y="717.6" font-size="8.5" fill="#ffffff" text-anchor="middle" font-family="Liberation Sans" font-weight="normal" transform="rotate(-90 1047.3 714.5)" textLength="12" lengthAdjust="spacingAndGlyphs" stroke="#ffffff" stroke-width="0.35">100</text><text x="1047.3" y="730.6" font-size="8.5" fill="#ffffff" text-anchor="middle" font-family="Liberation Sans" font-weight="normal" transform="rotate(-90 1047.3 727.5)" textLength="12" lengthAdjust="spacingAndGlyphs" stroke="#ffffff" stroke-width="0.35">100</text><path d="M1018.5 733.0V761.0" stroke="#00e400" stroke-width="1"/><path d="M1028.5 733.0V761.0" stroke="#00e400" stroke-width="1"/><text x="1018.8" y="754.1" font-size="8.5" fill="#ffffff" text-anchor="middle" font-family="Liberation Sans" font-weight="normal" textLength="8" lengthAdjust="spacingAndGlyphs" stroke="#ffffff" stroke-width="0.35">90</text><text x="1028.8" y="754.1" font-size="8.5" fill="#ffffff" text-anchor="middle" font-family="Liberation Sans" font-weight="normal" textLength="8" lengthAdjust="spacingAndGlyphs" stroke="#ffffff" stroke-width="0.35">90</text><path d="M1016.0 758.5L1020.0 754.5" stroke="#ffffff" stroke-width="1.1"/><path d="M1021.3 758.5L1025.3 754.5" stroke="#ffffff" stroke-width="1.1"/><path d="M1026.7 758.5L1030.7 754.5" stroke="#ffffff" stroke-width="1.1"/><path d="M1088.8 714.5H1105.8" stroke="#00dcdc" stroke-width="1"/><path d="M1088.8 728.5H1105.8" stroke="#00dcdc" stroke-width="1"/><path d="M1092.5 712.0V730.0" stroke="#00dcdc" stroke-width="1"/><path d="M1103.5 712.0V730.0" stroke="#00dcdc" stroke-width="1"/><rect x="1091.5" y="713.0" width="2" height="2" fill="#00e400"/><rect x="1091.5" y="727.0" width="2" height="2" fill="#00e400"/><rect x="1102.2" y="713.0" width="2" height="2" fill="#00e400"/><rect x="1102.2" y="727.0" width="2" height="2" fill="#00e400"/><path d="M1110.8 714.5H1132.8" stroke="#00e400" stroke-width="1"/><path d="M1110.8 728.5H1132.8" stroke="#00e400" stroke-width="1"/><path d="M1126.3 716.0L1130.3 712.0" stroke="#ffffff" stroke-width="1.1"/><path d="M1126.3 723.0L1130.3 719.0" stroke="#ffffff" stroke-width="1.1"/><path d="M1126.3 730.0L1130.3 726.0" stroke="#ffffff" stroke-width="1.1"/><text x="1121.8" y="717.6" font-size="8.5" fill="#ffffff" text-anchor="middle" font-family="Liberation Sans" font-weight="normal" transform="rotate(-90 1121.8 714.5)" textLength="12" lengthAdjust="spacingAndGlyphs" stroke="#ffffff" stroke-width="0.35">100</text><text x="1121.8" y="730.6" font-size="8.5" fill="#ffffff" text-anchor="middle" font-family="Liberation Sans" font-weight="normal" transform="rotate(-90 1121.8 727.5)" textLength="12" lengthAdjust="spacingAndGlyphs" stroke="#ffffff" stroke-width="0.35">100</text><path d="M1092.5 733.0V761.0" stroke="#00e400" stroke-width="1"/><path d="M1103.5 733.0V761.0" stroke="#00e400" stroke-width="1"/><text x="1093.3" y="754.1" font-size="8.5" fill="#ffffff" text-anchor="middle" font-family="Liberation Sans" font-weight="normal" textLength="8" lengthAdjust="spacingAndGlyphs" stroke="#ffffff" stroke-width="0.35">90</text><text x="1103.3" y="754.1" font-size="8.5" fill="#ffffff" text-anchor="middle" font-family="Liberation Sans" font-weight="normal" textLength="8" lengthAdjust="spacingAndGlyphs" stroke="#ffffff" stroke-width="0.35">90</text><path d="M1090.5 758.5L1094.5 754.5" stroke="#ffffff" stroke-width="1.1"/><path d="M1095.8 758.5L1099.8 754.5" stroke="#ffffff" stroke-width="1.1"/><path d="M1101.2 758.5L1105.2 754.5" stroke="#ffffff" stroke-width="1.1"/><path d="M1163.4 714.5H1180.4" stroke="#00dcdc" stroke-width="1"/><path d="M1163.4 728.5H1180.4" stroke="#00dcdc" stroke-width="1"/><path d="M1167.5 712.0V730.0" stroke="#00dcdc" stroke-width="1"/><path d="M1177.5 712.0V730.0" stroke="#00dcdc" stroke-width="1"/><rect x="1166.1" y="713.0" width="2" height="2" fill="#00e400"/><rect x="1166.1" y="727.0" width="2" height="2" fill="#00e400"/><rect x="1176.8" y="713.0" width="2" height="2" fill="#00e400"/><rect x="1176.8" y="727.0" width="2" height="2" fill="#00e400"/><path d="M1185.4 714.5H1207.4" stroke="#00e400" stroke-width="1"/><path d="M1185.4 728.5H1207.4" stroke="#00e400" stroke-width="1"/><path d="M1200.9 716.0L1204.9 712.0" stroke="#ffffff" stroke-width="1.1"/><path d="M1200.9 723.0L1204.9 719.0" stroke="#ffffff" stroke-width="1.1"/><path d="M1200.9 730.0L1204.9 726.0" stroke="#ffffff" stroke-width="1.1"/><text x="1196.4" y="717.6" font-size="8.5" fill="#ffffff" text-anchor="middle" font-family="Liberation Sans" font-weight="normal" transform="rotate(-90 1196.4 714.5)" textLength="12" lengthAdjust="spacingAndGlyphs" stroke="#ffffff" stroke-width="0.35">100</text><text x="1196.4" y="730.6" font-size="8.5" fill="#ffffff" text-anchor="middle" font-family="Liberation Sans" font-weight="normal" transform="rotate(-90 1196.4 727.5)" textLength="12" lengthAdjust="spacingAndGlyphs" stroke="#ffffff" stroke-width="0.35">100</text><path d="M1167.5 733.0V761.0" stroke="#00e400" stroke-width="1"/><path d="M1177.5 733.0V761.0" stroke="#00e400" stroke-width="1"/><text x="1167.9" y="754.1" font-size="8.5" fill="#ffffff" text-anchor="middle" font-family="Liberation Sans" font-weight="normal" textLength="8" lengthAdjust="spacingAndGlyphs" stroke="#ffffff" stroke-width="0.35">90</text><text x="1177.9" y="754.1" font-size="8.5" fill="#ffffff" text-anchor="middle" font-family="Liberation Sans" font-weight="normal" textLength="8" lengthAdjust="spacingAndGlyphs" stroke="#ffffff" stroke-width="0.35">90</text><path d="M1165.1 758.5L1169.1 754.5" stroke="#ffffff" stroke-width="1.1"/><path d="M1170.4 758.5L1174.4 754.5" stroke="#ffffff" stroke-width="1.1"/><path d="M1175.8 758.5L1179.8 754.5" stroke="#ffffff" stroke-width="1.1"/><path d="M1237.9 714.5H1254.9" stroke="#00dcdc" stroke-width="1"/><path d="M1237.9 728.5H1254.9" stroke="#00dcdc" stroke-width="1"/><path d="M1241.5 712.0V730.0" stroke="#00dcdc" stroke-width="1"/><path d="M1252.5 712.0V730.0" stroke="#00dcdc" stroke-width="1"/><rect x="1240.6" y="713.0" width="2" height="2" fill="#00e400"/><rect x="1240.6" y="727.0" width="2" height="2" fill="#00e400"/><rect x="1251.3" y="713.0" width="2" height="2" fill="#00e400"/><rect x="1251.3" y="727.0" width="2" height="2" fill="#00e400"/><path d="M1259.9 714.5H1281.9" stroke="#00e400" stroke-width="1"/><path d="M1259.9 728.5H1281.9" stroke="#00e400" stroke-width="1"/><path d="M1275.4 716.0L1279.4 712.0" stroke="#ffffff" stroke-width="1.1"/><path d="M1275.4 723.0L1279.4 719.0" stroke="#ffffff" stroke-width="1.1"/><path d="M1275.4 730.0L1279.4 726.0" stroke="#ffffff" stroke-width="1.1"/><text x="1270.9" y="717.6" font-size="8.5" fill="#ffffff" text-anchor="middle" font-family="Liberation Sans" font-weight="normal" transform="rotate(-90 1270.9 714.5)" textLength="12" lengthAdjust="spacingAndGlyphs" stroke="#ffffff" stroke-width="0.35">100</text><text x="1270.9" y="730.6" font-size="8.5" fill="#ffffff" text-anchor="middle" font-family="Liberation Sans" font-weight="normal" transform="rotate(-90 1270.9 727.5)" textLength="12" lengthAdjust="spacingAndGlyphs" stroke="#ffffff" stroke-width="0.35">100</text><path d="M1241.5 733.0V761.0" stroke="#00e400" stroke-width="1"/><path d="M1252.5 733.0V761.0" stroke="#00e400" stroke-width="1"/><text x="1242.4" y="754.1" font-size="8.5" fill="#ffffff" text-anchor="middle" font-family="Liberation Sans" font-weight="normal" textLength="8" lengthAdjust="spacingAndGlyphs" stroke="#ffffff" stroke-width="0.35">90</text><text x="1252.4" y="754.1" font-size="8.5" fill="#ffffff" text-anchor="middle" font-family="Liberation Sans" font-weight="normal" textLength="8" lengthAdjust="spacingAndGlyphs" stroke="#ffffff" stroke-width="0.35">90</text><path d="M1239.6 758.5L1243.6 754.5" stroke="#ffffff" stroke-width="1.1"/><path d="M1244.9 758.5L1248.9 754.5" stroke="#ffffff" stroke-width="1.1"/><path d="M1250.3 758.5L1254.3 754.5" stroke="#ffffff" stroke-width="1.1"/><path d="M1301.8 714.5H1318.8" stroke="#00dcdc" stroke-width="1"/><path d="M1301.8 728.5H1318.8" stroke="#00dcdc" stroke-width="1"/><path d="M1305.5 712.0V730.0" stroke="#00dcdc" stroke-width="1"/><path d="M1316.5 712.0V730.0" stroke="#00dcdc" stroke-width="1"/><rect x="1304.5" y="713.0" width="2" height="2" fill="#00e400"/><rect x="1304.5" y="727.0" width="2" height="2" fill="#00e400"/><rect x="1315.2" y="713.0" width="2" height="2" fill="#00e400"/><rect x="1315.2" y="727.0" width="2" height="2" fill="#00e400"/><path d="M1323.8 714.5H1345.8" stroke="#00e400" stroke-width="1"/><path d="M1323.8 728.5H1345.8" stroke="#00e400" stroke-width="1"/><path d="M1339.3 716.0L1343.3 712.0" stroke="#ffffff" stroke-width="1.1"/><path d="M1339.3 723.0L1343.3 719.0" stroke="#ffffff" stroke-width="1.1"/><path d="M1339.3 730.0L1343.3 726.0" stroke="#ffffff" stroke-width="1.1"/><text x="1334.8" y="717.6" font-size="8.5" fill="#ffffff" text-anchor="middle" font-family="Liberation Sans" font-weight="normal" transform="rotate(-90 1334.8 714.5)" textLength="12" lengthAdjust="spacingAndGlyphs" stroke="#ffffff" stroke-width="0.35">100</text><text x="1334.8" y="730.6" font-size="8.5" fill="#ffffff" text-anchor="middle" font-family="Liberation Sans" font-weight="normal" transform="rotate(-90 1334.8 727.5)" textLength="12" lengthAdjust="spacingAndGlyphs" stroke="#ffffff" stroke-width="0.35">100</text><path d="M1305.5 733.0V761.0" stroke="#00e400" stroke-width="1"/><path d="M1316.5 733.0V761.0" stroke="#00e400" stroke-width="1"/><text x="1306.3" y="754.1" font-size="8.5" fill="#ffffff" text-anchor="middle" font-family="Liberation Sans" font-weight="normal" textLength="8" lengthAdjust="spacingAndGlyphs" stroke="#ffffff" stroke-width="0.35">90</text><text x="1316.3" y="754.1" font-size="8.5" fill="#ffffff" text-anchor="middle" font-family="Liberation Sans" font-weight="normal" textLength="8" lengthAdjust="spacingAndGlyphs" stroke="#ffffff" stroke-width="0.35">90</text><path d="M1303.5 758.5L1307.5 754.5" stroke="#ffffff" stroke-width="1.1"/><path d="M1308.8 758.5L1312.8 754.5" stroke="#ffffff" stroke-width="1.1"/><path d="M1314.2 758.5L1318.2 754.5" stroke="#ffffff" stroke-width="1.1"/><path d="M1376.3 714.5H1393.3" stroke="#00dcdc" stroke-width="1"/><path d="M1376.3 728.5H1393.3" stroke="#00dcdc" stroke-width="1"/><path d="M1380.5 712.0V730.0" stroke="#00dcdc" stroke-width="1"/><path d="M1390.5 712.0V730.0" stroke="#00dcdc" stroke-width="1"/><rect x="1379.0" y="713.0" width="2" height="2" fill="#00e400"/><rect x="1379.0" y="727.0" width="2" height="2" fill="#00e400"/><rect x="1389.7" y="713.0" width="2" height="2" fill="#00e400"/><rect x="1389.7" y="727.0" width="2" height="2" fill="#00e400"/><path d="M1398.3 714.5H1420.3" stroke="#00e400" stroke-width="1"/><path d="M1398.3 728.5H1420.3" stroke="#00e400" stroke-width="1"/><path d="M1413.8 716.0L1417.8 712.0" stroke="#ffffff" stroke-width="1.1"/><path d="M1413.8 723.0L1417.8 719.0" stroke="#ffffff" stroke-width="1.1"/><path d="M1413.8 730.0L1417.8 726.0" stroke="#ffffff" stroke-width="1.1"/><text x="1409.3" y="717.6" font-size="8.5" fill="#ffffff" text-anchor="middle" font-family="Liberation Sans" font-weight="normal" transform="rotate(-90 1409.3 714.5)" textLength="12" lengthAdjust="spacingAndGlyphs" stroke="#ffffff" stroke-width="0.35">100</text><text x="1409.3" y="730.6" font-size="8.5" fill="#ffffff" text-anchor="middle" font-family="Liberation Sans" font-weight="normal" transform="rotate(-90 1409.3 727.5)" textLength="12" lengthAdjust="spacingAndGlyphs" stroke="#ffffff" stroke-width="0.35">100</text><path d="M1380.5 733.0V761.0" stroke="#00e400" stroke-width="1"/><path d="M1390.5 733.0V761.0" stroke="#00e400" stroke-width="1"/><text x="1380.8" y="754.1" font-size="8.5" fill="#ffffff" text-anchor="middle" font-family="Liberation Sans" font-weight="normal" textLength="8" lengthAdjust="spacingAndGlyphs" stroke="#ffffff" stroke-width="0.35">90</text><text x="1390.8" y="754.1" font-size="8.5" fill="#ffffff" text-anchor="middle" font-family="Liberation Sans" font-weight="normal" textLength="8" lengthAdjust="spacingAndGlyphs" stroke="#ffffff" stroke-width="0.35">90</text><path d="M1378.0 758.5L1382.0 754.5" stroke="#ffffff" stroke-width="1.1"/><path d="M1383.3 758.5L1387.3 754.5" stroke="#ffffff" stroke-width="1.1"/><path d="M1388.7 758.5L1392.7 754.5" stroke="#ffffff" stroke-width="1.1"/><path d="M269.0 817.5H286.0" stroke="#00dcdc" stroke-width="1"/><path d="M269.0 827.5H286.0" stroke="#00dcdc" stroke-width="1"/><path d="M272.5 815.2V829.7" stroke="#00dcdc" stroke-width="1"/><path d="M283.5 815.2V829.7" stroke="#00dcdc" stroke-width="1"/><rect x="271.7" y="816.2" width="2" height="2" fill="#00e400"/><rect x="271.7" y="826.7" width="2" height="2" fill="#00e400"/><rect x="282.4" y="816.2" width="2" height="2" fill="#00e400"/><rect x="282.4" y="826.7" width="2" height="2" fill="#00e400"/><path d="M291.0 817.5H311.0" stroke="#00e400" stroke-width="1"/><path d="M291.0 827.5H311.0" stroke="#00e400" stroke-width="1"/><path d="M304.5 819.2L308.5 815.2" stroke="#ffffff" stroke-width="1.1"/><path d="M304.5 824.2L308.5 820.2" stroke="#ffffff" stroke-width="1.1"/><path d="M304.5 829.7L308.5 825.7" stroke="#ffffff" stroke-width="1.1"/><text x="300.0" y="816.3" font-size="8.5" fill="#ffffff" text-anchor="middle" font-family="Liberation Sans" font-weight="normal" transform="rotate(-90 300.0 813.2)" textLength="12" lengthAdjust="spacingAndGlyphs" stroke="#ffffff" stroke-width="0.35">100</text><text x="300.0" y="833.3" font-size="8.5" fill="#ffffff" text-anchor="middle" font-family="Liberation Sans" font-weight="normal" transform="rotate(-90 300.0 830.2)" textLength="12" lengthAdjust="spacingAndGlyphs" stroke="#ffffff" stroke-width="0.35">100</text><path d="M272.5 835.2V853.7" stroke="#00e400" stroke-width="1"/><path d="M283.5 835.2V853.7" stroke="#00e400" stroke-width="1"/><text x="273.5" y="846.3" font-size="8.5" fill="#ffffff" text-anchor="middle" font-family="Liberation Sans" font-weight="normal" textLength="8" lengthAdjust="spacingAndGlyphs" stroke="#ffffff" stroke-width="0.35">90</text><text x="283.5" y="846.3" font-size="8.5" fill="#ffffff" text-anchor="middle" font-family="Liberation Sans" font-weight="normal" textLength="8" lengthAdjust="spacingAndGlyphs" stroke="#ffffff" stroke-width="0.35">90</text><path d="M270.7 850.7L274.7 846.7" stroke="#ffffff" stroke-width="1.1"/><path d="M276.0 850.7L280.0 846.7" stroke="#ffffff" stroke-width="1.1"/><path d="M281.4 850.7L285.4 846.7" stroke="#ffffff" stroke-width="1.1"/><path d="M343.5 817.5H360.5" stroke="#00dcdc" stroke-width="1"/><path d="M343.5 827.5H360.5" stroke="#00dcdc" stroke-width="1"/><path d="M347.5 815.2V829.7" stroke="#00dcdc" stroke-width="1"/><path d="M357.5 815.2V829.7" stroke="#00dcdc" stroke-width="1"/><rect x="346.2" y="816.2" width="2" height="2" fill="#00e400"/><rect x="346.2" y="826.7" width="2" height="2" fill="#00e400"/><rect x="356.9" y="816.2" width="2" height="2" fill="#00e400"/><rect x="356.9" y="826.7" width="2" height="2" fill="#00e400"/><path d="M365.5 817.5H385.5" stroke="#00e400" stroke-width="1"/><path d="M365.5 827.5H385.5" stroke="#00e400" stroke-width="1"/><path d="M379.0 819.2L383.0 815.2" stroke="#ffffff" stroke-width="1.1"/><path d="M379.0 824.2L383.0 820.2" stroke="#ffffff" stroke-width="1.1"/><path d="M379.0 829.7L383.0 825.7" stroke="#ffffff" stroke-width="1.1"/><text x="374.5" y="816.3" font-size="8.5" fill="#ffffff" text-anchor="middle" font-family="Liberation Sans" font-weight="normal" transform="rotate(-90 374.5 813.2)" textLength="12" lengthAdjust="spacingAndGlyphs" stroke="#ffffff" stroke-width="0.35">100</text><text x="374.5" y="833.3" font-size="8.5" fill="#ffffff" text-anchor="middle" font-family="Liberation Sans" font-weight="normal" transform="rotate(-90 374.5 830.2)" textLength="12" lengthAdjust="spacingAndGlyphs" stroke="#ffffff" stroke-width="0.35">100</text><path d="M347.5 835.2V853.7" stroke="#00e400" stroke-width="1"/><path d="M357.5 835.2V853.7" stroke="#00e400" stroke-width="1"/><text x="348.0" y="846.3" font-size="8.5" fill="#ffffff" text-anchor="middle" font-family="Liberation Sans" font-weight="normal" textLength="8" lengthAdjust="spacingAndGlyphs" stroke="#ffffff" stroke-width="0.35">90</text><text x="358.0" y="846.3" font-size="8.5" fill="#ffffff" text-anchor="middle" font-family="Liberation Sans" font-weight="normal" textLength="8" lengthAdjust="spacingAndGlyphs" stroke="#ffffff" stroke-width="0.35">90</text><path d="M345.2 850.7L349.2 846.7" stroke="#ffffff" stroke-width="1.1"/><path d="M350.5 850.7L354.5 846.7" stroke="#ffffff" stroke-width="1.1"/><path d="M355.9 850.7L359.9 846.7" stroke="#ffffff" stroke-width="1.1"/><path d="M418.1 817.5H435.1" stroke="#00dcdc" stroke-width="1"/><path d="M418.1 827.5H435.1" stroke="#00dcdc" stroke-width="1"/><path d="M421.5 815.2V829.7" stroke="#00dcdc" stroke-width="1"/><path d="M432.5 815.2V829.7" stroke="#00dcdc" stroke-width="1"/><rect x="420.8" y="816.2" width="2" height="2" fill="#00e400"/><rect x="420.8" y="826.7" width="2" height="2" fill="#00e400"/><rect x="431.5" y="816.2" width="2" height="2" fill="#00e400"/><rect x="431.5" y="826.7" width="2" height="2" fill="#00e400"/><path d="M440.1 817.5H460.1" stroke="#00e400" stroke-width="1"/><path d="M440.1 827.5H460.1" stroke="#00e400" stroke-width="1"/><path d="M453.6 819.2L457.6 815.2" stroke="#ffffff" stroke-width="1.1"/><path d="M453.6 824.2L457.6 820.2" stroke="#ffffff" stroke-width="1.1"/><path d="M453.6 829.7L457.6 825.7" stroke="#ffffff" stroke-width="1.1"/><text x="449.1" y="816.3" font-size="8.5" fill="#ffffff" text-anchor="middle" font-family="Liberation Sans" font-weight="normal" transform="rotate(-90 449.1 813.2)" textLength="12" lengthAdjust="spacingAndGlyphs" stroke="#ffffff" stroke-width="0.35">100</text><text x="449.1" y="833.3" font-size="8.5" fill="#ffffff" text-anchor="middle" font-family="Liberation Sans" font-weight="normal" transform="rotate(-90 449.1 830.2)" textLength="12" lengthAdjust="spacingAndGlyphs" stroke="#ffffff" stroke-width="0.35">100</text><path d="M421.5 835.2V853.7" stroke="#00e400" stroke-width="1"/><path d="M432.5 835.2V853.7" stroke="#00e400" stroke-width="1"/><text x="422.6" y="846.3" font-size="8.5" fill="#ffffff" text-anchor="middle" font-family="Liberation Sans" font-weight="normal" textLength="8" lengthAdjust="spacingAndGlyphs" stroke="#ffffff" stroke-width="0.35">90</text><text x="432.6" y="846.3" font-size="8.5" fill="#ffffff" text-anchor="middle" font-family="Liberation Sans" font-weight="normal" textLength="8" lengthAdjust="spacingAndGlyphs" stroke="#ffffff" stroke-width="0.35">90</text><path d="M419.8 850.7L423.8 846.7" stroke="#ffffff" stroke-width="1.1"/><path d="M425.1 850.7L429.1 846.7" stroke="#ffffff" stroke-width="1.1"/><path d="M430.5 850.7L434.5 846.7" stroke="#ffffff" stroke-width="1.1"/><path d="M492.6 817.5H509.6" stroke="#00dcdc" stroke-width="1"/><path d="M492.6 827.5H509.6" stroke="#00dcdc" stroke-width="1"/><path d="M496.5 815.2V829.7" stroke="#00dcdc" stroke-width="1"/><path d="M506.5 815.2V829.7" stroke="#00dcdc" stroke-width="1"/><rect x="495.3" y="816.2" width="2" height="2" fill="#00e400"/><rect x="495.3" y="826.7" width="2" height="2" fill="#00e400"/><rect x="506.0" y="816.2" width="2" height="2" fill="#00e400"/><rect x="506.0" y="826.7" width="2" height="2" fill="#00e400"/><path d="M514.6 817.5H534.6" stroke="#00e400" stroke-width="1"/><path d="M514.6 827.5H534.6" stroke="#00e400" stroke-width="1"/><path d="M528.1 819.2L532.1 815.2" stroke="#ffffff" stroke-width="1.1"/><path d="M528.1 824.2L532.1 820.2" stroke="#ffffff" stroke-width="1.1"/><path d="M528.1 829.7L532.1 825.7" stroke="#ffffff" stroke-width="1.1"/><text x="523.6" y="816.3" font-size="8.5" fill="#ffffff" text-anchor="middle" font-family="Liberation Sans" font-weight="normal" transform="rotate(-90 523.6 813.2)" textLength="12" lengthAdjust="spacingAndGlyphs" stroke="#ffffff" stroke-width="0.35">100</text><text x="523.6" y="833.3" font-size="8.5" fill="#ffffff" text-anchor="middle" font-family="Liberation Sans" font-weight="normal" transform="rotate(-90 523.6 830.2)" textLength="12" lengthAdjust="spacingAndGlyphs" stroke="#ffffff" stroke-width="0.35">100</text><path d="M496.5 835.2V853.7" stroke="#00e400" stroke-width="1"/><path d="M506.5 835.2V853.7" stroke="#00e400" stroke-width="1"/><text x="497.1" y="846.3" font-size="8.5" fill="#ffffff" text-anchor="middle" font-family="Liberation Sans" font-weight="normal" textLength="8" lengthAdjust="spacingAndGlyphs" stroke="#ffffff" stroke-width="0.35">90</text><text x="507.1" y="846.3" font-size="8.5" fill="#ffffff" text-anchor="middle" font-family="Liberation Sans" font-weight="normal" textLength="8" lengthAdjust="spacingAndGlyphs" stroke="#ffffff" stroke-width="0.35">90</text><path d="M494.3 850.7L498.3 846.7" stroke="#ffffff" stroke-width="1.1"/><path d="M499.6 850.7L503.6 846.7" stroke="#ffffff" stroke-width="1.1"/><path d="M505.0 850.7L509.0 846.7" stroke="#ffffff" stroke-width="1.1"/><path d="M567.1 817.5H584.1" stroke="#00dcdc" stroke-width="1"/><path d="M567.1 827.5H584.1" stroke="#00dcdc" stroke-width="1"/><path d="M570.5 815.2V829.7" stroke="#00dcdc" stroke-width="1"/><path d="M581.5 815.2V829.7" stroke="#00dcdc" stroke-width="1"/><rect x="569.8" y="816.2" width="2" height="2" fill="#00e400"/><rect x="569.8" y="826.7" width="2" height="2" fill="#00e400"/><rect x="580.5" y="816.2" width="2" height="2" fill="#00e400"/><rect x="580.5" y="826.7" width="2" height="2" fill="#00e400"/><path d="M589.1 817.5H609.1" stroke="#00e400" stroke-width="1"/><path d="M589.1 827.5H609.1" stroke="#00e400" stroke-width="1"/><path d="M602.6 819.2L606.6 815.2" stroke="#ffffff" stroke-width="1.1"/><path d="M602.6 824.2L606.6 820.2" stroke="#ffffff" stroke-width="1.1"/><path d="M602.6 829.7L606.6 825.7" stroke="#ffffff" stroke-width="1.1"/><text x="598.1" y="816.3" font-size="8.5" fill="#ffffff" text-anchor="middle" font-family="Liberation Sans" font-weight="normal" transform="rotate(-90 598.1 813.2)" textLength="12" lengthAdjust="spacingAndGlyphs" stroke="#ffffff" stroke-width="0.35">100</text><text x="598.1" y="833.3" font-size="8.5" fill="#ffffff" text-anchor="middle" font-family="Liberation Sans" font-weight="normal" transform="rotate(-90 598.1 830.2)" textLength="12" lengthAdjust="spacingAndGlyphs" stroke="#ffffff" stroke-width="0.35">100</text><path d="M570.5 835.2V853.7" stroke="#00e400" stroke-width="1"/><path d="M581.5 835.2V853.7" stroke="#00e400" stroke-width="1"/><text x="571.6" y="846.3" font-size="8.5" fill="#ffffff" text-anchor="middle" font-family="Liberation Sans" font-weight="normal" textLength="8" lengthAdjust="spacingAndGlyphs" stroke="#ffffff" stroke-width="0.35">90</text><text x="581.6" y="846.3" font-size="8.5" fill="#ffffff" text-anchor="middle" font-family="Liberation Sans" font-weight="normal" textLength="8" lengthAdjust="spacingAndGlyphs" stroke="#ffffff" stroke-width="0.35">90</text><path d="M568.8 850.7L572.8 846.7" stroke="#ffffff" stroke-width="1.1"/><path d="M574.1 850.7L578.1 846.7" stroke="#ffffff" stroke-width="1.1"/><path d="M579.5 850.7L583.5 846.7" stroke="#ffffff" stroke-width="1.1"/><path d="M641.6 817.5H658.6" stroke="#00dcdc" stroke-width="1"/><path d="M641.6 827.5H658.6" stroke="#00dcdc" stroke-width="1"/><path d="M645.5 815.2V829.7" stroke="#00dcdc" stroke-width="1"/><path d="M656.5 815.2V829.7" stroke="#00dcdc" stroke-width="1"/><rect x="644.4" y="816.2" width="2" height="2" fill="#00e400"/><rect x="644.4" y="826.7" width="2" height="2" fill="#00e400"/><rect x="655.0" y="816.2" width="2" height="2" fill="#00e400"/><rect x="655.0" y="826.7" width="2" height="2" fill="#00e400"/><path d="M663.6 817.5H683.6" stroke="#00e400" stroke-width="1"/><path d="M663.6 827.5H683.6" stroke="#00e400" stroke-width="1"/><path d="M677.1 819.2L681.1 815.2" stroke="#ffffff" stroke-width="1.1"/><path d="M677.1 824.2L681.1 820.2" stroke="#ffffff" stroke-width="1.1"/><path d="M677.1 829.7L681.1 825.7" stroke="#ffffff" stroke-width="1.1"/><text x="672.6" y="816.3" font-size="8.5" fill="#ffffff" text-anchor="middle" font-family="Liberation Sans" font-weight="normal" transform="rotate(-90 672.6 813.2)" textLength="12" lengthAdjust="spacingAndGlyphs" stroke="#ffffff" stroke-width="0.35">100</text><text x="672.6" y="833.3" font-size="8.5" fill="#ffffff" text-anchor="middle" font-family="Liberation Sans" font-weight="normal" transform="rotate(-90 672.6 830.2)" textLength="12" lengthAdjust="spacingAndGlyphs" stroke="#ffffff" stroke-width="0.35">100</text><path d="M645.5 835.2V853.7" stroke="#00e400" stroke-width="1"/><path d="M656.5 835.2V853.7" stroke="#00e400" stroke-width="1"/><text x="646.1" y="846.3" font-size="8.5" fill="#ffffff" text-anchor="middle" font-family="Liberation Sans" font-weight="normal" textLength="8" lengthAdjust="spacingAndGlyphs" stroke="#ffffff" stroke-width="0.35">90</text><text x="656.1" y="846.3" font-size="8.5" fill="#ffffff" text-anchor="middle" font-family="Liberation Sans" font-weight="normal" textLength="8" lengthAdjust="spacingAndGlyphs" stroke="#ffffff" stroke-width="0.35">90</text><path d="M643.4 850.7L647.4 846.7" stroke="#ffffff" stroke-width="1.1"/><path d="M648.6 850.7L652.6 846.7" stroke="#ffffff" stroke-width="1.1"/><path d="M654.0 850.7L658.0 846.7" stroke="#ffffff" stroke-width="1.1"/><path d="M716.2 817.5H733.2" stroke="#00dcdc" stroke-width="1"/><path d="M716.2 827.5H733.2" stroke="#00dcdc" stroke-width="1"/><path d="M719.5 815.2V829.7" stroke="#00dcdc" stroke-width="1"/><path d="M730.5 815.2V829.7" stroke="#00dcdc" stroke-width="1"/><rect x="718.9" y="816.2" width="2" height="2" fill="#00e400"/><rect x="718.9" y="826.7" width="2" height="2" fill="#00e400"/><rect x="729.6" y="816.2" width="2" height="2" fill="#00e400"/><rect x="729.6" y="826.7" width="2" height="2" fill="#00e400"/><path d="M738.2 817.5H758.2" stroke="#00e400" stroke-width="1"/><path d="M738.2 827.5H758.2" stroke="#00e400" stroke-width="1"/><path d="M751.7 819.2L755.7 815.2" stroke="#ffffff" stroke-width="1.1"/><path d="M751.7 824.2L755.7 820.2" stroke="#ffffff" stroke-width="1.1"/><path d="M751.7 829.7L755.7 825.7" stroke="#ffffff" stroke-width="1.1"/><text x="747.2" y="816.3" font-size="8.5" fill="#ffffff" text-anchor="middle" font-family="Liberation Sans" font-weight="normal" transform="rotate(-90 747.2 813.2)" textLength="12" lengthAdjust="spacingAndGlyphs" stroke="#ffffff" stroke-width="0.35">100</text><text x="747.2" y="833.3" font-size="8.5" fill="#ffffff" text-anchor="middle" font-family="Liberation Sans" font-weight="normal" transform="rotate(-90 747.2 830.2)" textLength="12" lengthAdjust="spacingAndGlyphs" stroke="#ffffff" stroke-width="0.35">100</text><path d="M719.5 835.2V853.7" stroke="#00e400" stroke-width="1"/><path d="M730.5 835.2V853.7" stroke="#00e400" stroke-width="1"/><text x="720.7" y="846.3" font-size="8.5" fill="#ffffff" text-anchor="middle" font-family="Liberation Sans" font-weight="normal" textLength="8" lengthAdjust="spacingAndGlyphs" stroke="#ffffff" stroke-width="0.35">90</text><text x="730.7" y="846.3" font-size="8.5" fill="#ffffff" text-anchor="middle" font-family="Liberation Sans" font-weight="normal" textLength="8" lengthAdjust="spacingAndGlyphs" stroke="#ffffff" stroke-width="0.35">90</text><path d="M717.9 850.7L721.9 846.7" stroke="#ffffff" stroke-width="1.1"/><path d="M723.2 850.7L727.2 846.7" stroke="#ffffff" stroke-width="1.1"/><path d="M728.6 850.7L732.6 846.7" stroke="#ffffff" stroke-width="1.1"/><path d="M790.7 817.5H807.7" stroke="#00dcdc" stroke-width="1"/><path d="M790.7 827.5H807.7" stroke="#00dcdc" stroke-width="1"/><path d="M794.5 815.2V829.7" stroke="#00dcdc" stroke-width="1"/><path d="M805.5 815.2V829.7" stroke="#00dcdc" stroke-width="1"/><rect x="793.4" y="816.2" width="2" height="2" fill="#00e400"/><rect x="793.4" y="826.7" width="2" height="2" fill="#00e400"/><rect x="804.1" y="816.2" width="2" height="2" fill="#00e400"/><rect x="804.1" y="826.7" width="2" height="2" fill="#00e400"/><path d="M812.7 817.5H832.7" stroke="#00e400" stroke-width="1"/><path d="M812.7 827.5H832.7" stroke="#00e400" stroke-width="1"/><path d="M826.2 819.2L830.2 815.2" stroke="#ffffff" stroke-width="1.1"/><path d="M826.2 824.2L830.2 820.2" stroke="#ffffff" stroke-width="1.1"/><path d="M826.2 829.7L830.2 825.7" stroke="#ffffff" stroke-width="1.1"/><text x="821.7" y="816.3" font-size="8.5" fill="#ffffff" text-anchor="middle" font-family="Liberation Sans" font-weight="normal" transform="rotate(-90 821.7 813.2)" textLength="12" lengthAdjust="spacingAndGlyphs" stroke="#ffffff" stroke-width="0.35">100</text><text x="821.7" y="833.3" font-size="8.5" fill="#ffffff" text-anchor="middle" font-family="Liberation Sans" font-weight="normal" transform="rotate(-90 821.7 830.2)" textLength="12" lengthAdjust="spacingAndGlyphs" stroke="#ffffff" stroke-width="0.35">100</text><path d="M794.5 835.2V853.7" stroke="#00e400" stroke-width="1"/><path d="M805.5 835.2V853.7" stroke="#00e400" stroke-width="1"/><text x="795.2" y="846.3" font-size="8.5" fill="#ffffff" text-anchor="middle" font-family="Liberation Sans" font-weight="normal" textLength="8" lengthAdjust="spacingAndGlyphs" stroke="#ffffff" stroke-width="0.35">90</text><text x="805.2" y="846.3" font-size="8.5" fill="#ffffff" text-anchor="middle" font-family="Liberation Sans" font-weight="normal" textLength="8" lengthAdjust="spacingAndGlyphs" stroke="#ffffff" stroke-width="0.35">90</text><path d="M792.4 850.7L796.4 846.7" stroke="#ffffff" stroke-width="1.1"/><path d="M797.7 850.7L801.7 846.7" stroke="#ffffff" stroke-width="1.1"/><path d="M803.1 850.7L807.1 846.7" stroke="#ffffff" stroke-width="1.1"/><path d="M269.0 918.5H286.0" stroke="#00dcdc" stroke-width="1"/><path d="M269.0 928.5H286.0" stroke="#00dcdc" stroke-width="1"/><path d="M272.5 916.4V930.9" stroke="#00dcdc" stroke-width="1"/><path d="M283.5 916.4V930.9" stroke="#00dcdc" stroke-width="1"/><rect x="271.7" y="917.4" width="2" height="2" fill="#00e400"/><rect x="271.7" y="927.9" width="2" height="2" fill="#00e400"/><rect x="282.4" y="917.4" width="2" height="2" fill="#00e400"/><rect x="282.4" y="927.9" width="2" height="2" fill="#00e400"/><path d="M291.0 918.5H311.0" stroke="#00e400" stroke-width="1"/><path d="M291.0 928.5H311.0" stroke="#00e400" stroke-width="1"/><path d="M304.5 920.4L308.5 916.4" stroke="#ffffff" stroke-width="1.1"/><path d="M304.5 925.4L308.5 921.4" stroke="#ffffff" stroke-width="1.1"/><path d="M304.5 930.9L308.5 926.9" stroke="#ffffff" stroke-width="1.1"/><text x="300.0" y="917.4" font-size="8.5" fill="#ffffff" text-anchor="middle" font-family="Liberation Sans" font-weight="normal" transform="rotate(-90 300.0 914.4)" textLength="12" lengthAdjust="spacingAndGlyphs" stroke="#ffffff" stroke-width="0.35">100</text><text x="300.0" y="934.4" font-size="8.5" fill="#ffffff" text-anchor="middle" font-family="Liberation Sans" font-weight="normal" transform="rotate(-90 300.0 931.4)" textLength="12" lengthAdjust="spacingAndGlyphs" stroke="#ffffff" stroke-width="0.35">100</text><path d="M272.5 936.4V954.9" stroke="#00e400" stroke-width="1"/><path d="M283.5 936.4V954.9" stroke="#00e400" stroke-width="1"/><text x="273.5" y="947.4" font-size="8.5" fill="#ffffff" text-anchor="middle" font-family="Liberation Sans" font-weight="normal" textLength="8" lengthAdjust="spacingAndGlyphs" stroke="#ffffff" stroke-width="0.35">90</text><text x="283.5" y="947.4" font-size="8.5" fill="#ffffff" text-anchor="middle" font-family="Liberation Sans" font-weight="normal" textLength="8" lengthAdjust="spacingAndGlyphs" stroke="#ffffff" stroke-width="0.35">90</text><path d="M270.7 951.9L274.7 947.9" stroke="#ffffff" stroke-width="1.1"/><path d="M276.0 951.9L280.0 947.9" stroke="#ffffff" stroke-width="1.1"/><path d="M281.4 951.9L285.4 947.9" stroke="#ffffff" stroke-width="1.1"/><path d="M343.5 918.5H360.5" stroke="#00dcdc" stroke-width="1"/><path d="M343.5 928.5H360.5" stroke="#00dcdc" stroke-width="1"/><path d="M347.5 916.4V930.9" stroke="#00dcdc" stroke-width="1"/><path d="M357.5 916.4V930.9" stroke="#00dcdc" stroke-width="1"/><rect x="346.2" y="917.4" width="2" height="2" fill="#00e400"/><rect x="346.2" y="927.9" width="2" height="2" fill="#00e400"/><rect x="356.9" y="917.4" width="2" height="2" fill="#00e400"/><rect x="356.9" y="927.9" width="2" height="2" fill="#00e400"/><path d="M365.5 918.5H385.5" stroke="#00e400" stroke-width="1"/><path d="M365.5 928.5H385.5" stroke="#00e400" stroke-width="1"/><path d="M379.0 920.4L383.0 916.4" stroke="#ffffff" stroke-width="1.1"/><path d="M379.0 925.4L383.0 921.4" stroke="#ffffff" stroke-width="1.1"/><path d="M379.0 930.9L383.0 926.9" stroke="#ffffff" stroke-width="1.1"/><text x="374.5" y="917.4" font-size="8.5" fill="#ffffff" text-anchor="middle" font-family="Liberation Sans" font-weight="normal" transform="rotate(-90 374.5 914.4)" textLength="12" lengthAdjust="spacingAndGlyphs" stroke="#ffffff" stroke-width="0.35">100</text><text x="374.5" y="934.4" font-size="8.5" fill="#ffffff" text-anchor="middle" font-family="Liberation Sans" font-weight="normal" transform="rotate(-90 374.5 931.4)" textLength="12" lengthAdjust="spacingAndGlyphs" stroke="#ffffff" stroke-width="0.35">100</text><path d="M347.5 936.4V954.9" stroke="#00e400" stroke-width="1"/><path d="M357.5 936.4V954.9" stroke="#00e400" stroke-width="1"/><text x="348.0" y="947.4" font-size="8.5" fill="#ffffff" text-anchor="middle" font-family="Liberation Sans" font-weight="normal" textLength="8" lengthAdjust="spacingAndGlyphs" stroke="#ffffff" stroke-width="0.35">90</text><text x="358.0" y="947.4" font-size="8.5" fill="#ffffff" text-anchor="middle" font-family="Liberation Sans" font-weight="normal" textLength="8" lengthAdjust="spacingAndGlyphs" stroke="#ffffff" stroke-width="0.35">90</text><path d="M345.2 951.9L349.2 947.9" stroke="#ffffff" stroke-width="1.1"/><path d="M350.5 951.9L354.5 947.9" stroke="#ffffff" stroke-width="1.1"/><path d="M355.9 951.9L359.9 947.9" stroke="#ffffff" stroke-width="1.1"/><path d="M418.1 918.5H435.1" stroke="#00dcdc" stroke-width="1"/><path d="M418.1 928.5H435.1" stroke="#00dcdc" stroke-width="1"/><path d="M421.5 916.4V930.9" stroke="#00dcdc" stroke-width="1"/><path d="M432.5 916.4V930.9" stroke="#00dcdc" stroke-width="1"/><rect x="420.8" y="917.4" width="2" height="2" fill="#00e400"/><rect x="420.8" y="927.9" width="2" height="2" fill="#00e400"/><rect x="431.5" y="917.4" width="2" height="2" fill="#00e400"/><rect x="431.5" y="927.9" width="2" height="2" fill="#00e400"/><path d="M440.1 918.5H460.1" stroke="#00e400" stroke-width="1"/><path d="M440.1 928.5H460.1" stroke="#00e400" stroke-width="1"/><path d="M453.6 920.4L457.6 916.4" stroke="#ffffff" stroke-width="1.1"/><path d="M453.6 925.4L457.6 921.4" stroke="#ffffff" stroke-width="1.1"/><path d="M453.6 930.9L457.6 926.9" stroke="#ffffff" stroke-width="1.1"/><text x="449.1" y="917.4" font-size="8.5" fill="#ffffff" text-anchor="middle" font-family="Liberation Sans" font-weight="normal" transform="rotate(-90 449.1 914.4)" textLength="12" lengthAdjust="spacingAndGlyphs" stroke="#ffffff" stroke-width="0.35">100</text><text x="449.1" y="934.4" font-size="8.5" fill="#ffffff" text-anchor="middle" font-family="Liberation Sans" font-weight="normal" transform="rotate(-90 449.1 931.4)" textLength="12" lengthAdjust="spacingAndGlyphs" stroke="#ffffff" stroke-width="0.35">100</text><path d="M421.5 936.4V954.9" stroke="#00e400" stroke-width="1"/><path d="M432.5 936.4V954.9" stroke="#00e400" stroke-width="1"/><text x="422.6" y="947.4" font-size="8.5" fill="#ffffff" text-anchor="middle" font-family="Liberation Sans" font-weight="normal" textLength="8" lengthAdjust="spacingAndGlyphs" stroke="#ffffff" stroke-width="0.35">90</text><text x="432.6" y="947.4" font-size="8.5" fill="#ffffff" text-anchor="middle" font-family="Liberation Sans" font-weight="normal" textLength="8" lengthAdjust="spacingAndGlyphs" stroke="#ffffff" stroke-width="0.35">90</text><path d="M419.8 951.9L423.8 947.9" stroke="#ffffff" stroke-width="1.1"/><path d="M425.1 951.9L429.1 947.9" stroke="#ffffff" stroke-width="1.1"/><path d="M430.5 951.9L434.5 947.9" stroke="#ffffff" stroke-width="1.1"/><path d="M492.6 918.5H509.6" stroke="#00dcdc" stroke-width="1"/><path d="M492.6 928.5H509.6" stroke="#00dcdc" stroke-width="1"/><path d="M496.5 916.4V930.9" stroke="#00dcdc" stroke-width="1"/><path d="M506.5 916.4V930.9" stroke="#00dcdc" stroke-width="1"/><rect x="495.3" y="917.4" width="2" height="2" fill="#00e400"/><rect x="495.3" y="927.9" width="2" height="2" fill="#00e400"/><rect x="506.0" y="917.4" width="2" height="2" fill="#00e400"/><rect x="506.0" y="927.9" width="2" height="2" fill="#00e400"/><path d="M514.6 918.5H534.6" stroke="#00e400" stroke-width="1"/><path d="M514.6 928.5H534.6" stroke="#00e400" stroke-width="1"/><path d="M528.1 920.4L532.1 916.4" stroke="#ffffff" stroke-width="1.1"/><path d="M528.1 925.4L532.1 921.4" stroke="#ffffff" stroke-width="1.1"/><path d="M528.1 930.9L532.1 926.9" stroke="#ffffff" stroke-width="1.1"/><text x="523.6" y="917.4" font-size="8.5" fill="#ffffff" text-anchor="middle" font-family="Liberation Sans" font-weight="normal" transform="rotate(-90 523.6 914.4)" textLength="12" lengthAdjust="spacingAndGlyphs" stroke="#ffffff" stroke-width="0.35">100</text><text x="523.6" y="934.4" font-size="8.5" fill="#ffffff" text-anchor="middle" font-family="Liberation Sans" font-weight="normal" transform="rotate(-90 523.6 931.4)" textLength="12" lengthAdjust="spacingAndGlyphs" stroke="#ffffff" stroke-width="0.35">100</text><path d="M496.5 936.4V954.9" stroke="#00e400" stroke-width="1"/><path d="M506.5 936.4V954.9" stroke="#00e400" stroke-width="1"/><text x="497.1" y="947.4" font-size="8.5" fill="#ffffff" text-anchor="middle" font-family="Liberation Sans" font-weight="normal" textLength="8" lengthAdjust="spacingAndGlyphs" stroke="#ffffff" stroke-width="0.35">90</text><text x="507.1" y="947.4" font-size="8.5" fill="#ffffff" text-anchor="middle" font-family="Liberation Sans" font-weight="normal" textLength="8" lengthAdjust="spacingAndGlyphs" stroke="#ffffff" stroke-width="0.35">90</text><path d="M494.3 951.9L498.3 947.9" stroke="#ffffff" stroke-width="1.1"/><path d="M499.6 951.9L503.6 947.9" stroke="#ffffff" stroke-width="1.1"/><path d="M505.0 951.9L509.0 947.9" stroke="#ffffff" stroke-width="1.1"/><path d="M567.1 918.5H584.1" stroke="#00dcdc" stroke-width="1"/><path d="M567.1 928.5H584.1" stroke="#00dcdc" stroke-width="1"/><path d="M570.5 916.4V930.9" stroke="#00dcdc" stroke-width="1"/><path d="M581.5 916.4V930.9" stroke="#00dcdc" stroke-width="1"/><rect x="569.8" y="917.4" width="2" height="2" fill="#00e400"/><rect x="569.8" y="927.9" width="2" height="2" fill="#00e400"/><rect x="580.5" y="917.4" width="2" height="2" fill="#00e400"/><rect x="580.5" y="927.9" width="2" height="2" fill="#00e400"/><path d="M589.1 918.5H609.1" stroke="#00e400" stroke-width="1"/><path d="M589.1 928.5H609.1" stroke="#00e400" stroke-width="1"/><path d="M602.6 920.4L606.6 916.4" stroke="#ffffff" stroke-width="1.1"/><path d="M602.6 925.4L606.6 921.4" stroke="#ffffff" stroke-width="1.1"/><path d="M602.6 930.9L606.6 926.9" stroke="#ffffff" stroke-width="1.1"/><text x="598.1" y="917.4" font-size="8.5" fill="#ffffff" text-anchor="middle" font-family="Liberation Sans" font-weight="normal" transform="rotate(-90 598.1 914.4)" textLength="12" lengthAdjust="spacingAndGlyphs" stroke="#ffffff" stroke-width="0.35">100</text><text x="598.1" y="934.4" font-size="8.5" fill="#ffffff" text-anchor="middle" font-family="Liberation Sans" font-weight="normal" transform="rotate(-90 598.1 931.4)" textLength="12" lengthAdjust="spacingAndGlyphs" stroke="#ffffff" stroke-width="0.35">100</text><path d="M570.5 936.4V954.9" stroke="#00e400" stroke-width="1"/><path d="M581.5 936.4V954.9" stroke="#00e400" stroke-width="1"/><text x="571.6" y="947.4" font-size="8.5" fill="#ffffff" text-anchor="middle" font-family="Liberation Sans" font-weight="normal" textLength="8" lengthAdjust="spacingAndGlyphs" stroke="#ffffff" stroke-width="0.35">90</text><text x="581.6" y="947.4" font-size="8.5" fill="#ffffff" text-anchor="middle" font-family="Liberation Sans" font-weight="normal" textLength="8" lengthAdjust="spacingAndGlyphs" stroke="#ffffff" stroke-width="0.35">90</text><path d="M568.8 951.9L572.8 947.9" stroke="#ffffff" stroke-width="1.1"/><path d="M574.1 951.9L578.1 947.9" stroke="#ffffff" stroke-width="1.1"/><path d="M579.5 951.9L583.5 947.9" stroke="#ffffff" stroke-width="1.1"/><path d="M641.6 918.5H658.6" stroke="#00dcdc" stroke-width="1"/><path d="M641.6 928.5H658.6" stroke="#00dcdc" stroke-width="1"/><path d="M645.5 916.4V930.9" stroke="#00dcdc" stroke-width="1"/><path d="M656.5 916.4V930.9" stroke="#00dcdc" stroke-width="1"/><rect x="644.4" y="917.4" width="2" height="2" fill="#00e400"/><rect x="644.4" y="927.9" width="2" height="2" fill="#00e400"/><rect x="655.0" y="917.4" width="2" height="2" fill="#00e400"/><rect x="655.0" y="927.9" width="2" height="2" fill="#00e400"/><path d="M663.6 918.5H683.6" stroke="#00e400" stroke-width="1"/><path d="M663.6 928.5H683.6" stroke="#00e400" stroke-width="1"/><path d="M677.1 920.4L681.1 916.4" stroke="#ffffff" stroke-width="1.1"/><path d="M677.1 925.4L681.1 921.4" stroke="#ffffff" stroke-width="1.1"/><path d="M677.1 930.9L681.1 926.9" stroke="#ffffff" stroke-width="1.1"/><text x="672.6" y="917.4" font-size="8.5" fill="#ffffff" text-anchor="middle" font-family="Liberation Sans" font-weight="normal" transform="rotate(-90 672.6 914.4)" textLength="12" lengthAdjust="spacingAndGlyphs" stroke="#ffffff" stroke-width="0.35">100</text><text x="672.6" y="934.4" font-size="8.5" fill="#ffffff" text-anchor="middle" font-family="Liberation Sans" font-weight="normal" transform="rotate(-90 672.6 931.4)" textLength="12" lengthAdjust="spacingAndGlyphs" stroke="#ffffff" stroke-width="0.35">100</text><path d="M645.5 936.4V954.9" stroke="#00e400" stroke-width="1"/><path d="M656.5 936.4V954.9" stroke="#00e400" stroke-width="1"/><text x="646.1" y="947.4" font-size="8.5" fill="#ffffff" text-anchor="middle" font-family="Liberation Sans" font-weight="normal" textLength="8" lengthAdjust="spacingAndGlyphs" stroke="#ffffff" stroke-width="0.35">90</text><text x="656.1" y="947.4" font-size="8.5" fill="#ffffff" text-anchor="middle" font-family="Liberation Sans" font-weight="normal" textLength="8" lengthAdjust="spacingAndGlyphs" stroke="#ffffff" stroke-width="0.35">90</text><path d="M643.4 951.9L647.4 947.9" stroke="#ffffff" stroke-width="1.1"/><path d="M648.6 951.9L652.6 947.9" stroke="#ffffff" stroke-width="1.1"/><path d="M654.0 951.9L658.0 947.9" stroke="#ffffff" stroke-width="1.1"/><path d="M716.2 918.5H733.2" stroke="#00dcdc" stroke-width="1"/><path d="M716.2 928.5H733.2" stroke="#00dcdc" stroke-width="1"/><path d="M719.5 916.4V930.9" stroke="#00dcdc" stroke-width="1"/><path d="M730.5 916.4V930.9" stroke="#00dcdc" stroke-width="1"/><rect x="718.9" y="917.4" width="2" height="2" fill="#00e400"/><rect x="718.9" y="927.9" width="2" height="2" fill="#00e400"/><rect x="729.6" y="917.4" width="2" height="2" fill="#00e400"/><rect x="729.6" y="927.9" width="2" height="2" fill="#00e400"/><path d="M738.2 918.5H758.2" stroke="#00e400" stroke-width="1"/><path d="M738.2 928.5H758.2" stroke="#00e400" stroke-width="1"/><path d="M751.7 920.4L755.7 916.4" stroke="#ffffff" stroke-width="1.1"/><path d="M751.7 925.4L755.7 921.4" stroke="#ffffff" stroke-width="1.1"/><path d="M751.7 930.9L755.7 926.9" stroke="#ffffff" stroke-width="1.1"/><text x="747.2" y="917.4" font-size="8.5" fill="#ffffff" text-anchor="middle" font-family="Liberation Sans" font-weight="normal" transform="rotate(-90 747.2 914.4)" textLength="12" lengthAdjust="spacingAndGlyphs" stroke="#ffffff" stroke-width="0.35">100</text><text x="747.2" y="934.4" font-size="8.5" fill="#ffffff" text-anchor="middle" font-family="Liberation Sans" font-weight="normal" transform="rotate(-90 747.2 931.4)" textLength="12" lengthAdjust="spacingAndGlyphs" stroke="#ffffff" stroke-width="0.35">100</text><path d="M719.5 936.4V954.9" stroke="#00e400" stroke-width="1"/><path d="M730.5 936.4V954.9" stroke="#00e400" stroke-width="1"/><text x="720.7" y="947.4" font-size="8.5" fill="#ffffff" text-anchor="middle" font-family="Liberation Sans" font-weight="normal" textLength="8" lengthAdjust="spacingAndGlyphs" stroke="#ffffff" stroke-width="0.35">90</text><text x="730.7" y="947.4" font-size="8.5" fill="#ffffff" text-anchor="middle" font-family="Liberation Sans" font-weight="normal" textLength="8" lengthAdjust="spacingAndGlyphs" stroke="#ffffff" stroke-width="0.35">90</text><path d="M717.9 951.9L721.9 947.9" stroke="#ffffff" stroke-width="1.1"/><path d="M723.2 951.9L727.2 947.9" stroke="#ffffff" stroke-width="1.1"/><path d="M728.6 951.9L732.6 947.9" stroke="#ffffff" stroke-width="1.1"/><path d="M790.7 918.5H807.7" stroke="#00dcdc" stroke-width="1"/><path d="M790.7 928.5H807.7" stroke="#00dcdc" stroke-width="1"/><path d="M794.5 916.4V930.9" stroke="#00dcdc" stroke-width="1"/><path d="M805.5 916.4V930.9" stroke="#00dcdc" stroke-width="1"/><rect x="793.4" y="917.4" width="2" height="2" fill="#00e400"/><rect x="793.4" y="927.9" width="2" height="2" fill="#00e400"/><rect x="804.1" y="917.4" width="2" height="2" fill="#00e400"/><rect x="804.1" y="927.9" width="2" height="2" fill="#00e400"/><path d="M812.7 918.5H832.7" stroke="#00e400" stroke-width="1"/><path d="M812.7 928.5H832.7" stroke="#00e400" stroke-width="1"/><path d="M826.2 920.4L830.2 916.4" stroke="#ffffff" stroke-width="1.1"/><path d="M826.2 925.4L830.2 921.4" stroke="#ffffff" stroke-width="1.1"/><path d="M826.2 930.9L830.2 926.9" stroke="#ffffff" stroke-width="1.1"/><text x="821.7" y="917.4" font-size="8.5" fill="#ffffff" text-anchor="middle" font-family="Liberation Sans" font-weight="normal" transform="rotate(-90 821.7 914.4)" textLength="12" lengthAdjust="spacingAndGlyphs" stroke="#ffffff" stroke-width="0.35">100</text><text x="821.7" y="934.4" font-size="8.5" fill="#ffffff" text-anchor="middle" font-family="Liberation Sans" font-weight="normal" transform="rotate(-90 821.7 931.4)" textLength="12" lengthAdjust="spacingAndGlyphs" stroke="#ffffff" stroke-width="0.35">100</text><path d="M794.5 936.4V954.9" stroke="#00e400" stroke-width="1"/><path d="M805.5 936.4V954.9" stroke="#00e400" stroke-width="1"/><text x="795.2" y="947.4" font-size="8.5" fill="#ffffff" text-anchor="middle" font-family="Liberation Sans" font-weight="normal" textLength="8" lengthAdjust="spacingAndGlyphs" stroke="#ffffff" stroke-width="0.35">90</text><text x="805.2" y="947.4" font-size="8.5" fill="#ffffff" text-anchor="middle" font-family="Liberation Sans" font-weight="normal" textLength="8" lengthAdjust="spacingAndGlyphs" stroke="#ffffff" stroke-width="0.35">90</text><path d="M792.4 951.9L796.4 947.9" stroke="#ffffff" stroke-width="1.1"/><path d="M797.7 951.9L801.7 947.9" stroke="#ffffff" stroke-width="1.1"/><path d="M803.1 951.9L807.1 947.9" stroke="#ffffff" stroke-width="1.1"/><path d="M269.0 1012.5H286.0" stroke="#00dcdc" stroke-width="1"/><path d="M269.0 1031.5H286.0" stroke="#00dcdc" stroke-width="1"/><path d="M272.5 1010.0V1033.0" stroke="#00dcdc" stroke-width="1"/><path d="M283.5 1010.0V1033.0" stroke="#00dcdc" stroke-width="1"/><rect x="271.7" y="1011.0" width="2" height="2" fill="#00e400"/><rect x="271.7" y="1030.0" width="2" height="2" fill="#00e400"/><rect x="282.4" y="1011.0" width="2" height="2" fill="#00e400"/><rect x="282.4" y="1030.0" width="2" height="2" fill="#00e400"/><path d="M291.0 1012.5H313.0" stroke="#00e400" stroke-width="1"/><path d="M291.0 1031.5H313.0" stroke="#00e400" stroke-width="1"/><path d="M306.5 1014.0L310.5 1010.0" stroke="#ffffff" stroke-width="1.1"/><path d="M306.5 1026.5L310.5 1022.5" stroke="#ffffff" stroke-width="1.1"/><path d="M306.5 1033.0L310.5 1029.0" stroke="#ffffff" stroke-width="1.1"/><text x="302.0" y="1015.6" font-size="8.5" fill="#ffffff" text-anchor="middle" font-family="Liberation Sans" font-weight="normal" transform="rotate(-90 302.0 1012.5)" textLength="12" lengthAdjust="spacingAndGlyphs" stroke="#ffffff" stroke-width="0.35">200</text><text x="302.0" y="1034.1" font-size="8.5" fill="#ffffff" text-anchor="middle" font-family="Liberation Sans" font-weight="normal" transform="rotate(-90 302.0 1031.0)" textLength="12" lengthAdjust="spacingAndGlyphs" stroke="#ffffff" stroke-width="0.35">100</text><path d="M272.5 1036.0V1064.0" stroke="#00e400" stroke-width="1"/><path d="M283.5 1036.0V1064.0" stroke="#00e400" stroke-width="1"/><text x="273.5" y="1057.6" font-size="8.5" fill="#ffffff" text-anchor="middle" font-family="Liberation Sans" font-weight="normal" textLength="8" lengthAdjust="spacingAndGlyphs" stroke="#ffffff" stroke-width="0.35">90</text><text x="283.5" y="1057.6" font-size="8.5" fill="#ffffff" text-anchor="middle" font-family="Liberation Sans" font-weight="normal" textLength="8" lengthAdjust="spacingAndGlyphs" stroke="#ffffff" stroke-width="0.35">90</text><path d="M270.7 1062.0L274.7 1058.0" stroke="#ffffff" stroke-width="1.1"/><path d="M276.0 1062.0L280.0 1058.0" stroke="#ffffff" stroke-width="1.1"/><path d="M281.4 1062.0L285.4 1058.0" stroke="#ffffff" stroke-width="1.1"/><path d="M343.5 1012.5H360.5" stroke="#00dcdc" stroke-width="1"/><path d="M343.5 1031.5H360.5" stroke="#00dcdc" stroke-width="1"/><path d="M347.5 1010.0V1033.0" stroke="#00dcdc" stroke-width="1"/><path d="M357.5 1010.0V1033.0" stroke="#00dcdc" stroke-width="1"/><rect x="346.2" y="1011.0" width="2" height="2" fill="#00e400"/><rect x="346.2" y="1030.0" width="2" height="2" fill="#00e400"/><rect x="356.9" y="1011.0" width="2" height="2" fill="#00e400"/><rect x="356.9" y="1030.0" width="2" height="2" fill="#00e400"/><path d="M365.5 1012.5H387.5" stroke="#00e400" stroke-width="1"/><path d="M365.5 1031.5H387.5" stroke="#00e400" stroke-width="1"/><path d="M381.0 1014.0L385.0 1010.0" stroke="#ffffff" stroke-width="1.1"/><path d="M381.0 1026.5L385.0 1022.5" stroke="#ffffff" stroke-width="1.1"/><path d="M381.0 1033.0L385.0 1029.0" stroke="#ffffff" stroke-width="1.1"/><text x="376.5" y="1015.6" font-size="8.5" fill="#ffffff" text-anchor="middle" font-family="Liberation Sans" font-weight="normal" transform="rotate(-90 376.5 1012.5)" textLength="12" lengthAdjust="spacingAndGlyphs" stroke="#ffffff" stroke-width="0.35">200</text><text x="376.5" y="1034.1" font-size="8.5" fill="#ffffff" text-anchor="middle" font-family="Liberation Sans" font-weight="normal" transform="rotate(-90 376.5 1031.0)" textLength="12" lengthAdjust="spacingAndGlyphs" stroke="#ffffff" stroke-width="0.35">100</text><path d="M347.5 1036.0V1064.0" stroke="#00e400" stroke-width="1"/><path d="M357.5 1036.0V1064.0" stroke="#00e400" stroke-width="1"/><text x="348.0" y="1057.6" font-size="8.5" fill="#ffffff" text-anchor="middle" font-family="Liberation Sans" font-weight="normal" textLength="8" lengthAdjust="spacingAndGlyphs" stroke="#ffffff" stroke-width="0.35">90</text><text x="358.0" y="1057.6" font-size="8.5" fill="#ffffff" text-anchor="middle" font-family="Liberation Sans" font-weight="normal" textLength="8" lengthAdjust="spacingAndGlyphs" stroke="#ffffff" stroke-width="0.35">90</text><path d="M345.2 1062.0L349.2 1058.0" stroke="#ffffff" stroke-width="1.1"/><path d="M350.5 1062.0L354.5 1058.0" stroke="#ffffff" stroke-width="1.1"/><path d="M355.9 1062.0L359.9 1058.0" stroke="#ffffff" stroke-width="1.1"/><path d="M418.1 1012.5H435.1" stroke="#00dcdc" stroke-width="1"/><path d="M418.1 1031.5H435.1" stroke="#00dcdc" stroke-width="1"/><path d="M421.5 1010.0V1033.0" stroke="#00dcdc" stroke-width="1"/><path d="M432.5 1010.0V1033.0" stroke="#00dcdc" stroke-width="1"/><rect x="420.8" y="1011.0" width="2" height="2" fill="#00e400"/><rect x="420.8" y="1030.0" width="2" height="2" fill="#00e400"/><rect x="431.5" y="1011.0" width="2" height="2" fill="#00e400"/><rect x="431.5" y="1030.0" width="2" height="2" fill="#00e400"/><path d="M440.1 1012.5H462.1" stroke="#00e400" stroke-width="1"/><path d="M440.1 1031.5H462.1" stroke="#00e400" stroke-width="1"/><path d="M455.6 1014.0L459.6 1010.0" stroke="#ffffff" stroke-width="1.1"/><path d="M455.6 1026.5L459.6 1022.5" stroke="#ffffff" stroke-width="1.1"/><path d="M455.6 1033.0L459.6 1029.0" stroke="#ffffff" stroke-width="1.1"/><text x="451.1" y="1015.6" font-size="8.5" fill="#ffffff" text-anchor="middle" font-family="Liberation Sans" font-weight="normal" transform="rotate(-90 451.1 1012.5)" textLength="12" lengthAdjust="spacingAndGlyphs" stroke="#ffffff" stroke-width="0.35">200</text><text x="451.1" y="1034.1" font-size="8.5" fill="#ffffff" text-anchor="middle" font-family="Liberation Sans" font-weight="normal" transform="rotate(-90 451.1 1031.0)" textLength="12" lengthAdjust="spacingAndGlyphs" stroke="#ffffff" stroke-width="0.35">100</text><path d="M421.5 1036.0V1064.0" stroke="#00e400" stroke-width="1"/><path d="M432.5 1036.0V1064.0" stroke="#00e400" stroke-width="1"/><text x="422.6" y="1057.6" font-size="8.5" fill="#ffffff" text-anchor="middle" font-family="Liberation Sans" font-weight="normal" textLength="8" lengthAdjust="spacingAndGlyphs" stroke="#ffffff" stroke-width="0.35">90</text><text x="432.6" y="1057.6" font-size="8.5" fill="#ffffff" text-anchor="middle" font-family="Liberation Sans" font-weight="normal" textLength="8" lengthAdjust="spacingAndGlyphs" stroke="#ffffff" stroke-width="0.35">90</text><path d="M419.8 1062.0L423.8 1058.0" stroke="#ffffff" stroke-width="1.1"/><path d="M425.1 1062.0L429.1 1058.0" stroke="#ffffff" stroke-width="1.1"/><path d="M430.5 1062.0L434.5 1058.0" stroke="#ffffff" stroke-width="1.1"/><path d="M492.6 1012.5H509.6" stroke="#00dcdc" stroke-width="1"/><path d="M492.6 1031.5H509.6" stroke="#00dcdc" stroke-width="1"/><path d="M496.5 1010.0V1033.0" stroke="#00dcdc" stroke-width="1"/><path d="M506.5 1010.0V1033.0" stroke="#00dcdc" stroke-width="1"/><rect x="495.3" y="1011.0" width="2" height="2" fill="#00e400"/><rect x="495.3" y="1030.0" width="2" height="2" fill="#00e400"/><rect x="506.0" y="1011.0" width="2" height="2" fill="#00e400"/><rect x="506.0" y="1030.0" width="2" height="2" fill="#00e400"/><path d="M514.6 1012.5H536.6" stroke="#00e400" stroke-width="1"/><path d="M514.6 1031.5H536.6" stroke="#00e400" stroke-width="1"/><path d="M530.1 1014.0L534.1 1010.0" stroke="#ffffff" stroke-width="1.1"/><path d="M530.1 1026.5L534.1 1022.5" stroke="#ffffff" stroke-width="1.1"/><path d="M530.1 1033.0L534.1 1029.0" stroke="#ffffff" stroke-width="1.1"/><text x="525.6" y="1015.6" font-size="8.5" fill="#ffffff" text-anchor="middle" font-family="Liberation Sans" font-weight="normal" transform="rotate(-90 525.6 1012.5)" textLength="12" lengthAdjust="spacingAndGlyphs" stroke="#ffffff" stroke-width="0.35">200</text><text x="525.6" y="1034.1" font-size="8.5" fill="#ffffff" text-anchor="middle" font-family="Liberation Sans" font-weight="normal" transform="rotate(-90 525.6 1031.0)" textLength="12" lengthAdjust="spacingAndGlyphs" stroke="#ffffff" stroke-width="0.35">100</text><path d="M496.5 1036.0V1064.0" stroke="#00e400" stroke-width="1"/><path d="M506.5 1036.0V1064.0" stroke="#00e400" stroke-width="1"/><text x="497.1" y="1057.6" font-size="8.5" fill="#ffffff" text-anchor="middle" font-family="Liberation Sans" font-weight="normal" textLength="8" lengthAdjust="spacingAndGlyphs" stroke="#ffffff" stroke-width="0.35">90</text><text x="507.1" y="1057.6" font-size="8.5" fill="#ffffff" text-anchor="middle" font-family="Liberation Sans" font-weight="normal" textLength="8" lengthAdjust="spacingAndGlyphs" stroke="#ffffff" stroke-width="0.35">90</text><path d="M494.3 1062.0L498.3 1058.0" stroke="#ffffff" stroke-width="1.1"/><path d="M499.6 1062.0L503.6 1058.0" stroke="#ffffff" stroke-width="1.1"/><path d="M505.0 1062.0L509.0 1058.0" stroke="#ffffff" stroke-width="1.1"/><path d="M567.1 1012.5H584.1" stroke="#00dcdc" stroke-width="1"/><path d="M567.1 1031.5H584.1" stroke="#00dcdc" stroke-width="1"/><path d="M570.5 1010.0V1033.0" stroke="#00dcdc" stroke-width="1"/><path d="M581.5 1010.0V1033.0" stroke="#00dcdc" stroke-width="1"/><rect x="569.8" y="1011.0" width="2" height="2" fill="#00e400"/><rect x="569.8" y="1030.0" width="2" height="2" fill="#00e400"/><rect x="580.5" y="1011.0" width="2" height="2" fill="#00e400"/><rect x="580.5" y="1030.0" width="2" height="2" fill="#00e400"/><path d="M589.1 1012.5H611.1" stroke="#00e400" stroke-width="1"/><path d="M589.1 1031.5H611.1" stroke="#00e400" stroke-width="1"/><path d="M604.6 1014.0L608.6 1010.0" stroke="#ffffff" stroke-width="1.1"/><path d="M604.6 1026.5L608.6 1022.5" stroke="#ffffff" stroke-width="1.1"/><path d="M604.6 1033.0L608.6 1029.0" stroke="#ffffff" stroke-width="1.1"/><text x="600.1" y="1015.6" font-size="8.5" fill="#ffffff" text-anchor="middle" font-family="Liberation Sans" font-weight="normal" transform="rotate(-90 600.1 1012.5)" textLength="12" lengthAdjust="spacingAndGlyphs" stroke="#ffffff" stroke-width="0.35">200</text><text x="600.1" y="1034.1" font-size="8.5" fill="#ffffff" text-anchor="middle" font-family="Liberation Sans" font-weight="normal" transform="rotate(-90 600.1 1031.0)" textLength="12" lengthAdjust="spacingAndGlyphs" stroke="#ffffff" stroke-width="0.35">100</text><path d="M570.5 1036.0V1064.0" stroke="#00e400" stroke-width="1"/><path d="M581.5 1036.0V1064.0" stroke="#00e400" stroke-width="1"/><text x="571.6" y="1057.6" font-size="8.5" fill="#ffffff" text-anchor="middle" font-family="Liberation Sans" font-weight="normal" textLength="8" lengthAdjust="spacingAndGlyphs" stroke="#ffffff" stroke-width="0.35">90</text><text x="581.6" y="1057.6" font-size="8.5" fill="#ffffff" text-anchor="middle" font-family="Liberation Sans" font-weight="normal" textLength="8" lengthAdjust="spacingAndGlyphs" stroke="#ffffff" stroke-width="0.35">90</text><path d="M568.8 1062.0L572.8 1058.0" stroke="#ffffff" stroke-width="1.1"/><path d="M574.1 1062.0L578.1 1058.0" stroke="#ffffff" stroke-width="1.1"/><path d="M579.5 1062.0L583.5 1058.0" stroke="#ffffff" stroke-width="1.1"/><path d="M641.6 1012.5H658.6" stroke="#00dcdc" stroke-width="1"/><path d="M641.6 1031.5H658.6" stroke="#00dcdc" stroke-width="1"/><path d="M645.5 1010.0V1033.0" stroke="#00dcdc" stroke-width="1"/><path d="M656.5 1010.0V1033.0" stroke="#00dcdc" stroke-width="1"/><rect x="644.4" y="1011.0" width="2" height="2" fill="#00e400"/><rect x="644.4" y="1030.0" width="2" height="2" fill="#00e400"/><rect x="655.0" y="1011.0" width="2" height="2" fill="#00e400"/><rect x="655.0" y="1030.0" width="2" height="2" fill="#00e400"/><path d="M663.6 1012.5H685.6" stroke="#00e400" stroke-width="1"/><path d="M663.6 1031.5H685.6" stroke="#00e400" stroke-width="1"/><path d="M679.1 1014.0L683.1 1010.0" stroke="#ffffff" stroke-width="1.1"/><path d="M679.1 1026.5L683.1 1022.5" stroke="#ffffff" stroke-width="1.1"/><path d="M679.1 1033.0L683.1 1029.0" stroke="#ffffff" stroke-width="1.1"/><text x="674.6" y="1015.6" font-size="8.5" fill="#ffffff" text-anchor="middle" font-family="Liberation Sans" font-weight="normal" transform="rotate(-90 674.6 1012.5)" textLength="12" lengthAdjust="spacingAndGlyphs" stroke="#ffffff" stroke-width="0.35">200</text><text x="674.6" y="1034.1" font-size="8.5" fill="#ffffff" text-anchor="middle" font-family="Liberation Sans" font-weight="normal" transform="rotate(-90 674.6 1031.0)" textLength="12" lengthAdjust="spacingAndGlyphs" stroke="#ffffff" stroke-width="0.35">100</text><path d="M645.5 1036.0V1064.0" stroke="#00e400" stroke-width="1"/><path d="M656.5 1036.0V1064.0" stroke="#00e400" stroke-width="1"/><text x="646.1" y="1057.6" font-size="8.5" fill="#ffffff" text-anchor="middle" font-family="Liberation Sans" font-weight="normal" textLength="8" lengthAdjust="spacingAndGlyphs" stroke="#ffffff" stroke-width="0.35">90</text><text x="656.1" y="1057.6" font-size="8.5" fill="#ffffff" text-anchor="middle" font-family="Liberation Sans" font-weight="normal" textLength="8" lengthAdjust="spacingAndGlyphs" stroke="#ffffff" stroke-width="0.35">90</text><path d="M643.4 1062.0L647.4 1058.0" stroke="#ffffff" stroke-width="1.1"/><path d="M648.6 1062.0L652.6 1058.0" stroke="#ffffff" stroke-width="1.1"/><path d="M654.0 1062.0L658.0 1058.0" stroke="#ffffff" stroke-width="1.1"/><path d="M716.2 1012.5H733.2" stroke="#00dcdc" stroke-width="1"/><path d="M716.2 1031.5H733.2" stroke="#00dcdc" stroke-width="1"/><path d="M719.5 1010.0V1033.0" stroke="#00dcdc" stroke-width="1"/><path d="M730.5 1010.0V1033.0" stroke="#00dcdc" stroke-width="1"/><rect x="718.9" y="1011.0" width="2" height="2" fill="#00e400"/><rect x="718.9" y="1030.0" width="2" height="2" fill="#00e400"/><rect x="729.6" y="1011.0" width="2" height="2" fill="#00e400"/><rect x="729.6" y="1030.0" width="2" height="2" fill="#00e400"/><path d="M738.2 1012.5H760.2" stroke="#00e400" stroke-width="1"/><path d="M738.2 1031.5H760.2" stroke="#00e400" stroke-width="1"/><path d="M753.7 1014.0L757.7 1010.0" stroke="#ffffff" stroke-width="1.1"/><path d="M753.7 1026.5L757.7 1022.5" stroke="#ffffff" stroke-width="1.1"/><path d="M753.7 1033.0L757.7 1029.0" stroke="#ffffff" stroke-width="1.1"/><text x="749.2" y="1015.6" font-size="8.5" fill="#ffffff" text-anchor="middle" font-family="Liberation Sans" font-weight="normal" transform="rotate(-90 749.2 1012.5)" textLength="12" lengthAdjust="spacingAndGlyphs" stroke="#ffffff" stroke-width="0.35">200</text><text x="749.2" y="1034.1" font-size="8.5" fill="#ffffff" text-anchor="middle" font-family="Liberation Sans" font-weight="normal" transform="rotate(-90 749.2 1031.0)" textLength="12" lengthAdjust="spacingAndGlyphs" stroke="#ffffff" stroke-width="0.35">100</text><path d="M719.5 1036.0V1064.0" stroke="#00e400" stroke-width="1"/><path d="M730.5 1036.0V1064.0" stroke="#00e400" stroke-width="1"/><text x="720.7" y="1057.6" font-size="8.5" fill="#ffffff" text-anchor="middle" font-family="Liberation Sans" font-weight="normal" textLength="8" lengthAdjust="spacingAndGlyphs" stroke="#ffffff" stroke-width="0.35">90</text><text x="730.7" y="1057.6" font-size="8.5" fill="#ffffff" text-anchor="middle" font-family="Liberation Sans" font-weight="normal" textLength="8" lengthAdjust="spacingAndGlyphs" stroke="#ffffff" stroke-width="0.35">90</text><path d="M717.9 1062.0L721.9 1058.0" stroke="#ffffff" stroke-width="1.1"/><path d="M723.2 1062.0L727.2 1058.0" stroke="#ffffff" stroke-width="1.1"/><path d="M728.6 1062.0L732.6 1058.0" stroke="#ffffff" stroke-width="1.1"/><path d="M790.7 1012.5H807.7" stroke="#00dcdc" stroke-width="1"/><path d="M790.7 1031.5H807.7" stroke="#00dcdc" stroke-width="1"/><path d="M794.5 1010.0V1033.0" stroke="#00dcdc" stroke-width="1"/><path d="M805.5 1010.0V1033.0" stroke="#00dcdc" stroke-width="1"/><rect x="793.4" y="1011.0" width="2" height="2" fill="#00e400"/><rect x="793.4" y="1030.0" width="2" height="2" fill="#00e400"/><rect x="804.1" y="1011.0" width="2" height="2" fill="#00e400"/><rect x="804.1" y="1030.0" width="2" height="2" fill="#00e400"/><path d="M812.7 1012.5H834.7" stroke="#00e400" stroke-width="1"/><path d="M812.7 1031.5H834.7" stroke="#00e400" stroke-width="1"/><path d="M828.2 1014.0L832.2 1010.0" stroke="#ffffff" stroke-width="1.1"/><path d="M828.2 1026.5L832.2 1022.5" stroke="#ffffff" stroke-width="1.1"/><path d="M828.2 1033.0L832.2 1029.0" stroke="#ffffff" stroke-width="1.1"/><text x="823.7" y="1015.6" font-size="8.5" fill="#ffffff" text-anchor="middle" font-family="Liberation Sans" font-weight="normal" transform="rotate(-90 823.7 1012.5)" textLength="12" lengthAdjust="spacingAndGlyphs" stroke="#ffffff" stroke-width="0.35">200</text><text x="823.7" y="1034.1" font-size="8.5" fill="#ffffff" text-anchor="middle" font-family="Liberation Sans" font-weight="normal" transform="rotate(-90 823.7 1031.0)" textLength="12" lengthAdjust="spacingAndGlyphs" stroke="#ffffff" stroke-width="0.35">100</text><path d="M794.5 1036.0V1064.0" stroke="#00e400" stroke-width="1"/><path d="M805.5 1036.0V1064.0" stroke="#00e400" stroke-width="1"/><text x="795.2" y="1057.6" font-size="8.5" fill="#ffffff" text-anchor="middle" font-family="Liberation Sans" font-weight="normal" textLength="8" lengthAdjust="spacingAndGlyphs" stroke="#ffffff" stroke-width="0.35">90</text><text x="805.2" y="1057.6" font-size="8.5" fill="#ffffff" text-anchor="middle" font-family="Liberation Sans" font-weight="normal" textLength="8" lengthAdjust="spacingAndGlyphs" stroke="#ffffff" stroke-width="0.35">90</text><path d="M792.4 1062.0L796.4 1058.0" stroke="#ffffff" stroke-width="1.1"/><path d="M797.7 1062.0L801.7 1058.0" stroke="#ffffff" stroke-width="1.1"/><path d="M803.1 1062.0L807.1 1058.0" stroke="#ffffff" stroke-width="1.1"/><path d="M242.5 576.0V886.5" stroke="#00e400" stroke-width="1"/><path d="M240.0 578.0L244.0 574.0" stroke="#ffffff" stroke-width="1.1"/><path d="M240.0 621.8L244.0 617.8" stroke="#ffffff" stroke-width="1.1"/><path d="M240.0 665.6L244.0 661.6" stroke="#ffffff" stroke-width="1.1"/><path d="M240.0 722.8L244.0 718.8" stroke="#ffffff" stroke-width="1.1"/><path d="M240.0 753.3L244.0 749.3" stroke="#ffffff" stroke-width="1.1"/><path d="M240.0 757.2L244.0 753.2" stroke="#ffffff" stroke-width="1.1"/><path d="M240.0 791.8L244.0 787.8" stroke="#ffffff" stroke-width="1.1"/><path d="M240.0 824.2L244.0 820.2" stroke="#ffffff" stroke-width="1.1"/><path d="M240.0 857.5L244.0 853.5" stroke="#ffffff" stroke-width="1.1"/><path d="M240.0 888.5L244.0 884.5" stroke="#ffffff" stroke-width="1.1"/><text x="237.5" y="601.0" font-size="8.5" fill="#ffffff" text-anchor="middle" font-family="Liberation Sans" font-weight="normal" transform="rotate(-90 237.5 597.9)" textLength="15" lengthAdjust="spacingAndGlyphs" stroke="#ffffff" stroke-width="0.35">4100</text><text x="237.5" y="644.8" font-size="8.5" fill="#ffffff" text-anchor="middle" font-family="Liberation Sans" font-weight="normal" transform="rotate(-90 237.5 641.7)" textLength="15" lengthAdjust="spacingAndGlyphs" stroke="#ffffff" stroke-width="0.35">4100</text><text x="237.5" y="695.1" font-size="8.5" fill="#ffffff" text-anchor="middle" font-family="Liberation Sans" font-weight="normal" transform="rotate(-90 237.5 692.0)" textLength="15" lengthAdjust="spacingAndGlyphs" stroke="#ffffff" stroke-width="0.35">5400</text><text x="237.5" y="739.1" font-size="8.5" fill="#ffffff" text-anchor="middle" font-family="Liberation Sans" font-weight="normal" transform="rotate(-90 237.5 736.0)" textLength="15" lengthAdjust="spacingAndGlyphs" stroke="#ffffff" stroke-width="0.35">2850</text><text x="237.5" y="775.6" font-size="8.5" fill="#ffffff" text-anchor="middle" font-family="Liberation Sans" font-weight="normal" transform="rotate(-90 237.5 772.5)" textLength="15" lengthAdjust="spacingAndGlyphs" stroke="#ffffff" stroke-width="0.35">3550</text><text x="237.5" y="809.1" font-size="8.5" fill="#ffffff" text-anchor="middle" font-family="Liberation Sans" font-weight="normal" transform="rotate(-90 237.5 806.0)" textLength="15" lengthAdjust="spacingAndGlyphs" stroke="#ffffff" stroke-width="0.35">3100</text><text x="237.5" y="842.1" font-size="8.5" fill="#ffffff" text-anchor="middle" font-family="Liberation Sans" font-weight="normal" transform="rotate(-90 237.5 839.0)" textLength="15" lengthAdjust="spacingAndGlyphs" stroke="#ffffff" stroke-width="0.35">3100</text><text x="237.5" y="874.1" font-size="8.5" fill="#ffffff" text-anchor="middle" font-family="Liberation Sans" font-weight="normal" transform="rotate(-90 237.5 871.0)" textLength="15" lengthAdjust="spacingAndGlyphs" stroke="#ffffff" stroke-width="0.35">2900</text><text x="252.0" y="755.5" font-size="7" fill="#ffffff" text-anchor="middle" font-family="Liberation Sans" font-weight="normal" transform="rotate(-60 252.0 753.0)" textLength="10" lengthAdjust="spacingAndGlyphs" stroke="#ffffff" stroke-width="0.35">350</text><path d="M237.0 576.5H249.0" stroke="#00e400" stroke-width="1"/><path d="M254.0 576.5H293.0" stroke="#00dcdc" stroke-width="1"/><path d="M237.0 663.5H249.0" stroke="#00e400" stroke-width="1"/><path d="M254.0 663.5H293.0" stroke="#00dcdc" stroke-width="1"/><path d="M237.0 789.5H249.0" stroke="#00e400" stroke-width="1"/><path d="M254.0 789.5H293.0" stroke="#00dcdc" stroke-width="1"/><path d="M237.0 855.5H249.0" stroke="#00e400" stroke-width="1"/><path d="M254.0 855.5H293.0" stroke="#00dcdc" stroke-width="1"/><path d="M237.0 886.5H249.0" stroke="#00e400" stroke-width="1"/><path d="M254.0 886.5H293.0" stroke="#00dcdc" stroke-width="1"/><path d="M237.0 755.5H249.0" stroke="#00e400" stroke-width="1"/><path d="M254.0 755.5H293.0" stroke="#00dcdc" stroke-width="1"/><path d="M237.0 751.5H249.0" stroke="#00e400" stroke-width="1"/><path d="M254.0 751.5H365.0" stroke="#00dcdc" stroke-width="1"/><path d="M276.0 576.0 L292.5 588.3 L320.0 588.3" stroke="#00e400" stroke-width="1.2" fill="none"/><text x="306.2" y="587.4" font-size="8.5" fill="#ffffff" text-anchor="middle" font-family="Liberation Sans" font-weight="normal" textLength="16" lengthAdjust="spacingAndGlyphs" stroke="#ffffff" stroke-width="0.35">M-1</text><text x="312.2" y="596.1" font-size="6.5" fill="#ffffff" text-anchor="middle" font-family="Liberation Sans" font-weight="bold" textLength="32" lengthAdjust="spacingAndGlyphs">门柱预埋件</text><path d="M276.0 663.6 L292.5 675.8 L320.0 675.8" stroke="#00e400" stroke-width="1.2" fill="none"/><text x="306.2" y="674.9" font-size="8.5" fill="#ffffff" text-anchor="middle" font-family="Liberation Sans" font-weight="normal" textLength="16" lengthAdjust="spacingAndGlyphs" stroke="#ffffff" stroke-width="0.35">M-1</text><text x="312.2" y="683.6" font-size="6.5" fill="#ffffff" text-anchor="middle" font-family="Liberation Sans" font-weight="bold" textLength="32" lengthAdjust="spacingAndGlyphs">门柱预埋件</text><path d="M278.0 755.0 L292.5 769.5 L320.0 769.5" stroke="#00e400" stroke-width="1.2" fill="none"/><text x="306.2" y="768.6" font-size="8.5" fill="#ffffff" text-anchor="middle" font-family="Liberation Sans" font-weight="normal" textLength="16" lengthAdjust="spacingAndGlyphs" stroke="#ffffff" stroke-width="0.35">M-1</text><path d="M278.0 755.0 L292.5 796.0 L320.0 796.0" stroke="#00e400" stroke-width="1.2" fill="none"/><path d="M278.0 789.8 L292.5 796.0 L320.0 796.0" stroke="#00e400" stroke-width="1.2" fill="none"/><text x="306.2" y="795.1" font-size="8.5" fill="#ffffff" text-anchor="middle" font-family="Liberation Sans" font-weight="normal" textLength="16" lengthAdjust="spacingAndGlyphs" stroke="#ffffff" stroke-width="0.35">M-1</text><text x="312.2" y="803.8" font-size="6.5" fill="#ffffff" text-anchor="middle" font-family="Liberation Sans" font-weight="bold" textLength="32" lengthAdjust="spacingAndGlyphs">门柱预埋件</text><path d="M278.0 855.5 L292.5 861.5 L320.0 861.5" stroke="#00e400" stroke-width="1.2" fill="none"/><text x="306.2" y="860.6" font-size="8.5" fill="#ffffff" text-anchor="middle" font-family="Liberation Sans" font-weight="normal" textLength="16" lengthAdjust="spacingAndGlyphs" stroke="#ffffff" stroke-width="0.35">M-1</text><text x="312.2" y="869.3" font-size="6.5" fill="#ffffff" text-anchor="middle" font-family="Liberation Sans" font-weight="bold" textLength="32" lengthAdjust="spacingAndGlyphs">门柱预埋件</text><path d="M278.0 886.5 L292.5 898.5 L320.0 898.5" stroke="#00e400" stroke-width="1.2" fill="none"/><text x="306.2" y="897.6" font-size="8.5" fill="#ffffff" text-anchor="middle" font-family="Liberation Sans" font-weight="normal" textLength="16" lengthAdjust="spacingAndGlyphs" stroke="#ffffff" stroke-width="0.35">M-1</text><path d="M352.5 751.3 L367.0 769.5 L395.0 769.5" stroke="#00e400" stroke-width="1.2" fill="none"/><text x="381.0" y="768.6" font-size="8.5" fill="#ffffff" text-anchor="middle" font-family="Liberation Sans" font-weight="normal" textLength="16" lengthAdjust="spacingAndGlyphs" stroke="#ffffff" stroke-width="0.35">M-1</text><text x="264.0" y="687.6" font-size="8.5" fill="#ffffff" text-anchor="middle" font-family="Liberation Sans" font-weight="normal" textLength="13" lengthAdjust="spacingAndGlyphs" stroke="#ffffff" stroke-width="0.35">260</text><text x="276.0" y="776.1" font-size="8.5" fill="#ffffff" text-anchor="middle" font-family="Liberation Sans" font-weight="normal" textLength="13" lengthAdjust="spacingAndGlyphs" stroke="#ffffff" stroke-width="0.35">250</text><text x="267.0" y="873.6" font-size="8.5" fill="#ffffff" text-anchor="middle" font-family="Liberation Sans" font-weight="normal" textLength="13" lengthAdjust="spacingAndGlyphs" stroke="#ffffff" stroke-width="0.35">260</text><path d="M1212.0 286.0 L1242.0 286.0 L1247.0 297.5" stroke="#00e400" stroke-width="1.2" fill="none"/><path d="M1247.0 297.5H1284.0" stroke="#00dcdc" stroke-width="1"/><path d="M1284.0 297.5H1311.0" stroke="#00e400" stroke-width="1"/><path d="M1311.0 297.5 L1316.0 286.0 L1337.0 286.0" stroke="#00e400" stroke-width="1.2" fill="none"/><text x="1227.0" y="284.6" font-size="8.5" fill="#ffffff" text-anchor="middle" font-family="Liberation Sans" font-weight="normal" textLength="16" lengthAdjust="spacingAndGlyphs" stroke="#ffffff" stroke-width="0.35">M-1</text><text x="1326.0" y="284.6" font-size="8.5" fill="#ffffff" text-anchor="middle" font-family="Liberation Sans" font-weight="normal" textLength="16" lengthAdjust="spacingAndGlyphs" stroke="#ffffff" stroke-width="0.35">M-1</text><path d="M1289.5 297.5V316.0" stroke="#00e400" stroke-width="1"/><path d="M1287.0 299.5L1291.0 295.5" stroke="#ffffff" stroke-width="1.1"/><path d="M1287.0 318.0L1291.0 314.0" stroke="#ffffff" stroke-width="1.1"/><text x="1285.0" y="288.1" font-size="8.5" fill="#ffffff" text-anchor="middle" font-family="Liberation Sans" font-weight="normal" transform="rotate(-90 1285.0 285.0)" textLength="16" lengthAdjust="spacingAndGlyphs" stroke="#ffffff" stroke-width="0.35">1800</text><path d="M1362.0 555.5H1401.0" stroke="#00dcdc" stroke-width="1"/><path d="M1407.0 555.5H1434.0" stroke="#00e400" stroke-width="1"/><path d="M1428.5 518.8V555.6" stroke="#00e400" stroke-width="1"/><path d="M1426.0 520.8L1430.0 516.8" stroke="#ffffff" stroke-width="1.1"/><path d="M1426.0 557.6L1430.0 553.6" stroke="#ffffff" stroke-width="1.1"/><text x="1424.0" y="540.1" font-size="8.5" fill="#ffffff" text-anchor="middle" font-family="Liberation Sans" font-weight="normal" transform="rotate(-90 1424.0 537.0)" textLength="15" lengthAdjust="spacingAndGlyphs" stroke="#ffffff" stroke-width="0.35">3460</text><path d="M1386.0 556.0 L1375.0 571.5 L1348.0 571.5" stroke="#00e400" stroke-width="1.2" fill="none"/><text x="1360.0" y="569.6" font-size="8.5" fill="#ffffff" text-anchor="middle" font-family="Liberation Sans" font-weight="normal" textLength="16" lengthAdjust="spacingAndGlyphs" stroke="#ffffff" stroke-width="0.35">M-1</text><rect x="888" y="823" width="4" height="111" fill="#00e400"/><rect x="876.5" y="930" width="15.5" height="4" fill="#00e400"/><path d="M888 823 L888 823.0 L885.5 825.2 L888 827.4 L885.5 829.6 L888 831.8 L885.5 834.0 L888 836.2 L885.5 838.4 L888 840.6 L885.5 842.8 L888 845.0 L885.5 847.2 L888 849.4 L885.5 851.6 L888 853.8" stroke="#00e400" stroke-width="1" fill="none"/><path d="M916.5 823.0V934.0" stroke="#00e400" stroke-width="1"/><path d="M896.0 823.5H922.0" stroke="#00e400" stroke-width="1"/><path d="M892.0 855.5H936.0" stroke="#00e400" stroke-width="1"/><path d="M896.0 933.5H922.0" stroke="#00e400" stroke-width="1"/><path d="M914.6 825.0L918.6 821.0" stroke="#00e400" stroke-width="1.1"/><path d="M914.6 857.4L918.6 853.4" stroke="#00e400" stroke-width="1.1"/><path d="M914.6 935.0L918.6 931.0" stroke="#00e400" stroke-width="1.1"/><text x="912.0" y="844.1" font-size="8.5" fill="#ffffff" text-anchor="middle" font-family="Liberation Sans" font-weight="normal" transform="rotate(-90 912.0 841.0)" textLength="12" lengthAdjust="spacingAndGlyphs" stroke="#ffffff" stroke-width="0.35">250</text><text x="912.0" y="897.1" font-size="8.5" fill="#ffffff" text-anchor="middle" font-family="Liberation Sans" font-weight="normal" transform="rotate(-90 912.0 894.0)" textLength="12" lengthAdjust="spacingAndGlyphs" stroke="#ffffff" stroke-width="0.35">700</text><text x="942.0" y="845.2" font-size="9" fill="#ffffff" text-anchor="middle" font-family="Liberation Sans" font-weight="normal" textLength="28" lengthAdjust="spacingAndGlyphs" stroke="#ffffff" stroke-width="0.35">-0.100</text><path d="M925.0 847.5H964.0" stroke="#00e400" stroke-width="1"/><path d="M925.0 847.0 L936.0 847.0 L931.0 855.0 L925.0 847.0" stroke="#00e400" stroke-width="1.2" fill="none"/><text x="965.0" y="859.0" font-size="7" fill="#ffffff" text-anchor="middle" font-family="Liberation Sans" font-weight="bold" textLength="50" lengthAdjust="spacingAndGlyphs">(基础顶面标高)</text><path d="M877.5 938.0V961.0" stroke="#00e400" stroke-width="1"/><path d="M890.5 938.0V961.0" stroke="#00e400" stroke-width="1"/><path d="M874.0 956.5H894.0" stroke="#00e400" stroke-width="1"/><path d="M875.5 958.5L879.5 954.5" stroke="#00e400" stroke-width="1.1"/><path d="M888.5 958.5L892.5 954.5" stroke="#00e400" stroke-width="1.1"/><text x="884.0" y="954.1" font-size="8.5" fill="#ffffff" text-anchor="middle" font-family="Liberation Sans" font-weight="normal" textLength="12" lengthAdjust="spacingAndGlyphs" stroke="#ffffff" stroke-width="0.35">115</text><text x="889.0" y="985.5" font-size="11" fill="#ffff00" text-anchor="middle" font-family="Liberation Sans" font-weight="bold" textLength="67" lengthAdjust="spacingAndGlyphs">M27锚栓详图</text><rect x="844" y="988" width="93" height="3" fill="#00e400"/><path d="M1059.0 835.5H1096.0" stroke="#00e400" stroke-width="1"/><path d="M1100.0 835.5H1141.0" stroke="#00e400" stroke-width="1"/><path d="M1094.0 835.5 L1096.5 828.0 L1099.0 843.0 L1101.0 835.5" stroke="#00e400" stroke-width="1" fill="none"/><rect x="1069.0" y="836" width="3" height="74" fill="none" stroke="#d8d8d8" stroke-width="0.8"/><rect x="1124.1" y="836" width="3" height="74" fill="none" stroke="#d8d8d8" stroke-width="0.8"/><path d="M1098.5 835.0V955.7" stroke="#00dcdc" stroke-width="1"/><path d="M1083.5 862.0V958.5" stroke="#00dcdc" stroke-width="1"/><path d="M1113.5 862.0V958.5" stroke="#00dcdc" stroke-width="1"/><path d="M1082.5 933.0V952.0" stroke="#00e400" stroke-width="1"/><path d="M1111.5 933.0V952.0" stroke="#00e400" stroke-width="1"/><rect x="1066.5" y="910" width="64" height="4" fill="none" stroke="#e0e0e0" stroke-width="1"/><rect x="1079.4" y="897" width="8" height="13" fill="none" stroke="#d0d0d0" stroke-width="0.8"/><rect x="1081.4" y="894" width="4" height="4" fill="#00e400" opacity="0.7"/><rect x="1109" y="897" width="8" height="13" fill="none" stroke="#d0d0d0" stroke-width="0.8"/><rect x="1111" y="894" width="4" height="4" fill="#00e400" opacity="0.7"/><path d="M1040 910.5 L1157 910.5 L1172 931.4 L1025 931.4 Z" fill="none" stroke="#00e400" stroke-width="1"/><path d="M1104.0 915.8h1.1v1.1h-1.1zM1111.8 918.4h1.1v1.1h-1.1zM1039.6 923.5h1.1v1.1h-1.1zM1138.4 911.3h1.1v1.1h-1.1zM1065.2 916.2h1.1v1.1h-1.1zM1094.1 930.9h1.1v1.1h-1.1zM1095.1 927.7h1.1v1.1h-1.1zM1051.0 923.8h1.1v1.1h-1.1zM1148.5 923.7h1.1v1.1h-1.1zM1130.5 921.5h1.1v1.1h-1.1zM1038.8 924.4h1.1v1.1h-1.1zM1111.2 926.2h1.1v1.1h-1.1zM1039.2 917.0h1.1v1.1h-1.1zM1094.6 928.3h1.1v1.1h-1.1zM1150.9 925.4h1.1v1.1h-1.1zM1156.7 925.3h1.1v1.1h-1.1zM1137.3 918.9h1.1v1.1h-1.1zM1155.3 919.9h1.1v1.1h-1.1zM1041.0 928.6h1.1v1.1h-1.1zM1064.1 913.7h1.1v1.1h-1.1zM1089.2 930.3h1.1v1.1h-1.1zM1071.5 923.5h1.1v1.1h-1.1zM1083.4 921.1h1.1v1.1h-1.1zM1109.4 918.0h1.1v1.1h-1.1zM1152.9 922.7h1.1v1.1h-1.1zM1157.4 924.6h1.1v1.1h-1.1zM1168.4 928.1h1.1v1.1h-1.1zM1052.3 924.4h1.1v1.1h-1.1zM1164.7 928.2h1.1v1.1h-1.1zM1108.4 929.1h1.1v1.1h-1.1zM1058.6 925.3h1.1v1.1h-1.1zM1108.9 927.6h1.1v1.1h-1.1zM1043.5 916.7h1.1v1.1h-1.1zM1168.2 928.1h1.1v1.1h-1.1zM1134.6 912.8h1.1v1.1h-1.1zM1053.3 919.2h1.1v1.1h-1.1zM1132.4 916.9h1.1v1.1h-1.1zM1033.4 928.5h1.1v1.1h-1.1zM1036.9 923.3h1.1v1.1h-1.1zM1075.1 925.4h1.1v1.1h-1.1zM1167.2 928.6h1.1v1.1h-1.1zM1164.4 921.1h1.1v1.1h-1.1zM1044.9 917.2h1.1v1.1h-1.1zM1035.3 923.0h1.1v1.1h-1.1zM1087.1 914.9h1.1v1.1h-1.1zM1052.0 923.2h1.1v1.1h-1.1zM1142.2 911.8h1.1v1.1h-1.1zM1156.6 917.3h1.1v1.1h-1.1zM1081.0 928.9h1.1v1.1h-1.1zM1101.1 920.2h1.1v1.1h-1.1zM1111.5 923.9h1.1v1.1h-1.1zM1114.6 922.2h1.1v1.1h-1.1zM1099.5 929.8h1.1v1.1h-1.1zM1127.2 919.6h1.1v1.1h-1.1zM1073.7 915.8h1.1v1.1h-1.1zM1101.6 930.6h1.1v1.1h-1.1zM1033.3 922.0h1.1v1.1h-1.1zM1108.9 919.3h1.1v1.1h-1.1zM1112.2 911.4h1.1v1.1h-1.1zM1038.7 923.6h1.1v1.1h-1.1zM1093.9 923.5h1.1v1.1h-1.1zM1078.3 924.6h1.1v1.1h-1.1zM1131.4 925.1h1.1v1.1h-1.1zM1046.5 911.4h1.1v1.1h-1.1zM1162.0 924.5h1.1v1.1h-1.1zM1093.0 916.0h1.1v1.1h-1.1zM1074.3 922.9h1.1v1.1h-1.1zM1074.5 918.3h1.1v1.1h-1.1zM1110.8 918.4h1.1v1.1h-1.1zM1083.0 917.0h1.1v1.1h-1.1zM1032.3 926.4h1.1v1.1h-1.1zM1130.0 922.4h1.1v1.1h-1.1zM1063.4 917.2h1.1v1.1h-1.1zM1061.7 927.1h1.1v1.1h-1.1zM1090.5 914.7h1.1v1.1h-1.1zM1043.7 925.0h1.1v1.1h-1.1zM1077.4 917.4h1.1v1.1h-1.1zM1089.8 927.7h1.1v1.1h-1.1zM1051.4 928.1h1.1v1.1h-1.1zM1117.6 917.7h1.1v1.1h-1.1zM1091.5 928.7h1.1v1.1h-1.1zM1051.4 915.5h1.1v1.1h-1.1zM1057.4 921.6h1.1v1.1h-1.1zM1146.2 927.1h1.1v1.1h-1.1zM1071.3 914.7h1.1v1.1h-1.1zM1118.5 927.1h1.1v1.1h-1.1zM1076.7 927.1h1.1v1.1h-1.1zM1073.2 913.6h1.1v1.1h-1.1zM1066.3 926.9h1.1v1.1h-1.1zM1087.9 917.9h1.1v1.1h-1.1zM1086.8 919.4h1.1v1.1h-1.1zM1048.9 929.4h1.1v1.1h-1.1zM1150.7 911.1h1.1v1.1h-1.1zM1168.1 928.6h1.1v1.1h-1.1zM1157.1 919.7h1.1v1.1h-1.1zM1058.4 929.5h1.1v1.1h-1.1zM1145.3 925.9h1.1v1.1h-1.1zM1101.1 924.3h1.1v1.1h-1.1zM1078.5 916.8h1.1v1.1h-1.1zM1044.8 915.5h1.1v1.1h-1.1zM1069.8 922.8h1.1v1.1h-1.1zM1034.4 927.2h1.1v1.1h-1.1zM1126.3 929.1h1.1v1.1h-1.1zM1155.7 929.5h1.1v1.1h-1.1zM1109.5 929.0h1.1v1.1h-1.1zM1127.5 911.3h1.1v1.1h-1.1zM1074.0 914.4h1.1v1.1h-1.1zM1101.9 924.3h1.1v1.1h-1.1zM1155.4 919.3h1.1v1.1h-1.1zM1077.0 923.2h1.1v1.1h-1.1zM1143.7 916.0h1.1v1.1h-1.1zM1135.6 920.5h1.1v1.1h-1.1zM1059.8 918.0h1.1v1.1h-1.1zM1140.7 921.7h1.1v1.1h-1.1zM1134.3 914.4h1.1v1.1h-1.1zM1142.6 929.4h1.1v1.1h-1.1zM1028.9 927.5h1.1v1.1h-1.1zM1147.7 923.6h1.1v1.1h-1.1zM1071.3 912.0h1.1v1.1h-1.1zM1101.9 916.4h1.1v1.1h-1.1zM1095.0 919.5h1.1v1.1h-1.1zM1028.7 926.5h1.1v1.1h-1.1zM1054.0 912.1h1.1v1.1h-1.1zM1046.2 913.5h1.1v1.1h-1.1zM1150.1 930.5h1.1v1.1h-1.1zM1098.8 912.7h1.1v1.1h-1.1zM1075.0 917.3h1.1v1.1h-1.1zM1117.3 918.0h1.1v1.1h-1.1zM1079.8 922.7h1.1v1.1h-1.1zM1077.4 914.8h1.1v1.1h-1.1zM1105.2 913.5h1.1v1.1h-1.1zM1081.9 925.3h1.1v1.1h-1.1zM1059.9 912.6h1.1v1.1h-1.1zM1111.9 918.5h1.1v1.1h-1.1zM1081.7 926.7h1.1v1.1h-1.1zM1115.8 927.0h1.1v1.1h-1.1zM1081.9 919.6h1.1v1.1h-1.1zM1125.3 920.9h1.1v1.1h-1.1zM1123.7 919.4h1.1v1.1h-1.1zM1065.1 920.2h1.1v1.1h-1.1zM1124.5 921.7h1.1v1.1h-1.1zM1089.5 912.4h1.1v1.1h-1.1zM1147.8 919.5h1.1v1.1h-1.1zM1080.3 929.7h1.1v1.1h-1.1zM1140.2 929.0h1.1v1.1h-1.1zM1094.0 916.2h1.1v1.1h-1.1zM1136.5 913.5h1.1v1.1h-1.1zM1151.5 924.2h1.1v1.1h-1.1zM1122.0 926.8h1.1v1.1h-1.1zM1107.4 925.7h1.1v1.1h-1.1zM1109.1 913.1h1.1v1.1h-1.1zM1056.5 911.1h1.1v1.1h-1.1zM1034.7 926.5h1.1v1.1h-1.1zM1050.3 912.8h1.1v1.1h-1.1zM1052.6 928.6h1.1v1.1h-1.1zM1138.9 911.5h1.1v1.1h-1.1zM1140.2 913.4h1.1v1.1h-1.1zM1144.6 924.5h1.1v1.1h-1.1zM1110.0 930.0h1.1v1.1h-1.1zM1033.3 927.0h1.1v1.1h-1.1zM1100.1 926.3h1.1v1.1h-1.1zM1044.1 925.3h1.1v1.1h-1.1zM1159.0 926.0h1.1v1.1h-1.1zM1077.5 912.2h1.1v1.1h-1.1zM1142.4 922.3h1.1v1.1h-1.1zM1058.6 915.8h1.1v1.1h-1.1zM1113.0 916.0h1.1v1.1h-1.1zM1083.7 926.1h1.1v1.1h-1.1zM1085.2 918.3h1.1v1.1h-1.1zM1088.1 918.0h1.1v1.1h-1.1zM1098.5 912.7h1.1v1.1h-1.1zM1085.8 930.5h1.1v1.1h-1.1zM1051.3 925.9h1.1v1.1h-1.1zM1133.7 924.8h1.1v1.1h-1.1zM1100.8 924.5h1.1v1.1h-1.1zM1117.3 920.7h1.1v1.1h-1.1zM1048.2 928.9h1.1v1.1h-1.1zM1128.4 912.9h1.1v1.1h-1.1zM1101.0 929.3h1.1v1.1h-1.1zM1127.1 919.9h1.1v1.1h-1.1zM1069.9 914.7h1.1v1.1h-1.1zM1109.1 915.0h1.1v1.1h-1.1zM1064.6 917.3h1.1v1.1h-1.1zM1160.9 924.8h1.1v1.1h-1.1zM1124.4 916.9h1.1v1.1h-1.1zM1144.3 919.3h1.1v1.1h-1.1zM1067.2 922.7h1.1v1.1h-1.1zM1039.4 915.4h1.1v1.1h-1.1zM1083.1 920.6h1.1v1.1h-1.1zM1081.4 914.4h1.1v1.1h-1.1zM1133.3 917.4h1.1v1.1h-1.1zM1158.4 913.9h1.1v1.1h-1.1zM1111.5 920.6h1.1v1.1h-1.1zM1142.4 920.4h1.1v1.1h-1.1zM1106.6 927.4h1.1v1.1h-1.1zM1127.5 920.6h1.1v1.1h-1.1zM1084.3 928.1h1.1v1.1h-1.1zM1162.4 925.7h1.1v1.1h-1.1zM1063.0 920.3h1.1v1.1h-1.1zM1125.6 915.7h1.1v1.1h-1.1zM1161.4 924.5h1.1v1.1h-1.1zM1061.8 928.1h1.1v1.1h-1.1zM1068.8 914.8h1.1v1.1h-1.1zM1123.7 914.7h1.1v1.1h-1.1zM1155.4 928.2h1.1v1.1h-1.1zM1144.2 916.1h1.1v1.1h-1.1zM1088.8 917.3h1.1v1.1h-1.1zM1041.1 925.6h1.1v1.1h-1.1zM1138.7 912.9h1.1v1.1h-1.1zM1080.4 916.8h1.1v1.1h-1.1zM1122.1 922.6h1.1v1.1h-1.1zM1079.0 911.1h1.1v1.1h-1.1zM1096.7 919.7h1.1v1.1h-1.1zM1109.0 915.2h1.1v1.1h-1.1zM1082.7 930.1h1.1v1.1h-1.1zM1047.7 921.9h1.1v1.1h-1.1zM1119.3 916.5h1.1v1.1h-1.1zM1145.3 913.3h1.1v1.1h-1.1zM1040.5 929.2h1.1v1.1h-1.1zM1080.3 929.8h1.1v1.1h-1.1zM1134.5 926.4h1.1v1.1h-1.1zM1120.7 916.9h1.1v1.1h-1.1zM1140.3 924.1h1.1v1.1h-1.1zM1130.4 916.3h1.1v1.1h-1.1zM1123.6 930.2h1.1v1.1h-1.1zM1047.0 921.7h1.1v1.1h-1.1zM1079.0 920.9h1.1v1.1h-1.1zM1123.2 925.4h1.1v1.1h-1.1zM1055.9 922.3h1.1v1.1h-1.1zM1116.3 923.9h1.1v1.1h-1.1zM1146.4 914.6h1.1v1.1h-1.1zM1047.0 924.1h1.1v1.1h-1.1zM1046.7 929.6h1.1v1.1h-1.1zM1126.6 917.6h1.1v1.1h-1.1zM1105.9 922.9h1.1v1.1h-1.1zM1092.7 923.9h1.1v1.1h-1.1zM1057.5 917.2h1.1v1.1h-1.1zM1124.3 912.4h1.1v1.1h-1.1zM1104.5 926.1h1.1v1.1h-1.1zM1078.9 925.8h1.1v1.1h-1.1zM1083.9 916.3h1.1v1.1h-1.1zM1033.1 928.5h1.1v1.1h-1.1zM1065.1 921.1h1.1v1.1h-1.1zM1078.1 926.4h1.1v1.1h-1.1zM1086.2 917.7h1.1v1.1h-1.1zM1134.7 921.8h1.1v1.1h-1.1zM1142.8 918.1h1.1v1.1h-1.1zM1070.7 913.2h1.1v1.1h-1.1zM1051.8 913.0h1.1v1.1h-1.1zM1130.3 926.6h1.1v1.1h-1.1zM1060.3 914.7h1.1v1.1h-1.1zM1130.1 919.3h1.1v1.1h-1.1zM1133.6 927.3h1.1v1.1h-1.1zM1050.9 922.8h1.1v1.1h-1.1zM1058.9 919.0h1.1v1.1h-1.1zM1107.6 921.6h1.1v1.1h-1.1zM1067.6 915.0h1.1v1.1h-1.1zM1032.6 926.6h1.1v1.1h-1.1zM1153.6 927.1h1.1v1.1h-1.1zM1081.6 930.0h1.1v1.1h-1.1zM1109.6 922.1h1.1v1.1h-1.1zM1163.3 923.7h1.1v1.1h-1.1zM1070.9 924.7h1.1v1.1h-1.1zM1096.2 928.2h1.1v1.1h-1.1zM1129.1 923.0h1.1v1.1h-1.1zM1130.4 911.0h1.1v1.1h-1.1zM1097.4 924.2h1.1v1.1h-1.1zM1093.3 921.5h1.1v1.1h-1.1zM1102.1 914.9h1.1v1.1h-1.1zM1098.6 911.7h1.1v1.1h-1.1zM1090.9 923.9h1.1v1.1h-1.1zM1160.0 922.3h1.1v1.1h-1.1zM1046.3 928.8h1.1v1.1h-1.1zM1115.8 926.8h1.1v1.1h-1.1zM1081.8 912.0h1.1v1.1h-1.1zM1046.0 915.7h1.1v1.1h-1.1zM1155.7 921.8h1.1v1.1h-1.1zM1145.6 917.5h1.1v1.1h-1.1zM1048.2 924.9h1.1v1.1h-1.1zM1112.9 928.2h1.1v1.1h-1.1zM1129.7 929.5h1.1v1.1h-1.1zM1076.8 925.8h1.1v1.1h-1.1zM1159.3 927.1h1.1v1.1h-1.1zM1089.5 928.2h1.1v1.1h-1.1zM1096.4 926.1h1.1v1.1h-1.1zM1043.2 913.2h1.1v1.1h-1.1zM1062.5 912.6h1.1v1.1h-1.1zM1098.2 914.2h1.1v1.1h-1.1zM1103.7 925.0h1.1v1.1h-1.1zM1117.9 919.4h1.1v1.1h-1.1zM1094.0 917.1h1.1v1.1h-1.1zM1084.8 926.1h1.1v1.1h-1.1zM1147.6 914.6h1.1v1.1h-1.1zM1080.1 925.4h1.1v1.1h-1.1zM1102.3 918.4h1.1v1.1h-1.1zM1061.3 922.9h1.1v1.1h-1.1zM1064.2 911.1h1.1v1.1h-1.1zM1048.5 926.7h1.1v1.1h-1.1zM1058.6 920.2h1.1v1.1h-1.1zM1057.8 915.2h1.1v1.1h-1.1zM1055.6 919.1h1.1v1.1h-1.1zM1052.3 911.5h1.1v1.1h-1.1zM1097.3 914.4h1.1v1.1h-1.1zM1041.5 912.2h1.1v1.1h-1.1zM1086.5 920.0h1.1v1.1h-1.1zM1036.6 925.1h1.1v1.1h-1.1zM1085.1 919.1h1.1v1.1h-1.1zM1153.7 911.5h1.1v1.1h-1.1zM1048.2 915.4h1.1v1.1h-1.1zM1054.5 920.5h1.1v1.1h-1.1zM1077.7 923.4h1.1v1.1h-1.1zM1044.2 913.5h1.1v1.1h-1.1zM1067.3 925.6h1.1v1.1h-1.1zM1093.6 926.8h1.1v1.1h-1.1zM1069.7 929.7h1.1v1.1h-1.1zM1069.3 916.0h1.1v1.1h-1.1zM1116.7 927.3h1.1v1.1h-1.1zM1046.7 917.9h1.1v1.1h-1.1zM1162.9 924.6h1.1v1.1h-1.1zM1031.6 922.8h1.1v1.1h-1.1zM1049.9 911.6h1.1v1.1h-1.1zM1041.7 914.4h1.1v1.1h-1.1zM1116.9 912.1h1.1v1.1h-1.1zM1055.5 929.0h1.1v1.1h-1.1zM1095.1 930.5h1.1v1.1h-1.1zM1157.3 927.1h1.1v1.1h-1.1zM1031.1 929.8h1.1v1.1h-1.1zM1112.0 917.1h1.1v1.1h-1.1zM1038.8 929.9h1.1v1.1h-1.1zM1142.6 916.9h1.1v1.1h-1.1zM1085.2 913.3h1.1v1.1h-1.1zM1121.4 917.7h1.1v1.1h-1.1zM1051.5 929.6h1.1v1.1h-1.1zM1131.0 925.8h1.1v1.1h-1.1zM1106.1 927.7h1.1v1.1h-1.1zM1078.7 929.5h1.1v1.1h-1.1zM1063.4 919.3h1.1v1.1h-1.1zM1095.8 926.6h1.1v1.1h-1.1zM1057.1 916.4h1.1v1.1h-1.1zM1113.1 925.4h1.1v1.1h-1.1zM1082.9 925.2h1.1v1.1h-1.1zM1052.9 920.7h1.1v1.1h-1.1zM1032.6 925.2h1.1v1.1h-1.1zM1132.4 920.3h1.1v1.1h-1.1zM1043.2 924.5h1.1v1.1h-1.1zM1141.3 915.7h1.1v1.1h-1.1zM1150.0 923.8h1.1v1.1h-1.1zM1091.3 928.4h1.1v1.1h-1.1zM1131.9 928.9h1.1v1.1h-1.1zM1082.0 917.7h1.1v1.1h-1.1zM1086.4 912.4h1.1v1.1h-1.1zM1041.2 930.1h1.1v1.1h-1.1zM1046.2 922.4h1.1v1.1h-1.1zM1116.4 912.6h1.1v1.1h-1.1zM1042.3 915.8h1.1v1.1h-1.1zM1116.2 914.1h1.1v1.1h-1.1zM1032.8 922.7h1.1v1.1h-1.1zM1156.6 915.6h1.1v1.1h-1.1zM1106.2 915.4h1.1v1.1h-1.1zM1135.0 919.4h1.1v1.1h-1.1zM1137.5 923.1h1.1v1.1h-1.1zM1057.0 921.7h1.1v1.1h-1.1zM1046.8 914.6h1.1v1.1h-1.1zM1043.7 927.5h1.1v1.1h-1.1zM1153.7 911.5h1.1v1.1h-1.1zM1147.0 915.0h1.1v1.1h-1.1zM1094.3 912.7h1.1v1.1h-1.1zM1139.4 915.5h1.1v1.1h-1.1zM1117.7 923.3h1.1v1.1h-1.1zM1150.4 926.2h1.1v1.1h-1.1zM1111.7 917.9h1.1v1.1h-1.1zM1047.7 919.9h1.1v1.1h-1.1zM1111.9 927.7h1.1v1.1h-1.1zM1057.0 927.3h1.1v1.1h-1.1zM1093.7 921.8h1.1v1.1h-1.1zM1039.9 925.6h1.1v1.1h-1.1zM1096.5 917.9h1.1v1.1h-1.1zM1104.8 912.4h1.1v1.1h-1.1zM1087.8 925.7h1.1v1.1h-1.1zM1112.9 924.0h1.1v1.1h-1.1zM1080.0 915.3h1.1v1.1h-1.1zM1074.4 930.9h1.1v1.1h-1.1zM1044.4 919.6h1.1v1.1h-1.1zM1057.0 915.4h1.1v1.1h-1.1zM1131.2 929.6h1.1v1.1h-1.1zM1168.0 928.5h1.1v1.1h-1.1zM1156.9 923.2h1.1v1.1h-1.1zM1087.7 921.7h1.1v1.1h-1.1zM1156.9 930.0h1.1v1.1h-1.1zM1096.2 930.0h1.1v1.1h-1.1zM1085.5 926.5h1.1v1.1h-1.1zM1160.0 930.9h1.1v1.1h-1.1zM1153.3 916.8h1.1v1.1h-1.1zM1048.8 914.7h1.1v1.1h-1.1zM1070.0 925.4h1.1v1.1h-1.1zM1117.0 921.4h1.1v1.1h-1.1zM1127.6 911.8h1.1v1.1h-1.1zM1090.0 916.5h1.1v1.1h-1.1zM1129.4 917.9h1.1v1.1h-1.1zM1068.9 925.9h1.1v1.1h-1.1zM1074.3 913.1h1.1v1.1h-1.1zM1043.8 919.2h1.1v1.1h-1.1zM1130.6 914.1h1.1v1.1h-1.1zM1164.2 925.0h1.1v1.1h-1.1zM1153.4 930.6h1.1v1.1h-1.1zM1055.0 918.5h1.1v1.1h-1.1zM1093.8 917.2h1.1v1.1h-1.1zM1104.1 921.5h1.1v1.1h-1.1zM1143.7 918.2h1.1v1.1h-1.1zM1093.9 916.7h1.1v1.1h-1.1zM1142.5 928.7h1.1v1.1h-1.1zM1066.0 916.9h1.1v1.1h-1.1zM1029.5 927.1h1.1v1.1h-1.1zM1102.2 913.6h1.1v1.1h-1.1zM1054.0 921.7h1.1v1.1h-1.1zM1063.2 912.0h1.1v1.1h-1.1zM1093.7 926.4h1.1v1.1h-1.1zM1140.1 930.6h1.1v1.1h-1.1zM1030.7 930.6h1.1v1.1h-1.1zM1038.6 914.7h1.1v1.1h-1.1z" fill="#00e400"/><path d="M1018.0 931.5H1208.0" stroke="#ff00ff" stroke-width="1"/><path d="M1013.0 882.5H1050.0" stroke="#00e400" stroke-width="1"/><path d="M1031.0 875.0 L1041.0 882.0 L1031.0 889.0" stroke="#00e400" stroke-width="1.2" fill="none"/><path d="M1037.0 872.0 L1050.0 865.0 L1050.0 872.0 L1037.0 872.0" stroke="#00e400" stroke-width="1.2" fill="none"/><circle cx="1050.0" cy="882.0" r="3.5" stroke="#00e400" stroke-width="1" fill="none"/><path d="M1052.0 885.0 L1074.0 908.0" stroke="#00e400" stroke-width="1" fill="none"/><path d="M1071 904 L1076 909 L1069 908 Z" fill="#ff00ff"/><text x="1022.0" y="880.6" font-size="8.5" fill="#00e400" text-anchor="middle" font-family="Liberation Sans" font-weight="normal" textLength="8" lengthAdjust="spacingAndGlyphs" stroke="#00e400" stroke-width="0.35">10</text><text x="1216.0" y="899.6" font-size="10" fill="#00e400" text-anchor="middle" font-family="Liberation Sans" font-weight="normal" textLength="30" lengthAdjust="spacingAndGlyphs">±0.000</text><path d="M1194.0 902.5H1236.0" stroke="#00e400" stroke-width="1"/><path d="M1194.0 902.6 L1203.0 910.5 L1211.0 902.6" stroke="#00e400" stroke-width="1.2" fill="none"/><path d="M1167.0 910.5H1212.0" stroke="#00e400" stroke-width="1"/><path d="M1187.5 910.5V931.5" stroke="#00e400" stroke-width="1"/><path d="M1185.5 912.5L1189.5 908.5" stroke="#00e400" stroke-width="1.1"/><path d="M1185.5 933.4L1189.5 929.4" stroke="#00e400" stroke-width="1.1"/><text x="1182.0" y="922.9" font-size="8" fill="#ffffff" text-anchor="middle" font-family="Liberation Sans" font-weight="normal" transform="rotate(-90 1182.0 920.0)" textLength="11" lengthAdjust="spacingAndGlyphs" stroke="#ffffff" stroke-width="0.35">100</text><path d="M1194.0 939.4 L1203.0 931.5 L1211.0 939.4" stroke="#00e400" stroke-width="1.2" fill="none"/><path d="M1194.0 939.5H1236.0" stroke="#00e400" stroke-width="1"/><text x="1216.0" y="950.6" font-size="10" fill="#00e400" text-anchor="middle" font-family="Liberation Sans" font-weight="normal" textLength="30" lengthAdjust="spacingAndGlyphs">-0.100</text><text x="1220.0" y="960.5" font-size="7" fill="#ffffff" text-anchor="middle" font-family="Liberation Sans" font-weight="bold" textLength="50" lengthAdjust="spacingAndGlyphs">(基础顶面标高)</text><text x="1096.0" y="988.0" font-size="11" fill="#ffff00" text-anchor="middle" font-family="Liberation Sans" font-weight="bold" textLength="47" lengthAdjust="spacingAndGlyphs">柱脚详图</text><rect x="1059" y="989" width="76" height="3" fill="#00e400"/><rect x="1296" y="802" width="64.5" height="4.5" fill="#00e400" opacity="0.55" stroke="#e0e0e0" stroke-width="1"/><rect x="1305.2" y="806.6" width="3.6" height="61" fill="none" stroke="#d8d8d8" stroke-width="0.8"/><path d="M1307.5 796.3V867.5" stroke="#00dcdc" stroke-width="1"/><rect x="1326.1000000000001" y="806.6" width="3.6" height="61" fill="none" stroke="#d8d8d8" stroke-width="0.8"/><path d="M1327.5 796.3V867.5" stroke="#00dcdc" stroke-width="1"/><rect x="1347.2" y="806.6" width="3.6" height="61" fill="none" stroke="#d8d8d8" stroke-width="0.8"/><path d="M1349.5 796.3V867.5" stroke="#00dcdc" stroke-width="1"/><path d="M1280.5 802.0V867.5" stroke="#00e400" stroke-width="1"/><path d="M1277.0 802.5H1290.0" stroke="#00e400" stroke-width="1"/><path d="M1277.0 806.5H1290.0" stroke="#00e400" stroke-width="1"/><path d="M1277.0 867.5H1300.0" stroke="#00e400" stroke-width="1"/><path d="M1278.4 804.0L1282.4 800.0" stroke="#ffffff" stroke-width="1.1"/><path d="M1278.4 808.6L1282.4 804.6" stroke="#ffffff" stroke-width="1.1"/><path d="M1278.4 869.5L1282.4 865.5" stroke="#ffffff" stroke-width="1.1"/><text x="1275.0" y="806.9" font-size="8" fill="#ffffff" text-anchor="middle" font-family="Liberation Sans" font-weight="normal" transform="rotate(-90 1275.0 804.0)" textLength="7" lengthAdjust="spacingAndGlyphs" stroke="#ffffff" stroke-width="0.35">12</text><text x="1275.0" y="841.1" font-size="8.5" fill="#ffffff" text-anchor="middle" font-family="Liberation Sans" font-weight="normal" transform="rotate(-90 1275.0 838.0)" textLength="12" lengthAdjust="spacingAndGlyphs" stroke="#ffffff" stroke-width="0.35">500</text><text x="1387.0" y="792.2" font-size="9" fill="#ffffff" text-anchor="middle" font-family="Liberation Sans" font-weight="normal" textLength="28" lengthAdjust="spacingAndGlyphs" stroke="#ffffff" stroke-width="0.35">-0.100</text><path d="M1370.0 794.5H1409.0" stroke="#00e400" stroke-width="1"/><path d="M1370.0 794.5 L1375.0 802.0 L1380.0 794.5" stroke="#00e400" stroke-width="1.2" fill="none"/><path d="M1360.0 802.5H1385.0" stroke="#00e400" stroke-width="1"/><text x="1406.0" y="806.0" font-size="7" fill="#ffffff" text-anchor="middle" font-family="Liberation Sans" font-weight="bold" textLength="49" lengthAdjust="spacingAndGlyphs">(基础顶面标高)</text><text x="1331.0" y="887.8" font-size="10.5" fill="#ffff00" text-anchor="middle" font-family="Liberation Sans" font-weight="normal" textLength="16" lengthAdjust="spacingAndGlyphs">1-1</text><rect x="1310" y="889.5" width="41" height="3" fill="#00e400"/><rect x="1296.5" y="906.6" width="64" height="64" fill="none" stroke="#d8d8d8" stroke-width="1"/><path d="M1307.5 906.6V970.6" stroke="#00dcdc" stroke-width="1"/><path d="M1328.5 906.6V970.6" stroke="#00dcdc" stroke-width="1"/><path d="M1349.5 906.6V970.6" stroke="#00dcdc" stroke-width="1"/><path d="M1328.5 970.6V1020.0" stroke="#00dcdc" stroke-width="1"/><path d="M1296.5 917.5H1360.5" stroke="#00dcdc" stroke-width="1"/><circle cx="1307.0" cy="917.4" r="1.5" stroke="#00e400" stroke-width="0" fill="#00e400"/><circle cx="1328.0" cy="917.4" r="1.5" stroke="#00e400" stroke-width="0" fill="#00e400"/><circle cx="1349.0" cy="917.4" r="1.5" stroke="#00e400" stroke-width="0" fill="#00e400"/><path d="M1296.5 939.5H1360.5" stroke="#00dcdc" stroke-width="1"/><circle cx="1307.0" cy="939.1" r="1.5" stroke="#00e400" stroke-width="0" fill="#00e400"/><circle cx="1328.0" cy="939.1" r="1.5" stroke="#00e400" stroke-width="0" fill="#00e400"/><circle cx="1349.0" cy="939.1" r="1.5" stroke="#00e400" stroke-width="0" fill="#00e400"/><path d="M1296.5 960.5H1360.5" stroke="#00dcdc" stroke-width="1"/><circle cx="1307.0" cy="960.2" r="1.5" stroke="#00e400" stroke-width="0" fill="#00e400"/><circle cx="1328.0" cy="960.2" r="1.5" stroke="#00e400" stroke-width="0" fill="#00e400"/><circle cx="1349.0" cy="960.2" r="1.5" stroke="#00e400" stroke-width="0" fill="#00e400"/><path d="M1349.0 917.4 L1367.0 889.7 L1406.0 889.7" stroke="#00e400" stroke-width="1.2" fill="none"/><text x="1386.0" y="887.1" font-size="8.5" fill="#ffffff" text-anchor="middle" font-family="Liberation Sans" font-weight="normal" textLength="20" lengthAdjust="spacingAndGlyphs" stroke="#ffffff" stroke-width="0.35">9φ12</text><path d="M1366.0 906.5H1394.0" stroke="#00e400" stroke-width="1"/><path d="M1386.0 908.6L1390.0 904.6" stroke="#ffffff" stroke-width="1.1"/><path d="M1366.0 917.5H1394.0" stroke="#00e400" stroke-width="1"/><path d="M1386.0 919.4L1390.0 915.4" stroke="#ffffff" stroke-width="1.1"/><path d="M1366.0 939.5H1394.0" stroke="#00e400" stroke-width="1"/><path d="M1386.0 941.1L1390.0 937.1" stroke="#ffffff" stroke-width="1.1"/><path d="M1366.0 960.5H1394.0" stroke="#00e400" stroke-width="1"/><path d="M1386.0 962.2L1390.0 958.2" stroke="#ffffff" stroke-width="1.1"/><path d="M1366.0 970.5H1394.0" stroke="#00e400" stroke-width="1"/><path d="M1386.0 972.6L1390.0 968.6" stroke="#ffffff" stroke-width="1.1"/><path d="M1388.5 906.6V970.6" stroke="#00e400" stroke-width="1"/><path d="M1401.5 906.6V970.6" stroke="#00e400" stroke-width="1"/><path d="M1399.0 908.6L1403.0 904.6" stroke="#ffffff" stroke-width="1.1"/><path d="M1399.0 972.6L1403.0 968.6" stroke="#ffffff" stroke-width="1.1"/><text x="1383.0" y="914.9" font-size="8" fill="#ffffff" text-anchor="middle" font-family="Liberation Sans" font-weight="normal" transform="rotate(-90 1383.0 912.0)" textLength="8" lengthAdjust="spacingAndGlyphs" stroke="#ffffff" stroke-width="0.35">50</text><text x="1383.0" y="930.9" font-size="8" fill="#ffffff" text-anchor="middle" font-family="Liberation Sans" font-weight="normal" transform="rotate(-90 1383.0 928.0)" textLength="11" lengthAdjust="spacingAndGlyphs" stroke="#ffffff" stroke-width="0.35">140</text><text x="1383.0" y="952.4" font-size="8" fill="#ffffff" text-anchor="middle" font-family="Liberation Sans" font-weight="normal" transform="rotate(-90 1383.0 949.5)" textLength="11" lengthAdjust="spacingAndGlyphs" stroke="#ffffff" stroke-width="0.35">140</text><text x="1383.0" y="968.4" font-size="8" fill="#ffffff" text-anchor="middle" font-family="Liberation Sans" font-weight="normal" transform="rotate(-90 1383.0 965.5)" textLength="8" lengthAdjust="spacingAndGlyphs" stroke="#ffffff" stroke-width="0.35">50</text><text x="1397.0" y="941.9" font-size="8" fill="#ffffff" text-anchor="middle" font-family="Liberation Sans" font-weight="normal" transform="rotate(-90 1397.0 939.0)" textLength="11" lengthAdjust="spacingAndGlyphs" stroke="#ffffff" stroke-width="0.35">380</text><path d="M1296.5 975.0V1015.0" stroke="#00e400" stroke-width="1"/><path d="M1307.5 975.0V1015.0" stroke="#00e400" stroke-width="1"/><path d="M1328.5 975.0V1015.0" stroke="#00e400" stroke-width="1"/><path d="M1349.5 975.0V1015.0" stroke="#00e400" stroke-width="1"/><path d="M1360.5 975.0V1015.0" stroke="#00e400" stroke-width="1"/><path d="M1293.0 996.5H1364.0" stroke="#00e400" stroke-width="1"/><path d="M1293.0 1009.5H1364.0" stroke="#00e400" stroke-width="1"/><path d="M1294.5 998.5L1298.5 994.5" stroke="#ffffff" stroke-width="1.1"/><path d="M1305.0 998.5L1309.0 994.5" stroke="#ffffff" stroke-width="1.1"/><path d="M1326.0 998.5L1330.0 994.5" stroke="#ffffff" stroke-width="1.1"/><path d="M1347.0 998.5L1351.0 994.5" stroke="#ffffff" stroke-width="1.1"/><path d="M1358.5 998.5L1362.5 994.5" stroke="#ffffff" stroke-width="1.1"/><path d="M1294.5 1011.5L1298.5 1007.5" stroke="#ffffff" stroke-width="1.1"/><path d="M1358.5 1011.5L1362.5 1007.5" stroke="#ffffff" stroke-width="1.1"/><text x="1301.5" y="993.9" font-size="8" fill="#ffffff" text-anchor="middle" font-family="Liberation Sans" font-weight="normal" textLength="8" lengthAdjust="spacingAndGlyphs" stroke="#ffffff" stroke-width="0.35">50</text><text x="1317.5" y="993.9" font-size="8" fill="#ffffff" text-anchor="middle" font-family="Liberation Sans" font-weight="normal" textLength="11" lengthAdjust="spacingAndGlyphs" stroke="#ffffff" stroke-width="0.35">140</text><text x="1338.5" y="993.9" font-size="8" fill="#ffffff" text-anchor="middle" font-family="Liberation Sans" font-weight="normal" textLength="11" lengthAdjust="spacingAndGlyphs" stroke="#ffffff" stroke-width="0.35">140</text><text x="1355.0" y="993.9" font-size="8" fill="#ffffff" text-anchor="middle" font-family="Liberation Sans" font-weight="normal" textLength="8" lengthAdjust="spacingAndGlyphs" stroke="#ffffff" stroke-width="0.35">50</text><text x="1328.0" y="1006.9" font-size="8" fill="#ffffff" text-anchor="middle" font-family="Liberation Sans" font-weight="normal" textLength="11" lengthAdjust="spacingAndGlyphs" stroke="#ffffff" stroke-width="0.35">380</text><text x="1279.0" y="938.8" font-size="10.5" fill="#ffff00" text-anchor="middle" font-family="Liberation Sans" font-weight="normal">1</text><rect x="1273" y="940" width="15" height="2.5" fill="#00e400"/><text x="1413.0" y="938.8" font-size="10.5" fill="#ffff00" text-anchor="middle" font-family="Liberation Sans" font-weight="normal">1</text><rect x="1406" y="940" width="15" height="2.5" fill="#00e400"/><text x="1396.5" y="999.8" font-size="10.5" fill="#ffff00" text-anchor="middle" font-family="Liberation Sans" font-weight="normal" textLength="17" lengthAdjust="spacingAndGlyphs">M-1</text><rect x="1375" y="1001.5" width="41" height="3" fill="#00e400"/><path d="M102.0 1161.5H146.5" stroke="#00dcdc" stroke-width="1"/><path d="M185.7 1161.5H234.3" stroke="#00e400" stroke-width="1"/><circle cx="243.0" cy="1161.5" r="8.7" stroke="#00e400" stroke-width="1.6" fill="none"/><text x="243.0" y="1166.5" font-size="12.5" fill="#ffffff" text-anchor="middle" font-family="Liberation Serif" font-weight="normal">C</text><rect x="146.5" y="1126.3" width="39.2" height="70.7" fill="none" stroke="#00dcdc" stroke-width="1"/><path d="M146.5 1161.5H185.7" stroke="#00dcdc" stroke-width="1"/><rect x="150" y="1159.5" width="33" height="4" fill="#00e400" opacity="0.6"/><path d="M147.0 1158.0 L154.0 1133.0 L185.0 1126.3" stroke="#00e400" stroke-width="1" fill="none"/><path d="M147.0 1197.0 L154.0 1170.0 L185.0 1163.0" stroke="#00e400" stroke-width="1" fill="none"/><path d="M187.5 1114.0V1226.0" stroke="#00dcdc" stroke-width="1"/><path d="M146.5 1197.0V1233.0" stroke="#00e400" stroke-width="1"/><path d="M186.5 1197.0V1233.0" stroke="#00e400" stroke-width="1"/><path d="M192.0 1126.5H222.0" stroke="#00e400" stroke-width="1"/><path d="M214.0 1128.3L218.0 1124.3" stroke="#ffffff" stroke-width="1.1"/><path d="M192.0 1161.5H222.0" stroke="#00e400" stroke-width="1"/><path d="M214.0 1163.5L218.0 1159.5" stroke="#ffffff" stroke-width="1.1"/><path d="M192.0 1197.5H222.0" stroke="#00e400" stroke-width="1"/><path d="M214.0 1199.0L218.0 1195.0" stroke="#ffffff" stroke-width="1.1"/><path d="M216.5 1126.3V1197.0" stroke="#00e400" stroke-width="1"/><text x="212.5" y="1147.1" font-size="8.5" fill="#ffffff" text-anchor="middle" font-family="Liberation Sans" font-weight="normal" transform="rotate(-90 212.5 1144.0)" textLength="15" lengthAdjust="spacingAndGlyphs" stroke="#ffffff" stroke-width="0.35">3310</text><text x="212.5" y="1182.6" font-size="8.5" fill="#ffffff" text-anchor="middle" font-family="Liberation Sans" font-weight="normal" transform="rotate(-90 212.5 1179.5)" textLength="15" lengthAdjust="spacingAndGlyphs" stroke="#ffffff" stroke-width="0.35">3310</text><text x="163.0" y="1153.9" font-size="8" fill="#ffffff" text-anchor="middle" font-family="Liberation Sans" font-weight="normal" transform="rotate(-90 163.0 1151.0)" textLength="11" lengthAdjust="spacingAndGlyphs" stroke="#ffffff" stroke-width="0.35">200</text><text x="163.0" y="1175.9" font-size="8" fill="#ffffff" text-anchor="middle" font-family="Liberation Sans" font-weight="normal" transform="rotate(-90 163.0 1173.0)" textLength="11" lengthAdjust="spacingAndGlyphs" stroke="#ffffff" stroke-width="0.35">200</text><path d="M143.0 1226.5H190.0" stroke="#00e400" stroke-width="1"/><path d="M144.5 1228.5L148.5 1224.5" stroke="#ffffff" stroke-width="1.1"/><path d="M185.5 1228.5L189.5 1224.5" stroke="#ffffff" stroke-width="1.1"/><text x="167.0" y="1224.6" font-size="8.5" fill="#ffffff" text-anchor="middle" font-family="Liberation Sans" font-weight="normal" textLength="16" lengthAdjust="spacingAndGlyphs" stroke="#ffffff" stroke-width="0.35">3810</text><text x="186.0" y="1214.6" font-size="8.5" fill="#ffffff" text-anchor="middle" font-family="Liberation Sans" font-weight="normal" textLength="11" lengthAdjust="spacingAndGlyphs" stroke="#ffffff" stroke-width="0.35">240</text><path d="M187.5 1114.0 L192.0 1112.0 L218.0 1112.0" stroke="#00e400" stroke-width="1" fill="none"/><text x="204.0" y="1111.1" font-size="8.5" fill="#ffffff" text-anchor="middle" font-family="Liberation Sans" font-weight="normal" textLength="15" lengthAdjust="spacingAndGlyphs" stroke="#ffffff" stroke-width="0.35">M-1</text><text x="226.0" y="1116.0" font-size="5.5" fill="#ffffff" text-anchor="middle" font-family="Liberation Sans" font-weight="bold" textLength="9" lengthAdjust="spacingAndGlyphs">备用</text><circle cx="187.6" cy="1240.6" r="8.3" stroke="#ffffff" stroke-width="1.3" fill="none"/><text x="187.6" y="1244.2" font-size="9" fill="#ffffff" text-anchor="middle" font-family="Liberation Sans" font-weight="bold">2</text><rect x="145.0" y="1124.8" width="3" height="3" fill="#ff00ff"/><rect x="184.2" y="1124.8" width="3" height="3" fill="#ff00ff"/><rect x="145.0" y="1160.0" width="3" height="3" fill="#ff00ff"/><rect x="184.2" y="1160.0" width="3" height="3" fill="#ff00ff"/><rect x="145.0" y="1195.5" width="3" height="3" fill="#ff00ff"/><rect x="184.2" y="1195.5" width="3" height="3" fill="#ff00ff"/><text x="189.0" y="1277.9" font-size="16.5" fill="#ffffff" text-anchor="middle" font-family="Liberation Sans" font-weight="bold" textLength="117" lengthAdjust="spacingAndGlyphs">电梯井埋件布置图</text><rect x="125" y="1282.5" width="137" height="3" fill="#ff0000"/><rect x="125" y="1286.5" width="137" height="1.5" fill="#00e400"/><text x="850.0" y="1181.9" font-size="16.5" fill="#ffffff" text-anchor="middle" font-family="Liberation Sans" font-weight="bold" textLength="102" lengthAdjust="spacingAndGlyphs">锚栓平面布置图</text><rect x="783" y="1187" width="138" height="3" fill="#ff0000"/><rect x="783" y="1190.5" width="138" height="1.5" fill="#00e400"/><text x="1111.0" y="1188.2" font-size="13" fill="#ffffff" text-anchor="start" font-family="Liberation Serif" font-weight="bold" textLength="26" lengthAdjust="spacingAndGlyphs">说明:</text><text x="1141.0" y="1200.3" font-size="12" fill="#ffffff" text-anchor="start" font-family="Liberation Serif" font-weight="bold" textLength="238" lengthAdjust="spacingAndGlyphs">1).未注明锚栓均为:M27;锚栓, M-1材质为: Q235</text><text x="1141.0" y="1219.3" font-size="12" fill="#ffffff" text-anchor="start" font-family="Liberation Serif" font-weight="bold" textLength="185" lengthAdjust="spacingAndGlyphs">2).基础施工时应注意配合锚栓的施工.</text><text x="1141.0" y="1238.3" font-size="12" fill="#ffffff" text-anchor="start" font-family="Liberation Serif" font-weight="bold" textLength="283" lengthAdjust="spacingAndGlyphs">3).锚栓及预埋件施工时应注意水平位置和竖直标高准确度.</text><circle cx="1588" cy="246.5" r="52.5" fill="none" stroke="#2a2a2a" stroke-width="12.5"/><rect x="1562" y="221" width="52" height="52" fill="#a5a5a5"/><rect x="1572" y="231" width="32" height="32" fill="#90949a"/><text x="1588" y="259" font-size="26" fill="#6e7276" text-anchor="middle" font-family="Liberation Sans">上</text><text x="1588" y="198" font-size="17" fill="#a6a6a6" text-anchor="middle" font-family="Liberation Sans">北</text><text x="1588" y="312" font-size="17" fill="#a6a6a6" text-anchor="middle" font-family="Liberation Sans">南</text><text x="1531" y="254.5" font-size="17" fill="#a6a6a6" text-anchor="middle" font-family="Liberation Sans">西</text><text x="1644" y="254.5" font-size="17" fill="#a6a6a6" text-anchor="middle" font-family="Liberation Sans">东</text><rect x="1564.5" y="335" width="47" height="17" rx="4" fill="#8a8b90" stroke="#6a6b70" stroke-width="1"/><text x="1583" y="347.5" font-size="11" fill="#505256" text-anchor="middle" font-family="Liberation Sans">WCS</text><path d="M1599 341 h8 l-4 5 z" fill="none" stroke="#b8b9bc" stroke-width="1"/><path d="M59.5 1214.5 V1264.5 H109.5" stroke="#e6e6e6" stroke-width="1" fill="none"/><rect x="55.5" y="1260.5" width="8" height="8" fill="none" stroke="#e6e6e6" stroke-width="1"/><path d="M61.5 1196 L67 1203 L72.5 1196 M67 1203 V1210" stroke="#e6e6e6" stroke-width="1" fill="none"/><path d="M114.5 1250.5 L125.5 1261.5 M125.5 1250.5 L114.5 1261.5" stroke="#e6e6e6" stroke-width="1" fill="none"/><path d="M1589.5 165 V1241.5 M1589.5 1253.5 V1291 M33 1247.5 H1583.5 M1595.5 1247.5 H1671" stroke="#e8e8e8" stroke-width="1"/><rect x="1583.5" y="1241.5" width="12" height="12" fill="none" stroke="#e8e8e8" stroke-width="1"/><path d="M1670.5 1244 V1256" stroke="#e8e8e8" stroke-width="1.2"/></g></svg><div style="position:absolute;left:647px;top:1206px;width:107px;height:15px;background:#5c5c5c;"></div><div style="position:absolute;left:647px;top:1226px;width:199px;height:15px;background:#5c5c5c;"></div><div style="position:absolute;left:647px;top:1246px;width:271px;height:15px;background:#5c5c5c;"></div><div style="position:absolute;left:649px;top:1208px;font-size:12.1px;line-height:1;color:#dcdcdc;white-space:nowrap;font-family:'Liberation Mono',monospace;">命令: _textedit</div><div style="position:absolute;left:649px;top:1228px;font-size:12.1px;line-height:1;color:#dcdcdc;white-space:nowrap;font-family:'Liberation Mono',monospace;">当前设置: 编辑模式 = Multiple</div><div style="position:absolute;left:649px;top:1248px;font-size:12.1px;line-height:1;color:#dcdcdc;white-space:nowrap;font-family:'Liberation Mono',monospace;">选择注释对象或 [放弃(U)/模式(M)]: *取消*</div><div style="position:absolute;left:583px;top:1265px;width:58px;height:26px;background:#30363f;"></div><div style="position:absolute;left:641px;top:1265px;width:479px;height:26px;background:#b9b9b9;"></div><svg style="position:absolute;left:0px;top:0px" width="1707" height="1355" viewBox="0 0 1707 1355"><rect x="588" y="1270" width="1.3" height="1.3" fill="#aaa"/><rect x="591" y="1270" width="1.3" height="1.3" fill="#aaa"/><rect x="588" y="1273" width="1.3" height="1.3" fill="#aaa"/><rect x="591" y="1273" width="1.3" height="1.3" fill="#aaa"/><rect x="588" y="1276" width="1.3" height="1.3" fill="#aaa"/><rect x="591" y="1276" width="1.3" height="1.3" fill="#aaa"/><rect x="588" y="1279" width="1.3" height="1.3" fill="#aaa"/><rect x="591" y="1279" width="1.3" height="1.3" fill="#aaa"/><rect x="588" y="1282" width="1.3" height="1.3" fill="#aaa"/><rect x="591" y="1282" width="1.3" height="1.3" fill="#aaa"/><rect x="588" y="1285" width="1.3" height="1.3" fill="#aaa"/><rect x="591" y="1285" width="1.3" height="1.3" fill="#aaa"/><path d="M600 1273 l8 8 M608 1273 l-8 8" stroke="#c8c8c8" stroke-width="1.5"/><path d="M621 1285 l8 -8" stroke="#c8c8c8" stroke-width="2.5"/><path d="M628 1278 a4.5 4.5 0 1 1 4 -6 l-3 3 l2 2 l3 -3 a4.5 4.5 0 0 1 -6 4" fill="#c8c8c8"/><rect x="645.5" y="1271.5" width="14" height="11" fill="none" stroke="#555" stroke-width="1"/><path d="M648 1275 l3 2 l-3 2" stroke="#555" fill="none"/><path d="M663 1276 h6 l-3 3 z" fill="#555"/><path d="M1108 1279 l4 -4 l4 4 z" fill="#555"/></svg><div style="position:absolute;left:679px;top:1270px;font-size:13px;line-height:1;color:#7b7b7b;white-space:nowrap;font-style:italic;">键入命令</div><svg style="position:absolute;left:0px;top:0px" width="400" height="1355" viewBox="0 0 400 1355"><path d="M20 1302 h16 M20 1307 h16 M20 1312 h16" stroke="#e0e0e0" stroke-width="1.8"/><path d="M55 1295 L103 1295 L93 1319 L45 1319 Z" fill="#3b4453"/><path d="M157 1300 l-6 14 M198 1300 l-6 14" stroke="#5a6270" stroke-width="1"/><path d="M174 1300 v14 M167 1307 h14" stroke="#e0e0e0" stroke-width="1.8"/></svg><div style="position:absolute;left:62px;top:1300.5px;font-size:12px;line-height:1;color:#ffffff;white-space:nowrap;font-weight:bold;">模型</div><div style="position:absolute;left:110px;top:1300.5px;font-size:11.5px;line-height:1;color:#e0e0e0;white-space:nowrap;">布局1</div><div style="position:absolute;left:6px;top:1325px;width:483px;height:24px;background:#3b4453;"></div><div style="position:absolute;left:493px;top:1325px;width:140px;height:24px;background:#3b4453;"></div><div style="position:absolute;left:636px;top:1325px;width:30px;height:24px;background:#3b4453;"></div><div style="position:absolute;left:669px;top:1325px;width:64px;height:24px;background:#3b4453;"></div><div style="position:absolute;left:736px;top:1325px;width:49px;height:24px;background:#3b4453;"></div><div style="position:absolute;left:787px;top:1325px;width:102px;height:24px;background:#3b4453;"></div><div style="position:absolute;left:891px;top:1325px;width:61px;height:24px;background:#3b4453;"></div><div style="position:absolute;left:955px;top:1325px;width:115px;height:24px;background:#3b4453;"></div><div style="position:absolute;left:1074px;top:1325px;width:104px;height:24px;background:#3b4453;"></div><div style="position:absolute;left:1182px;top:1325px;width:145px;height:24px;background:#3b4453;"></div><div style="position:absolute;left:1330px;top:1325px;width:40px;height:24px;background:#3b4453;"></div><div style="position:absolute;left:1372px;top:1325px;width:23px;height:24px;background:#3b4453;"></div><div style="position:absolute;left:1398px;top:1325px;width:96px;height:24px;background:#3b4453;"></div><div style="position:absolute;left:1496px;top:1325px;width:24px;height:24px;background:#3b4453;"></div><div style="position:absolute;left:1523px;top:1325px;width:39px;height:24px;background:#3b4453;"></div><div style="position:absolute;left:1564px;top:1325px;width:25px;height:24px;background:#3b4453;"></div><div style="position:absolute;left:1591px;top:1325px;width:23px;height:24px;background:#3b4453;"></div><div style="position:absolute;left:1617px;top:1325px;width:31px;height:24px;background:#3b4453;"></div><div style="position:absolute;left:1651px;top:1325px;width:23px;height:24px;background:#3b4453;"></div><div style="position:absolute;left:1677px;top:1325px;width:24px;height:24px;background:#3b4453;"></div><div style="position:absolute;left:762px;top:1326px;width:21px;height:22px;background:#6390c5;"></div><div style="position:absolute;left:917px;top:1326px;width:21px;height:22px;background:#6390c5;"></div><div style="position:absolute;left:984px;top:1326px;width:19px;height:22px;background:#6390c5;"></div><div style="position:absolute;left:1076px;top:1326px;width:21px;height:22px;background:#6390c5;"></div><div style="position:absolute;left:1140px;top:1326px;width:20px;height:22px;background:#6390c5;"></div><div style="position:absolute;left:1183px;top:1326px;width:20px;height:22px;background:#6390c5;"></div><div style="position:absolute;left:1592px;top:1326px;width:21px;height:22px;background:#6390c5;"></div><div style="position:absolute;left:522px;top:1330.5px;font-size:11.9px;line-height:1;color:#e6e6e6;white-space:nowrap;">-36488, -482522, 0</div><div style="position:absolute;left:638px;top:1330.5px;font-size:11.5px;line-height:1;color:#e6e6e6;white-space:nowrap;">模型</div><div style="position:absolute;left:1258px;top:1330px;font-size:12px;line-height:1;color:#e6e6e6;white-space:nowrap;letter-spacing:-0.4px;">1:1 / 100%</div><div style="position:absolute;left:1427px;top:1330.5px;font-size:12px;line-height:1;color:#e6e6e6;white-space:nowrap;">小数</div><svg style="position:absolute;left:0px;top:0px" width="1707" height="1355" viewBox="0 0 1707 1355"><path d="M675 1330 v14 M680 1330 v14 M672 1333 h12 M672 1340 h12" stroke="#d4d4d4" stroke-width="1.3"/><rect x="699" y="1331" width="1.5" height="1.5" fill="#d4d4d4"/><rect x="699" y="1336" width="1.5" height="1.5" fill="#d4d4d4"/><rect x="699" y="1341" width="1.5" height="1.5" fill="#d4d4d4"/><rect x="703" y="1331" width="1.5" height="1.5" fill="#d4d4d4"/><rect x="703" y="1336" width="1.5" height="1.5" fill="#d4d4d4"/><rect x="703" y="1341" width="1.5" height="1.5" fill="#d4d4d4"/><rect x="707" y="1331" width="1.5" height="1.5" fill="#d4d4d4"/><rect x="707" y="1336" width="1.5" height="1.5" fill="#d4d4d4"/><rect x="707" y="1341" width="1.5" height="1.5" fill="#d4d4d4"/><path d="M720.5 1335.5 h7 l-3.5 4 z" fill="#d4d4d4"/><path d="M742 1343 h5 v-6 h5 v-6 h5" stroke="#d4d4d4" stroke-width="1.5" fill="none"/><rect x="741" y="1338" width="6" height="6" fill="#d4d4d4"/><path d="M766 1331 v8 M762 1335 h8" stroke="#fff" stroke-width="1.6"/><rect x="769" y="1338" width="12" height="5" fill="#fff"/><path d="M792 1330 v13 h13" stroke="#d4d4d4" stroke-width="1.4" fill="none"/><circle cx="820" cy="1338" r="5.5" stroke="#d4d4d4" stroke-width="1.4" fill="none"/><path d="M820 1338 l8 -7" stroke="#d4d4d4" stroke-width="1.4"/><path d="M837.5 1335.5 h7 l-3.5 4 z" fill="#d4d4d4"/><path d="M855 1330 l10 14" stroke="#e04040" stroke-width="1.4"/><path d="M861 1330 v14" stroke="#40c040" stroke-width="1.2"/><path d="M877.5 1335.5 h7 l-3.5 4 z" fill="#d4d4d4"/><path d="M896 1343 h13 M896 1343 l11 -10" stroke="#d4d4d4" stroke-width="1.4"/><rect x="921" y="1331" width="12" height="12" stroke="#fff" stroke-width="1.5" fill="none"/><rect x="919" y="1329" width="4" height="4" fill="#fff"/><path d="M942.5 1335.5 h7 l-3.5 4 z" fill="#d4d4d4"/><path d="M960 1332 h15 M960 1337 h12 M960 1342 h15" stroke="#d4d4d4" stroke-width="2"/><rect x="986.0" y="1330.0" width="3.5" height="3.5" fill="#fff"/><rect x="986.0" y="1337.0" width="3.5" height="3.5" fill="#fff"/><rect x="989.5" y="1333.5" width="3.5" height="3.5" fill="#fff"/><rect x="989.5" y="1340.5" width="3.5" height="3.5" fill="#fff"/><rect x="993.0" y="1330.0" width="3.5" height="3.5" fill="#fff"/><rect x="993.0" y="1337.0" width="3.5" height="3.5" fill="#fff"/><rect x="996.5" y="1333.5" width="3.5" height="3.5" fill="#fff"/><rect x="996.5" y="1340.5" width="3.5" height="3.5" fill="#fff"/><rect x="1010" y="1334" width="10" height="10" fill="#50c878"/><path d="M1008 1329 v6 M1005 1332 h6" stroke="#50c878" stroke-width="1.5"/><path d="M1033 1333 l5 -4 h9 v10 l-5 4 h-9 z M1033 1333 h9 v10 M1042 1333 l5 -4" stroke="#d4d4d4" stroke-width="1.3" fill="none"/><rect x="1031" y="1341" width="4" height="4" fill="none" stroke="#f08040"/><path d="M1058.5 1335.5 h7 l-3.5 4 z" fill="#d4d4d4"/><path d="M1080 1343 v-12 M1080 1343 h14" stroke="#fff" stroke-width="1.5"/><path d="M1083 1339 l8 -8" stroke="#fff" stroke-width="1.3"/><rect x="1102" y="1332" width="11" height="11" stroke="#5ab0f0" stroke-width="1.4" fill="none" stroke-dasharray="3 2"/><path d="M1104 1332 l3 -3 h10 v10 l-3 3" stroke="#d4d4d4" stroke-width="1.2" fill="none"/><path d="M1126.5 1335.5 h7 l-3.5 4 z" fill="#d4d4d4"/><path d="M1150 1330 l-7 4 v8 l7 4 l7 -4 v-8 z M1150 1338 v8 M1150 1338 l7 -4 M1150 1338 l-7 -4" stroke="#fff" stroke-width="1.3" fill="none"/><path d="M1166.5 1335.5 h7 l-3.5 4 z" fill="#d4d4d4"/><path d="M1186 1344 l5 -12 l5 12 M1191 1337 v7" stroke="#fff" stroke-width="2" fill="none"/><circle cx="1200" cy="1331" r="2.5" stroke="#fff" fill="none"/><path d="M1210 1344 l5 -12 l5 12" stroke="#d4d4d4" stroke-width="2" fill="none"/><path d="M1220 1330 l-2 5 h3 l-2 4" stroke="#d4d4d4" stroke-width="1"/><path d="M1234 1344 l6 -13 l6 13" stroke="#d4d4d4" stroke-width="2" fill="none"/><path d="M1315.5 1335.5 h7 l-3.5 4 z" fill="#d4d4d4"/><circle cx="1342" cy="1337" r="5" fill="none" stroke="#d4d4d4" stroke-width="3"/><circle cx="1342" cy="1337" r="7.5" fill="none" stroke="#d4d4d4" stroke-width="2" stroke-dasharray="2.5 2.4"/><path d="M1357.5 1335.5 h7 l-3.5 4 z" fill="#d4d4d4"/><path d="M1383 1329 v16 M1375 1337 h16" stroke="#d4d4d4" stroke-width="2"/><rect x="1406" y="1330" width="6" height="14" fill="#d4d4d4"/><path d="M1409 1332 h3 M1409 1335 h3 M1409 1338 h3 M1409 1341 h3" stroke="#3b4453"/><path d="M1482.5 1335.5 h7 l-3.5 4 z" fill="#d4d4d4"/><rect x="1502" y="1331" width="12" height="13" fill="none" stroke="#d4d4d4" stroke-width="1.4"/><path d="M1505 1335 h6 M1505 1338 h6 M1505 1341 h6" stroke="#d4d4d4"/><rect x="1527" y="1331" width="15" height="11" fill="none" stroke="#d4d4d4" stroke-width="1.4"/><rect x="1538" y="1337" width="7" height="6" fill="#d4d4d4"/><path d="M1550.5 1335.5 h7 l-3.5 4 z" fill="#d4d4d4"/><rect x="1568" y="1330" width="6" height="6" fill="none" stroke="#d4d4d4"/><circle cx="1582" cy="1333" r="3" fill="none" stroke="#d4d4d4"/><path d="M1572 1344 l4 -6 l4 6 z" fill="none" stroke="#d4d4d4"/><circle cx="1602" cy="1337" r="7" fill="none" stroke="#fff" stroke-width="1.5"/><path d="M1598 1341 l8 -8" stroke="#fff" stroke-width="1.3"/><rect x="1625" y="1330" width="13" height="9" fill="#3a6bb0"/><rect x="1625" y="1339" width="9" height="6" fill="#f0b020"/><path d="M1635 1340 l3 3 l5 -5" stroke="#50d080" stroke-width="1.8" fill="none"/><path d="M1631 1330 v9 M1625 1334 h13" stroke="#fff" stroke-width="0.8"/><rect x="1655" y="1331" width="15" height="12" fill="none" stroke="#d4d4d4" stroke-width="1.3"/><path d="M1658 1340 l3 -3 M1667 1334 l-3 3" stroke="#d4d4d4" stroke-width="1.2"/><path d="M1681 1331 h16 M1681 1337 h16 M1681 1343 h16" stroke="#d4d4d4" stroke-width="1.8"/></svg><div style="position:absolute;left:0;top:0;width:1707px;height:1355px;box-sizing:border-box;border:1px solid #1a8fd6;border-radius:7px;pointer-events:none;"></div></div></body></html>
